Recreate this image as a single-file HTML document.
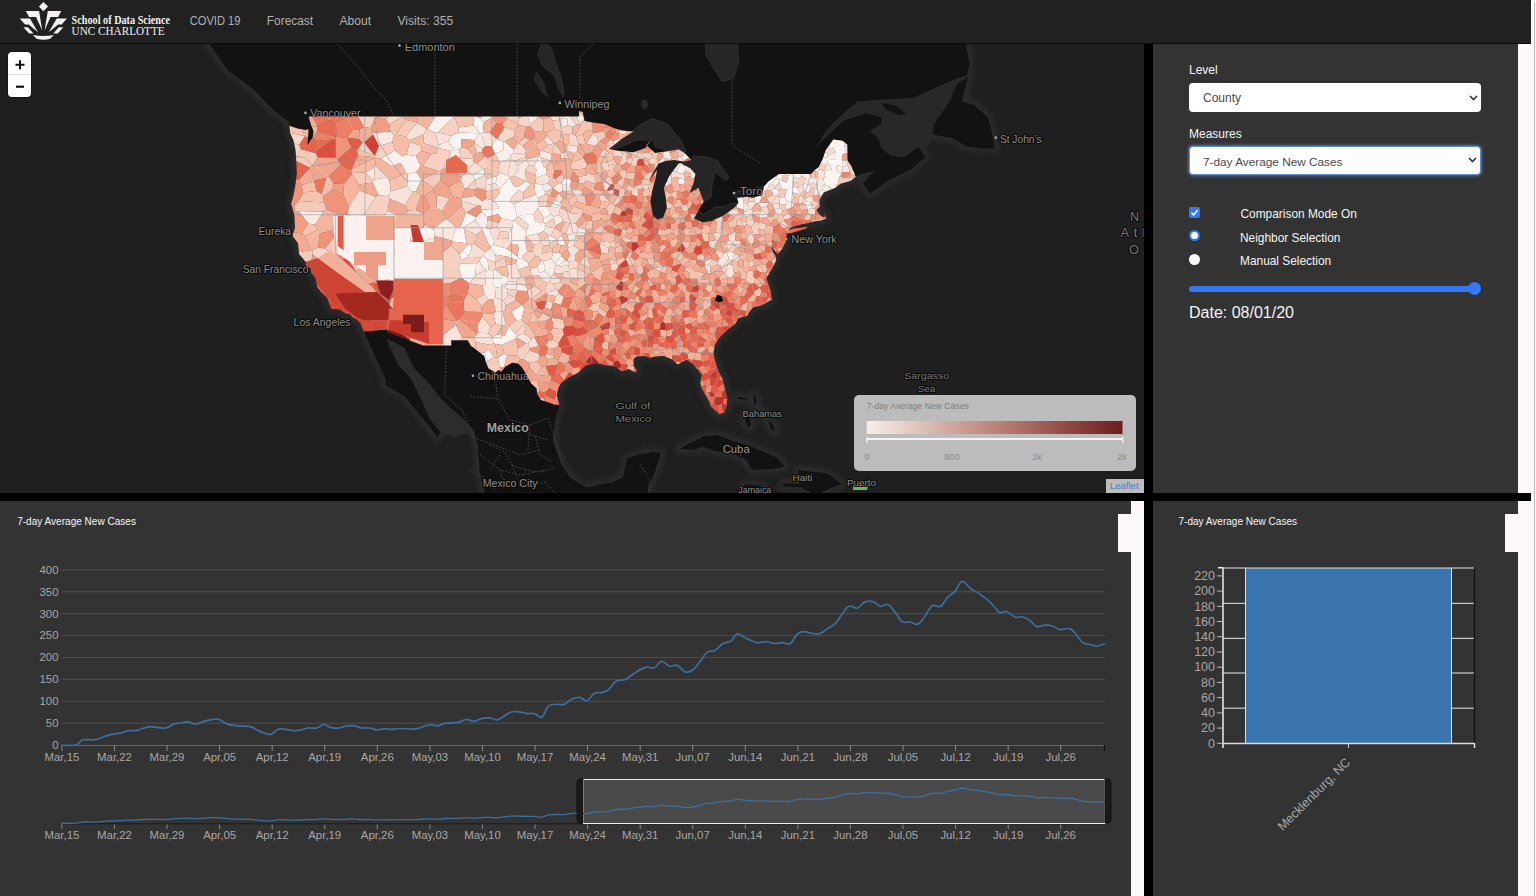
<!DOCTYPE html>
<html><head><meta charset="utf-8">
<style>
html,body{margin:0;padding:0;width:1536px;height:896px;overflow:hidden;background:#fcf8f7;font-family:"Liberation Sans",sans-serif;}
#nav{position:absolute;left:0;top:0;width:1531px;height:43px;background:#212121;border-bottom:1px solid #0d0d0d;}
.nv{position:absolute;top:13px;font-size:12.6px;color:#b3afad;letter-spacing:0.1px;}
.lg1{position:absolute;left:71px;top:12px;font-family:"Liberation Serif",serif;font-size:11.5px;color:#f2eeec;font-weight:bold;letter-spacing:-0.2px;}
.lg2{position:absolute;left:71px;top:23px;font-family:"Liberation Serif",serif;font-size:12px;color:#f2eeec;letter-spacing:-0.3px;}
#map{position:absolute;left:0;top:44px;width:1144px;height:449px;overflow:hidden;background:#1f1f1f;}
#vbar{position:absolute;left:1144px;top:44px;width:9px;height:852px;background:#000;}
#hbar{position:absolute;left:0;top:493px;width:1531px;height:8px;background:#000;}
#rp{position:absolute;left:1153px;top:44px;width:365px;height:449px;background:#333;}
#bl{position:absolute;left:0;top:501px;width:1131px;height:395px;background:#333;}
#br{position:absolute;left:1153px;top:501px;width:365px;height:395px;background:#333;}
.ws{position:absolute;background:#fcf8f7;}
.lbl{position:absolute;color:#f5f5f5;font-size:12px;}
.sel{position:absolute;left:1189px;width:292px;height:29px;background:#fff;border-radius:4px;box-sizing:border-box;}
.sel span{position:absolute;left:14px;top:8px;font-size:12.5px;color:#4a4a4a;}
.chev{position:absolute;right:3px;top:11.5px;}
.ctl{position:absolute;color:#f5f5f5;font-size:11.9px;}
.tk{font-family:"Liberation Sans",sans-serif;font-size:11.4px;fill:#aaa6a4;}
.tkb{font-family:"Liberation Sans",sans-serif;font-size:12.5px;fill:#aaa6a4;}
.ct{position:absolute;color:#f5f5f5;font-size:10.5px;}
</style></head><body>
<div id="nav">
<svg width="480" height="43" style="position:absolute;left:0;top:0">
<g fill="#f4f0ee">
<path d="M43.4,2.1 L48.05,6.6 L43.4,11.25 L38.9,6.6 Z"/>
<path d="M25.8,11 L39.1,11 L42.2,30.5 L36.1,16.9 L29.1,16.9 Z"/>
<path d="M61.2,11 L47.8,11 L44.5,30.5 L50.6,16.9 L58.1,16.9 Z"/>
<path d="M19.7,18.5 L30,18.5 L38,32.35 L28.6,24.4 L25.1,24.4 Z"/>
<path d="M67,18.5 L56.7,18.5 L48.75,32.35 L58.1,24.4 L61.6,24.4 Z"/>
<path d="M23.4,27.2 L27.9,27.2 L33.5,33.5 L29.1,33.5 Z"/>
<path d="M63.3,27.2 L58.8,27.2 L53.2,33.5 L57.7,33.5 Z"/>
<path d="M32.8,34.9 Q43.4,37.2 53.9,34.9 L50.2,38.7 Q43.4,40.6 36.6,38.7 Z"/>
</g>
<g font-family="Liberation Serif, serif" fill="#f4f0ee">
<text x="71.6" y="24" font-size="11.6" font-weight="bold" textLength="98.4" lengthAdjust="spacingAndGlyphs">School of Data Science</text>
<text x="71.6" y="35" font-size="11.8" textLength="93" lengthAdjust="spacingAndGlyphs">UNC CHARLOTTE</text>
</g>
<g font-family="Liberation Sans, sans-serif" fill="#b4b0ae" font-size="12.6">
<text x="189.8" y="25" textLength="50.6" lengthAdjust="spacingAndGlyphs">COVID 19</text>
<text x="266.8" y="25" textLength="46.3" lengthAdjust="spacingAndGlyphs">Forecast</text>
<text x="339.5" y="25" textLength="31.5" lengthAdjust="spacingAndGlyphs">About</text>
<text x="397.5" y="25" textLength="55.7" lengthAdjust="spacingAndGlyphs">Visits: 355</text>
</g>
</svg>
</div>
<div id="map"><svg width="1144" height="449" viewBox="0 44 1144 449" style="position:absolute;left:0;top:0"><rect x="0" y="44" width="1144" height="449" fill="#1f1f1f"/>
<defs><filter id="hb" x="-5%" y="-5%" width="110%" height="110%"><feGaussianBlur stdDeviation="2.5"/></filter></defs>
<g fill="none" stroke="#2c2c2c" stroke-width="9" stroke-linejoin="round" filter="url(#hb)">
<polygon points="207.3,41.1 705.2,41.1 960.9,41.1 965.4,40.0 969.7,65.0 967.0,75.3 951.5,80.6 932.3,91.0 913.2,98.0 878.3,99.7 857.5,101.5 843.5,113.6 826.0,131.0 817.4,145.0 808.7,155.4 821.0,141.5 843.5,120.6 866.0,113.6 881.8,117.0 881.8,124.0 869.6,131.0 878.3,138.0 881.8,148.5 890.5,155.4 904.5,157.2 918.4,146.7 925.3,157.2 911.4,169.3 887.0,181.5 869.6,193.7 862.7,183.3 874.9,171.0 859.2,174.6 855.6,176.9 850.2,181.0 840.4,183.8 835.5,187.8 823.7,192.6 819.3,200.0 819.8,206.7 816.4,210.0 820.3,215.3 824.7,217.9 824.2,214.0 826.2,218.6 821.3,220.6 814.9,221.2 807.6,223.2 801.2,224.5 790.4,227.7 786.5,232.9 786.5,234.9 786.0,241.3 782.1,248.9 777.7,254.2 773.8,249.5 771.3,245.7 772.8,252.1 775.9,256.1 776.2,260.2 773.3,266.5 767.2,277.0 766.9,278.2 766.9,279.4 768.4,284.3 770.8,291.6 771.8,299.4 766.9,302.4 760.0,306.0 753.2,307.2 749.3,312.0 747.3,316.1 738.5,317.9 735.5,323.7 728.7,329.0 722.8,334.2 719.4,337.7 715.0,344.6 713.5,352.6 715.0,360.6 718.4,370.7 722.3,378.0 724.8,388.5 727.4,397.3 726.4,407.2 724.3,412.6 718.9,414.2 716.4,412.0 711.0,406.6 708.6,400.1 705.6,395.1 701.7,388.5 700.3,383.0 701.7,375.2 697.8,370.1 692.9,364.0 686.5,360.0 682.6,361.7 677.7,364.5 672.3,359.4 664.0,356.0 655.2,356.6 649.3,357.7 644.4,356.0 636.6,356.6 633.6,358.9 633.6,366.2 637.0,370.1 635.6,372.4 628.7,369.0 621.9,371.3 614.0,366.2 607.2,365.6 597.4,363.4 592.0,364.0 585.6,365.6 582.7,368.5 577.8,372.9 568.9,377.4 561.1,383.0 558.6,387.4 556.7,395.1 558.2,400.6 559.6,405.5 556.2,415.8 554.2,426.6 553.3,442.6 557.2,453.2 561.1,463.7 569.9,477.2 580.7,484.5 586.6,487.6 604.2,483.4 612.1,482.4 622.8,477.2 624.8,468.9 626.8,458.4 639.5,454.2 654.2,452.1 661.1,453.2 658.1,462.6 654.2,474.1 649.3,484.5 647.3,499.9 647.3,505.0 521.9,505.0 486.0,497.0 479.8,473.2 477.9,445.7 473.8,430.8 461.8,417.4 443.0,401.3 429.6,383.9 413.6,367.8 404.2,347.8 386.8,338.4 389.5,346.4 398.8,365.2 410.9,378.6 421.6,400.0 429.6,418.7 440.3,432.1 437.7,437.5 429.6,426.8 416.2,410.7 404.2,396.0 385.4,385.2 385.4,378.6 374.7,355.8 364.0,331.7 363.9,331.6 362.6,329.6 361.2,323.7 356.3,319.0 352.4,317.3 350.4,314.3 346.0,313.7 339.6,309.6 331.3,309.0 329.3,303.6 326.9,297.6 322.0,292.8 317.1,286.8 316.6,283.1 316.1,278.8 311.2,272.0 311.0,268.3 306.3,265.8 305.8,262.1 299.1,254.0 298.0,243.2 293.1,236.8 292.6,234.9 295.0,227.7 294.5,217.9 294.3,214.7 291.1,203.4 293.1,196.7 295.0,187.8 296.8,174.1 296.0,156.6 295.5,150.2 293.6,140.8 290.1,132.8 289.4,125.8 289.6,122.5 272.0,109.1 253.4,89.2 227.9,70.4 207.3,41.1"/>
<polygon points="679.2,449.0 688.5,443.7 704.2,436.2 717.9,435.2 731.6,440.5 749.3,445.8 766.9,453.2 776.7,457.4 785.0,466.8 771.8,468.9 752.2,469.9 747.3,461.6 732.6,453.2 715.0,451.1 703.2,446.8 692.4,450.0"/>
<polygon points="798.3,469.9 815.9,472.0 826.7,473.1 835.5,479.3 841.9,484.5 832.6,487.6 815.9,494.8 801.2,487.6 782.6,486.5 783.6,482.9 799.2,483.9"/>
<polygon points="743.9,484.5 757.1,485.0 764.9,489.6 755.1,490.7 744.4,487.6"/>
<polygon points="745.3,414.8 749.3,416.9 751.2,424.5 748.3,427.7 745.3,421.2"/>
<polygon points="737.5,396.8 748.3,398.4 746.3,399.5 737.5,399.0"/>
<polygon points="754.2,394.0 757.1,400.6 755.1,406.1 753.2,399.5"/>
<polygon points="760.0,410.4 765.9,413.7 764.9,418.0 762.0,414.8"/>
<polygon points="767.9,420.2 773.8,425.5 774.7,432.0 770.8,428.7"/>
<polygon points="968.0,77.0 962.0,101.5 974.0,105.0 988.0,117.0 991.5,131.0 995.0,148.5 982.8,148.5 967.0,146.7 951.5,138.0 932.3,134.5 934.0,124.0 949.7,101.5 956.7,84.0"/>
</g>
<g fill="#121212">
<polygon points="207.3,41.1 705.2,41.1 960.9,41.1 965.4,40.0 969.7,65.0 967.0,75.3 951.5,80.6 932.3,91.0 913.2,98.0 878.3,99.7 857.5,101.5 843.5,113.6 826.0,131.0 817.4,145.0 808.7,155.4 821.0,141.5 843.5,120.6 866.0,113.6 881.8,117.0 881.8,124.0 869.6,131.0 878.3,138.0 881.8,148.5 890.5,155.4 904.5,157.2 918.4,146.7 925.3,157.2 911.4,169.3 887.0,181.5 869.6,193.7 862.7,183.3 874.9,171.0 859.2,174.6 855.6,176.9 850.2,181.0 840.4,183.8 835.5,187.8 823.7,192.6 819.3,200.0 819.8,206.7 816.4,210.0 820.3,215.3 824.7,217.9 824.2,214.0 826.2,218.6 821.3,220.6 814.9,221.2 807.6,223.2 801.2,224.5 790.4,227.7 786.5,232.9 786.5,234.9 786.0,241.3 782.1,248.9 777.7,254.2 773.8,249.5 771.3,245.7 772.8,252.1 775.9,256.1 776.2,260.2 773.3,266.5 767.2,277.0 766.9,278.2 766.9,279.4 768.4,284.3 770.8,291.6 771.8,299.4 766.9,302.4 760.0,306.0 753.2,307.2 749.3,312.0 747.3,316.1 738.5,317.9 735.5,323.7 728.7,329.0 722.8,334.2 719.4,337.7 715.0,344.6 713.5,352.6 715.0,360.6 718.4,370.7 722.3,378.0 724.8,388.5 727.4,397.3 726.4,407.2 724.3,412.6 718.9,414.2 716.4,412.0 711.0,406.6 708.6,400.1 705.6,395.1 701.7,388.5 700.3,383.0 701.7,375.2 697.8,370.1 692.9,364.0 686.5,360.0 682.6,361.7 677.7,364.5 672.3,359.4 664.0,356.0 655.2,356.6 649.3,357.7 644.4,356.0 636.6,356.6 633.6,358.9 633.6,366.2 637.0,370.1 635.6,372.4 628.7,369.0 621.9,371.3 614.0,366.2 607.2,365.6 597.4,363.4 592.0,364.0 585.6,365.6 582.7,368.5 577.8,372.9 568.9,377.4 561.1,383.0 558.6,387.4 556.7,395.1 558.2,400.6 559.6,405.5 556.2,415.8 554.2,426.6 553.3,442.6 557.2,453.2 561.1,463.7 569.9,477.2 580.7,484.5 586.6,487.6 604.2,483.4 612.1,482.4 622.8,477.2 624.8,468.9 626.8,458.4 639.5,454.2 654.2,452.1 661.1,453.2 658.1,462.6 654.2,474.1 649.3,484.5 647.3,499.9 647.3,505.0 521.9,505.0 486.0,497.0 479.8,473.2 477.9,445.7 473.8,430.8 461.8,417.4 443.0,401.3 429.6,383.9 413.6,367.8 404.2,347.8 386.8,338.4 389.5,346.4 398.8,365.2 410.9,378.6 421.6,400.0 429.6,418.7 440.3,432.1 437.7,437.5 429.6,426.8 416.2,410.7 404.2,396.0 385.4,385.2 385.4,378.6 374.7,355.8 364.0,331.7 363.9,331.6 362.6,329.6 361.2,323.7 356.3,319.0 352.4,317.3 350.4,314.3 346.0,313.7 339.6,309.6 331.3,309.0 329.3,303.6 326.9,297.6 322.0,292.8 317.1,286.8 316.6,283.1 316.1,278.8 311.2,272.0 311.0,268.3 306.3,265.8 305.8,262.1 299.1,254.0 298.0,243.2 293.1,236.8 292.6,234.9 295.0,227.7 294.5,217.9 294.3,214.7 291.1,203.4 293.1,196.7 295.0,187.8 296.8,174.1 296.0,156.6 295.5,150.2 293.6,140.8 290.1,132.8 289.4,125.8 289.6,122.5 272.0,109.1 253.4,89.2 227.9,70.4 207.3,41.1"/>
<polygon points="679.2,449.0 688.5,443.7 704.2,436.2 717.9,435.2 731.6,440.5 749.3,445.8 766.9,453.2 776.7,457.4 785.0,466.8 771.8,468.9 752.2,469.9 747.3,461.6 732.6,453.2 715.0,451.1 703.2,446.8 692.4,450.0"/>
<polygon points="798.3,469.9 815.9,472.0 826.7,473.1 835.5,479.3 841.9,484.5 832.6,487.6 815.9,494.8 801.2,487.6 782.6,486.5 783.6,482.9 799.2,483.9"/>
<polygon points="743.9,484.5 757.1,485.0 764.9,489.6 755.1,490.7 744.4,487.6"/>
<polygon points="745.3,414.8 749.3,416.9 751.2,424.5 748.3,427.7 745.3,421.2"/>
<polygon points="737.5,396.8 748.3,398.4 746.3,399.5 737.5,399.0"/>
<polygon points="754.2,394.0 757.1,400.6 755.1,406.1 753.2,399.5"/>
<polygon points="760.0,410.4 765.9,413.7 764.9,418.0 762.0,414.8"/>
<polygon points="767.9,420.2 773.8,425.5 774.7,432.0 770.8,428.7"/>
</g>
<polygon points="857.5,101.5 913.2,98.0 951.5,80.6 956.7,84.0 949.7,101.5 934.0,124.0 932.3,134.5 925.3,157.2 918.4,146.7 904.5,157.2 890.5,155.4 881.8,148.5 878.3,138.0 869.6,131.0 881.8,124.0 881.8,117.0 866.0,113.6 843.5,120.6 821.0,141.5 808.7,155.4 817.4,145.0 826.0,131.0 843.5,113.6" fill="#282828"/>
<polygon points="473.8,430.8 461.8,417.4 443.0,401.3 429.6,383.9 413.6,367.8 404.2,347.8 386.8,338.4 389.5,346.4 398.8,365.2 410.9,378.6 421.6,400.0 429.6,418.7 440.3,432.1 455.0,437.0" fill="#2c2c2c"/>
<g fill="none" stroke="#4a4a4a" stroke-width="1" stroke-dasharray="1.6 1.8">
<path d="M337.5,44 L352,60 L372,85 L386,100 L394,116"/>
<path d="M435,44 V117"/>
<path d="M517,44 V117"/>
<path d="M593,44 L580,57 V104"/>
<path d="M732,81 V145 L742,152 L760,163"/>
<path d="M446.4,347.5 L444.5,394.7 L462,410 L474,438"/>
<path d="M470,396.6 L497.5,398.6 L495.6,381"/>
<path d="M497.5,398.6 L510,420 L530,425 L548,418"/>
<path d="M474,438 L495,445 L520,455 L540,450"/>
<path d="M480,455 L500,470 L520,475 L545,470"/>
<path d="M500,470 L505,490"/>
<path d="M530,425 L528,450"/>
<path d="M640,465 L650,480 L648,493"/>
<path d="M740,455 L748,462"/>
<path d="M520,430 L535,436 L548,440"/>
<path d="M490,445 L505,452 L512,465 L525,470"/>
<path d="M512,465 L518,480 L530,486 L545,482"/>
<path d="M535,436 L540,455 L552,462"/>
<path d="M470,470 L485,478 L495,490"/>
<path d="M525,470 L540,472 L555,468"/>
<path d="M545,482 L555,493"/>
<path d="M500,455 L490,470"/>
<path d="M548,418 L555,440 L560,455"/>
</g>
<polygon points="968.0,77.0 962.0,101.5 974.0,105.0 988.0,117.0 991.5,131.0 995.0,148.5 982.8,148.5 967.0,146.7 951.5,138.0 932.3,134.5 934.0,124.0 949.7,101.5 956.7,84.0" fill="#121212"/>
<polygon points="881.8,103.0 896.0,106.0 906.2,114.0 900.0,115.4 885.0,109.0" fill="#121212"/>
<polygon points="853.1,484.5 868.8,485.0 866.9,490.1 853.1,490.1" fill="#66bb55"/>
<g fill="#262626" stroke="#303030" stroke-width="1">
<polygon points="705.2,41.1 706.1,55.9 715.0,70.4 721.8,81.4 733.6,78.3 738.5,62.3 737.5,41.1"/>
<polygon points="542.5,41.1 551.3,47.7 555.2,62.3 561.1,76.7 564.0,92.3 563.1,96.9 559.1,89.2 554.2,75.1 542.5,65.6 537.6,54.3"/>
<polygon points="536.6,71.9 543.5,83.0 547.4,96.9 542.5,92.3 534.6,79.8"/>
<polygon points="691.4,160.1 693.4,155.9 708.1,157.3 717.9,160.8 721.8,167.1 728.7,176.9 725.7,181.0 715.0,171.3 714.0,176.9 712.0,185.1 711.0,197.3 703.7,201.4 698.3,187.8 689.5,193.3 693.4,183.8 695.4,174.1 690.5,168.5 681.1,163.2 684.6,161.5"/>
<polygon points="610.7,149.0 639.0,125.7 651.8,118.6 667.9,124.0 682.0,141.8 685.7,151.6 678.6,153.4 655.4,147.0 653.6,140.0 635.7,140.0 621.4,147.0"/>
</g>
<g fill="#1f1f1f" stroke="#333" stroke-width="1">
<polygon points="666.0,160.8 673.8,160.1 684.6,161.5 681.1,163.2 678.7,163.6 672.8,171.3 668.9,176.9 664.0,187.8 666.0,198.7 666.9,208.0 663.0,217.9 657.1,219.6 652.7,214.7 650.3,201.4 652.2,190.6 655.2,179.6 657.1,169.9 649.3,181.0 653.2,172.7 658.5,163.6"/>
<polygon points="698.3,210.7 703.2,214.7 715.0,207.4 724.8,206.7 732.6,203.4 738.5,202.7 735.5,206.7 727.7,212.7 722.8,216.0 711.0,221.2 702.2,222.5 693.9,218.6"/>
<polygon points="737.0,197.9 732.6,193.3 740.4,190.6 752.2,188.5 764.0,186.5 762.0,195.3 752.2,198.0 747.3,196.7"/>
</g>
<ellipse cx="644.5" cy="104.5" rx="3.5" ry="5" fill="#2a2a2a"/>
<g font-family="Liberation Sans, sans-serif">
<text x="404.8" y="50.5" textLength="50" lengthAdjust="spacingAndGlyphs" font-size="10.5" font-weight="normal" fill="#8e8e8e" stroke="#0a0a0a" stroke-width="2.2" paint-order="stroke" stroke-linejoin="round">Edmonton</text>
<text x="310.2" y="116.5" textLength="50.4" lengthAdjust="spacingAndGlyphs" font-size="10.5" font-weight="normal" fill="#8e8e8e" stroke="#0a0a0a" stroke-width="2.2" paint-order="stroke" stroke-linejoin="round">Vancouver</text>
<text x="564.6" y="108" textLength="45" lengthAdjust="spacingAndGlyphs" font-size="10.5" font-weight="normal" fill="#8e8e8e" stroke="#0a0a0a" stroke-width="2.2" paint-order="stroke" stroke-linejoin="round">Winnipeg</text>
<text x="999.9" y="143.2" textLength="41.8" lengthAdjust="spacingAndGlyphs" font-size="10.5" font-weight="normal" fill="#8e8e8e" stroke="#0a0a0a" stroke-width="2.2" paint-order="stroke" stroke-linejoin="round">St John’s</text>
<text x="740" y="195" textLength="39" lengthAdjust="spacingAndGlyphs" font-size="10.5" font-weight="normal" fill="#8e8e8e" stroke="#0a0a0a" stroke-width="2.2" paint-order="stroke" stroke-linejoin="round">Toronto</text>
<text x="791.6" y="242.7" textLength="45" lengthAdjust="spacingAndGlyphs" font-size="10.5" font-weight="normal" fill="#8e8e8e" stroke="#0a0a0a" stroke-width="2.2" paint-order="stroke" stroke-linejoin="round">New York</text>
<text x="258.5" y="235.1" textLength="32.5" lengthAdjust="spacingAndGlyphs" font-size="10.5" font-weight="normal" fill="#8e8e8e" stroke="#0a0a0a" stroke-width="2.2" paint-order="stroke" stroke-linejoin="round">Eureka</text>
<text x="242.7" y="273.3" textLength="65.7" lengthAdjust="spacingAndGlyphs" font-size="10.5" font-weight="normal" fill="#8e8e8e" stroke="#0a0a0a" stroke-width="2.2" paint-order="stroke" stroke-linejoin="round">San Francisco</text>
<text x="293.6" y="326.2" textLength="57" lengthAdjust="spacingAndGlyphs" font-size="10.5" font-weight="normal" fill="#8e8e8e" stroke="#0a0a0a" stroke-width="2.2" paint-order="stroke" stroke-linejoin="round">Los Angeles</text>
<text x="477.5" y="379.6" textLength="51" lengthAdjust="spacingAndGlyphs" font-size="10.5" font-weight="normal" fill="#8e8e8e" stroke="#0a0a0a" stroke-width="2.2" paint-order="stroke" stroke-linejoin="round">Chihuahua</text>
<text x="486.8" y="432" textLength="42" lengthAdjust="spacingAndGlyphs" font-size="12" font-weight="bold" fill="#a0a0a0" stroke="#0a0a0a" stroke-width="2.2" paint-order="stroke" stroke-linejoin="round">Mexico</text>
<text x="482.7" y="487.3" textLength="55" lengthAdjust="spacingAndGlyphs" font-size="10.5" font-weight="normal" fill="#8e8e8e" stroke="#0a0a0a" stroke-width="2.2" paint-order="stroke" stroke-linejoin="round">Mexico City</text>
<text x="615.4" y="408.75" textLength="35" lengthAdjust="spacingAndGlyphs" font-size="9.5" font-weight="normal" fill="#7a7a7a" stroke="#0a0a0a" stroke-width="2.2" paint-order="stroke" stroke-linejoin="round">Gulf of</text>
<text x="615.4" y="421.7" textLength="36" lengthAdjust="spacingAndGlyphs" font-size="9.5" font-weight="normal" fill="#7a7a7a" stroke="#0a0a0a" stroke-width="2.2" paint-order="stroke" stroke-linejoin="round">Mexico</text>
<text x="742.5" y="417.1" textLength="39.5" lengthAdjust="spacingAndGlyphs" font-size="9.5" font-weight="normal" fill="#8e8e8e" stroke="#0a0a0a" stroke-width="2.2" paint-order="stroke" stroke-linejoin="round">Bahamas</text>
<text x="722.7" y="452.9" textLength="27" lengthAdjust="spacingAndGlyphs" font-size="11" font-weight="normal" fill="#9a9a9a" stroke="#0a0a0a" stroke-width="2.2" paint-order="stroke" stroke-linejoin="round">Cuba</text>
<text x="792.5" y="481" textLength="20" lengthAdjust="spacingAndGlyphs" font-size="9.5" font-weight="normal" fill="#8e8e8e" stroke="#0a0a0a" stroke-width="2.2" paint-order="stroke" stroke-linejoin="round">Haiti</text>
<text x="738.3" y="492.5" textLength="33" lengthAdjust="spacingAndGlyphs" font-size="9.5" font-weight="normal" fill="#8e8e8e" stroke="#0a0a0a" stroke-width="2.2" paint-order="stroke" stroke-linejoin="round">Jamaica</text>
<text x="847" y="485.8" textLength="29" lengthAdjust="spacingAndGlyphs" font-size="9.5" font-weight="normal" fill="#8e8e8e" stroke="#0a0a0a" stroke-width="2.2" paint-order="stroke" stroke-linejoin="round">Puerto</text>
<text x="904.2" y="378.6" textLength="45" lengthAdjust="spacingAndGlyphs" font-size="9.5" font-weight="normal" fill="#7a7a7a" stroke="#0a0a0a" stroke-width="2.2" paint-order="stroke" stroke-linejoin="round">Sargasso</text>
<text x="917.7" y="391.7" textLength="17.6" lengthAdjust="spacingAndGlyphs" font-size="9.5" font-weight="normal" fill="#7a7a7a" stroke="#0a0a0a" stroke-width="2.2" paint-order="stroke" stroke-linejoin="round">Sea</text>
<text x="1130" y="220.6" textLength="9" lengthAdjust="spacingAndGlyphs" font-size="12" font-weight="normal" fill="#7a7a7a" stroke="#0a0a0a" stroke-width="2.2" paint-order="stroke" stroke-linejoin="round">N</text>
<text x="1120.5" y="237.3" textLength="8.5" lengthAdjust="spacingAndGlyphs" font-size="12" font-weight="normal" fill="#7a7a7a" stroke="#0a0a0a" stroke-width="2.2" paint-order="stroke" stroke-linejoin="round">A</text>
<text x="1133.5" y="237.3" textLength="4" lengthAdjust="spacingAndGlyphs" font-size="12" font-weight="normal" fill="#7a7a7a" stroke="#0a0a0a" stroke-width="2.2" paint-order="stroke" stroke-linejoin="round">t</text>
<text x="1142" y="237.3" textLength="2" lengthAdjust="spacingAndGlyphs" font-size="12" font-weight="normal" fill="#7a7a7a" stroke="#0a0a0a" stroke-width="2.2" paint-order="stroke" stroke-linejoin="round">l</text>
<text x="1129" y="253.7" textLength="10" lengthAdjust="spacingAndGlyphs" font-size="12" font-weight="normal" fill="#7a7a7a" stroke="#0a0a0a" stroke-width="2.2" paint-order="stroke" stroke-linejoin="round">O</text>
<circle cx="399.5" cy="45.6" r="1.3" fill="#aaa"/>
<circle cx="305.5" cy="112.9" r="1.3" fill="#aaa"/>
<circle cx="559.8" cy="102.9" r="1.3" fill="#aaa"/>
<circle cx="995.9" cy="137.6" r="1.3" fill="#aaa"/>
<circle cx="472.9" cy="375.7" r="1.3" fill="#aaa"/>
<circle cx="734" cy="193" r="1.3" fill="#aaa"/>
<circle cx="786" cy="239" r="1.3" fill="#aaa"/>
</g>
<defs><clipPath id="usclip">
<polygon points="308.7,116.6 579.2,116.6 579.2,110.9 582.7,112.1 584.6,121.1 592.5,122.5 604.2,124.0 615.0,128.4 621.9,130.6 633.6,131.4 621.9,138.7 609.1,149.0 619.9,150.9 625.8,151.6 633.6,152.3 645.4,148.0 651.3,139.4 646.4,145.2 655.2,153.0 668.9,150.9 678.7,149.5 684.6,153.0 691.4,160.1 684.6,161.5 673.8,160.1 666.0,160.8 658.5,163.6 653.2,172.7 649.3,181.0 657.1,169.9 655.2,179.6 652.2,190.6 650.3,201.4 652.7,214.7 657.1,219.6 663.0,217.9 666.9,208.0 666.0,198.7 664.0,187.8 668.9,176.9 672.8,171.3 678.7,163.6 681.1,163.2 690.5,168.5 695.4,174.1 693.4,183.8 689.5,193.3 698.3,187.8 703.7,201.4 698.3,210.7 693.9,218.6 702.2,222.5 711.0,221.2 722.8,216.0 727.7,212.7 735.5,206.7 738.5,202.7 737.0,197.9 747.3,196.7 752.2,198.0 762.0,195.3 764.0,186.5 768.9,181.0 779.1,174.1 811.0,174.1 814.9,169.9 818.8,167.1 822.8,158.7 825.7,150.2 833.3,139.4 842.4,140.8 847.3,144.5 847.5,160.8 851.2,165.7 854.1,172.7 855.6,176.9 850.2,181.0 840.4,183.8 835.5,187.8 823.7,192.6 819.3,200.0 819.8,206.7 816.4,210.0 820.3,215.3 824.7,217.9 824.2,214.0 826.2,218.6 821.3,220.6 814.9,221.2 807.6,223.2 801.2,224.5 790.4,227.7 786.5,232.9 786.5,234.9 786.0,241.3 782.1,248.9 777.7,254.2 773.8,249.5 771.3,245.7 772.8,252.1 775.9,256.1 776.2,260.2 773.3,266.5 767.2,277.0 766.9,278.2 766.9,279.4 768.4,284.3 770.8,291.6 771.8,299.4 766.9,302.4 760.0,306.0 753.2,307.2 749.3,312.0 747.3,316.1 738.5,317.9 735.5,323.7 728.7,329.0 722.8,334.2 719.4,337.7 715.0,344.6 713.5,352.6 715.0,360.6 718.4,370.7 722.3,378.0 724.8,388.5 727.4,397.3 726.4,407.2 724.3,412.6 718.9,414.2 716.4,412.0 711.0,406.6 708.6,400.1 705.6,395.1 701.7,388.5 700.3,383.0 701.7,375.2 697.8,370.1 692.9,364.0 686.5,360.0 682.6,361.7 677.7,364.5 672.3,359.4 664.0,356.0 655.2,356.6 649.3,357.7 644.4,356.0 636.6,356.6 633.6,358.9 633.6,366.2 637.0,370.1 635.6,372.4 628.7,369.0 621.9,371.3 614.0,366.2 607.2,365.6 597.4,363.4 592.0,364.0 585.6,365.6 582.7,368.5 577.8,372.9 568.9,377.4 561.1,383.0 558.6,387.4 556.7,395.1 558.2,400.6 559.6,405.5 554.2,404.4 549.3,402.8 541.0,400.1 537.1,394.0 536.6,388.5 530.7,383.0 526.8,375.2 521.9,367.3 518.0,363.4 512.1,362.8 505.2,366.8 501.3,371.8 498.4,370.1 495.4,372.4 488.6,368.5 486.6,364.0 484.2,356.0 477.8,350.9 470.9,345.8 467.7,340.2 451.2,340.2 451.2,345.4 423.2,345.4 386.6,332.0 387.4,329.3 363.9,331.6 362.6,329.6 361.2,323.7 356.3,319.0 352.4,317.3 350.4,314.3 346.0,313.7 339.6,309.6 331.3,309.0 329.3,303.6 326.9,297.6 322.0,292.8 317.1,286.8 316.6,283.1 316.1,278.8 311.2,272.0 311.0,268.3 306.3,265.8 305.8,262.1 299.1,254.0 298.0,243.2 293.1,236.8 292.6,234.9 295.0,227.7 294.5,217.9 294.3,214.7 291.1,203.4 293.1,196.7 295.0,187.8 296.8,174.1 296.0,156.6 295.5,150.2 293.6,140.8 290.1,132.8 289.4,125.8 297.5,128.4 305.3,129.9 308.7,129.2 307.3,145.2 312.7,137.2 313.6,131.4 310.7,124.0"/>
<polygon points="786.5,233.3 791.4,232.9 798.3,231.0 806.1,228.4 807.6,226.4 801.2,227.7 793.4,228.4 788.5,230.3"/>
</clipPath></defs>
<g clip-path="url(#usclip)">
<path fill="#fcf4f1" stroke="#fff" stroke-opacity="0.22" stroke-width="0.5" d="M785.6 105.3L789.7 109.8L792.1 109.5L794.8 106.4L791.5 100.0L785.3 100.0zM798.4 106.5L800.7 108.1L804.8 106.2L804.8 106.2L805.4 100.0L798.8 100.0zM865.4 106.0L868.6 112.0L878.3 100.0L869.2 100.0zM813.8 115.2L815.7 116.4L818.5 114.1L818.3 107.8L817.7 107.0L812.4 112.3zM822.5 110.5L818.3 107.8L818.5 114.1L822.1 113.2zM839.7 108.7L837.9 109.4L836.5 113.5L840.6 116.9L843.5 113.9zM866.6 115.0L868.5 113.5L868.6 112.0L865.4 106.0L862.0 106.2L861.5 106.8L862.5 114.4zM868.6 112.0L868.5 113.5L880.0 116.9L880.0 100.0L878.3 100.0zM834.0 114.7L829.9 114.9L828.6 116.4L828.9 119.7L835.5 120.7L835.8 120.5zM840.6 116.9L836.5 113.5L834.0 114.7L835.8 120.5L840.2 120.7L841.1 118.7zM481.2 133.1L482.9 132.2L483.8 122.2L480.4 118.1L473.9 116.1L473.8 125.4L479.9 133.2zM789.8 128.8L797.8 126.6L796.7 122.0L791.9 120.5L789.7 122.4L788.5 125.5zM829.5 126.8L833.5 126.4L835.5 120.7L828.9 119.7L828.8 120.3L828.8 126.4zM850.0 127.7L854.0 127.4L854.0 127.4L855.0 121.2L854.4 120.6L847.6 120.5L846.9 124.8zM809.1 132.7L814.5 134.9L814.8 127.1L814.2 126.5L808.4 126.6L808.0 126.8zM843.3 131.1L840.7 126.3L837.4 127.5L837.2 132.6L840.7 134.9zM840.7 126.3L843.3 131.1L847.3 132.0L850.0 127.7L846.9 124.8L840.9 125.9zM848.0 135.0L852.0 136.4L853.3 134.8L854.0 127.4L850.0 127.7L847.3 132.0zM854.0 127.4L854.0 127.4L853.3 134.8L858.1 134.4L859.9 131.1L859.1 129.0zM859.9 131.1L865.6 134.4L865.6 127.5L862.1 126.1L859.1 129.0zM461.3 139.2L475.0 139.9L479.7 133.3L459.1 132.6zM837.2 132.6L833.1 135.4L832.8 139.3L834.7 140.7L838.6 140.3L841.3 137.2L840.7 134.9zM841.3 137.2L845.2 137.7L848.0 135.0L847.3 132.0L843.3 131.1L840.7 134.9zM858.1 134.4L858.8 137.5L862.8 139.8L865.5 139.6L866.3 135.2L865.6 134.4L859.9 131.1zM461.2 147.4L461.3 139.2L459.1 132.6L458.7 132.2L450.9 136.1L448.6 141.0L453.6 149.9L459.1 149.8zM760.0 140.9L760.3 142.4L765.1 144.8L767.9 139.3L765.6 136.3L760.4 140.0zM790.6 141.0L788.8 144.6L790.3 148.6L795.3 148.1L797.2 145.5L794.5 140.5zM815.1 139.3L816.0 142.3L821.8 147.4L824.0 145.3L823.2 138.7L822.4 138.0L815.9 138.0zM824.0 145.3L827.3 145.2L831.6 139.6L828.4 138.5L823.2 138.7zM831.6 139.6L827.3 145.2L830.2 148.0L833.5 148.3L834.7 146.5L834.7 140.7L832.8 139.3zM834.7 140.7L834.7 146.5L840.6 147.4L843.0 145.7L838.6 140.3zM838.6 140.3L843.0 145.7L844.1 145.8L846.5 141.6L845.2 137.7L841.3 137.2zM495.3 154.1L503.3 150.2L503.2 142.1L497.1 138.6L496.3 138.6L491.5 146.3L495.2 154.1zM795.3 148.1L796.4 152.1L798.5 153.8L801.5 154.2L803.0 153.7L804.0 152.3L802.8 146.1L797.2 145.5zM817.6 150.7L813.8 146.6L811.0 147.5L810.4 151.1L814.5 153.3zM834.7 146.5L833.5 148.3L834.9 152.6L835.9 153.3L839.2 152.6L840.6 147.4zM844.1 145.8L843.0 145.7L840.6 147.4L839.2 152.6L842.7 154.3L846.2 152.9L844.6 146.3zM853.2 152.1L860.1 153.8L861.8 152.5L856.3 144.9L854.5 144.8L853.2 146.8L852.8 151.8zM776.8 157.1L776.3 150.6L773.0 150.5L770.5 152.6L770.5 157.1L771.8 158.1L776.4 157.4zM814.5 157.3L814.5 153.3L810.4 151.1L807.4 152.3L811.1 158.7L813.1 158.5zM820.0 158.5L827.2 157.2L827.5 155.4L826.6 153.5L821.3 149.6L820.6 150.1zM839.2 152.6L835.9 153.3L836.0 159.2L836.6 160.0L841.7 159.9L842.7 154.3zM852.2 160.7L854.6 159.3L853.2 152.1L852.8 151.8L848.5 153.8L848.7 157.9zM854.6 159.3L859.2 159.5L859.3 159.4L860.1 153.8L853.2 152.1zM867.7 158.8L865.6 153.0L864.2 151.8L861.8 152.5L860.1 153.8L859.3 159.4L864.5 161.6zM867.7 158.8L880.0 161.2L880.0 152.1L865.6 153.0zM534.0 166.0L536.4 168.9L543.4 166.8L541.3 157.7L539.5 155.7zM771.8 158.1L770.9 164.1L771.0 164.4L774.3 166.3L777.8 164.5L776.4 157.4zM793.3 165.2L796.9 163.2L793.6 159.1L792.9 158.9L787.4 163.2zM813.1 158.5L811.1 158.7L807.7 160.6L807.6 163.9L812.6 165.6L814.3 164.5zM836.6 160.0L836.0 159.2L828.1 159.0L827.6 163.5L830.5 165.5L835.8 163.5zM842.1 160.2L841.7 159.9L836.6 160.0L835.8 163.5L837.0 165.3L842.1 166.2zM670.9 160.6L665.2 165.3L665.6 170.0L671.0 170.9L672.4 162.2zM781.4 170.8L783.4 172.4L788.8 168.9L785.9 163.6L784.5 163.2L782.0 165.2zM807.6 163.9L806.2 165.5L805.5 169.4L809.4 172.4L811.5 171.1L812.6 165.6zM814.3 164.5L812.6 165.6L811.5 171.1L817.2 171.5L819.0 169.3L818.4 165.6zM837.0 165.3L835.8 163.5L830.5 165.5L831.6 170.1L831.7 170.2L832.7 170.3L836.1 169.8zM476.0 179.7L484.6 175.0L484.4 169.2L483.8 169.1L472.4 175.4L474.8 179.5L475.0 179.6zM545.3 167.5L543.4 166.8L536.4 168.9L535.6 175.4L536.2 178.0L546.0 173.8L546.5 169.2zM750.2 170.1L752.3 178.0L754.2 178.7L756.4 176.6L757.3 170.3L755.8 168.9zM765.5 174.5L768.1 180.3L774.1 177.0L770.4 172.9L766.2 172.3zM770.4 172.9L774.1 177.0L776.0 177.5L777.9 171.8L774.8 169.3zM798.7 170.6L791.0 170.4L790.4 175.1L793.3 177.3L794.7 176.7zM801.7 176.1L800.1 170.7L799.1 170.3L798.7 170.6L794.7 176.7L798.9 178.4zM831.7 170.2L831.6 170.1L824.4 170.3L824.0 170.7L825.4 176.9L829.3 177.1zM832.7 170.3L831.7 170.2L829.3 177.1L831.3 178.7L836.6 177.0zM840.7 176.0L841.3 173.3L836.1 169.8L832.7 170.3L836.6 177.0L839.3 176.8zM866.9 173.6L866.8 173.4L859.2 173.4L857.9 176.8L860.1 179.6L866.2 176.7zM421.6 179.8L421.6 179.8L416.4 172.1L407.7 174.1L407.1 186.4L413.1 191.4L415.7 191.5zM570.1 185.0L571.2 181.2L570.4 179.0L564.1 179.1L561.1 183.6L561.9 184.8zM684.5 179.2L678.7 178.4L677.3 182.8L679.4 184.6L683.8 183.7L685.0 182.2zM741.7 181.1L744.8 183.1L748.8 178.3L745.8 175.7L741.3 176.3zM776.0 177.5L774.1 177.0L768.1 180.3L767.9 181.9L769.4 183.6L772.0 184.2L776.3 177.9zM793.3 177.3L790.4 175.1L788.3 175.7L786.7 182.0L792.8 181.7zM824.4 185.1L829.7 186.8L831.8 183.9L831.3 178.7L829.3 177.1L825.4 176.9L823.5 178.2zM837.7 184.5L839.3 176.8L836.6 177.0L831.3 178.7L831.8 183.9L836.7 184.8zM510.0 177.6L499.4 189.3L500.3 191.3L507.5 194.8L512.5 184.5zM523.1 192.4L531.0 183.9L526.1 181.2L525.8 181.2L516.9 187.2L518.5 189.8zM767.1 190.3L769.4 183.6L767.9 181.9L762.7 183.3L761.9 184.0L762.8 189.1L765.8 191.0zM781.6 189.0L785.9 189.3L785.7 182.6L781.0 179.9L779.8 180.1L779.1 182.2zM792.8 181.7L786.7 182.0L785.7 182.6L785.9 189.3L786.7 190.1L791.0 190.3L793.1 187.9L793.4 182.5zM809.2 184.6L804.7 183.7L803.1 184.8L803.9 190.6L808.1 192.4L811.2 188.5zM836.7 184.8L831.8 183.9L829.7 186.8L829.7 186.9L835.0 190.9L836.1 190.8zM516.9 187.2L512.5 184.5L507.5 194.8L509.9 199.6L518.5 189.8zM545.1 194.3L545.0 192.1L541.9 184.9L535.1 183.3L534.4 183.8L535.4 194.8L538.1 198.1zM787.2 200.9L787.9 200.8L792.3 193.0L792.2 192.2L791.0 190.3L786.7 190.1L784.3 197.1zM793.1 187.9L791.0 190.3L792.2 192.2L800.1 194.2L800.4 193.8L797.0 188.0zM827.2 195.3L827.2 193.9L822.1 188.5L819.4 193.0L819.6 194.8L819.7 195.0L827.1 195.3zM510.5 202.2L509.9 199.6L507.5 194.8L500.3 191.3L493.8 200.6L499.0 206.8zM743.0 203.8L744.0 202.9L742.3 197.5L740.8 196.3L736.2 199.5L735.0 202.6L736.7 204.7zM792.4 201.9L794.0 197.5L792.3 193.0L787.9 200.8zM842.5 204.1L846.0 197.2L845.9 197.0L837.9 197.4L837.4 199.9L841.7 204.6zM560.3 202.5L555.3 200.2L550.3 206.2L560.2 208.3L560.5 208.0L561.4 205.4zM743.2 209.6L743.0 203.8L736.7 204.7L736.8 207.4zM804.6 202.9L807.6 209.4L811.1 208.0L811.5 202.8L805.7 201.2zM487.3 217.0L498.3 213.9L498.5 208.7L481.3 209.8L481.3 211.8zM510.5 202.2L499.0 206.8L498.5 208.7L498.3 213.9L501.2 218.4L513.4 220.6L514.0 220.1L517.2 216.4L513.9 204.4zM551.0 214.2L548.3 207.2L546.5 206.5L539.0 206.5L537.9 207.5L537.8 207.9L544.1 218.1zM476.1 217.1L466.6 212.5L465.9 212.4L460.5 227.0L462.7 227.6L475.4 220.1zM528.6 224.9L534.7 223.0L535.4 222.0L533.7 214.7L521.5 215.1L518.2 216.4zM544.8 224.1L542.9 222.2L535.4 222.0L534.7 223.0L537.2 233.4L538.1 233.7L543.6 231.1L545.8 226.8zM386.2 231.8L405.4 234.3L402.4 223.9L401.0 223.7L385.2 228.3zM537.2 233.4L534.7 223.0L528.6 224.9L526.4 231.6L526.4 236.3zM410.1 238.1L411.4 240.4L415.6 243.8L434.1 237.8L434.9 236.0L433.3 228.4L424.5 225.3L423.2 226.0zM460.5 227.0L456.3 227.3L451.5 240.4L451.8 241.6L466.6 243.3L463.8 228.7L462.7 227.6zM549.0 236.3L548.2 237.8L549.9 242.9L556.4 239.5L550.5 235.8zM471.3 245.0L467.8 244.4L459.6 254.1L461.3 260.6L467.6 256.9L471.9 248.8zM504.7 256.2L505.0 255.8L506.9 248.7L493.5 244.6L490.9 246.4L490.4 247.7L495.3 254.5zM505.0 255.8L516.8 260.1L518.1 258.4L517.4 256.5L507.0 248.7L506.9 248.7zM434.9 253.0L421.4 253.1L420.0 256.4L423.4 269.7L429.4 273.6L434.2 273.0L440.8 262.3L438.8 255.8zM480.6 257.4L479.5 261.3L485.5 270.1L486.2 270.3L488.6 269.9L487.6 259.5L483.4 255.7zM528.7 263.2L521.8 258.0L518.1 258.4L516.8 260.1L515.9 263.5L518.6 269.5L528.6 265.7zM555.8 265.4L558.1 265.4L565.3 260.2L561.4 255.7L555.1 263.0zM458.6 266.8L461.2 277.8L469.1 283.3L469.6 283.2L475.2 275.5L476.2 264.0L460.5 263.7zM541.3 260.4L537.0 266.8L540.2 273.0L544.3 270.7L545.2 267.2L542.4 261.1zM423.4 269.7L409.2 272.4L419.8 287.5L429.4 273.6zM408.8 272.2L402.2 276.6L412.6 293.8L419.1 292.1L419.8 287.5L409.2 272.4zM516.1 320.2L521.6 319.8L524.2 308.9L522.9 304.8L522.5 304.7L511.3 311.3zM502.4 345.0L506.1 342.8L504.9 335.6L496.6 334.4L492.3 337.4L493.3 343.0L495.4 343.9zM504.9 335.6L506.1 342.8L506.8 342.8L515.5 338.8L516.4 337.5L516.6 336.6L514.9 333.1L508.9 326.3L508.2 326.3zM484.2 352.6L487.7 360.9L493.6 356.9L488.8 349.2z"/>
<path fill="#fbf0eb" stroke="#fff" stroke-opacity="0.22" stroke-width="0.5" d="M738.1 113.2L742.6 114.1L744.2 112.8L743.1 108.4L740.1 105.8L736.3 110.8zM798.3 113.9L795.2 113.3L790.7 117.5L791.9 120.5L796.7 122.0L799.3 118.8zM454.2 107.7L449.9 100.0L448.3 100.0L438.0 112.5L427.0 128.9L435.5 133.1L438.0 132.3L454.3 116.3zM560.7 119.5L562.1 127.9L567.2 125.0L567.4 119.4L561.8 118.0zM841.1 118.7L840.2 120.7L840.9 125.9L846.9 124.8L847.6 120.5L846.9 119.2zM743.7 125.8L740.9 128.5L741.1 131.3L746.8 133.8L748.3 133.0L749.6 128.4L744.2 125.9zM865.6 134.4L866.3 135.2L874.4 130.8L868.7 126.5L865.6 127.5zM782.5 145.0L784.7 138.7L782.7 137.5L778.7 140.2L779.5 145.9L781.0 146.0zM865.9 140.1L865.5 139.6L862.8 139.8L856.7 144.7L865.6 147.5L865.7 147.3zM503.3 150.2L510.7 155.0L512.9 152.9L513.9 149.5L504.7 141.6L503.2 142.1zM820.6 150.1L821.3 149.6L821.8 147.4L816.0 142.3L813.8 146.6L817.6 150.7zM499.9 163.1L510.5 158.4L510.7 155.0L503.3 150.2L495.3 154.1zM685.4 152.7L681.2 156.8L683.4 161.0L689.5 157.4L686.2 153.0zM763.6 157.2L763.8 150.7L759.4 149.5L755.0 152.0L755.0 153.5L763.0 157.7zM827.2 157.2L828.1 159.0L836.0 159.2L835.9 153.3L834.9 152.6L827.5 155.4zM402.2 156.2L395.0 150.2L381.1 158.8L391.6 166.3L400.6 162.9zM405.9 172.8L407.7 174.1L416.4 172.1L420.7 166.1L416.0 156.2L406.5 154.4L402.2 156.2L400.6 162.9zM758.6 161.6L753.7 155.4L751.8 157.0L753.5 163.1L755.6 164.1L757.9 162.7zM826.5 164.1L827.6 163.5L828.1 159.0L827.2 157.2L820.0 158.5L819.6 158.9L820.0 163.7zM678.5 173.6L683.2 173.7L685.3 171.0L684.8 166.1L682.7 164.8L679.2 165.6L676.5 171.2zM842.9 167.3L842.1 166.2L837.0 165.3L836.1 169.8L841.3 173.3L842.3 172.2zM867.1 172.2L878.8 164.8L864.8 165.9L864.7 166.1zM788.8 168.9L783.4 172.4L784.1 174.5L788.3 175.7L790.4 175.1L791.0 170.4L790.6 169.8zM495.6 183.3L499.3 189.1L499.4 189.3L510.0 177.6L510.0 177.3L507.9 175.6L499.4 172.6L497.1 175.9zM733.3 177.4L730.8 178.7L730.1 184.2L736.3 184.0L736.8 182.5L735.3 179.2zM779.8 180.1L776.3 177.9L772.0 184.2L774.7 186.7L779.1 182.2zM758.2 190.9L754.6 190.4L754.4 190.6L753.7 195.5L754.2 196.2L761.0 197.1zM777.4 196.3L778.3 190.2L774.9 187.9L771.8 190.7L772.9 194.7L776.5 196.6zM857.8 190.4L860.0 195.6L863.5 197.2L864.6 196.7L864.4 189.7zM537.9 207.5L539.0 206.5L538.1 198.1L535.4 194.8L523.8 199.0L523.8 199.0L529.1 204.8zM761.9 197.7L761.0 197.1L754.2 196.2L754.5 201.7L755.9 203.2L758.6 203.5L759.4 202.5zM779.5 203.8L779.8 204.2L785.6 203.9L787.2 200.9L784.3 197.1L780.0 197.5zM523.8 199.0L513.9 204.4L517.2 216.4L518.2 216.4L521.5 215.1L529.1 204.8zM521.5 215.1L533.7 214.7L537.8 207.9L537.9 207.5L529.1 204.8zM401.0 223.7L402.4 223.9L404.5 217.6L387.5 210.9L384.3 216.5zM487.5 219.7L487.3 217.0L481.3 211.8L476.1 217.1L475.4 220.1L482.6 229.7L486.3 228.2zM405.4 216.5L404.5 217.6L402.4 223.9L405.4 234.3L406.9 236.7L410.1 238.1L423.2 226.0zM526.2 236.6L526.4 236.3L526.4 231.6L514.0 220.1L513.4 220.6L512.3 228.5L523.7 237.4L524.7 237.3zM486.3 228.2L482.6 229.7L482.3 230.2L488.8 244.4L490.9 246.4L493.5 244.6L494.5 241.8L489.2 229.1zM510.7 244.1L516.7 244.0L523.7 237.4L512.3 228.5L508.8 232.3L508.5 238.6zM518.8 247.8L527.1 251.0L524.7 237.3L523.7 237.4L516.7 244.0zM517.4 256.5L518.1 258.4L521.8 258.0L527.3 251.3L527.1 251.0L518.8 247.8zM561.4 255.7L561.2 254.2L559.4 253.0L552.8 252.3L551.7 259.1L555.1 263.0zM734.3 254.0L733.2 252.5L727.7 251.5L726.9 252.2L729.0 259.5L731.8 260.3L732.2 260.1zM389.6 266.5L395.8 274.6L399.3 277.1L402.2 276.6L408.8 272.2L408.0 266.1L388.8 259.6zM494.0 270.4L492.7 284.6L493.6 285.1L502.4 275.3L495.3 269.6zM394.7 289.2L399.3 277.1L395.8 274.6L388.5 279.2L389.1 286.0zM502.4 275.3L493.6 285.1L496.1 287.4L505.1 286.6L508.2 281.0L507.4 276.7zM499.4 366.0L500.8 366.9L504.0 367.1L507.2 355.4L504.3 353.6L497.7 357.7zM475.6 377.9L468.8 382.0L476.3 388.5L478.4 387.6zM460.0 393.5L461.0 393.1L461.2 388.7L448.6 377.9L446.8 377.6L448.3 388.7z"/>
<path fill="#fbebe5" stroke="#fff" stroke-opacity="0.22" stroke-width="0.5" d="M558.2 103.6L566.9 109.2L568.7 109.5L569.7 108.7L571.5 100.0L556.4 100.0zM715.5 106.8L719.9 105.7L722.9 100.0L714.0 100.0zM719.9 105.7L723.2 110.0L729.6 106.4L727.9 100.0L722.9 100.0zM736.3 110.8L740.1 105.8L739.5 104.2L730.0 106.8L731.6 110.3zM809.9 107.5L812.0 112.1L812.4 112.3L817.7 107.0L817.6 100.0L816.6 100.0zM861.2 114.6L862.5 114.4L861.5 106.8L857.4 108.1L855.7 112.1L855.8 112.2zM492.3 117.6L492.1 111.9L488.8 109.4L480.4 118.1L483.8 122.2zM580.7 123.6L584.4 118.4L579.5 112.1L575.5 116.1zM745.5 113.4L744.5 112.8L744.2 112.8L742.6 114.1L741.5 119.9L741.7 120.1L748.8 120.0zM695.1 121.2L690.1 120.4L688.0 126.9L688.7 127.5L696.8 127.1zM808.0 126.8L808.4 126.6L808.4 120.8L808.0 119.1L805.6 117.8L802.0 119.0L805.9 127.0zM868.3 121.8L868.7 126.5L874.4 130.8L880.0 130.7L880.0 121.6zM459.1 132.6L479.7 133.3L479.9 133.2L473.8 125.4L458.4 127.6L458.7 132.2zM696.8 127.1L688.7 127.5L689.2 133.0L689.6 133.4L694.7 135.1L697.2 132.7L697.0 127.2zM853.3 134.8L852.0 136.4L853.3 139.9L858.8 137.5L858.1 134.4zM451.5 150.9L453.6 149.9L448.6 141.0L438.6 145.0L438.1 147.9L438.1 148.0zM620.6 144.4L622.3 146.4L627.2 146.8L629.0 143.3L628.7 142.1L626.1 138.7L621.1 141.5zM704.7 145.9L704.3 143.4L701.5 140.0L695.8 141.3L695.5 142.5L696.5 144.2L702.8 147.9zM726.4 147.5L733.3 145.7L733.4 145.6L731.7 141.8L725.9 145.1zM803.4 145.3L810.1 146.4L811.0 140.2L809.6 139.9L804.0 143.3zM696.5 144.2L695.5 142.5L690.2 145.8L691.1 149.1L695.1 151.4zM752.8 149.3L755.0 152.0L759.4 149.5L759.2 144.2L753.3 145.9L752.8 147.8zM804.0 152.3L807.4 152.3L810.4 151.1L811.0 147.5L810.1 146.4L803.4 145.3L802.8 146.1zM827.3 145.2L824.0 145.3L821.8 147.4L821.3 149.6L826.6 153.5L830.2 148.0zM846.2 152.9L848.5 153.8L852.8 151.8L853.2 146.8L844.6 146.3zM453.6 149.9L451.5 150.9L444.0 168.7L444.8 168.7L459.7 160.8L460.6 158.3L459.1 149.8zM670.8 159.6L671.1 158.6L670.5 152.7L670.3 152.5L664.9 151.3L663.0 153.3L663.4 157.1L664.9 158.1zM721.2 151.7L718.8 158.2L721.3 161.6L726.6 156.6L726.3 152.8L725.6 152.1zM663.4 157.1L658.5 161.7L659.2 162.4L663.9 164.3L664.9 158.1zM847.8 165.3L847.9 165.2L845.5 160.5L842.1 160.2L842.1 166.2L842.9 167.3zM753.5 163.1L747.4 165.4L748.3 169.1L750.2 170.1L755.8 168.9L755.6 164.1zM771.0 164.4L766.0 171.7L766.2 172.3L770.4 172.9L774.8 169.3L774.3 166.3zM797.4 163.4L796.9 163.2L793.3 165.2L790.6 169.8L791.0 170.4L798.7 170.6L799.1 170.3zM697.6 172.6L692.7 170.6L690.4 173.2L690.3 176.0L692.7 179.0L693.2 178.9zM738.7 171.5L734.2 171.3L733.3 177.4L735.3 179.2L741.1 176.2zM781.4 170.8L777.9 171.8L776.0 177.5L776.3 177.9L779.8 180.1L781.0 179.9L784.1 174.5L783.4 172.4zM801.7 176.1L805.4 178.3L809.2 175.5L809.4 172.4L805.5 169.4L800.1 170.7zM856.4 177.2L857.9 176.8L859.2 173.4L858.4 171.0L855.1 168.7L850.1 172.0L855.6 176.9zM373.5 180.3L372.7 182.5L378.2 195.5L388.4 195.9L390.7 191.2L389.4 180.4L387.1 177.0L374.2 179.6zM485.7 185.2L495.6 183.3L497.1 175.9L486.6 178.9L485.7 185.2zM665.9 186.3L670.3 184.0L663.9 178.1L661.0 180.6L661.0 182.3zM805.4 178.3L804.7 183.7L809.2 184.6L811.7 182.6L812.4 178.2L809.2 175.5zM818.9 178.1L818.3 177.7L812.4 178.2L811.7 182.6L817.3 185.0zM547.6 183.3L541.9 184.9L545.0 192.1L552.6 188.1zM562.6 190.5L561.9 184.8L561.1 183.6L558.7 183.1L552.8 188.2L559.1 193.1zM740.2 191.7L747.2 191.4L749.7 188.9L749.1 187.5L745.0 184.2L739.0 190.1zM822.1 188.5L827.2 193.9L829.7 186.9L829.7 186.8L824.4 185.1L822.0 186.6zM735.2 190.7L732.3 194.1L736.2 199.5L740.8 196.3L740.2 191.7L739.0 190.1L737.9 189.7zM814.1 188.9L814.2 195.1L819.6 194.8L819.4 193.0L816.0 188.0zM846.0 192.4L845.9 197.0L846.0 197.2L847.4 198.0L854.1 197.0L853.4 191.2L848.8 191.4zM842.5 204.1L848.4 204.7L850.1 203.0L847.4 198.0L846.0 197.2zM759.4 202.5L758.6 203.5L761.5 208.0L767.0 206.0L769.4 202.8zM786.7 209.8L793.2 207.0L794.1 203.7L792.4 201.9L787.9 200.8L787.2 200.9L785.6 203.9L786.2 209.5zM299.3 212.1L308.2 223.4L315.2 224.7L323.4 211.5zM544.8 224.1L553.5 218.2L553.7 216.4L551.0 214.2L544.1 218.1L542.9 222.2zM562.9 221.2L561.5 216.7L558.5 215.0L553.7 216.4L553.5 218.2L555.5 225.9zM861.6 219.3L862.1 216.6L859.3 214.0L855.1 216.1L855.3 219.9zM586.0 234.1L585.2 229.0L585.2 228.9L578.5 227.5L576.3 235.0L584.8 235.5zM575.9 235.5L567.1 234.0L568.7 241.3L575.2 238.4L576.0 236.3zM434.9 253.0L434.1 237.8L415.6 243.8L421.4 253.1zM557.2 239.6L557.8 243.8L560.5 245.6L566.2 245.3L561.5 235.2zM389.3 248.5L387.6 246.2L362.9 247.9L362.4 251.3L369.4 259.5L388.0 257.4L388.4 256.6zM487.6 259.5L494.8 262.0L495.3 254.5L490.4 247.7L485.4 251.9L483.4 255.7zM551.7 259.1L542.4 261.1L545.2 267.2L554.7 267.2L555.8 265.4L555.1 263.0zM554.7 272.7L554.7 267.2L545.2 267.2L544.3 270.7L550.9 276.8L553.7 274.5zM485.5 284.7L492.7 284.6L494.0 270.4L488.6 269.9L486.2 270.3zM419.8 287.5L419.1 292.1L421.2 293.7L432.5 297.1L434.6 296.4L441.2 283.1L434.2 273.0L429.4 273.6zM516.5 282.7L516.7 289.7L517.7 290.8L527.4 290.9L527.8 289.9L526.3 286.5zM496.1 287.4L493.6 285.1L492.7 284.6L485.5 284.7L482.7 285.6L484.4 294.2L488.4 299.8L493.0 299.2L495.2 297.4zM475.1 352.5L473.5 354.3L476.9 359.1L486.5 365.9L487.7 360.9L484.2 352.6zM486.8 367.3L486.5 365.9L476.9 359.1L476.0 368.8L479.9 372.3L484.7 372.1zM476.4 375.0L467.3 374.4L465.7 381.0L468.8 382.0L475.6 377.9z"/>
<path fill="#fae7e0" stroke="#fff" stroke-opacity="0.22" stroke-width="0.5" d="M526.7 100.6L540.6 109.0L546.5 106.6L549.5 100.0L526.4 100.0zM666.6 106.2L665.0 100.0L661.6 100.0L659.3 107.6L664.5 108.6zM666.6 106.2L671.8 107.4L676.3 100.0L665.0 100.0zM804.8 106.2L809.9 107.5L816.6 100.0L805.4 100.0zM754.7 113.5L758.9 114.4L759.9 114.1L763.7 108.0L762.8 107.4L754.2 106.7L753.4 108.6zM527.5 107.8L526.2 112.3L530.4 124.7L538.0 117.9zM567.4 119.4L569.9 116.6L570.3 115.3L568.7 109.5L566.9 109.2L561.0 115.3L561.8 118.0zM729.2 114.5L731.2 120.4L734.6 121.8L735.5 121.0L735.4 116.8L731.0 112.3zM805.6 117.8L808.0 119.1L813.8 115.2L812.4 112.3L812.0 112.1L806.8 113.0L805.7 114.2zM567.2 125.0L572.6 127.0L576.4 124.8L569.9 116.6L567.4 119.4zM643.8 127.2L646.4 130.5L652.8 128.6L653.7 126.6L651.1 121.9L647.8 121.6zM683.1 123.9L678.5 116.1L678.2 116.3L678.3 126.9L678.8 127.4L683.0 126.4L683.1 126.4zM704.6 129.4L707.4 125.8L705.8 121.2L702.0 123.2L698.3 126.8zM785.1 120.7L783.7 118.9L778.8 122.5L779.2 124.9L783.1 125.8L784.2 125.4zM808.4 120.8L808.4 126.6L814.2 126.5L816.2 120.9zM378.9 145.7L392.3 142.2L394.1 135.4L390.4 131.5L373.3 133.1L373.0 134.8zM815.9 138.0L822.4 138.0L823.7 133.9L822.7 128.7L821.6 128.8L815.7 137.0zM846.5 141.6L853.1 141.5L853.3 139.9L852.0 136.4L848.0 135.0L845.2 137.7zM475.0 139.9L474.6 143.2L483.0 148.6L485.2 146.2L481.2 133.1L479.9 133.2L479.7 133.3zM767.9 139.3L765.1 144.8L766.5 147.0L770.9 145.6L772.6 143.8L771.9 140.4zM766.5 147.0L766.0 148.9L770.5 152.6L773.0 150.5L770.9 145.6zM784.6 151.0L789.0 150.9L790.3 148.6L788.8 144.6L782.5 145.0L781.0 146.0zM790.6 154.3L796.4 152.1L795.3 148.1L790.3 148.6L789.0 150.9zM551.8 158.5L551.7 153.7L541.5 150.8L539.9 151.1L539.5 155.4L539.5 155.7L541.3 157.7L550.3 160.4zM691.1 149.1L686.2 153.0L689.5 157.4L691.3 158.1L695.5 151.9L695.1 151.4zM755.0 153.5L755.0 152.0L752.8 149.3L748.0 150.1L746.7 154.7L748.5 157.1L751.8 157.0L753.7 155.4zM682.7 164.8L683.4 161.0L681.2 156.8L678.7 156.3L678.5 156.5L677.0 163.7L679.2 165.6zM713.1 160.2L706.9 156.8L704.9 159.2L709.7 165.0L711.6 165.6L713.0 164.6zM858.0 163.8L859.2 159.5L854.6 159.3L852.2 160.7L851.9 163.9L854.8 166.7zM525.1 170.6L529.1 164.7L526.5 159.7L517.9 166.1L518.4 170.3zM676.5 171.2L679.2 165.6L677.0 163.7L672.4 162.2L671.0 170.9L672.1 171.7zM849.7 172.1L847.8 165.3L842.9 167.3L842.3 172.2zM866.8 173.4L867.1 172.2L864.7 166.1L862.7 166.8L858.4 171.0L859.2 173.4zM374.6 166.9L364.9 172.6L373.5 180.3L374.2 179.6zM525.8 181.2L526.1 181.2L525.3 170.9L525.1 170.6L518.4 170.3L513.7 175.8zM672.1 171.7L671.0 170.9L665.6 170.0L664.1 171.4L664.5 177.1L671.2 177.9zM472.4 175.4L467.3 172.3L461.4 176.6L461.0 180.7L464.8 188.7L466.9 188.2L474.8 179.5zM664.5 177.1L663.9 178.1L670.3 184.0L671.3 183.8L671.9 183.1L671.3 178.3L671.2 177.9zM822.0 186.6L824.4 185.1L823.5 178.2L818.9 178.1L817.3 185.0L817.5 185.6zM877.6 178.6L866.9 173.6L866.2 176.7L867.6 182.2zM816.0 188.0L819.4 193.0L822.1 188.5L822.0 186.6L817.5 185.6zM848.8 191.4L853.4 191.2L855.4 189.3L855.3 186.7L852.2 183.3L850.0 182.9L849.0 183.2zM832.1 195.0L835.0 190.9L829.7 186.9L827.2 193.9L827.2 195.3L828.1 195.9zM746.2 217.1L752.2 214.6L752.8 213.7L752.9 211.4L751.4 209.3L749.7 208.9L744.4 211.7L743.6 213.6L744.1 215.5zM760.4 210.6L759.6 217.9L767.1 217.4L767.9 216.4L767.7 214.5L761.1 209.9zM775.5 212.6L778.7 214.8L781.1 214.0L782.9 210.6L779.3 207.9L774.8 209.5L774.6 210.1zM854.3 214.7L853.8 210.4L853.4 210.1L849.0 210.1L848.2 210.7L846.8 215.8L847.0 215.9zM873.4 209.6L872.8 213.0L880.0 219.3L880.0 203.2L879.6 203.3zM851.0 220.3L855.0 220.3L855.3 219.9L855.1 216.1L854.3 214.7L847.0 215.9zM456.3 227.3L447.0 219.2L445.9 218.8L433.3 228.4L434.9 236.0L451.5 240.4zM387.6 246.2L384.1 240.6L376.9 239.5L363.1 245.5L362.9 247.9zM721.6 257.8L726.0 261.2L729.0 259.5L726.9 252.2L724.8 253.0L724.5 253.1zM408.0 266.1L408.8 272.2L409.2 272.4L423.4 269.7L420.0 256.4L409.5 261.7zM568.1 261.8L567.1 260.7L565.3 260.2L558.1 265.4L560.0 266.5L568.2 265.5zM711.9 258.7L704.9 260.9L704.7 261.3L705.3 264.9L708.4 264.8L712.5 259.3zM717.2 261.6L717.4 264.1L720.1 265.5L725.8 264.6L726.0 261.2L721.6 257.8L719.4 258.7zM475.2 275.5L485.5 270.1L479.5 261.3L476.2 264.0zM530.6 268.5L531.3 274.8L533.2 275.9L538.9 274.9L540.2 273.0L537.0 266.8zM550.9 276.8L544.3 270.7L540.2 273.0L538.9 274.9L543.3 281.0L547.4 282.5L549.3 281.4zM516.1 282.1L508.2 281.0L505.1 286.6L506.7 288.8L516.7 289.7L516.5 282.7zM502.4 325.7L505.6 325.0L502.7 311.7L495.7 311.9L493.4 313.5L495.7 323.7z"/>
<path fill="#fae2da" stroke="#fff" stroke-opacity="0.22" stroke-width="0.5" d="M632.3 106.1L633.3 106.7L640.5 104.7L640.5 100.0L634.0 100.0zM754.2 106.7L753.7 100.0L748.1 100.0L746.8 106.0L750.6 108.6L753.4 108.6zM762.8 107.4L759.0 100.0L753.7 100.0L754.2 106.7zM777.4 101.4L778.4 109.1L780.3 111.5L780.3 111.5L785.6 105.3L785.3 100.0L778.0 100.0zM357.9 116.4L375.1 116.1L374.3 107.9L352.1 111.4zM640.5 104.7L633.3 106.7L634.1 112.4L639.5 113.2L641.2 106.0zM647.1 107.5L641.2 106.0L639.5 113.2L640.5 114.7L647.6 112.4L648.0 109.5zM836.5 113.5L837.9 109.4L836.2 107.9L830.0 107.0L828.6 108.9L829.9 114.9L834.0 114.7zM853.6 116.2L855.8 112.2L855.7 112.1L848.4 108.4L847.1 113.1L848.0 115.6zM697.4 116.1L696.8 115.0L691.2 113.6L689.8 114.2L689.3 118.8L690.1 120.4L695.1 121.2L696.9 118.2zM735.5 121.0L741.5 119.9L742.6 114.1L738.1 113.2L735.4 116.8zM817.0 119.5L815.7 116.4L813.8 115.2L808.0 119.1L808.4 120.8L816.2 120.9zM846.9 119.2L847.6 120.5L854.4 120.6L853.6 116.2L848.0 115.6zM622.7 126.7L619.6 129.4L618.6 133.5L618.8 133.6L625.7 134.9L626.6 128.0zM409.2 140.6L424.1 134.1L426.5 128.9L417.1 122.6L405.8 136.5zM448.6 141.0L450.9 136.1L438.0 132.3L435.5 133.1L438.6 145.0zM694.7 135.1L689.6 133.4L688.0 138.9L688.9 139.6L694.4 139.0zM731.9 139.9L733.7 138.6L735.3 134.7L732.7 131.7L727.1 133.1L726.4 137.5zM491.5 146.3L496.3 138.6L489.5 132.5L482.9 132.2L481.2 133.1L485.2 146.2zM543.8 139.8L548.1 145.1L553.7 143.4L547.2 134.9zM585.9 143.6L594.6 146.0L597.0 144.4L598.7 141.1L594.3 133.1L593.7 132.7zM618.1 138.8L613.2 141.0L614.2 145.9L620.6 144.4L621.1 141.5zM753.3 145.9L751.8 141.2L748.9 141.4L747.2 144.9L752.8 147.8zM853.2 146.8L854.5 144.8L853.1 141.5L846.5 141.6L844.1 145.8L844.6 146.3zM524.8 154.1L526.1 151.2L522.5 145.7L518.4 143.2L517.3 143.0L513.9 149.5L512.9 152.9zM567.4 145.2L566.6 150.8L574.1 153.4L577.4 151.3L577.5 146.0L568.0 144.9zM713.8 146.5L709.6 146.9L711.0 152.7L713.7 153.5L715.2 152.5zM856.7 144.7L856.3 144.9L861.8 152.5L864.2 151.8L865.6 147.5zM698.7 152.4L700.3 158.7L702.1 159.9L704.9 159.2L706.9 156.8L707.3 155.0L702.1 150.0zM811.1 158.7L807.4 152.3L804.0 152.3L803.0 153.7L805.7 159.2L807.7 160.6zM459.7 160.8L467.3 171.3L474.0 162.6L472.8 158.9L460.6 158.3zM529.1 164.7L534.0 166.0L539.5 155.7L539.5 155.4L526.5 159.5L526.5 159.7zM867.7 158.8L864.5 161.6L864.8 165.9L878.8 164.8L880.0 164.4L880.0 161.2zM510.0 177.3L513.7 175.8L518.4 170.3L517.9 166.1L514.0 160.9L511.0 159.1L507.9 175.6zM692.2 167.5L686.8 165.8L684.8 166.1L685.3 171.0L690.4 173.2L692.7 170.6zM699.5 172.4L699.9 172.5L703.0 170.6L703.8 166.8L701.5 164.0L697.8 165.8zM711.6 165.6L711.3 168.3L714.1 174.0L716.2 174.0L719.4 169.7L714.3 164.8L713.0 164.6zM831.6 170.1L830.5 165.5L827.6 163.5L826.5 164.1L824.4 170.3zM741.3 176.3L745.8 175.7L746.0 171.4L739.7 170.7L738.7 171.5L741.1 176.2zM825.4 176.9L824.0 170.7L819.0 169.3L817.2 171.5L818.3 177.7L818.9 178.1L823.5 178.2zM547.6 183.3L550.1 178.5L546.0 173.8L536.2 178.0L535.1 183.3L541.9 184.9zM850.0 182.9L852.2 183.3L856.4 177.2L855.6 176.9L849.8 177.7zM800.4 193.8L803.9 190.6L803.1 184.8L802.1 184.7L797.0 188.0zM845.2 183.2L842.6 186.7L842.9 189.9L846.0 192.4L848.8 191.4L849.0 183.2zM407.1 186.4L390.7 191.2L388.4 195.9L389.8 198.8L405.0 205.3L413.1 191.4zM581.9 195.1L581.8 191.0L575.2 189.3L572.8 190.5L574.7 196.1L576.0 197.1zM835.0 190.9L832.1 195.0L837.8 197.3L838.8 192.0L836.1 190.8zM480.4 205.6L482.4 201.3L475.2 195.8L461.2 197.9L461.0 198.2L462.0 201.1L477.7 205.5zM809.4 195.6L805.8 199.1L805.7 201.2L811.5 202.8L813.7 200.8L812.3 196.4zM481.3 209.8L498.5 208.7L499.0 206.8L493.8 200.6L485.7 198.5L482.4 201.3L480.4 205.6zM720.0 207.7L726.5 203.7L722.3 199.1L718.6 201.4L717.6 205.2L717.9 206.8zM754.5 201.7L748.8 201.6L747.0 203.3L749.7 208.9L751.4 209.3L755.9 203.2zM772.0 203.1L774.8 209.5L779.3 207.9L779.8 204.2L779.5 203.8L772.3 202.9zM558.5 215.0L560.2 208.3L550.3 206.2L548.3 207.2L551.0 214.2L553.7 216.4zM462.7 227.6L463.8 228.7L476.4 234.5L482.3 230.2L482.6 229.7L475.4 220.1zM500.1 231.0L508.8 232.3L512.3 228.5L513.4 220.6L501.2 218.4L498.5 223.1L497.0 227.2zM554.8 228.2L545.8 226.8L543.6 231.1L549.0 236.3L550.5 235.8zM576.3 235.0L578.5 227.5L578.4 227.2L575.4 223.8L572.2 222.7L570.3 223.6L565.6 233.2L567.1 234.0L575.9 235.5zM356.4 227.7L355.9 219.5L347.6 214.5L341.6 215.4L332.9 230.3L333.8 237.0L341.7 245.0zM540.7 241.2L538.1 233.7L537.2 233.4L526.4 236.3L526.2 236.6L534.0 245.2L540.6 242.1zM727.8 251.1L733.3 242.6L733.2 242.0L728.9 240.2L726.6 242.1zM737.6 247.5L741.6 244.6L739.9 240.5L735.3 240.5L733.2 242.0L733.3 242.6L736.3 247.5zM568.4 247.3L567.6 250.1L569.9 254.3L574.7 255.4L579.7 249.5L574.5 246.4zM575.5 260.5L574.7 255.4L569.9 254.3L567.1 260.7L568.1 261.8zM388.0 257.4L388.8 259.6L408.0 266.1L409.5 261.7L404.8 255.2L388.4 256.6zM705.3 264.9L704.2 266.3L707.3 273.1L709.1 273.9L710.0 273.5L710.8 266.1L708.4 264.8zM731.2 264.2L726.7 265.5L727.3 269.5L733.1 270.3L734.0 267.3zM733.1 270.3L727.3 269.5L724.4 272.6L728.1 277.5L733.4 276.5L734.2 272.6zM505.1 286.6L496.1 287.4L495.2 297.4L503.5 300.6L507.8 294.7L506.7 288.8zM546.0 293.6L546.4 294.3L555.7 296.2L559.0 293.8L558.0 291.1L555.9 289.8L546.0 293.4zM455.8 324.8L440.0 337.7L440.2 344.3L456.0 350.0L462.2 337.4zM474.3 337.5L475.8 342.1L491.1 344.9L493.3 343.0L492.3 337.4L488.4 333.2L478.0 332.8L477.0 333.6zM531.1 338.8L523.8 333.5L516.6 336.6L516.4 337.5L526.0 343.1L528.2 343.2zM464.9 381.5L465.7 381.0L467.3 374.4L464.3 366.2L456.8 376.6zM444.6 396.5L452.4 400.3L460.0 393.5L448.3 388.7L444.8 393.7zM452.4 400.3L452.5 405.5L456.8 412.5L461.5 414.3L466.5 407.4L465.1 395.8L461.0 393.1L460.0 393.5zM472.6 393.5L465.1 395.8L466.5 407.4L479.1 407.0L478.9 401.2z"/>
<path fill="#f9ded3" stroke="#fff" stroke-opacity="0.22" stroke-width="0.5" d="M585.1 105.3L592.8 108.6L595.1 100.0L583.6 100.0zM652.6 100.2L652.6 100.0L640.5 100.0L640.5 104.7L641.2 106.0L647.1 107.5zM762.8 107.4L763.7 108.0L765.1 107.8L767.5 105.9L767.4 100.0L759.0 100.0zM600.1 108.9L593.1 109.5L592.2 113.1L594.0 114.7L601.6 112.8L601.7 110.8zM735.4 116.8L738.1 113.2L736.3 110.8L731.6 110.3L731.0 112.3zM800.2 111.6L805.7 114.2L806.8 113.0L804.8 106.2L800.7 108.1zM825.1 116.1L828.6 116.4L829.9 114.9L828.6 108.9L825.4 108.4L822.5 110.5L822.1 113.2zM550.2 117.3L552.7 120.7L560.7 119.5L561.8 118.0L561.0 115.3L555.7 113.2L550.2 117.2zM596.3 118.5L601.6 119.8L603.4 116.9L601.6 112.8L594.0 114.7zM620.0 121.8L619.1 115.1L618.0 114.8L613.5 122.1L614.4 124.1zM702.0 123.2L705.8 121.2L705.9 120.9L702.8 117.2L697.4 116.1L696.9 118.2zM751.4 120.6L752.1 121.6L759.0 121.5L758.9 114.4L754.7 113.5L753.6 114.6zM862.3 123.2L866.7 120.2L866.6 115.0L862.5 114.4L861.2 114.6L858.6 120.4zM619.6 129.4L622.7 126.7L620.7 122.1L620.0 121.8L614.4 124.1L614.2 124.6zM748.8 120.0L741.7 120.1L743.7 125.8L744.2 125.9L749.5 120.3zM820.9 121.3L820.1 120.2L817.0 119.5L816.2 120.9L814.2 126.5L814.8 127.1L821.6 128.8L822.7 128.7L824.1 127.4zM828.8 126.4L828.8 120.3L820.9 121.3L824.1 127.4zM840.2 120.7L835.8 120.5L835.5 120.7L833.5 126.4L837.4 127.5L840.7 126.3L840.9 125.9zM862.1 126.1L862.3 123.2L858.6 120.4L855.0 121.2L854.0 127.4L859.1 129.0zM631.7 128.2L634.0 134.2L634.0 134.2L637.4 133.3L640.8 127.0L639.9 126.2zM726.6 132.5L726.6 126.5L725.6 125.5L722.1 126.4L721.5 131.3zM779.2 124.9L777.7 126.9L779.9 133.0L781.1 133.3L784.6 131.5L783.1 125.8zM803.4 133.9L805.4 135.6L806.9 135.7L809.1 132.7L808.0 126.8L805.9 127.0L805.3 127.2zM654.2 131.7L649.1 135.2L653.3 138.4L655.7 136.7L656.0 133.1zM671.5 133.4L670.4 139.2L672.2 141.2L677.1 138.2L674.0 132.9zM770.4 133.0L767.6 132.8L765.7 134.8L765.6 136.3L767.9 139.3L771.9 140.4L772.2 140.1zM775.7 137.5L776.2 135.2L772.6 132.5L770.4 133.0L772.2 140.1zM803.4 133.9L797.5 134.4L796.9 135.2L796.9 136.7L802.5 140.0L805.4 135.6zM740.4 147.0L744.5 147.2L747.2 144.9L748.9 141.4L745.3 138.7L742.4 139.8L740.5 143.1L740.3 146.8zM753.5 139.2L751.8 141.2L753.3 145.9L759.2 144.2L760.3 142.4L760.0 140.9zM853.1 141.5L854.5 144.8L856.3 144.9L856.7 144.7L862.8 139.8L858.8 137.5L853.3 139.9zM421.5 146.0L409.6 142.0L406.5 154.4L416.0 156.2L421.3 150.8zM481.8 152.0L483.0 148.6L474.6 143.2L473.9 144.3L477.1 153.1zM682.7 145.4L678.8 143.3L674.2 144.1L676.3 150.9L676.9 151.1L682.3 148.3L682.8 145.5zM830.2 148.0L826.6 153.5L827.5 155.4L834.9 152.6L833.5 148.3zM865.7 147.3L865.6 147.5L864.2 151.8L865.6 153.0L880.0 152.1L880.0 148.2zM514.0 160.9L525.4 157.5L524.8 154.1L512.9 152.9L510.7 155.0L510.5 158.4L511.0 159.1zM566.0 151.5L561.6 153.1L560.8 154.1L560.6 158.5L568.2 158.1zM711.0 152.7L707.3 155.0L706.9 156.8L713.1 160.2L714.6 157.6L713.7 153.5zM783.4 158.4L790.5 155.7L790.6 154.3L789.0 150.9L784.6 151.0L782.5 155.7L782.2 157.1zM801.5 154.2L798.5 153.8L793.6 159.1L796.9 163.2L797.4 163.4L798.4 162.8zM700.3 158.7L694.1 160.8L694.6 164.8L697.8 165.8L701.5 164.0L702.1 159.9zM721.3 161.6L721.3 161.9L722.9 164.4L727.2 165.8L727.9 164.8L727.9 157.9L726.6 156.6zM820.0 163.7L819.6 158.9L814.5 157.3L813.1 158.5L814.3 164.5L818.4 165.6zM483.8 169.1L477.0 163.4L474.0 162.6L467.3 171.3L467.3 172.3L472.4 175.4zM499.4 172.6L507.9 175.6L511.0 159.1L510.5 158.4L499.9 163.1L497.9 169.8zM763.1 169.3L766.0 171.7L771.0 164.4L770.9 164.1L764.9 163.2L763.0 167.4zM793.3 165.2L787.4 163.2L785.9 163.6L788.8 168.9L790.6 169.8zM387.1 177.0L387.1 177.0L375.6 165.4L374.6 166.9L374.2 179.6zM671.3 178.3L678.2 176.9L678.5 173.6L676.5 171.2L672.1 171.7L671.2 177.9zM678.2 176.9L678.7 178.4L684.5 179.2L685.1 177.5L683.2 173.7L678.5 173.6zM707.8 175.6L706.6 171.8L703.0 170.6L699.9 172.5L701.5 177.4L705.5 178.9zM719.7 176.9L720.1 178.1L723.3 180.7L726.8 177.7L726.1 172.3L724.3 172.2zM733.8 170.9L728.9 170.0L726.1 172.3L726.8 177.7L730.8 178.7L733.3 177.4L734.2 171.3zM757.3 170.3L756.4 176.6L761.9 176.5L765.5 174.5L766.2 172.3L766.0 171.7L763.1 169.3zM866.9 173.6L877.6 178.6L880.0 178.7L880.0 164.4L878.8 164.8L867.1 172.2L866.8 173.4zM798.9 178.4L794.7 176.7L793.3 177.3L792.8 181.7L793.4 182.5L799.1 182.3zM485.0 189.0L485.9 191.5L499.3 189.1L495.6 183.3L485.7 185.2zM566.6 191.9L571.6 189.9L570.1 185.0L561.9 184.8L562.6 190.5zM604.7 190.7L606.4 191.0L611.0 184.2L603.1 181.9L602.5 182.2zM761.9 184.0L756.9 182.8L754.6 190.4L758.2 190.9L762.8 189.1zM772.0 184.2L769.4 183.6L767.1 190.3L771.8 190.7L774.9 187.9L774.7 186.7zM842.9 189.9L838.8 192.0L837.8 197.3L837.9 197.4L845.9 197.0L846.0 192.4zM853.4 191.2L854.1 197.0L854.6 197.6L860.0 195.6L857.8 190.4L855.4 189.3zM864.6 196.7L867.1 197.5L872.5 193.6L872.6 189.8L867.1 187.5L864.6 189.4L864.4 189.7zM348.6 207.0L347.6 214.5L355.9 219.5L362.0 218.2L375.9 196.7L359.0 190.6zM563.0 198.7L559.0 193.2L554.9 198.0L555.3 200.2L560.3 202.5zM772.3 202.9L779.5 203.8L780.0 197.5L777.4 196.3L776.5 196.6zM799.5 203.9L804.6 202.9L805.7 201.2L805.8 199.1L800.2 195.4L799.2 196.8L798.2 203.2zM749.7 208.9L747.0 203.3L744.0 202.9L743.0 203.8L743.2 209.6L744.4 211.7zM841.7 204.6L837.4 199.9L833.8 201.7L836.9 206.8L841.1 206.5zM841.5 207.9L848.2 210.7L849.0 210.1L848.4 204.7L842.5 204.1L841.7 204.6L841.1 206.5zM865.2 211.5L868.7 207.8L867.9 204.2L861.2 205.4L861.0 208.3zM811.3 214.7L814.9 214.4L815.7 210.8L814.4 208.8L811.1 208.0L807.6 209.4L807.6 209.5L807.6 212.7zM384.1 240.6L386.2 231.8L385.2 228.3L379.4 220.5L371.5 220.5L376.9 239.5zM489.2 229.1L494.5 241.8L497.1 239.3L500.1 231.0L497.0 227.2zM728.9 240.2L733.2 242.0L735.3 240.5L735.8 232.4L734.8 231.5L727.9 236.1zM494.5 241.8L493.5 244.6L506.9 248.7L507.0 248.7L510.7 244.1L508.5 238.6L497.1 239.3zM543.1 245.2L549.2 245.5L549.9 242.9L548.2 237.8L540.7 241.2L540.6 242.1zM568.7 241.3L567.1 245.7L568.4 247.3L574.5 246.4L575.2 238.4zM717.9 240.7L716.1 240.0L708.7 241.6L709.4 246.7L709.6 246.9L714.5 248.6zM485.4 251.9L473.8 243.4L471.3 245.0L471.9 248.8L480.3 257.3L480.6 257.4L483.4 255.7zM599.5 243.3L599.3 243.7L601.3 253.5L608.3 252.9L608.5 248.2zM467.6 256.9L480.3 257.3L471.9 248.8zM739.0 255.6L734.3 254.0L732.2 260.1L737.2 261.8L740.0 258.8zM518.3 271.0L518.6 269.5L515.9 263.5L506.3 265.2L506.2 265.4L508.8 274.3zM554.7 267.2L554.7 272.7L562.4 273.4L564.4 271.7L560.0 266.5L558.1 265.4L555.8 265.4zM568.2 265.5L560.0 266.5L564.4 271.7L568.6 271.2L569.5 269.5zM469.6 283.2L482.7 285.6L485.5 284.7L486.2 270.3L485.5 270.1L475.2 275.5zM518.3 271.0L508.8 274.3L507.4 276.7L508.2 281.0L516.1 282.1L520.9 276.0zM568.6 271.2L571.0 278.8L577.1 277.9L577.5 268.5L577.2 268.0L569.5 269.5zM553.7 274.5L550.9 276.8L549.3 281.4L553.2 283.7L560.8 282.2L560.4 279.4zM559.0 293.8L555.7 296.2L553.9 302.8L561.0 305.1L564.0 296.8zM505.6 305.5L503.5 300.6L495.2 297.4L493.0 299.2L495.7 311.9L502.7 311.7L505.3 309.3zM551.1 309.5L552.9 303.1L547.1 300.4L546.5 301.1L544.4 307.7zM477.9 324.1L478.0 332.8L488.4 333.2L490.5 326.8L482.3 316.5zM529.7 348.2L538.8 346.3L534.6 336.9L531.1 338.8L528.2 343.2zM420.7 385.1L411.5 383.8L409.0 402.1L420.4 408.4L425.9 401.2L424.4 390.8z"/>
<path fill="#f8d7ca" stroke="#fff" stroke-opacity="0.22" stroke-width="0.5" d="M569.7 108.7L576.4 108.4L580.4 100.0L571.5 100.0zM614.5 103.0L617.0 105.7L620.7 106.3L622.6 105.5L624.4 100.0L613.4 100.0zM705.2 108.2L711.8 108.0L708.6 100.0L706.6 100.0zM739.5 104.2L740.1 105.8L743.1 108.4L746.8 106.0L748.1 100.0L740.1 100.0zM778.4 109.1L777.4 101.4L771.5 106.9L772.1 107.8zM817.7 107.0L818.3 107.8L822.5 110.5L825.4 108.4L820.1 100.0L817.6 100.0zM862.0 106.2L865.4 106.0L869.2 100.0L859.1 100.0zM570.3 115.3L575.5 116.1L579.5 112.1L579.4 110.9L576.4 108.4L569.7 108.7L568.7 109.5zM787.3 115.0L789.7 109.8L785.6 105.3L780.3 111.5L781.3 113.3L784.4 115.5zM798.4 106.5L794.8 106.4L792.1 109.5L795.2 113.3L798.3 113.9L800.2 111.6L800.7 108.1zM806.8 113.0L812.0 112.1L809.9 107.5L804.8 106.2L804.8 106.2zM388.1 116.2L385.9 119.7L389.4 124.7L402.0 116.2L400.4 111.3zM518.5 124.4L526.7 126.7L529.8 126.1L530.4 124.7L526.2 112.3L519.1 118.7L517.7 122.9zM618.0 114.8L615.6 113.6L610.8 114.2L610.1 115.2L610.7 118.6L613.5 122.1zM651.3 121.8L657.0 120.1L658.0 118.5L657.0 116.3L653.1 115.4zM658.5 112.9L657.0 116.3L658.0 118.5L664.2 118.7L664.1 113.6zM719.3 113.5L717.5 115.0L715.9 120.0L719.9 121.1L723.8 119.0L723.9 115.3L722.2 113.3zM769.8 120.7L773.6 118.9L773.6 113.5L772.8 112.7L767.9 113.5L766.4 118.0L767.4 120.7zM773.6 118.9L776.2 119.7L781.3 113.3L780.3 111.5L780.3 111.5L773.6 113.5zM784.4 115.5L781.3 113.3L776.2 119.7L778.8 122.5L783.7 118.9zM789.7 122.4L791.9 120.5L790.7 117.5L787.3 115.0L784.4 115.5L783.7 118.9L785.1 120.7zM828.6 116.4L825.1 116.1L820.1 120.2L820.9 121.3L828.8 120.3L828.9 119.7zM880.0 121.6L880.0 116.9L868.5 113.5L866.6 115.0L866.7 120.2L868.3 121.8zM698.3 126.8L702.0 123.2L696.9 118.2L695.1 121.2L696.8 127.1L697.0 127.2zM755.5 128.5L759.1 127.2L759.4 121.9L759.0 121.5L752.1 121.6L752.0 126.8zM510.8 137.9L513.2 137.6L514.4 135.1L514.8 130.6L503.6 126.9L503.3 129.4zM665.0 123.4L662.6 126.7L665.1 131.6L670.2 132.4L670.7 126.5zM772.6 132.5L774.2 127.6L773.9 127.4L767.0 128.2L767.6 132.8L770.4 133.0zM798.1 127.0L797.5 134.4L803.4 133.9L805.3 127.2zM821.6 128.8L814.8 127.1L814.5 134.9L815.7 137.0zM822.7 128.7L823.7 133.9L827.3 134.3L830.5 131.7L829.5 126.8L828.8 126.4L824.1 127.4zM299.4 144.5L304.6 136.7L304.3 136.1L288.7 132.4L285.4 140.9L285.7 141.5zM497.1 138.6L503.2 142.1L504.7 141.6L510.8 137.9L503.3 129.4zM576.4 137.6L576.5 136.8L575.3 135.5L572.3 133.4L568.6 134.8L569.4 141.5zM626.1 138.7L628.7 142.1L634.4 138.3L634.0 134.2L634.0 134.2L626.2 135.6zM635.4 139.4L640.8 139.8L641.4 136.7L637.4 133.3L634.0 134.2L634.4 138.3zM707.2 134.4L705.6 134.0L702.4 135.4L701.5 140.0L704.3 143.4L710.0 137.3L709.0 135.4zM742.4 139.8L745.3 138.7L746.8 133.8L741.1 131.3L738.2 134.3zM778.7 140.2L782.7 137.5L781.1 133.3L779.9 133.0L776.2 135.2L775.7 137.5zM788.7 132.0L784.6 131.5L781.1 133.3L782.7 137.5L784.7 138.7L787.7 138.3L788.8 132.1zM827.3 134.3L828.4 138.5L831.6 139.6L832.8 139.3L833.1 135.4L830.5 131.7zM865.5 139.6L865.9 140.1L880.0 143.0L880.0 130.7L874.4 130.8L866.3 135.2zM438.6 145.0L435.5 133.1L427.0 128.9L426.5 128.9L424.1 134.1L423.2 143.1L438.1 147.9zM577.5 146.0L578.7 144.5L576.4 137.6L569.4 141.5L568.0 144.9zM723.1 140.7L717.4 142.2L717.0 144.7L719.0 148.1L724.6 143.6zM811.0 140.2L810.1 146.4L811.0 147.5L813.8 146.6L816.0 142.3L815.1 139.3zM640.2 146.0L639.6 145.0L635.2 144.8L635.0 144.9L633.8 150.3L636.9 151.7zM741.8 153.9L746.7 154.7L748.0 150.1L744.5 147.2L740.4 147.0L739.6 150.7zM747.2 144.9L744.5 147.2L748.0 150.1L752.8 149.3L752.8 147.8zM620.4 150.9L614.1 150.9L612.8 153.2L613.9 155.9L621.2 157.1L622.5 153.4zM719.9 151.0L715.2 152.5L713.7 153.5L714.6 157.6L718.8 158.2L721.2 151.7zM770.5 152.6L766.0 148.9L763.8 150.7L763.6 157.2L770.5 157.1zM526.5 159.7L526.5 159.5L525.4 157.5L514.0 160.9L517.9 166.1zM654.2 164.5L658.0 161.6L656.5 158.8L652.2 157.3L650.1 159.4L650.0 163.5zM805.7 159.2L803.0 153.7L801.5 154.2L798.4 162.8L800.1 162.7zM852.2 160.7L848.7 157.9L845.5 160.5L847.9 165.2L851.9 163.9zM608.6 165.3L607.6 162.5L600.0 163.5L606.1 171.6L606.9 171.8L609.1 170.1zM719.4 169.7L720.4 169.5L722.9 164.4L721.3 161.9L714.3 164.8zM755.6 164.1L755.8 168.9L757.3 170.3L763.1 169.3L763.0 167.4L757.9 162.7zM862.7 166.8L858.0 163.8L854.8 166.7L855.1 168.7L858.4 171.0zM485.7 185.2L486.6 178.9L484.6 175.0L476.0 179.7zM586.0 180.5L586.3 175.5L578.1 177.0L578.9 182.7L579.3 183.0L583.3 183.7zM593.9 174.9L587.0 173.8L586.3 175.5L586.0 180.5L595.4 183.8L596.3 183.0zM709.5 183.6L712.9 182.1L713.3 175.0L707.8 175.6L705.5 178.9L707.3 182.7zM744.8 183.1L745.0 184.2L749.1 187.5L754.3 179.1L754.2 178.7L752.3 178.0L748.8 178.3zM476.4 188.6L485.0 189.0L485.7 185.2L485.7 185.2L476.0 179.7L475.0 179.6zM774.7 186.7L774.9 187.9L778.3 190.2L781.6 189.0L779.1 182.2zM817.3 185.0L811.7 182.6L809.2 184.6L811.2 188.5L814.1 188.9L816.0 188.0L817.5 185.6zM523.8 199.0L523.1 192.4L518.5 189.8L509.9 199.6L510.5 202.2L513.9 204.4L523.8 199.0zM637.0 196.7L638.7 195.7L637.8 190.1L634.0 187.3L633.6 187.5L631.1 191.3L631.9 194.5zM753.7 195.5L754.4 190.6L749.7 188.9L747.2 191.4L747.7 196.2L748.6 196.8zM436.9 208.5L442.1 211.3L449.6 198.0L436.6 195.0zM608.7 200.6L602.5 194.2L598.8 197.6L601.3 202.0L608.6 200.7zM772.0 203.1L772.3 202.9L776.5 196.6L772.9 194.7L766.5 197.4L769.4 202.8zM477.7 205.5L462.0 201.1L461.6 205.5L465.9 212.4L466.6 212.5zM813.7 200.8L811.5 202.8L811.1 208.0L814.4 208.8L818.9 203.0L818.7 202.7zM826.6 210.6L829.4 204.4L821.5 204.3L822.3 211.2L822.4 211.3zM829.4 204.4L833.4 208.7L836.9 206.8L833.8 201.7L830.4 202.2zM869.4 201.9L867.9 204.2L868.7 207.8L873.4 209.6L879.6 203.3zM570.2 212.7L560.5 208.0L560.2 208.3L558.5 215.0L561.5 216.7L570.2 212.9zM727.5 209.1L721.5 209.9L721.8 214.7L722.5 215.4L728.1 213.5zM728.4 207.1L727.5 209.1L728.1 213.5L730.5 214.9L732.4 215.2L733.8 210.1zM733.8 210.1L732.4 215.2L734.0 216.8L739.1 213.0L736.5 208.0zM767.7 214.5L769.3 211.7L767.0 206.0L761.5 208.0L761.1 209.9zM841.5 207.9L839.2 214.8L842.1 217.5L846.8 215.8L848.2 210.7zM572.2 222.7L570.4 213.2L570.2 212.9L561.5 216.7L562.9 221.2L564.5 222.3L570.3 223.6zM582.3 214.6L582.3 214.2L570.4 213.2L572.2 222.7L575.4 223.8zM784.5 219.8L791.5 217.9L792.0 216.8L788.5 213.3L783.4 216.4zM846.8 215.8L842.1 217.5L841.9 221.6L842.3 222.2L848.4 223.5L851.0 220.3L847.0 215.9zM514.0 220.1L526.4 231.6L528.6 224.9L518.2 216.4L517.2 216.4zM746.5 222.7L741.1 220.6L743.1 225.8L744.4 226.0L746.5 224.2zM755.2 222.2L753.1 220.2L747.2 219.9L746.5 222.7L746.5 224.2L751.4 226.3zM759.4 228.7L764.3 230.4L766.7 226.0L765.3 223.8L758.2 222.2zM859.4 236.3L866.8 233.8L865.9 231.1L864.1 228.8L861.2 228.0L859.5 228.2L858.3 233.8zM721.2 234.9L720.5 233.5L715.9 232.3L712.8 233.5L716.1 240.0L717.9 240.7L718.6 240.6zM750.4 244.8L752.2 244.9L754.6 238.8L752.5 234.5L751.9 233.6L749.6 233.9L746.8 237.9zM609.7 242.2L601.2 241.5L599.5 243.2L599.5 243.3L608.5 248.2L610.0 246.0L610.2 242.3zM541.7 253.4L543.1 245.2L540.6 242.1L534.0 245.2L532.3 251.7L535.9 256.0L538.8 256.7zM332.4 254.6L325.0 248.5L317.9 247.4L312.1 250.4L312.8 254.3L324.9 265.2zM551.7 259.1L552.8 252.3L552.4 251.6L541.7 253.4L538.8 256.7L541.3 260.4L542.4 261.1zM719.4 258.7L721.6 257.8L724.5 253.1L715.6 250.3L715.3 251.8zM861.2 260.8L868.4 259.3L865.6 254.7L863.1 254.8L860.6 260.4zM488.6 269.9L494.0 270.4L495.3 269.6L496.0 268.3L495.4 262.8L494.8 262.0L487.6 259.5zM577.2 268.0L579.1 263.1L575.5 260.5L568.1 261.8L568.2 265.5L569.5 269.5zM590.3 266.1L587.6 258.7L584.7 255.9L579.6 262.9L589.9 267.8zM874.8 255.3L869.1 259.8L869.6 263.1L880.0 269.0L880.0 254.2zM610.5 264.4L610.1 264.7L610.8 269.9L616.5 269.9L618.5 265.7L616.0 262.7zM660.2 271.4L663.1 266.2L660.0 264.0L654.9 268.8zM564.4 271.7L562.4 273.4L562.3 276.6L570.6 279.5L571.0 278.8L568.6 271.2zM525.2 277.6L520.9 276.0L516.1 282.1L516.5 282.7L526.3 286.5zM555.9 289.8L553.2 283.7L549.3 281.4L547.4 282.5L544.9 291.6L546.0 293.4zM529.0 298.6L531.2 299.2L541.4 291.1L534.4 286.2L527.8 289.9L527.4 290.9zM488.4 299.8L484.4 294.2L476.1 299.1L481.8 306.4zM516.1 300.4L514.8 297.2L507.8 294.7L503.5 300.6L505.6 305.5zM525.6 323.4L514.9 333.1L516.6 336.6L523.8 333.5L526.4 323.8zM538.9 353.8L529.5 350.5L523.0 359.3L529.1 363.1L537.2 361.3L539.9 356.2zM434.5 392.9L424.4 390.8L425.9 401.2L437.7 403.1L438.8 400.6zM444.6 396.5L444.8 393.7L438.2 388.5L434.5 392.9L438.8 400.6z"/>
<path fill="#f7d0c1" stroke="#fff" stroke-opacity="0.22" stroke-width="0.5" d="M680.2 105.0L685.4 106.5L686.7 105.5L686.9 100.0L677.3 100.0zM825.4 108.4L828.6 108.9L830.0 107.0L830.0 100.0L820.1 100.0zM840.7 107.9L848.2 107.9L850.5 100.0L840.5 100.0zM540.6 109.0L526.7 100.6L527.5 107.8L538.0 117.9L539.1 117.7zM657.0 116.3L658.5 112.9L656.2 108.5L656.2 108.5L654.6 109.6L652.6 114.7L653.1 115.4zM664.5 112.9L664.5 108.6L659.3 107.6L656.2 108.5L658.5 112.9L664.1 113.6zM672.5 108.7L671.8 107.4L666.6 106.2L664.5 108.6L664.5 112.9L670.6 113.2zM712.8 108.4L712.0 112.9L717.5 115.0L719.3 113.5L715.1 107.4zM719.3 113.5L722.2 113.3L723.2 110.0L719.9 105.7L715.5 106.8L715.1 107.4zM363.8 127.1L370.6 127.9L375.4 117.0L375.1 116.1L357.9 116.4zM569.9 116.6L576.4 124.8L580.6 124.0L580.7 123.6L575.5 116.1L570.3 115.3zM668.6 119.8L673.3 121.6L677.6 116.5L671.4 115.1zM685.2 119.6L689.3 118.8L689.8 114.2L685.2 112.3L681.0 114.3zM709.8 118.8L714.5 120.7L715.9 120.0L717.5 115.0L712.0 112.9L710.0 114.8zM854.4 120.6L855.0 121.2L858.6 120.4L861.2 114.6L855.8 112.2L853.6 116.2zM554.7 128.7L559.8 130.6L562.1 127.9L560.7 119.5L552.7 120.7zM629.7 124.7L629.3 126.4L631.7 128.2L639.9 126.2L637.8 121.9zM639.9 126.2L640.8 127.0L643.8 127.2L647.8 121.6L647.0 120.2L640.6 116.6L637.9 120.6L637.8 120.7L637.8 121.9zM725.6 125.5L726.4 121.5L723.8 119.0L719.9 121.1L721.0 125.8L722.1 126.4zM865.6 127.5L868.7 126.5L868.3 121.8L866.7 120.2L862.3 123.2L862.1 126.1zM438.0 132.3L450.9 136.1L458.7 132.2L458.4 127.6L454.3 116.3zM559.8 130.6L561.0 133.5L568.6 134.8L572.3 133.4L572.6 127.0L567.2 125.0L562.1 127.9zM756.0 133.5L755.5 128.5L752.0 126.8L749.6 128.4L748.3 133.0L753.3 136.0zM798.1 127.0L797.8 126.6L789.8 128.8L788.7 132.0L788.8 132.1L796.9 135.2L797.5 134.4zM830.5 131.7L833.1 135.4L837.2 132.6L837.4 127.5L833.5 126.4L829.5 126.8zM682.6 136.5L684.6 139.0L688.0 138.9L689.6 133.4L689.2 133.0L684.2 134.3zM805.4 135.6L802.5 140.0L804.0 143.3L809.6 139.9L806.9 135.7zM806.9 135.7L809.6 139.9L811.0 140.2L815.1 139.3L815.9 138.0L815.7 137.0L814.5 134.9L809.1 132.7zM822.4 138.0L823.2 138.7L828.4 138.5L827.3 134.3L823.7 133.9zM522.5 145.7L530.1 139.8L524.9 137.3L518.4 143.2zM606.5 145.6L613.9 146.5L614.2 145.9L613.2 141.0L611.0 139.1L605.9 144.4zM655.7 136.7L653.3 138.4L652.7 142.7L653.2 144.6L655.2 146.1L659.2 144.8L661.2 138.7zM670.8 145.7L673.1 143.6L672.2 141.2L670.4 139.2L666.7 140.1L665.6 145.5zM681.9 136.4L678.7 138.7L678.8 143.3L682.7 145.4L684.6 139.0L682.6 136.5zM684.6 139.0L682.7 145.4L682.8 145.5L689.2 145.2L688.9 139.6L688.0 138.9zM865.9 140.1L865.7 147.3L880.0 148.2L880.0 143.0zM300.9 149.0L299.4 144.5L285.7 141.5L285.4 143.4L294.1 160.4L294.8 160.3zM364.2 142.5L362.4 142.7L357.5 149.0L374.4 155.2zM375.0 157.2L375.2 157.8L375.9 158.6L381.1 158.8L395.0 150.2L392.3 142.2L378.9 145.7L374.8 155.6zM555.3 143.8L555.1 143.8L551.8 153.7L560.8 154.1L561.6 153.1zM770.9 145.6L773.0 150.5L776.3 150.6L777.8 149.0L779.4 146.0L772.6 143.8zM436.1 153.5L442.6 169.1L444.0 168.7L451.5 150.9L438.1 148.0zM460.6 158.3L472.8 158.9L473.6 155.4L467.1 148.6L461.2 147.4L459.1 149.8zM599.2 156.8L606.0 156.3L609.0 153.1L605.6 149.8L601.8 150.5zM622.5 153.4L621.2 157.1L621.6 158.2L626.1 159.4L626.9 158.4L626.9 152.5zM644.1 157.1L644.3 153.2L637.8 152.9L635.9 157.7L638.0 159.6L643.0 159.1zM650.1 159.4L652.2 157.3L651.5 154.8L648.6 153.0L645.0 152.4L644.3 153.2L644.1 157.1zM820.0 158.5L820.6 150.1L817.6 150.7L814.5 153.3L814.5 157.3L819.6 158.9zM431.1 154.1L422.5 166.0L439.2 171.2L440.8 171.3L442.6 169.1L436.1 153.5zM488.0 167.3L487.9 157.8L485.1 156.3L477.0 163.4L483.8 169.1L484.4 169.2zM541.3 157.7L543.4 166.8L545.3 167.5L550.3 160.7L550.3 160.4zM570.6 167.3L573.0 169.8L585.1 168.6L587.2 164.5L583.5 158.3L572.0 162.5zM613.3 159.6L608.0 162.0L607.6 162.5L608.6 165.3L616.6 164.0zM621.6 158.2L619.2 164.2L620.9 165.5L626.9 162.2L626.1 159.4zM635.4 166.8L636.6 166.0L638.0 159.6L635.9 157.7L633.0 157.9L631.0 164.7zM663.9 164.3L665.2 165.3L670.9 160.6L670.8 159.6L664.9 158.1zM701.5 164.0L703.8 166.8L709.7 165.0L704.9 159.2L702.1 159.9zM735.1 159.2L734.3 160.1L734.2 161.9L735.1 163.8L740.6 164.6L741.1 159.4L740.7 158.9zM770.9 164.1L771.8 158.1L770.5 157.1L763.6 157.2L763.0 157.7L762.7 158.6L764.9 163.2zM777.8 164.5L782.0 165.2L784.5 163.2L783.4 158.4L782.2 157.1L776.8 157.1L776.4 157.4zM525.1 170.6L525.3 170.9L535.6 175.4L536.4 168.9L534.0 166.0L529.1 164.7zM659.3 171.2L659.5 171.2L659.2 162.4L658.5 161.7L658.0 161.6L654.2 164.5L654.8 171.3zM819.0 169.3L824.0 170.7L824.4 170.3L826.5 164.1L820.0 163.7L818.4 165.6zM855.1 168.7L854.8 166.7L851.9 163.9L847.9 165.2L847.8 165.3L849.7 172.1L849.8 172.1L850.1 172.0zM761.9 176.5L762.7 183.3L767.9 181.9L768.1 180.3L765.5 174.5zM802.1 184.7L803.1 184.8L804.7 183.7L805.4 178.3L801.7 176.1L798.9 178.4L799.1 182.3zM867.6 182.2L866.2 176.7L860.1 179.6L860.7 181.4L866.7 183.4zM474.8 179.5L466.9 188.2L474.7 189.8L476.4 188.6L475.0 179.6zM642.1 183.9L643.2 188.1L644.1 189.1L648.2 189.3L649.2 184.4zM728.6 185.7L724.9 184.0L721.6 189.4L726.8 191.4L728.8 186.7zM756.9 182.8L754.3 179.1L749.1 187.5L749.7 188.9L754.4 190.6L754.6 190.4zM793.4 182.5L793.1 187.9L797.0 188.0L802.1 184.7L799.1 182.3zM864.6 189.4L867.1 187.5L866.7 183.4L860.7 181.4L859.0 184.1zM726.8 191.4L721.6 189.4L719.2 190.2L719.0 193.2L722.7 197.2L727.6 194.4zM872.6 189.8L872.5 193.6L880.0 200.6L880.0 184.7zM548.4 196.0L545.1 194.3L538.1 198.1L539.0 206.5L546.5 206.5zM614.9 205.9L622.4 198.7L622.2 198.0L618.2 196.0L618.1 196.0L613.0 204.0zM722.7 197.2L719.0 193.2L714.6 195.7L713.2 197.4L718.6 201.4L722.3 199.1zM754.2 196.2L753.7 195.5L748.6 196.8L748.8 201.6L754.5 201.7zM833.8 201.7L837.4 199.9L837.9 197.4L837.8 197.3L832.1 195.0L828.1 195.9L830.4 202.2zM384.3 216.5L387.5 210.9L389.8 198.8L388.4 195.9L378.2 195.5L375.9 196.7L362.0 218.2L371.5 220.5L379.4 220.5zM728.2 204.2L726.5 203.7L720.0 207.7L721.5 209.9L727.5 209.1L728.4 207.1zM544.1 218.1L537.8 207.9L533.7 214.7L535.4 222.0L542.9 222.2zM722.9 221.1L722.5 215.4L721.8 214.7L714.5 214.8L714.0 215.4L715.2 220.6L717.3 222.2L721.4 222.1zM498.5 223.1L487.5 219.7L486.3 228.2L489.2 229.1L497.0 227.2zM554.8 228.2L555.1 228.1L555.5 225.9L553.5 218.2L544.8 224.1L545.8 226.8zM721.4 222.1L717.3 222.2L715.7 226.9L716.3 227.8L721.8 228.6zM757.7 230.0L759.4 228.7L758.2 222.2L758.0 221.9L755.2 222.2L751.4 226.3L752.5 232.4zM779.4 223.7L781.4 227.3L784.6 228.6L788.5 225.9L783.9 220.6L779.4 223.2zM861.8 219.6L861.2 228.0L864.1 228.8L868.6 221.5zM752.5 234.5L759.9 234.4L757.7 230.0L752.5 232.4L751.9 233.6zM389.3 248.5L406.9 236.7L405.4 234.3L386.2 231.8L384.1 240.6L387.6 246.2zM508.5 238.6L508.8 232.3L500.1 231.0L497.1 239.3zM556.4 239.5L557.2 239.6L561.5 235.2L562.1 233.8L560.3 231.8L555.1 228.1L554.8 228.2L550.5 235.8zM610.2 242.3L610.0 246.0L615.5 248.6L615.7 248.0L615.8 242.6L613.8 240.8zM451.3 244.9L438.8 255.8L440.8 262.3L458.6 266.8L460.5 263.7L461.3 260.6L459.6 254.1zM532.3 251.7L527.3 251.3L521.8 258.0L528.7 263.2L535.9 256.0zM821.5 255.5L819.0 253.5L812.3 258.0L815.9 259.6L822.2 256.8zM856.6 255.1L854.0 252.8L850.9 253.6L850.0 257.2L850.1 257.4L856.7 260.7zM461.3 260.6L460.5 263.7L476.2 264.0L479.5 261.3L480.6 257.4L480.3 257.3L467.6 256.9zM506.2 265.4L506.3 265.2L504.6 257.0L495.4 262.8L496.0 268.3zM610.5 264.4L616.0 262.7L616.1 261.9L609.3 258.0L609.0 258.6zM708.4 264.8L710.8 266.1L716.0 265.8L717.4 264.1L717.2 261.6L712.5 259.3zM729.0 259.5L726.0 261.2L725.8 264.6L726.7 265.5L731.2 264.2L731.8 260.3zM723.6 272.5L724.4 272.6L727.3 269.5L726.7 265.5L725.8 264.6L720.1 265.5L722.8 271.7zM440.8 262.3L434.2 273.0L441.2 283.1L449.6 283.6L461.2 277.8L458.6 266.8zM577.1 277.9L578.7 278.5L584.1 278.9L587.8 274.3L577.5 268.5zM846.1 282.8L853.9 285.4L854.9 283.5L850.4 278.5L848.0 278.4zM867.4 278.7L867.7 284.5L878.2 284.1L868.2 276.7zM560.8 282.2L553.2 283.7L555.9 289.8L558.0 291.1L563.4 284.4zM516.7 289.7L506.7 288.8L507.8 294.7L514.8 297.2L517.7 290.8zM514.9 333.1L525.6 323.4L521.6 319.8L516.1 320.2L508.9 326.3zM551.5 317.8L553.5 328.0L563.0 329.5L564.4 326.7L563.3 319.8L551.6 317.7zM558.7 345.9L558.6 343.2L552.9 339.7L548.3 340.9L545.9 344.5L545.8 345.3L548.3 347.8L553.2 348.6zM526.0 343.1L518.2 349.0L516.8 354.3L517.0 355.3L520.4 359.3L523.0 359.3L529.5 350.5L529.7 348.2L528.2 343.2zM473.5 354.3L461.7 358.3L464.3 365.1L476.0 368.8L476.9 359.1zM478.9 401.2L479.1 407.0L480.5 408.2L485.3 406.5L491.9 399.6L484.4 395.9zM485.3 406.5L498.2 413.4L499.5 411.8L496.2 402.0L493.2 399.3L491.9 399.6zM481.0 412.2L480.5 408.2L479.1 407.0L466.5 407.4L461.5 414.3L462.2 416.5L478.9 415.2zM456.8 412.5L451.3 414.5L438.7 426.1L441.4 435.0L454.7 435.0L462.5 418.8L462.2 416.5L461.5 414.3z"/>
<path fill="#f6cab8" stroke="#fff" stroke-opacity="0.22" stroke-width="0.5" d="M487.8 107.9L488.8 109.4L492.1 111.9L506.2 107.2L510.4 100.0L485.9 100.0zM600.1 108.9L601.7 110.8L607.0 109.0L605.2 100.0L602.3 100.0zM686.7 105.5L690.0 106.0L695.5 100.0L686.9 100.0zM836.2 107.9L837.9 109.4L839.7 108.7L840.7 107.9L840.5 100.0L835.4 100.0zM848.4 108.4L848.2 107.9L840.7 107.9L839.7 108.7L843.5 113.9L847.1 113.1zM507.2 118.6L517.7 122.9L519.1 118.7L511.2 100.0L510.4 100.0L506.2 107.2zM640.5 114.7L640.6 116.6L647.0 120.2L648.9 114.2L647.6 112.4zM670.6 113.2L664.5 112.9L664.1 113.6L664.2 118.7L665.6 120.6L668.6 119.8L671.4 115.1zM759.0 121.5L759.4 121.9L767.0 121.2L767.4 120.7L766.4 118.0L759.9 114.1L758.9 114.4zM847.1 113.1L843.5 113.9L840.6 116.9L841.1 118.7L846.9 119.2L848.0 115.6zM538.0 117.9L530.4 124.7L529.8 126.1L535.3 132.0L543.3 130.4L543.3 119.5L539.1 117.7zM805.9 127.0L802.0 119.0L799.3 118.8L796.7 122.0L797.8 126.6L798.1 127.0L805.3 127.2zM405.4 119.7L396.3 134.8L405.8 136.5L417.1 122.6L417.0 122.5zM683.0 126.4L684.2 134.3L689.2 133.0L688.7 127.5L688.0 126.9L683.1 126.4zM578.7 144.5L585.4 143.7L583.1 134.1L576.5 136.8L576.4 137.6zM605.9 136.7L605.6 133.6L602.1 131.1L594.3 133.1L598.7 141.1L599.9 141.1zM677.2 130.9L674.0 132.9L677.1 138.2L678.7 138.7L681.9 136.4zM796.9 135.2L788.8 132.1L787.7 138.3L790.6 141.0L794.5 140.5L796.9 136.7zM270.0 131.9L270.0 148.6L278.5 139.1zM635.2 144.8L635.4 139.4L634.4 138.3L628.7 142.1L629.0 143.3L635.0 144.9zM639.6 145.0L641.2 140.9L640.8 139.8L635.4 139.4L635.2 144.8zM731.7 141.8L731.9 139.9L726.4 137.5L723.8 139.1L723.1 140.7L724.6 143.6L725.9 145.1zM553.7 143.4L548.1 145.1L541.5 150.8L551.7 153.7L551.8 153.7L555.1 143.8zM627.2 146.8L622.3 146.4L620.4 150.9L622.5 153.4L626.9 152.5L628.7 151.1zM719.0 148.1L717.0 144.7L713.8 146.5L715.2 152.5L719.9 151.0zM726.3 152.8L731.3 152.0L733.3 145.7L726.4 147.5L725.6 152.1zM314.0 164.1L317.7 157.3L316.0 153.2L300.9 149.0L294.8 160.3L309.4 167.5zM632.5 157.5L633.0 157.9L635.9 157.7L637.8 152.9L636.9 151.7L633.8 150.3L630.3 151.6zM656.5 158.8L658.2 153.2L656.3 151.2L651.5 154.8L652.2 157.3zM682.3 148.3L676.9 151.1L678.7 156.3L681.2 156.8L685.4 152.7zM626.1 159.4L626.9 162.2L630.7 164.8L631.0 164.7L633.0 157.9L632.5 157.5L626.9 158.4zM694.6 164.8L694.1 160.8L691.6 158.8L686.8 165.8L692.2 167.5zM763.0 167.4L764.9 163.2L762.7 158.6L758.6 161.6L757.9 162.7zM784.5 163.2L785.9 163.6L787.4 163.2L792.9 158.9L790.5 155.7L783.4 158.4zM616.6 164.0L608.6 165.3L609.1 170.1L613.2 170.1L616.8 164.2zM709.7 165.0L703.8 166.8L703.0 170.6L706.6 171.8L711.3 168.3L711.6 165.6zM626.0 177.5L626.6 172.4L625.8 170.7L622.7 169.3L618.7 172.6L622.7 178.4L624.0 178.4zM652.7 172.8L650.3 172.0L647.7 173.2L643.7 176.8L643.6 178.5L649.1 180.2zM364.9 172.6L352.1 173.1L352.1 173.6L358.7 184.6L372.7 182.5L373.5 180.3zM440.7 180.2L440.8 171.3L439.2 171.2L421.6 179.8L421.6 179.8L433.7 188.2zM561.8 173.4L555.6 178.8L558.7 183.1L561.1 183.6L564.1 179.1zM611.0 184.2L613.4 183.8L611.4 177.9L607.5 176.1L603.1 181.9zM621.6 187.1L623.8 184.3L624.0 178.4L622.7 178.4L618.5 180.3L617.1 182.9zM713.3 175.0L712.9 182.1L714.4 182.5L720.1 178.1L719.7 176.9L716.2 174.0L714.1 174.0zM781.0 179.9L785.7 182.6L786.7 182.0L788.3 175.7L784.1 174.5zM842.8 178.0L840.7 176.0L839.3 176.8L837.7 184.5L842.6 186.7L845.2 183.2zM850.0 182.9L849.8 177.7L849.3 176.9L842.8 178.0L845.2 183.2L849.0 183.2zM625.4 190.3L631.1 191.3L633.6 187.5L628.6 184.5L625.1 189.9zM634.5 186.4L634.0 187.3L637.8 190.1L643.2 188.1L642.1 183.9L642.0 183.8zM698.3 189.9L700.8 190.1L702.2 186.2L698.2 181.3L696.1 184.5zM710.2 189.0L712.7 189.7L717.8 188.8L717.4 185.4L714.4 182.5L712.9 182.1L709.5 183.6zM613.7 189.0L606.7 191.2L610.4 196.0L613.9 194.7zM622.2 198.0L623.4 196.6L625.4 190.3L625.1 189.9L621.7 187.7L619.2 190.2L618.2 196.0zM780.0 197.5L784.3 197.1L786.7 190.1L785.9 189.3L781.6 189.0L778.3 190.2L777.4 196.3zM586.3 204.6L585.2 197.2L581.9 195.1L576.0 197.1L576.5 201.0zM747.0 203.3L748.8 201.6L748.6 196.8L747.7 196.2L742.3 197.5L744.0 202.9zM327.0 209.4L324.0 202.5L298.8 200.9L294.6 205.1L294.6 210.3L299.3 212.1L323.4 211.5zM610.2 202.7L606.8 208.0L613.3 212.2L615.3 206.8L614.9 205.9L613.0 204.0zM665.5 208.2L670.3 208.2L673.3 206.3L673.2 205.8L671.9 204.4L666.3 200.4L666.0 200.5L664.4 203.9zM680.8 206.2L682.8 211.5L687.7 210.7L688.6 208.6L686.5 204.6L682.1 204.2zM785.6 203.9L779.8 204.2L779.3 207.9L782.9 210.6L786.2 209.5zM571.9 206.8L570.2 212.7L570.2 212.9L570.4 213.2L582.3 214.2L582.9 213.0L583.6 210.0L573.0 206.3zM611.1 215.0L613.3 212.5L613.3 212.2L606.8 208.0L606.8 208.0L608.0 214.4zM752.9 211.4L752.8 213.7L759.6 217.9L759.6 217.9L760.4 210.6zM855.1 216.1L859.3 214.0L859.5 209.5L853.8 210.4L854.3 214.7zM424.5 225.3L423.0 213.7L415.8 210.1L407.9 210.4L405.4 216.5L423.2 226.0zM753.1 220.2L752.2 214.6L746.2 217.1L747.2 219.9zM778.7 214.8L777.3 220.0L779.4 223.2L783.9 220.6L784.5 219.8L783.4 216.4L781.1 214.0zM565.6 233.2L570.3 223.6L564.5 222.3L560.3 231.8L562.1 233.8zM592.2 220.7L588.0 220.8L585.2 228.9L585.2 229.0L592.2 228.7L592.8 221.2zM736.4 220.4L736.4 225.2L741.2 226.1L743.1 225.8L741.1 220.6L740.0 219.4zM813.2 228.3L814.4 228.3L818.1 226.5L817.3 219.9L815.8 219.2L811.3 220.7L812.2 227.1zM603.8 228.8L603.7 227.6L601.4 225.3L593.9 230.5L594.1 231.6L601.3 233.8zM721.9 228.8L721.8 228.6L716.3 227.8L715.9 232.3L720.5 233.5zM842.4 226.5L841.1 228.8L841.7 231.6L843.1 232.8L848.7 231.0L849.1 229.0zM476.1 239.5L476.4 234.5L463.8 228.7L466.6 243.3L467.8 244.4L471.3 245.0L473.8 243.4zM631.0 240.0L624.3 236.4L622.6 237.3L622.7 240.0L626.2 243.1L631.2 241.6zM701.2 233.2L704.2 241.4L708.6 241.5L708.5 233.7L702.0 232.6zM341.7 245.0L333.8 237.0L325.0 248.5L332.4 254.6L342.5 255.2zM556.4 239.5L549.9 242.9L549.2 245.5L552.1 248.8L557.8 243.8L557.2 239.6zM868.0 247.1L875.2 244.5L866.3 238.2L864.0 242.1L865.3 245.8zM727.7 251.5L733.2 252.5L736.3 247.5L733.3 242.6L727.8 251.1L727.7 251.5zM796.8 250.2L795.9 246.8L790.4 245.5L788.4 248.3L791.3 253.0zM861.1 253.1L860.3 248.7L856.9 247.5L856.1 247.6L854.0 252.8L856.6 255.1zM494.8 262.0L495.4 262.8L504.6 257.0L504.7 256.2L495.3 254.5zM628.9 252.5L625.6 259.6L625.7 259.8L626.1 260.0L631.2 257.5L632.1 252.1zM704.7 261.3L704.9 260.9L704.4 255.2L701.7 253.4L697.6 255.2L696.1 259.6L696.2 259.8zM312.8 254.3L312.1 250.4L310.6 249.9L294.4 252.9L294.2 262.0L299.6 270.5L309.5 267.9zM629.2 265.9L634.4 265.1L635.0 260.4L631.2 257.5L626.1 260.0L628.7 265.6zM749.9 268.0L754.9 264.7L753.8 260.3L749.1 261.5L748.1 265.9zM756.3 265.9L756.8 270.0L761.2 272.7L762.9 272.1L760.6 264.9zM869.6 263.1L865.6 265.9L865.9 272.2L868.2 273.3L880.0 270.5L880.0 269.0zM700.7 279.0L704.7 274.1L698.6 271.4L697.2 272.3L697.0 278.8L697.3 279.0zM746.5 272.9L746.9 276.7L753.5 276.8L753.9 271.8L749.7 269.9zM647.3 280.8L649.9 286.5L653.4 284.8L649.5 278.9L649.3 278.9zM745.7 280.4L749.7 284.0L751.9 284.2L753.9 283.0L755.7 278.6L753.5 276.8L746.9 276.7L745.2 279.3zM878.2 284.1L867.7 284.5L867.1 284.8L867.1 290.4L867.8 291.6L880.0 290.9L880.0 284.3zM592.9 303.4L588.2 308.6L588.2 308.7L593.3 311.3L597.5 311.2L599.3 307.8L600.1 303.1zM861.3 308.4L859.2 310.6L859.6 313.6L862.7 317.2L866.0 316.6L867.9 313.7L866.9 308.7L866.7 308.1zM538.0 319.3L537.8 321.1L546.1 320.8L550.7 317.8L542.6 312.4zM851.5 323.2L845.6 329.7L849.1 334.2L850.1 333.8L853.0 322.8L852.4 322.8zM488.4 333.2L492.3 337.4L496.6 334.4L502.4 325.7L495.7 323.7L490.5 326.8zM462.2 337.4L456.0 350.0L459.5 357.3L461.7 358.3L473.5 354.3L475.1 352.5L475.8 342.1L474.3 337.5zM546.3 353.6L544.2 356.0L548.1 359.6L554.1 358.0L553.1 355.3zM878.8 347.1L872.5 355.7L875.0 361.1L880.0 364.9L880.0 346.6zM487.7 360.9L486.5 365.9L486.8 367.3L499.4 366.0L497.7 357.7L497.2 357.4L493.6 356.9zM486.4 375.5L496.0 379.9L500.8 366.9L499.4 366.0L486.8 367.3L484.7 372.1zM880.0 374.1L880.0 367.4L867.7 366.9L866.6 372.4zM461.2 388.7L464.9 381.5L456.8 376.6L448.6 377.9zM388.5 396.9L395.1 411.3L409.0 402.1L411.5 383.8L406.9 379.6L394.1 384.3zM365.8 400.4L365.7 401.1L370.4 414.1L371.9 414.7L380.0 396.5L373.0 393.0zM371.9 414.7L373.6 416.2L393.6 414.2L394.7 413.2L395.1 411.3L388.5 396.9L380.0 396.5zM462.2 416.5L462.5 418.8L476.4 426.4L478.9 415.2zM310.6 419.4L307.8 435.0L336.0 435.0L328.4 417.7L327.6 417.3z"/>
<path fill="#f6c3ae" stroke="#fff" stroke-opacity="0.22" stroke-width="0.5" d="M438.5 100.0L411.9 100.0L418.2 114.6zM830.0 107.0L836.2 107.9L835.4 100.0L830.0 100.0zM857.4 108.1L861.5 106.8L862.0 106.2L859.1 100.0L852.8 100.0zM418.2 114.6L418.2 115.3L438.0 112.5L448.3 100.0L438.5 100.0zM746.8 106.0L743.1 108.4L744.2 112.8L744.5 112.8L750.6 108.6zM766.4 118.0L767.9 113.5L765.1 107.8L763.7 108.0L759.9 114.1zM773.6 113.5L780.3 111.5L778.4 109.1L772.1 107.8L772.8 112.7zM751.4 120.6L753.6 114.6L745.5 113.4L748.8 120.0L749.5 120.3zM798.3 113.9L799.3 118.8L802.0 119.0L805.6 117.8L805.7 114.2L800.2 111.6zM394.1 135.4L396.3 134.8L405.4 119.7L402.0 116.2L389.4 124.7L390.4 131.5zM458.4 127.6L473.8 125.4L473.9 116.1L471.6 113.3L470.6 112.6L454.2 107.7L454.3 116.3zM518.5 124.4L517.7 122.9L507.2 118.6L502.5 123.8L503.6 126.9L514.8 130.6zM592.8 129.4L592.7 123.5L586.5 117.4L584.4 118.4L580.7 123.6L580.6 124.0L581.2 124.8L586.0 130.0L592.3 130.8zM741.5 119.9L735.5 121.0L734.6 121.8L734.5 125.3L740.9 128.5L743.7 125.8L741.7 120.1zM744.2 125.9L749.6 128.4L752.0 126.8L752.1 121.6L751.4 120.6L749.5 120.3zM759.1 127.2L760.8 128.1L766.0 126.6L767.0 121.2L759.4 121.9zM304.3 136.1L302.2 126.2L289.0 121.1L288.7 132.4zM581.2 124.8L575.3 135.5L576.5 136.8L583.1 134.1L586.0 130.0zM678.3 126.9L674.3 124.4L670.7 126.5L670.2 132.4L671.5 133.4L674.0 132.9L677.2 130.9L678.8 127.4zM732.7 131.7L733.2 127.0L726.6 126.5L726.6 132.5L727.1 133.1zM783.1 125.8L784.6 131.5L788.7 132.0L789.8 128.8L788.5 125.5L784.2 125.4zM559.6 140.7L561.0 133.5L559.8 130.6L554.7 128.7L547.1 132.4L547.2 134.9L553.7 143.4L555.1 143.8L555.3 143.8zM666.7 140.1L670.4 139.2L671.5 133.4L670.2 132.4L665.1 131.6L663.0 134.9L662.5 137.9zM753.3 136.0L748.3 133.0L746.8 133.8L745.3 138.7L748.9 141.4L751.8 141.2L753.5 139.2zM688.9 139.6L689.2 145.2L690.2 145.8L695.5 142.5L695.8 141.3L694.4 139.0zM709.6 146.9L713.8 146.5L717.0 144.7L717.4 142.2L714.5 139.2L712.5 139.0L709.1 146.6zM771.9 140.4L772.6 143.8L779.4 146.0L779.5 145.9L778.7 140.2L775.7 137.5L772.2 140.1zM796.9 136.7L794.5 140.5L797.2 145.5L802.8 146.1L803.4 145.3L804.0 143.3L802.5 140.0zM656.3 151.2L655.2 146.5L648.6 153.0L651.5 154.8zM663.8 147.0L664.9 151.3L670.3 152.5L670.8 145.7L665.6 145.5zM779.5 145.9L779.4 146.0L777.8 149.0L782.5 155.7L784.6 151.0L781.0 146.0zM357.5 149.0L357.0 149.4L357.6 155.5L375.0 157.2L374.8 155.6L374.4 155.2zM609.0 153.1L606.0 156.3L608.0 162.0L613.3 159.6L613.9 155.9L612.8 153.2zM726.6 156.6L727.9 157.9L734.3 160.1L735.1 159.2L735.1 153.4L731.3 152.0L726.3 152.8zM740.7 158.9L741.1 159.4L746.2 160.5L748.5 157.1L746.7 154.7L741.8 153.9zM790.6 154.3L790.5 155.7L792.9 158.9L793.6 159.1L798.5 153.8L796.4 152.1zM497.9 169.8L499.9 163.1L495.3 154.1L495.2 154.1L487.9 157.8L488.0 167.3zM697.6 172.6L699.5 172.4L697.8 165.8L694.6 164.8L692.2 167.5L692.7 170.6zM733.8 170.9L735.1 163.8L734.2 161.9L727.9 164.8L727.2 165.8L728.9 170.0zM800.1 162.7L798.4 162.8L797.4 163.4L799.1 170.3L800.1 170.7L805.5 169.4L806.2 165.5zM484.6 175.0L486.6 178.9L497.1 175.9L499.4 172.6L497.9 169.8L488.0 167.3L484.4 169.2zM546.0 173.8L550.1 178.5L552.7 177.7L554.5 170.5L552.9 169.1L546.5 169.2zM635.0 172.8L626.6 172.4L626.0 177.5L628.8 179.4L634.1 179.1L634.6 178.7zM745.8 175.7L748.8 178.3L752.3 178.0L750.2 170.1L748.3 169.1L746.0 171.4zM811.5 171.1L809.4 172.4L809.2 175.5L812.4 178.2L818.3 177.7L817.2 171.5zM389.4 180.4L390.7 191.2L407.1 186.4L407.7 174.1L405.9 172.8zM510.0 177.6L512.5 184.5L516.9 187.2L525.8 181.2L513.7 175.8L510.0 177.3zM552.8 188.2L552.8 188.2L558.7 183.1L555.6 178.8L552.7 177.7L550.1 178.5L547.6 183.3L552.6 188.1zM650.8 182.3L649.1 180.2L643.6 178.5L642.1 180.1L642.0 183.8L642.1 183.9L649.2 184.4zM736.3 184.0L730.1 184.2L728.6 185.7L728.8 186.7L735.2 190.7L737.9 189.7zM837.7 184.5L836.7 184.8L836.1 190.8L838.8 192.0L842.9 189.9L842.6 186.7zM855.4 189.3L857.8 190.4L864.4 189.7L864.6 189.4L859.0 184.1L855.3 186.7zM485.7 198.5L493.8 200.6L500.3 191.3L499.4 189.3L499.3 189.1L485.9 191.5zM535.4 194.8L534.4 183.8L531.0 183.9L523.1 192.4L523.8 199.0zM550.4 195.5L552.8 188.2L552.6 188.1L545.0 192.1L545.1 194.3L548.4 196.0zM644.1 189.1L642.2 195.6L643.7 196.7L645.7 196.6L648.9 195.4L649.3 190.2L648.2 189.3zM666.0 200.5L666.3 200.4L670.7 195.4L670.8 194.1L664.9 190.3L662.8 191.5L662.4 197.9zM673.0 197.3L676.9 199.1L676.9 191.2L673.8 191.2L670.8 194.1L670.7 195.4zM800.2 195.4L800.1 194.2L792.2 192.2L792.3 193.0L794.0 197.5L799.2 196.8zM800.4 193.8L800.1 194.2L800.2 195.4L805.8 199.1L809.4 195.6L808.1 192.4L803.9 190.6zM814.2 195.1L814.1 188.9L811.2 188.5L808.1 192.4L809.4 195.6L812.3 196.4zM316.5 191.0L303.2 192.6L298.8 200.9L324.0 202.5L323.2 196.4L321.5 194.1zM421.1 194.9L415.7 191.5L413.1 191.4L405.0 205.3L407.9 210.4L415.8 210.1zM568.9 204.2L571.9 206.8L573.0 206.3L576.5 201.0L576.0 197.1L574.7 196.1L568.0 199.3zM728.9 194.9L727.6 194.4L722.7 197.2L722.3 199.1L726.5 203.7L728.2 204.2L730.5 202.8zM847.4 198.0L850.1 203.0L853.8 203.1L855.4 201.9L854.6 197.6L854.1 197.0zM860.0 195.6L854.6 197.6L855.4 201.9L860.0 203.2L863.5 197.2zM863.5 197.2L860.0 203.2L861.2 205.4L867.9 204.2L869.4 201.9L867.1 197.5L864.6 196.7zM872.5 193.6L867.1 197.5L869.4 201.9L879.6 203.3L880.0 203.2L880.0 200.6zM807.6 209.4L804.6 202.9L799.5 203.9L800.4 209.6L800.9 209.9L807.6 209.5zM715.2 209.2L714.5 214.8L721.8 214.7L721.5 209.9L720.0 207.7L717.9 206.8zM697.1 217.0L695.0 213.3L690.0 214.3L691.5 220.9L695.7 219.2zM744.1 215.5L743.6 213.6L739.1 213.0L734.0 216.8L734.5 218.4L736.4 220.4L740.0 219.4zM767.0 218.0L770.9 223.8L773.3 219.1L771.7 217.4L767.9 216.4L767.1 217.4zM773.3 219.1L777.3 220.0L778.7 214.8L775.5 212.6L771.7 217.4zM804.2 219.7L810.7 220.4L811.3 214.7L807.6 212.7L804.3 218.1zM385.2 228.3L401.0 223.7L384.3 216.5L379.4 220.5zM736.4 225.2L736.4 220.4L734.5 218.4L727.5 223.0L729.3 226.7L734.1 228.1zM823.2 227.4L824.9 224.5L821.9 218.1L817.3 219.9L818.1 226.5L822.9 227.6zM316.6 230.6L315.2 224.7L308.2 223.4L301.8 233.4L304.9 235.4zM627.6 232.7L626.3 230.3L623.1 228.5L622.4 228.9L620.3 235.7L622.6 237.3L624.3 236.4zM688.6 235.2L690.4 228.5L685.8 228.0L683.6 230.0L684.5 234.0L685.8 235.2zM854.0 233.7L858.3 233.8L859.5 228.2L856.2 227.1zM282.3 240.0L270.0 229.8L270.0 247.8zM543.6 231.1L538.1 233.7L540.7 241.2L548.2 237.8L549.0 236.3zM804.8 234.2L796.9 235.9L796.3 238.0L798.0 242.4L804.1 239.1zM466.6 243.3L451.8 241.6L451.3 244.9L459.6 254.1L467.8 244.4zM576.0 236.3L575.2 238.4L574.5 246.4L579.7 249.5L584.7 249.5L585.0 243.8L584.5 242.8zM688.2 247.7L689.5 246.1L689.7 241.8L682.7 241.8L682.1 242.2L682.4 243.8L685.1 248.5zM722.0 242.9L721.9 245.0L727.7 251.5L727.8 251.1L726.6 242.1zM552.4 251.6L552.1 248.8L549.2 245.5L543.1 245.2L541.7 253.4zM621.0 246.4L615.7 248.0L615.5 248.6L615.5 252.0L622.5 252.3L622.6 252.2L622.4 247.4zM676.6 258.9L679.9 261.2L683.9 257.0L682.0 252.3L679.2 252.1zM346.1 256.7L356.0 271.4L368.5 264.6L369.4 259.5L362.4 251.3zM618.5 265.7L618.7 265.7L625.7 259.8L625.6 259.6L623.2 257.5L616.8 259.6L616.1 261.9L616.0 262.7zM655.3 261.5L653.2 258.1L647.6 259.3L648.3 263.5L652.7 265.7zM784.9 259.7L786.5 264.6L787.6 265.2L792.4 261.6L792.2 259.2L790.3 257.4zM294.1 285.1L296.3 281.8L299.6 270.5L294.2 262.0L277.3 270.2L282.5 281.7zM531.3 274.8L530.6 268.5L528.6 265.7L518.6 269.5L518.3 271.0L520.9 276.0L525.2 277.6zM640.2 274.9L643.2 272.6L643.0 266.6L641.5 265.7L636.2 266.4L636.3 272.2zM667.7 266.3L665.8 265.2L663.1 266.2L660.2 271.4L660.4 272.0L665.1 273.3zM684.8 267.5L685.0 270.1L689.5 272.9L692.9 270.0L692.4 267.5L691.5 266.9zM762.9 272.1L766.2 271.9L766.3 271.9L767.1 268.7L765.8 265.1L762.1 263.5L760.6 264.9zM689.5 272.9L689.4 278.1L690.7 279.1L697.0 278.8L697.2 272.3L692.9 270.0zM533.2 275.9L534.6 285.5L543.3 281.0L538.9 274.9zM579.2 288.4L585.4 284.1L584.1 278.9L578.7 278.5L577.5 285.2L578.5 288.5zM811.9 280.5L813.3 283.6L816.8 283.0L819.1 278.3L816.3 275.0zM547.4 282.5L543.3 281.0L534.6 285.5L534.4 286.2L541.4 291.1L544.9 291.6zM706.4 285.7L705.1 289.0L709.3 292.8L712.1 290.5L712.1 286.1L709.2 284.5zM742.9 287.4L736.8 286.6L736.6 287.0L740.2 294.9L743.2 287.8zM835.6 282.9L835.9 290.5L840.7 290.5L840.8 290.3L842.6 284.9L840.1 283.0zM546.0 293.6L546.0 293.4L544.9 291.6L541.4 291.1L531.2 299.2L534.8 301.3zM756.6 296.2L759.8 296.0L761.6 292.0L759.9 287.6L753.5 291.4L753.3 291.7L753.8 293.4zM811.7 299.7L816.9 298.9L818.0 297.7L815.3 291.8L814.9 291.4L812.7 290.7L811.1 298.4zM834.4 304.5L837.3 302.2L835.3 298.8L832.8 297.4L831.7 297.7L829.3 300.1L827.8 303.6L828.8 304.8zM597.5 311.2L598.3 312.8L603.0 316.5L606.0 315.7L606.9 312.5L599.3 307.8zM835.6 312.1L835.0 312.5L836.7 316.8L842.6 319.1L845.6 315.9L845.6 315.6L841.3 310.7L839.6 310.2zM848.7 306.7L847.2 306.5L841.3 310.7L845.6 315.6L846.9 314.7L851.2 309.9zM482.3 316.5L490.5 326.8L495.7 323.7L493.4 313.5L482.6 313.9zM529.1 322.9L537.7 321.3L537.8 321.1L538.0 319.3L533.6 312.0L531.9 312.2zM834.5 322.2L836.3 324.4L842.0 323.8L842.2 323.4L842.6 319.1L836.7 316.8zM854.2 317.1L846.9 314.7L845.6 315.6L845.6 315.9L852.4 322.8L853.0 322.8L854.0 322.6zM797.7 326.6L795.7 322.0L790.7 318.8L790.6 318.8L789.3 321.4L792.2 328.7L797.6 327.2zM535.6 335.8L535.6 335.4L527.3 323.9L526.4 323.8L523.8 333.5L531.1 338.8L534.6 336.9zM553.5 328.0L549.9 330.9L552.6 335.2L563.2 335.4L564.0 334.5L563.0 329.5zM558.6 343.2L563.2 335.4L552.6 335.2L552.9 339.7zM809.5 334.1L804.7 333.8L802.8 334.7L804.3 341.9L810.7 341.3L811.1 341.0zM491.1 344.9L475.8 342.1L475.1 352.5L484.2 352.6L488.8 349.2zM515.5 338.8L506.8 342.8L516.8 354.3L518.2 349.0zM823.2 345.8L824.7 347.0L827.1 347.2L831.3 341.1L830.5 339.9L824.4 339.4L822.0 343.9zM493.6 356.9L497.2 357.4L495.4 343.9L493.3 343.0L491.1 344.9L488.8 349.2zM507.2 355.4L517.0 355.3L516.8 354.3L506.8 342.8L506.1 342.8L502.4 345.0L504.3 353.6zM872.5 355.7L867.5 354.8L866.5 361.9L867.0 362.8L875.0 361.1zM479.9 372.3L476.0 368.8L464.3 365.1L464.3 366.2L467.3 374.4L476.4 375.0zM529.8 367.3L536.4 375.6L541.9 366.4L537.2 361.3L529.1 363.1zM270.2 392.9L272.6 392.1L279.0 377.2L270.0 374.0L270.0 392.9zM860.2 369.9L856.0 372.6L862.6 379.3L864.2 378.7L865.4 373.1zM479.9 372.3L476.4 375.0L475.6 377.9L478.4 387.6L481.6 387.4L486.4 375.5L484.7 372.1zM861.2 391.7L861.7 397.5L863.9 398.4L867.9 395.3L869.3 390.6L866.7 388.9zM284.7 394.8L288.6 406.2L295.6 410.3L300.8 410.1L302.9 391.5L301.5 390.4L294.6 391.0zM864.0 398.5L863.9 398.4L861.7 397.5L856.5 399.3L856.0 402.1L860.0 405.5L864.0 402.8zM452.5 405.5L439.0 407.5L438.9 408.0L451.3 414.5L456.8 412.5zM546.4 422.4L542.0 435.0L554.6 435.0L552.3 425.5z"/>
<path fill="#f5bca6" stroke="#fff" stroke-opacity="0.22" stroke-width="0.5" d="M454.2 107.7L470.6 112.6L482.4 100.0L449.9 100.0zM629.8 105.9L632.3 106.1L634.0 100.0L627.7 100.0zM654.6 109.6L656.2 108.5L652.6 100.2L647.1 107.5L648.0 109.5zM730.0 106.8L739.5 104.2L740.1 100.0L727.9 100.0L729.6 106.4zM767.5 105.9L771.5 106.9L777.4 101.4L778.0 100.0L767.4 100.0zM789.7 109.8L787.3 115.0L790.7 117.5L795.2 113.3L792.1 109.5zM685.2 119.6L681.0 114.3L679.7 114.5L678.5 116.1L683.1 123.9zM543.3 119.5L543.3 130.4L547.1 132.4L554.7 128.7L552.7 120.7L550.2 117.3zM688.0 126.9L690.1 120.4L689.3 118.8L685.2 119.6L683.1 123.9L683.1 126.4zM660.7 126.8L659.2 126.1L653.7 126.6L652.8 128.6L654.2 131.7L656.0 133.1L657.2 132.5zM663.0 134.9L665.1 131.6L662.6 126.7L660.7 126.8L657.2 132.5zM709.8 127.0L707.2 134.4L709.0 135.4L714.5 129.5L714.2 127.7zM738.2 134.3L741.1 131.3L740.9 128.5L734.5 125.3L733.2 127.0L732.7 131.7L735.3 134.7zM569.4 141.5L568.6 134.8L561.0 133.5L559.6 140.7L567.4 145.2L568.0 144.9zM646.9 140.2L647.0 134.6L646.7 134.3L641.4 136.7L640.8 139.8L641.2 140.9L645.1 141.7zM402.2 156.2L406.5 154.4L409.6 142.0L409.2 140.6L405.8 136.5L396.3 134.8L394.1 135.4L392.3 142.2L395.0 150.2zM423.2 143.1L424.1 134.1L409.2 140.6L409.6 142.0L421.5 146.0zM541.5 150.8L548.1 145.1L543.8 139.8L536.1 144.2L536.3 147.0L539.9 151.1zM644.9 149.0L646.8 146.9L645.1 141.7L641.2 140.9L639.6 145.0L640.2 146.0zM784.7 138.7L782.5 145.0L788.8 144.6L790.6 141.0L787.7 138.3zM438.1 147.9L423.2 143.1L421.5 146.0L421.3 150.8L431.1 154.1L436.1 153.5L438.1 148.0zM613.9 146.5L606.5 145.6L605.6 149.8L609.0 153.1L612.8 153.2L614.1 150.9zM633.8 150.3L635.0 144.9L629.0 143.3L627.2 146.8L628.7 151.1L630.3 151.6zM663.0 153.3L664.9 151.3L663.8 147.0L659.2 144.8L655.2 146.1L655.2 146.5L656.3 151.2L658.2 153.2zM707.3 155.0L711.0 152.7L709.6 146.9L709.1 146.6L704.7 145.9L702.8 147.9L702.1 150.0zM572.0 162.5L583.5 158.3L583.6 156.1L577.4 151.3L574.1 153.4L572.0 162.5zM698.7 152.4L695.5 151.9L691.3 158.1L691.6 158.8L694.1 160.8L700.3 158.7zM762.7 158.6L763.0 157.7L755.0 153.5L753.7 155.4L758.6 161.6zM782.2 157.1L782.5 155.7L777.8 149.0L776.3 150.6L776.8 157.1zM606.0 156.3L599.2 156.8L597.4 158.2L596.8 162.3L600.0 163.5L607.6 162.5L608.0 162.0zM714.6 157.6L713.1 160.2L713.0 164.6L714.3 164.8L721.3 161.9L721.3 161.6L718.8 158.2zM864.7 166.1L864.8 165.9L864.5 161.6L859.3 159.4L859.2 159.5L858.0 163.8L862.7 166.8zM375.6 165.4L375.9 158.6L375.2 157.8L351.6 169.2L350.8 170.2L352.1 173.1L364.9 172.6L374.6 166.9zM444.8 168.7L461.4 176.6L467.3 172.3L467.3 171.3L459.7 160.8zM550.3 160.7L545.3 167.5L546.5 169.2L552.9 169.1L553.5 165.3zM606.1 171.6L600.0 163.5L596.8 162.3L596.2 162.9L597.0 172.1L599.8 173.2zM746.0 171.4L748.3 169.1L747.4 165.4L747.1 165.2L741.7 166.0L739.7 170.7zM535.1 183.3L536.2 178.0L535.6 175.4L525.3 170.9L526.1 181.2L531.0 183.9L534.4 183.8zM615.6 175.1L616.1 173.1L613.2 170.1L609.1 170.1L606.9 171.8L607.5 176.1L611.4 177.9zM702.2 186.2L707.3 182.7L705.5 178.9L701.5 177.4L698.1 180.7L698.2 181.3zM301.4 184.9L303.2 192.6L316.5 191.0L314.4 181.4zM326.2 177.9L321.5 194.1L323.2 196.4L332.4 189.6L333.8 183.8L329.2 176.2L327.8 176.4zM648.2 189.3L649.3 190.2L654.5 189.6L653.8 184.0L652.2 182.5L650.8 182.3L649.2 184.4zM867.1 187.5L872.6 189.8L880.0 184.7L880.0 178.7L877.6 178.6L867.6 182.2L866.7 183.4zM574.7 196.1L572.8 190.5L571.6 189.9L566.6 191.9L566.5 198.1L568.0 199.3zM648.9 195.4L653.1 198.0L655.6 194.6L656.4 190.8L654.5 189.6L649.3 190.2zM747.7 196.2L747.2 191.4L740.2 191.7L740.8 196.3L742.3 197.5zM765.8 191.0L762.8 189.1L758.2 190.9L761.0 197.1L761.9 197.7L765.6 196.7zM794.1 203.7L798.2 203.2L799.2 196.8L794.0 197.5L792.4 201.9zM818.9 203.0L821.0 203.8L827.1 195.3L819.7 195.0L818.7 202.7zM829.4 204.4L830.4 202.2L828.1 195.9L827.2 195.3L827.1 195.3L821.0 203.8L821.5 204.3L829.4 204.4zM608.6 200.7L601.3 202.0L599.2 207.8L600.0 209.3L606.8 208.0L606.8 208.0L610.2 202.7zM674.9 207.7L680.8 206.2L682.1 204.2L680.2 199.7L677.5 199.6L673.2 205.8L673.3 206.3zM848.4 204.7L849.0 210.1L853.4 210.1L853.8 203.1L850.1 203.0zM622.3 211.0L619.5 207.5L615.3 206.8L613.3 212.2L613.3 212.5L619.4 215.4L619.9 215.0zM782.9 210.6L781.1 214.0L783.4 216.4L788.5 213.3L786.7 209.8L786.2 209.5zM591.7 216.3L592.2 220.7L592.8 221.2L600.0 220.3L600.4 219.6L601.3 214.9L600.1 212.2L592.4 214.3zM670.6 216.0L675.8 221.3L680.0 214.6L676.0 212.0zM741.1 220.6L746.5 222.7L747.2 219.9L746.2 217.1L744.1 215.5L740.0 219.4zM834.5 214.7L833.0 220.8L836.6 223.4L841.9 221.6L842.1 217.5L839.2 214.8zM862.1 216.6L861.6 219.3L861.8 219.6L868.6 221.5L868.9 221.3L868.8 214.8L865.7 213.0zM578.4 227.2L578.5 227.5L585.2 228.9L588.0 220.8L586.1 219.9zM826.7 229.9L831.6 226.6L829.5 222.7L829.3 222.6L824.9 224.5L823.2 227.4zM607.9 235.4L610.2 233.3L603.8 228.8L601.3 233.8L602.3 237.5zM629.3 226.6L626.3 230.3L627.6 232.7L631.2 233.4L633.4 229.5zM660.0 235.7L665.7 235.6L667.1 233.8L665.3 230.4L659.0 229.1L657.4 233.6zM672.0 232.1L672.4 230.3L670.9 228.5L666.6 228.7L665.3 230.4L667.1 233.8L669.1 233.9zM701.9 229.7L702.0 232.6L708.5 233.7L709.8 232.9L710.4 227.4L710.3 227.1L703.8 224.0zM773.4 233.0L773.0 227.1L770.7 225.6L766.7 226.0L764.3 230.4L765.5 233.6L772.3 233.9zM482.3 230.2L476.4 234.5L476.1 239.5L488.8 244.4zM601.2 241.5L609.7 242.2L607.9 235.4L602.3 237.5zM614.9 235.0L613.5 232.9L610.2 233.3L607.9 235.4L609.7 242.2L610.2 242.3L613.8 240.8zM764.4 235.5L762.5 235.7L756.6 239.0L760.2 241.9L765.0 239.8zM843.1 232.8L843.4 238.3L846.1 240.1L847.4 239.5L850.4 234.3L848.7 231.0zM864.0 242.1L866.3 238.2L866.9 233.8L866.8 233.8L859.4 236.3L858.1 239.1L859.2 240.5zM490.4 247.7L490.9 246.4L488.8 244.4L476.1 239.5L473.8 243.4L485.4 251.9zM671.4 246.8L674.9 246.9L678.2 240.6L676.8 238.8L672.0 239.8L669.8 241.6zM772.6 247.6L771.6 241.0L766.9 242.1L766.2 245.3zM856.9 247.5L859.2 240.5L858.1 239.1L855.8 239.0L853.0 241.3L853.4 246.0L856.1 247.6zM559.4 253.0L560.5 245.6L557.8 243.8L552.1 248.8L552.4 251.6L552.8 252.3zM666.4 247.0L664.8 244.5L659.3 245.8L659.7 251.9L659.8 252.0L661.8 252.1zM754.0 247.5L752.7 253.8L753.3 254.6L760.6 253.2L762.1 251.2L757.8 247.3zM791.3 253.0L788.4 248.3L784.7 250.2L784.0 252.4L789.9 256.5zM825.2 248.4L824.1 247.7L816.9 249.1L816.9 249.3L819.0 253.5L821.5 255.5zM409.5 261.7L420.0 256.4L421.4 253.1L415.6 243.8L411.4 240.4L404.8 255.2zM670.6 254.2L671.3 257.4L673.2 258.8L676.6 258.9L679.2 252.1L677.6 250.9zM742.1 252.1L739.0 255.6L740.0 258.8L743.7 260.3L745.0 259.8L747.5 253.9L744.3 251.4zM837.6 258.2L835.0 253.6L831.4 253.5L828.4 259.1L831.2 261.6L837.4 258.7zM535.9 256.0L528.7 263.2L528.6 265.7L530.6 268.5L537.0 266.8L541.3 260.4L538.8 256.7zM636.2 266.4L641.5 265.7L642.1 258.8L639.2 257.0L635.0 260.4L634.4 265.1zM660.0 264.0L658.3 261.3L655.3 261.5L652.7 265.7L653.3 268.5L654.9 268.8zM732.2 260.1L731.8 260.3L731.2 264.2L734.0 267.3L737.3 265.2L737.2 261.8zM743.4 265.9L748.1 265.9L749.1 261.5L745.0 259.8L743.7 260.3zM777.5 257.9L774.7 257.3L771.3 261.0L773.5 265.5L775.0 266.3L779.4 264.2L779.6 262.3zM508.8 274.3L506.2 265.4L496.0 268.3L495.3 269.6L502.4 275.3L507.4 276.7zM577.5 268.5L587.8 274.3L591.1 272.4L591.2 272.1L589.9 267.8L579.6 262.9L579.1 263.1L577.2 268.0zM602.0 265.2L591.8 271.9L602.1 273.6L604.8 271.8zM737.3 265.2L734.0 267.3L733.1 270.3L734.2 272.6L740.0 271.5L742.1 269.7L741.9 267.7zM849.4 264.4L846.6 272.7L846.7 272.8L853.1 270.4L853.3 265.4L849.5 264.4zM602.1 273.6L591.8 271.9L591.2 272.1L591.1 272.4L594.0 276.9L601.0 281.0zM723.6 272.5L718.7 277.6L720.4 280.3L727.6 278.3L728.1 277.5L724.4 272.6zM740.0 271.5L740.7 277.9L742.6 279.2L745.2 279.3L746.9 276.7L746.5 272.9L742.1 269.7zM868.2 273.3L868.2 276.7L878.2 284.1L880.0 284.3L880.0 270.5zM560.4 279.4L560.8 282.2L563.4 284.4L567.7 284.7L568.1 284.5L569.6 281.9L570.6 279.5L562.3 276.6zM700.7 279.0L697.3 279.0L697.6 285.3L698.1 285.8L704.5 284.1L702.6 280.1zM709.2 278.7L702.6 280.1L704.5 284.1L706.4 285.7L709.2 284.5L709.7 279.5zM753.9 283.0L760.0 287.5L762.4 285.3L757.3 278.3L755.7 278.6zM813.3 283.6L811.9 280.5L807.8 277.4L806.2 277.5L803.6 281.3L803.2 282.7L811.2 286.8zM816.8 283.0L820.3 285.9L823.7 286.7L824.9 284.8L824.9 284.8L823.5 278.1L819.1 278.3zM854.9 283.5L859.8 281.6L859.9 279.0L859.8 278.9L854.0 276.5L850.4 278.5zM577.5 285.2L569.6 281.9L568.1 284.5L575.2 291.9L578.5 288.5zM631.0 291.3L634.9 293.6L640.1 288.2L635.6 285.5zM660.5 284.4L660.7 289.2L664.7 290.1L665.3 285.2L663.4 283.7zM776.5 295.6L778.4 298.8L783.7 296.2L784.4 295.3L784.3 291.2L781.9 290.9zM481.8 306.4L476.1 299.1L467.7 293.5L464.9 297.5L463.5 302.0L464.3 311.4L481.2 311.9zM703.3 302.0L702.1 304.9L703.9 308.2L704.8 309.0L707.2 308.8L709.0 307.8L711.7 304.6L710.7 302.3zM741.6 304.9L740.8 310.2L745.9 310.9L747.5 309.8L747.0 302.2zM702.1 316.2L704.2 313.8L704.8 309.0L703.9 308.2L696.4 312.3L697.5 315.8zM764.3 329.4L764.8 323.1L760.9 323.2L759.5 324.1L757.7 326.1L760.8 331.3zM609.2 328.2L608.3 334.9L612.0 335.6L614.3 334.5L614.2 331.6L609.5 328.1zM841.6 338.7L842.2 338.6L842.5 338.3L840.8 330.8L837.6 331.1L837.1 332.9zM815.6 340.9L816.9 342.6L822.0 343.9L824.4 339.4L822.8 337.1L817.6 337.3L817.4 337.5zM608.5 342.6L604.7 341.3L601.9 343.7L601.7 347.3L603.2 348.6L608.2 350.0zM497.7 357.7L504.3 353.6L502.4 345.0L495.4 343.9L497.2 357.4zM295.1 361.2L292.7 353.5L290.1 352.5L271.5 358.8L282.2 374.7L287.7 374.4L292.9 371.5zM504.0 367.1L510.0 369.8L515.7 366.6L520.4 359.3L517.0 355.3L507.2 355.4zM781.5 361.1L781.3 362.2L786.0 365.4L789.6 363.4L789.8 361.3L789.4 360.5zM798.5 359.7L798.1 361.6L799.7 366.2L804.2 366.3L806.5 359.9L800.3 358.0zM809.0 367.7L811.6 369.6L817.0 366.2L817.1 366.1L814.2 360.6L813.9 360.4L811.9 360.2zM837.9 359.1L835.6 366.7L837.0 367.8L842.2 366.4L843.6 365.4L842.5 359.1L839.1 358.5zM295.1 361.2L292.9 371.5L294.3 372.9L311.6 373.9L311.9 368.3L302.1 363.0zM808.2 377.4L807.4 383.3L812.1 385.5L812.8 385.3L813.6 380.4L808.8 376.5zM824.6 377.5L826.8 385.6L830.7 384.0L830.7 378.1L826.6 376.4zM859.2 383.9L861.9 379.9L852.8 377.1L852.2 378.6zM537.1 392.5L539.8 391.2L537.9 381.4L535.6 379.2L531.0 381.2L527.8 387.0zM544.5 398.3L534.6 397.7L533.5 399.2L543.3 405.2L543.9 404.7zM530.8 412.5L530.9 412.5L530.2 400.5L519.2 402.2L516.9 406.0L520.2 412.2L525.2 413.7zM485.9 415.8L497.6 414.8L498.2 413.4L485.3 406.5L480.5 408.2L481.0 412.2zM840.0 417.3L839.4 417.4L834.0 423.1L835.9 424.9L841.9 424.8L844.8 422.6L844.0 421.1zM835.9 424.9L834.0 423.1L830.4 422.7L830.2 422.9L830.5 435.0L837.2 435.0z"/>
<path fill="#f4b49d" stroke="#fff" stroke-opacity="0.22" stroke-width="0.5" d="M485.9 100.0L482.4 100.0L470.6 112.6L471.6 113.3L487.8 107.9zM698.2 106.5L700.0 108.7L704.1 109.2L705.2 108.2L706.6 100.0L697.2 100.0zM374.3 107.9L375.1 116.1L375.4 117.0L385.9 119.7L388.1 116.2L387.8 106.6L381.8 100.0L376.7 100.0zM561.0 115.3L566.9 109.2L558.2 103.6L555.7 113.2zM579.5 112.1L584.4 118.4L586.5 117.4L588.5 114.9L583.7 108.7L579.4 110.9zM702.8 117.2L704.9 111.1L704.1 109.2L700.0 108.7L696.8 115.0L697.4 116.1zM704.9 111.1L710.0 114.8L712.0 112.9L712.8 108.4L711.8 108.0L705.2 108.2L704.1 109.2zM417.0 122.5L417.1 122.6L426.5 128.9L427.0 128.9L438.0 112.5L418.2 115.3zM731.2 120.4L729.2 114.5L723.9 115.3L723.8 119.0L726.4 121.5zM489.5 132.5L496.3 123.2L492.3 117.6L483.8 122.2L482.9 132.2zM721.0 125.8L719.9 121.1L715.9 120.0L714.5 120.7L714.4 127.3zM767.0 121.2L766.0 126.6L767.0 128.2L773.9 127.4L769.8 120.7L767.4 120.7zM773.9 127.4L774.2 127.6L777.7 126.9L779.2 124.9L778.8 122.5L776.2 119.7L773.6 118.9L769.8 120.7zM788.5 125.5L789.7 122.4L785.1 120.7L784.2 125.4zM303.0 125.6L302.2 126.2L304.3 136.1L304.6 136.7L313.4 137.3L317.0 130.9L317.2 126.8zM524.0 134.7L526.7 126.7L518.5 124.4L514.8 130.6L514.4 135.1zM580.6 124.0L576.4 124.8L572.6 127.0L572.3 133.4L575.3 135.5L581.2 124.8zM637.4 133.3L641.4 136.7L646.7 134.3L646.4 130.5L643.8 127.2L640.8 127.0zM678.8 127.4L677.2 130.9L681.9 136.4L682.6 136.5L684.2 134.3L683.0 126.4zM779.9 133.0L777.7 126.9L774.2 127.6L772.6 132.5L776.2 135.2zM513.2 137.6L517.3 143.0L518.4 143.2L524.9 137.3L524.0 134.7L514.4 135.1zM586.0 130.0L583.1 134.1L585.4 143.7L585.4 143.7L585.9 143.6L593.7 132.7L592.3 130.8zM618.8 133.6L618.1 138.8L621.1 141.5L626.1 138.7L626.2 135.6L625.7 134.9zM714.5 129.5L709.0 135.4L710.0 137.3L712.5 139.0L714.5 139.2L718.5 133.1zM765.6 136.3L765.7 134.8L761.6 132.6L758.4 134.2L760.4 140.0zM659.2 144.8L663.8 147.0L665.6 145.5L666.7 140.1L662.5 137.9L661.2 138.7zM473.6 155.4L477.1 153.1L473.9 144.3L467.1 148.6zM421.3 150.8L416.0 156.2L420.7 166.1L422.5 166.0L431.1 154.1zM572.0 162.5L574.1 153.4L566.6 150.8L566.0 151.5L568.2 158.1zM735.1 159.2L740.7 158.9L741.8 153.9L739.6 150.7L735.1 153.4zM646.8 165.4L650.0 163.5L650.1 159.4L644.1 157.1L643.0 159.1L644.7 165.1zM678.5 156.5L671.1 158.6L670.8 159.6L670.9 160.6L672.4 162.2L677.0 163.7zM391.6 166.3L381.1 158.8L375.9 158.6L375.6 165.4L387.1 177.0zM739.7 170.7L741.7 166.0L740.6 164.6L735.1 163.8L733.8 170.9L734.2 171.3L738.7 171.5zM777.8 164.5L774.3 166.3L774.8 169.3L777.9 171.8L781.4 170.8L782.0 165.2zM387.1 177.0L389.4 180.4L405.9 172.8L400.6 162.9L391.6 166.3L387.1 177.0zM578.1 177.0L586.3 175.5L587.0 173.8L585.1 168.6L573.0 169.8L573.2 171.4zM601.8 182.1L599.8 173.2L597.0 172.1L593.9 174.9L596.3 183.0zM652.9 172.7L655.6 178.2L659.1 179.1L659.3 171.2L654.8 171.3zM685.3 171.0L683.2 173.7L685.1 177.5L690.3 176.0L690.4 173.2zM720.4 169.5L719.4 169.7L716.2 174.0L719.7 176.9L724.3 172.2zM849.8 177.7L855.6 176.9L850.1 172.0L849.8 172.1L849.3 176.9zM655.6 178.2L652.2 182.5L653.8 184.0L660.1 183.1L661.0 182.3L661.0 180.6L659.1 179.1zM671.9 183.1L677.3 182.8L678.7 178.4L678.2 176.9L671.3 178.3zM343.1 193.6L348.6 207.0L359.0 190.6L358.7 184.6L352.1 173.6L344.3 183.3zM421.1 194.9L424.5 195.2L433.0 190.2L433.7 188.2L421.6 179.8L415.7 191.5zM464.8 188.7L461.0 180.7L448.5 186.8L452.0 196.2L461.0 198.2L461.2 197.9zM586.0 180.5L583.3 183.7L584.5 187.2L592.3 191.2L593.8 189.1L595.4 183.8zM619.2 190.2L621.7 187.7L621.6 187.1L617.1 182.9L613.4 183.9L613.8 188.9zM678.8 190.7L679.4 184.6L677.3 182.8L671.9 183.1L671.3 183.8L673.8 191.2L676.9 191.2zM602.5 194.2L604.0 191.2L593.8 189.1L592.3 191.2L592.3 191.4L595.4 196.4L598.8 197.6zM566.5 198.1L563.0 198.7L560.3 202.5L561.4 205.4L568.9 204.2L568.0 199.3zM610.4 196.0L608.7 200.6L608.6 200.7L610.2 202.7L613.0 204.0L618.1 196.0L613.9 194.7zM643.3 201.8L649.1 202.9L645.7 196.6L643.7 196.7zM561.4 205.4L560.5 208.0L570.2 212.7L571.9 206.8L568.9 204.2zM573.0 206.3L583.6 210.0L587.1 205.9L586.3 204.6L576.5 201.0zM692.0 201.4L687.9 202.3L686.5 204.6L688.6 208.6L689.9 208.3L692.7 202.7zM736.7 204.7L735.0 202.6L730.5 202.8L728.2 204.2L728.4 207.1L733.8 210.1L736.5 208.0L736.8 207.4zM853.4 210.1L853.8 210.4L859.5 209.5L861.0 208.3L861.2 205.4L860.0 203.2L855.4 201.9L853.8 203.1zM461.6 205.5L447.0 219.2L456.3 227.3L460.5 227.0L465.9 212.4zM588.0 206.0L587.1 205.9L583.6 210.0L582.9 213.0L591.7 216.3L592.4 214.3zM600.1 212.2L600.0 209.3L599.2 207.8L589.7 205.5L588.0 206.0L592.4 214.3zM670.3 208.2L669.1 215.9L670.6 216.0L676.0 212.0L674.9 207.7L673.3 206.3zM800.9 209.9L800.4 209.6L795.6 211.9L795.2 213.4L802.0 215.5zM608.2 220.8L610.1 219.3L611.2 216.3L611.1 215.0L608.0 214.4L601.3 214.9L600.4 219.6zM872.8 213.0L868.8 214.8L868.9 221.3L876.6 223.8L880.0 224.1L880.0 219.3zM315.2 224.7L316.6 230.6L319.9 233.6L332.9 230.3L341.6 215.4L327.0 209.4L323.4 211.5zM855.0 220.3L856.0 227.0L856.2 227.1L859.5 228.2L861.2 228.0L861.8 219.6L861.6 219.3L855.3 219.9zM677.9 235.5L678.7 228.5L678.0 227.6L672.4 230.3L672.0 232.1L677.0 236.7zM701.2 233.2L702.0 232.6L701.9 229.7L696.1 226.2L692.6 226.9L692.4 227.4L697.2 234.6L697.5 234.7zM726.7 229.0L721.9 228.8L720.5 233.5L721.2 234.9L727.3 235.6zM752.5 232.4L751.4 226.3L746.5 224.2L744.4 226.0L745.4 232.0L749.6 233.9L751.9 233.6zM764.3 230.4L759.4 228.7L757.7 230.0L759.9 234.4L762.5 235.7L764.4 235.5L765.5 233.6zM876.6 223.8L865.9 231.1L866.8 233.8L866.9 233.8L880.0 235.5L880.0 224.1zM310.6 249.9L312.1 250.4L317.9 247.4L319.9 233.6L316.6 230.6L304.9 235.4zM567.1 234.0L565.6 233.2L562.1 233.8L561.5 235.2L566.2 245.3L567.1 245.7L568.7 241.3zM576.3 235.0L575.9 235.5L576.0 236.3L584.5 242.8L584.8 235.5zM632.0 242.4L636.7 242.5L637.8 240.9L638.2 235.8L632.2 235.2L631.0 240.0L631.2 241.6zM749.6 233.9L745.4 232.0L740.7 233.5L741.5 238.7L744.7 239.0L746.8 237.9zM847.4 239.5L853.0 241.3L855.8 239.0L852.9 234.6L850.4 234.3zM866.9 233.8L866.3 238.2L875.2 244.5L880.0 243.9L880.0 235.5zM363.1 245.5L356.4 227.7L341.7 245.0L342.5 255.2L344.4 256.7L346.1 256.7L362.4 251.3L362.9 247.9zM527.3 251.3L532.3 251.7L534.0 245.2L526.2 236.6L524.7 237.3L527.1 251.0zM619.7 242.6L615.8 242.6L615.7 248.0L621.0 246.4zM804.5 245.2L804.8 240.8L804.1 239.1L798.0 242.4L798.0 244.2L804.0 245.4zM808.7 248.8L815.6 246.8L815.8 242.2L815.2 241.5L811.6 241.0L810.6 241.5L806.8 246.0zM845.6 246.2L846.1 240.1L843.4 238.3L837.5 239.4L840.1 246.5L840.8 246.8zM853.4 246.0L853.0 241.3L847.4 239.5L846.1 240.1L845.6 246.2L846.9 247.7zM507.0 248.7L517.4 256.5L518.8 247.8L516.7 244.0L510.7 244.1zM567.1 245.7L566.2 245.3L560.5 245.6L559.4 253.0L561.2 254.2L567.6 250.1L568.4 247.3zM610.0 246.0L608.5 248.2L608.3 252.9L610.0 253.9L614.0 253.6L615.5 252.0L615.5 248.6zM724.5 253.1L724.8 253.0L720.6 247.4L715.5 249.9L715.6 250.3zM760.1 245.0L757.8 247.3L762.1 251.2L765.1 250.8L765.8 245.8zM800.7 253.3L801.4 253.0L804.0 245.4L798.0 244.2L795.9 246.8L796.8 250.2L799.2 253.1zM584.8 249.6L584.7 255.9L587.6 258.7L595.2 258.3L587.5 249.8zM609.3 258.0L610.0 253.9L608.3 252.9L601.3 253.5L600.6 254.5L599.3 258.4L601.5 261.7L609.0 258.6zM616.1 261.9L616.8 259.6L614.0 253.6L610.0 253.9L609.3 258.0zM644.8 251.3L640.7 252.9L638.8 255.2L639.2 257.0L642.1 258.8L646.1 258.0L647.0 254.1zM646.1 258.0L647.6 259.3L653.2 258.1L654.4 253.3L652.6 252.3L647.0 254.1zM789.9 256.5L784.0 252.4L782.0 253.7L781.9 254.1L784.6 259.7L784.9 259.7L790.3 257.4zM812.3 258.0L819.0 253.5L816.9 249.3L810.5 255.7L810.9 257.9zM506.3 265.2L515.9 263.5L516.8 260.1L505.0 255.8L504.7 256.2L504.6 257.0zM680.6 263.7L681.2 264.5L683.5 265.4L689.1 260.8L689.6 259.6L688.4 257.8L683.9 257.0L679.9 261.2zM692.4 267.5L696.6 263.6L696.2 259.8L696.1 259.6L689.6 259.6L689.1 260.8L691.5 266.9zM716.0 265.8L710.8 266.1L710.0 273.5L714.3 272.8L715.4 271.1zM720.1 265.5L717.4 264.1L716.0 265.8L715.4 271.1L722.8 271.7zM741.9 267.7L742.1 269.7L746.5 272.9L749.7 269.9L749.9 268.0L748.1 265.9L743.4 265.9zM859.6 271.7L861.8 273.5L865.9 272.2L865.6 265.9L863.9 265.2L859.3 267.2zM389.6 266.5L377.7 279.0L388.5 279.2L395.8 274.6zM562.4 273.4L554.7 272.7L553.7 274.5L560.4 279.4L562.3 276.6zM649.5 278.9L652.9 277.6L652.4 269.6L649.7 270.3L646.3 273.4L649.3 278.9zM660.4 272.0L660.2 271.4L654.9 268.8L653.3 268.5L652.4 269.6L652.9 277.6L656.4 278.6L658.8 276.8zM670.0 280.4L672.0 277.5L671.0 272.8L666.6 274.4L666.2 278.7zM783.0 272.3L775.1 276.8L775.0 278.5L778.6 281.8L784.7 277.5L783.4 272.5zM806.2 277.5L803.8 272.8L799.7 274.1L798.3 276.1L803.6 281.3zM848.0 278.4L850.4 278.5L854.0 276.5L854.5 271.7L853.1 270.4L846.7 272.8L847.6 277.8zM629.5 279.0L623.0 277.0L621.0 280.4L621.2 281.1L623.5 282.9L629.7 279.3zM675.6 277.8L672.0 277.5L670.0 280.4L671.9 284.9L676.6 284.6zM727.6 284.4L727.6 278.3L720.4 280.3L720.6 285.3L722.8 286.7L726.9 285.3zM395.8 295.1L406.2 297.9L412.6 293.8L402.2 276.6L399.3 277.1L394.7 289.2zM774.1 293.2L778.3 288.3L777.1 286.0L773.0 286.9L773.2 292.5zM842.6 284.9L840.8 290.3L847.9 292.1L850.1 289.6L845.1 283.9zM476.1 299.1L484.4 294.2L482.7 285.6L469.6 283.2L469.1 283.3L467.7 293.5zM792.4 293.2L788.8 290.6L785.7 290.1L784.3 291.2L784.4 295.3L790.4 299.7L791.3 299.7L792.1 298.6zM861.3 296.7L866.5 296.1L867.8 291.6L867.1 290.4L861.3 290.7zM553.9 302.8L555.7 296.2L546.4 294.3L547.1 300.4L552.9 303.1zM636.9 296.1L634.4 299.1L635.7 303.7L640.3 302.5L638.6 296.3zM659.5 295.6L659.8 302.7L661.0 303.3L665.8 300.7L667.4 297.9L666.3 295.0zM711.5 297.9L709.1 295.8L702.9 297.5L703.3 302.0L710.7 302.3zM751.4 302.2L754.9 301.2L756.6 296.2L753.8 293.4L747.1 300.1L747.5 301.3zM282.9 311.5L295.9 315.6L309.7 313.9L306.3 300.5L304.5 297.6L300.9 295.4zM392.0 297.9L390.5 300.4L387.7 308.9L394.2 316.2L407.8 316.3L406.2 297.9L395.8 295.1zM511.3 311.3L522.5 304.7L516.1 300.4L505.6 305.5L505.3 309.3zM524.2 308.9L531.9 312.2L533.6 312.0L537.8 308.0L535.6 302.2L534.8 301.3L531.2 299.2L529.0 298.6L522.9 304.8zM629.4 304.9L627.5 300.7L621.7 304.2L620.6 306.6L621.1 308.6L625.3 308.8L626.0 308.5zM634.7 309.1L633.8 306.6L629.4 304.9L626.0 308.5L631.9 313.2zM770.1 309.5L778.1 310.0L779.8 308.3L777.7 303.7L773.2 304.0L771.6 305.2L769.5 308.8zM792.0 302.0L792.1 307.5L793.8 309.6L797.5 309.9L798.3 309.6L799.5 304.0L798.9 303.6zM858.9 301.8L856.1 302.4L853.8 309.4L859.2 310.6L861.3 308.4zM860.0 300.3L858.9 301.8L861.3 308.4L866.7 308.1L868.4 304.7zM524.2 308.9L521.6 319.8L525.6 323.4L526.4 323.8L527.3 323.9L529.1 322.9L531.9 312.2zM593.3 311.3L591.9 319.9L593.8 320.4L598.3 312.8L597.5 311.2zM651.9 309.7L648.2 310.0L646.3 312.8L646.3 314.0L648.2 316.9L652.1 319.1L653.6 316.2zM668.4 308.5L667.5 308.9L664.6 314.2L664.5 315.0L670.8 317.1L671.2 316.8L672.8 309.6zM793.8 309.6L789.5 315.7L790.6 318.8L790.7 318.8L797.8 316.9L797.5 309.9zM502.7 311.7L505.6 325.0L508.2 326.3L508.9 326.3L516.1 320.2L511.3 311.3L505.3 309.3zM639.2 318.2L639.3 319.9L642.9 321.3L648.2 316.9L646.3 314.0L639.8 317.0zM688.4 317.1L683.1 317.8L683.1 317.8L685.4 325.1L690.1 323.1zM774.4 315.8L774.3 315.8L772.1 317.6L769.7 322.6L770.4 323.4L778.9 321.6L779.0 321.4zM504.9 335.6L508.2 326.3L505.6 325.0L502.4 325.7L496.6 334.4zM665.7 337.2L666.5 336.3L666.8 330.8L665.8 330.0L660.1 330.1L660.4 336.2zM822.8 337.1L824.5 332.8L823.6 331.2L817.5 330.4L817.6 337.3zM853.0 322.8L850.1 333.8L853.9 333.8L856.9 328.4L855.5 323.2L854.0 322.6zM876.4 335.4L876.9 335.2L869.1 328.2L866.4 329.6L865.0 335.1L872.7 335.9zM760.2 332.4L756.6 333.9L756.5 333.9L756.6 339.9L758.3 340.0L763.6 336.9zM837.9 339.9L841.6 338.7L837.1 332.9L835.6 334.6zM697.3 349.0L697.4 352.2L700.5 353.6L706.4 348.6L703.8 346.2L698.0 347.4zM458.6 358.0L459.5 357.3L456.0 350.0L440.2 344.3L437.1 347.1L436.0 359.8L437.1 362.1zM563.9 363.3L568.3 362.1L568.8 361.3L569.5 355.2L561.8 351.9L558.1 360.4L558.7 361.9zM692.6 360.0L693.1 359.6L696.2 353.0L689.3 351.6L687.9 354.6L687.7 358.9L691.6 360.0zM757.7 360.6L760.1 358.6L759.6 353.3L754.8 355.0L754.2 359.9zM789.6 354.6L789.4 354.4L786.0 353.7L781.1 360.4L781.5 361.1L789.4 360.5zM820.3 357.5L820.6 358.1L828.8 362.5L829.3 360.4L828.4 355.3L820.9 354.9zM860.0 357.2L860.7 360.0L866.5 361.9L867.5 354.8L866.1 353.7L861.7 354.5L860.0 356.7zM437.8 375.1L445.0 376.2L458.6 358.0L437.1 362.1zM657.1 358.1L652.9 361.5L652.5 366.1L654.5 367.5L658.8 366.6L657.9 358.3zM456.8 376.6L464.3 366.2L464.3 365.1L461.7 358.3L459.5 357.3L458.6 358.0L445.0 376.2L446.8 377.6L448.6 377.9zM549.1 374.4L545.8 366.9L541.9 366.4L536.4 375.6L536.5 376.3zM634.4 371.3L634.3 367.3L633.4 365.5L627.9 365.9L626.1 369.9L633.0 374.7zM767.0 365.4L764.5 364.2L762.2 365.8L761.7 372.7L762.9 373.3L768.5 370.6zM780.3 368.1L778.6 366.9L775.7 367.5L773.5 372.5L773.5 372.9L779.8 375.5L783.1 373.0zM785.1 373.4L787.5 370.9L785.3 367.1L780.3 368.1L783.1 373.0zM837.0 367.8L835.6 366.7L829.9 365.8L829.9 371.4L834.5 375.4L837.4 373.3zM843.5 373.6L842.2 366.4L837.0 367.8L837.4 373.3L841.4 375.2zM804.6 373.4L804.6 373.3L799.1 372.8L798.3 377.9L799.2 379.0L801.1 378.2zM281.9 393.5L287.7 380.6L287.7 374.4L282.2 374.7L279.0 377.2L272.6 392.1zM448.3 388.7L446.8 377.6L445.0 376.2L437.8 375.1L437.8 375.1L438.2 388.5L444.8 393.7zM822.8 389.4L823.9 386.9L819.7 383.1L813.9 385.8L816.2 389.8L817.9 390.7zM835.7 391.1L836.1 386.0L836.0 385.8L830.7 384.0L826.8 385.6L826.7 385.6L831.3 393.2zM866.1 387.2L859.0 385.0L858.9 385.1L860.7 391.1L861.2 391.7L866.7 388.9zM495.8 389.0L493.2 399.3L496.2 402.0L506.5 397.5L506.7 394.2L496.1 388.8zM609.6 398.0L610.3 398.2L613.1 395.6L612.8 392.1L610.9 391.3L608.4 392.0zM855.8 398.8L856.5 399.3L861.7 397.5L861.2 391.7L860.7 391.1L855.5 391.5L855.4 391.6zM365.7 401.1L365.8 400.4L356.1 393.3L350.3 407.6zM437.7 403.1L439.0 407.5L452.5 405.5L452.4 400.3L444.6 396.5L438.8 400.6zM621.8 404.1L627.8 404.5L629.2 398.4L628.2 396.7L624.7 396.6L621.6 403.6zM646.9 403.8L646.8 403.9L646.5 410.8L651.7 413.3L652.9 410.2L649.6 403.8zM818.9 402.8L811.9 404.4L813.0 408.4L816.8 409.1L821.4 404.4zM438.7 426.1L451.3 414.5L438.9 408.0L433.8 419.5zM633.0 411.4L627.9 409.5L625.3 411.8L627.0 415.5L631.9 415.0zM820.3 417.2L821.0 414.1L817.5 410.9L813.6 415.4L816.4 417.8zM841.8 408.9L833.9 410.8L833.2 411.6L833.8 413.2L839.4 417.4L840.0 417.3L843.7 410.8zM634.7 419.1L631.9 415.0L627.0 415.5L626.0 417.5L630.6 423.1L634.4 422.6L634.7 422.2zM789.9 415.6L786.6 415.7L784.5 423.3L791.1 424.7L793.3 422.6L791.2 416.5zM817.3 426.1L821.9 420.5L820.9 418.0L820.3 417.2L816.4 417.8L814.2 422.1zM393.6 414.2L373.6 416.2L372.1 435.0L390.1 435.0zM634.4 422.6L630.6 423.1L626.5 426.1L623.5 434.6L623.4 435.0L636.4 435.0zM799.4 424.2L794.9 422.3L793.3 422.6L791.1 424.7L793.1 435.0L801.7 435.0zM830.2 422.9L826.5 423.5L818.4 435.0L818.4 435.0L830.5 435.0z"/>
<path fill="#f2ac94" stroke="#fff" stroke-opacity="0.22" stroke-width="0.5" d="M592.8 108.6L593.1 109.5L600.1 108.9L602.3 100.0L595.1 100.0zM400.5 109.7L387.8 106.6L388.1 116.2L400.4 111.3zM402.0 116.2L405.4 119.7L417.0 122.5L418.2 115.3L418.2 114.6L411.9 100.0L405.5 100.0L400.5 109.7L400.4 111.3zM620.7 106.3L621.6 113.9L626.8 113.8L627.0 108.3L622.6 105.5zM677.6 116.5L678.2 116.3L678.5 116.1L679.7 114.5L677.6 110.8L672.5 108.7L670.6 113.2L671.4 115.1zM681.0 114.3L685.2 112.3L685.4 106.5L680.2 105.0L677.6 110.8L679.7 114.5zM700.0 108.7L698.2 106.5L692.3 108.7L691.2 113.6L696.8 115.0zM753.6 114.6L754.7 113.5L753.4 108.6L750.6 108.6L744.5 112.8L745.5 113.4zM772.1 107.8L771.5 106.9L767.5 105.9L765.1 107.8L767.9 113.5L772.8 112.7zM289.0 121.1L302.2 126.2L303.0 125.6L310.3 113.3L310.2 112.7L289.9 100.0L277.2 100.0zM818.5 114.1L815.7 116.4L817.0 119.5L820.1 120.2L825.1 116.1L822.1 113.2zM317.5 126.1L310.3 113.3L303.0 125.6L317.2 126.8zM651.1 121.9L653.7 126.6L659.2 126.1L657.0 120.1L651.3 121.8zM714.4 127.3L714.5 120.7L709.8 118.8L705.9 120.9L705.8 121.2L707.4 125.8L709.8 127.0L714.2 127.7zM629.3 126.4L626.6 128.0L625.7 134.9L626.2 135.6L634.0 134.2L631.7 128.2zM652.8 128.6L646.4 130.5L646.7 134.3L647.0 134.6L649.1 135.2L654.2 131.7zM697.2 132.7L702.4 135.4L705.6 134.0L704.6 129.4L698.3 126.8L697.0 127.2zM761.6 132.6L760.8 128.1L759.1 127.2L755.5 128.5L756.0 133.5L758.4 134.2zM359.1 138.9L362.4 142.7L364.2 142.5L373.0 134.8L373.3 133.1L370.6 127.9L363.8 127.1L359.5 129.6zM547.1 132.4L543.3 130.4L535.3 132.0L533.8 140.0L536.1 144.2L543.8 139.8L547.2 134.9zM758.4 134.2L756.0 133.5L753.3 136.0L753.5 139.2L760.0 140.9L760.4 140.0zM513.9 149.5L517.3 143.0L513.2 137.6L510.8 137.9L504.7 141.6zM526.1 151.2L536.3 147.0L536.1 144.2L533.8 140.0L530.1 139.8L522.5 145.7zM740.3 146.8L740.5 143.1L733.7 138.6L731.9 139.9L731.7 141.8L733.4 145.6zM566.6 150.8L567.4 145.2L559.6 140.7L555.3 143.8L561.6 153.1L566.0 151.5zM577.4 151.3L583.6 156.1L586.5 153.3L585.4 143.7L585.4 143.7L578.7 144.5L577.5 146.0zM585.4 143.7L586.5 153.3L592.9 152.6L594.6 146.0L585.9 143.6zM690.2 145.8L689.2 145.2L682.8 145.5L682.3 148.3L685.4 152.7L686.2 153.0L691.1 149.1zM702.8 147.9L696.5 144.2L695.1 151.4L695.5 151.9L698.7 152.4L702.1 150.0zM726.4 147.5L725.9 145.1L724.6 143.6L719.0 148.1L719.9 151.0L721.2 151.7L725.6 152.1zM525.4 157.5L526.5 159.5L539.5 155.4L539.9 151.1L536.3 147.0L526.1 151.2L524.8 154.1zM670.5 152.7L671.1 158.6L678.5 156.5L678.7 156.3L676.9 151.1L676.3 150.9zM357.6 155.5L351.6 169.2L375.2 157.8L375.0 157.2zM560.6 158.5L559.9 160.8L560.3 162.4L564.4 167.7L570.6 167.3L572.0 162.5L572.0 162.5L568.2 158.1zM734.2 161.9L734.3 160.1L727.9 157.9L727.9 164.8zM741.1 159.4L740.6 164.6L741.7 166.0L747.1 165.2L746.2 160.5zM751.8 157.0L748.5 157.1L746.2 160.5L747.1 165.2L747.4 165.4L753.5 163.1zM553.5 165.3L552.9 169.1L554.5 170.5L562.3 170.0L564.4 167.7L560.3 162.4zM597.0 172.1L596.2 162.9L587.2 164.5L585.1 168.6L587.0 173.8L593.9 174.9zM620.9 165.5L619.2 164.2L616.8 164.2L613.2 170.1L616.1 173.1L618.7 172.6L622.7 169.3zM664.1 171.4L665.6 170.0L665.2 165.3L663.9 164.3L659.2 162.4L659.5 171.2zM416.4 172.1L421.6 179.8L439.2 171.2L422.5 166.0L420.7 166.1zM562.3 170.0L561.8 173.4L564.1 179.1L570.4 179.0L573.2 171.4L573.0 169.8L570.6 167.3L564.4 167.7zM309.2 168.4L298.5 180.3L301.4 184.9L314.4 181.4L314.7 180.2zM756.4 176.6L754.2 178.7L754.3 179.1L756.9 182.8L761.9 184.0L762.7 183.3L761.9 176.5zM859.0 184.1L860.7 181.4L860.1 179.6L857.9 176.8L856.4 177.2L852.2 183.3L855.3 186.7zM359.0 190.6L375.9 196.7L378.2 195.5L372.7 182.5L358.7 184.6zM584.5 187.2L583.3 183.7L579.3 183.0L575.2 189.3L581.8 191.0zM657.9 190.3L662.8 191.5L664.9 190.3L665.9 186.3L661.0 182.3L660.1 183.1zM679.4 184.6L678.8 190.7L681.9 192.4L686.4 190.4L683.8 183.7zM709.9 198.3L713.2 197.4L714.6 195.7L712.7 189.7L710.2 189.0L707.6 192.3L709.3 197.8zM728.8 186.7L726.8 191.4L727.6 194.4L728.9 194.9L732.3 194.1L735.2 190.7zM772.9 194.7L771.8 190.7L767.1 190.3L765.8 191.0L765.6 196.7L766.5 197.4zM424.5 195.2L430.0 208.3L436.9 208.5L436.6 195.0L433.0 190.2zM548.3 207.2L550.3 206.2L555.3 200.2L554.9 198.0L550.4 195.5L548.4 196.0L546.5 206.5zM700.3 203.1L702.9 205.9L709.2 203.8L710.0 202.3L709.9 198.3L709.3 197.8L704.0 198.7L700.3 202.2zM761.5 208.0L758.6 203.5L755.9 203.2L751.4 209.3L752.9 211.4L760.4 210.6L761.1 209.9zM769.4 202.8L767.0 206.0L769.3 211.7L774.6 210.1L774.8 209.5L772.0 203.1L769.4 202.8zM407.9 210.4L405.0 205.3L389.8 198.8L387.5 210.9L404.5 217.6L405.4 216.5zM859.5 209.5L859.3 214.0L862.1 216.6L865.7 213.0L865.2 211.5L861.0 208.3zM433.3 228.4L445.9 218.8L442.1 211.3L436.9 208.5L430.0 208.3L423.0 213.7L424.5 225.3zM639.4 220.8L640.8 217.3L637.9 214.4L632.6 215.0L631.8 221.0L632.6 221.5zM677.8 224.2L684.4 222.0L685.1 221.2L684.2 218.3L680.2 214.5L680.0 214.6L675.8 221.3L675.9 222.3zM699.1 223.1L703.7 223.5L703.9 223.0L701.7 216.1L697.1 217.0L695.7 219.2zM564.5 222.3L562.9 221.2L555.5 225.9L555.1 228.1L560.3 231.8zM672.4 230.3L678.0 227.6L677.8 224.2L675.9 222.3L670.9 224.2L670.9 228.5zM848.4 223.5L849.8 228.1L856.0 227.0L855.0 220.3L851.0 220.3zM692.4 227.4L690.4 228.5L688.6 235.2L689.7 236.0L697.2 234.6zM833.2 233.9L834.4 228.6L831.6 226.6L826.7 229.9L829.1 233.3L830.5 233.8zM601.3 233.8L594.1 231.6L592.2 236.8L592.3 237.8L599.5 243.2L601.2 241.5L602.3 237.5zM665.7 235.6L660.0 235.7L661.1 240.0L666.2 240.1zM712.8 233.5L709.8 232.9L708.5 233.7L708.6 241.5L708.7 241.6L716.1 240.0zM766.9 242.1L771.6 241.0L772.5 240.3L772.3 233.9L765.5 233.6L764.4 235.5L765.0 239.8zM804.8 240.8L810.6 241.5L811.6 241.0L806.4 234.1L804.9 234.1L804.8 234.2L804.1 239.1zM294.4 252.9L310.6 249.9L304.9 235.4L301.8 233.4L291.7 232.0L286.7 240.1L290.6 249.4L291.8 250.6zM645.0 246.0L645.4 246.5L650.6 247.7L653.1 245.0L650.4 241.0L645.8 240.9L645.7 240.9zM639.0 246.4L633.4 251.4L638.8 255.2L640.7 252.9L639.2 246.5zM652.6 252.3L650.6 247.7L645.4 246.5L644.8 251.3L647.0 254.1zM726.9 252.2L727.7 251.5L727.7 251.5L721.9 245.0L720.6 247.4L724.8 253.0zM737.6 247.5L736.3 247.5L733.2 252.5L734.3 254.0L739.0 255.6L742.1 252.1zM880.0 254.2L880.0 243.9L875.2 244.5L868.0 247.1L867.9 251.7L874.8 255.3zM749.1 261.5L753.8 260.3L754.4 258.9L753.3 254.6L752.7 253.8L747.5 253.9L745.0 259.8zM277.3 270.2L294.2 262.0L294.4 252.9L291.8 250.6L274.8 268.3zM595.2 258.3L587.6 258.7L590.3 266.1L596.4 258.9zM601.5 261.7L599.3 258.4L596.4 258.9L590.3 266.1L589.9 267.8L591.2 272.1L591.8 271.9L602.0 265.2L602.2 264.4zM689.1 260.8L683.5 265.4L684.8 267.5L691.5 266.9zM740.0 258.8L737.2 261.8L737.3 265.2L741.9 267.7L743.4 265.9L743.7 260.3zM762.1 263.5L761.5 259.2L754.4 258.9L753.8 260.3L754.9 264.7L756.3 265.9L760.6 264.9zM761.5 259.2L762.1 263.5L765.8 265.1L769.0 260.7L766.2 257.7L761.6 259.1zM843.8 264.0L844.2 263.5L843.9 258.3L843.1 257.3L837.6 258.2L837.4 258.7L838.7 264.2zM369.4 259.5L368.5 264.6L373.3 281.7L377.7 279.0L389.6 266.5L388.8 259.6L388.0 257.4zM636.3 272.2L636.2 266.4L634.4 265.1L629.2 265.9L629.1 273.1L633.4 273.6zM692.9 270.0L697.2 272.3L698.6 271.4L700.9 267.1L696.6 263.6L692.4 267.5zM354.2 276.1L356.5 283.7L358.8 285.0L373.0 282.8L373.1 282.6L373.3 281.7L368.5 264.6L356.0 271.4zM672.0 277.5L675.6 277.8L678.5 274.3L678.5 273.9L676.9 272.0L672.6 270.6L671.0 272.8zM685.0 270.1L683.0 272.5L686.6 278.3L689.4 278.1L689.5 272.9zM715.4 271.1L714.3 272.8L717.8 277.4L718.7 277.6L723.6 272.5L722.8 271.7zM766.2 271.9L766.5 275.0L770.9 280.5L775.0 278.5L775.1 276.8L773.3 273.4L766.3 271.9zM824.7 273.0L824.4 277.1L830.9 278.5L832.4 278.3L832.4 278.3L831.0 272.0L826.3 271.6zM527.8 289.9L534.4 286.2L534.6 285.5L533.2 275.9L531.3 274.8L525.2 277.6L526.3 286.5zM570.6 279.5L569.6 281.9L577.5 285.2L578.7 278.5L577.1 277.9L571.0 278.8zM633.9 279.4L632.9 281.3L633.1 281.9L635.2 283.9L641.7 279.6L640.2 275.9zM727.6 278.3L727.6 284.4L734.7 283.7L733.7 276.8L733.4 276.5L728.1 277.5zM762.4 285.3L765.5 284.4L764.4 279.9L759.2 276.8L757.3 278.3zM833.6 282.1L835.6 282.9L840.1 283.0L839.7 277.6L836.9 276.3L832.4 278.3L832.4 278.3zM591.4 286.2L586.5 285.1L585.6 292.7L586.5 296.3L588.1 296.2L591.6 286.7zM627.6 285.5L628.7 289.8L630.7 291.4L631.0 291.3L635.6 285.5L635.2 283.9L633.1 281.9zM678.6 288.2L681.8 290.8L683.9 290.9L685.9 289.9L686.6 286.5L681.7 281.9L677.2 284.8zM792.7 286.1L788.8 290.6L792.4 293.2L796.3 291.2L796.1 287.0zM601.5 293.7L600.4 291.5L595.8 291.3L591.5 295.8L600.2 299.7L601.6 295.2zM651.8 296.4L653.1 297.3L658.2 294.6L657.7 291.8L655.3 290.0L651.8 290.3zM670.0 291.2L667.0 293.0L666.3 295.0L667.4 297.9L672.4 299.6L675.5 296.0L674.4 293.4zM690.9 292.8L685.9 289.9L683.9 290.9L684.8 296.4L685.3 296.8L689.4 296.8L690.9 293.9zM806.4 292.0L805.9 295.0L811.1 298.4L812.7 290.7L811.3 289.5zM867.8 291.6L866.5 296.1L868.2 297.6L880.0 292.9L880.0 290.9zM600.2 299.7L591.5 295.8L589.0 296.4L592.9 303.4L600.1 303.1L600.4 302.7zM635.7 303.7L634.4 299.1L627.7 298.7L627.5 300.7L629.4 304.9L633.8 306.6zM653.1 297.3L653.3 302.5L654.3 303.4L659.8 302.7L659.5 295.6L658.2 294.6zM689.3 303.3L690.4 302.3L689.4 296.8L685.3 296.8L683.9 303.0zM783.7 296.2L778.4 298.8L778.1 303.2L784.2 302.1zM799.5 304.0L803.3 301.1L802.7 298.2L799.9 296.7L796.1 298.5L798.9 303.6zM847.2 306.5L848.7 306.7L850.8 302.1L847.5 297.9L844.4 298.6L842.7 301.8zM868.2 297.6L869.8 303.5L880.0 304.0L880.0 292.9zM654.3 303.4L653.3 302.5L645.6 302.9L645.0 303.6L648.2 310.0L651.9 309.7L653.7 308.3zM685.2 310.0L689.6 310.8L689.9 310.5L689.3 303.3L683.9 303.0L683.8 303.1zM834.7 312.5L835.0 312.5L835.6 312.1L834.4 304.5L828.8 304.8L829.6 308.8L831.3 310.6zM676.8 315.3L681.8 316.0L682.1 311.2L677.5 307.0L675.3 309.1zM718.5 309.0L716.7 308.4L713.4 311.1L712.6 314.6L714.0 316.0L720.3 313.8L720.2 311.1zM814.8 316.3L815.5 317.1L824.5 315.9L823.4 311.9L820.0 309.0L815.6 310.1L815.6 310.1zM831.3 310.6L829.6 308.8L823.4 311.9L824.5 315.9L824.7 316.1L825.1 316.1zM665.1 323.3L671.7 323.1L670.8 317.1L664.5 315.0L663.6 316.0L663.1 321.9zM696.3 320.0L698.6 323.2L704.8 322.6L702.1 316.2L697.5 315.8L696.2 317.4zM760.9 323.2L756.1 316.2L754.2 316.6L753.4 320.1L759.5 324.1zM769.7 322.6L772.1 317.6L766.4 314.9L764.0 317.3L765.1 322.8zM535.6 335.4L540.0 328.1L537.7 321.3L529.1 322.9L527.3 323.9zM747.6 330.6L754.2 327.4L754.6 326.7L752.2 322.4L747.5 323.3L746.2 329.3zM545.7 328.5L540.0 328.1L535.6 335.4L535.6 335.8L539.7 336.7L546.4 334.7L549.1 331.0zM634.9 335.3L635.3 333.9L634.9 331.5L634.1 330.6L629.2 329.0L627.1 331.0L630.3 336.2zM666.5 336.3L671.3 336.6L673.2 329.3L672.7 328.8L666.8 330.8zM734.6 331.0L734.3 332.4L737.2 338.4L740.9 333.2L740.6 329.0L739.3 328.3L737.2 328.9zM748.1 332.5L749.3 333.8L756.5 333.9L756.6 333.9L754.2 327.4L747.6 330.6zM810.5 333.1L812.5 329.5L810.0 327.7L806.0 326.1L804.7 333.8L809.5 334.1zM303.2 332.1L290.6 329.5L288.3 330.0L286.2 344.9L290.1 352.5L292.7 353.5L294.7 352.0zM856.9 342.2L861.4 343.8L863.8 342.1L863.4 335.9L861.6 335.1L856.9 336.0L856.2 340.8zM751.3 342.0L746.2 347.0L748.8 351.3L752.3 342.5zM756.6 339.9L753.6 342.6L756.1 346.5L759.8 348.8L762.8 346.2L762.3 343.1L758.3 340.0zM553.2 348.6L548.3 347.8L546.3 353.6L553.1 355.3zM656.0 355.4L661.8 352.2L656.9 349.9L653.4 351.3L653.2 351.7zM688.0 348.5L684.2 347.8L682.6 352.2L687.9 354.6L689.3 351.6zM789.7 348.4L784.5 344.9L784.4 345.1L783.5 352.0L786.0 353.7L789.4 354.4zM317.8 363.3L323.4 364.1L327.5 352.8L323.1 349.8L314.6 356.5L314.6 356.6zM664.5 360.4L672.1 359.1L672.1 355.4L671.8 354.9L664.5 355.3L663.6 358.4zM693.1 359.6L702.1 360.9L701.0 354.3L700.5 353.6L697.4 352.2L696.2 353.0zM789.8 361.3L798.1 361.6L798.5 359.7L792.9 354.0L789.6 354.6L789.4 360.5zM302.1 363.0L311.9 368.3L317.8 363.3L314.6 356.6zM412.7 359.7L410.0 350.5L389.4 362.7L406.9 378.9zM548.1 359.6L546.7 366.0L556.8 364.7L558.7 361.9L558.1 360.4L554.1 358.0zM658.8 366.6L662.0 366.7L664.7 365.9L664.5 360.4L663.6 358.4L657.9 358.3zM673.2 363.3L674.6 365.5L678.8 368.7L680.4 361.7L673.8 361.6zM808.8 358.1L806.5 359.9L804.2 366.3L804.7 366.7L809.0 367.7L811.9 360.2zM749.2 369.4L749.5 371.8L752.0 372.5L756.2 371.6L755.4 366.2L752.8 365.0zM786.0 365.4L785.3 367.1L787.5 370.9L789.9 370.2L791.4 367.1L789.6 363.4zM648.0 377.4L647.8 374.2L646.5 372.3L642.5 372.0L640.6 376.9L642.7 380.1L644.7 380.6zM315.0 388.4L327.7 394.0L331.7 391.6L327.6 374.0L316.1 379.8zM663.7 378.9L658.8 380.0L657.3 384.6L661.4 386.2L665.5 384.8L666.0 380.7zM822.9 377.5L819.8 381.5L819.7 383.1L823.9 386.9L826.7 385.6L826.8 385.6L824.6 377.5zM561.6 385.3L560.3 388.5L566.9 393.4L570.2 389.5L569.8 388.6zM768.2 391.3L771.8 390.9L773.2 385.7L767.3 381.6L766.4 382.6L767.1 390.7zM621.3 393.8L624.7 396.6L628.2 396.7L630.4 393.4L624.6 389.2L621.1 392.6zM661.2 392.3L654.7 390.3L652.4 393.9L653.1 396.2L658.8 397.3L661.1 395.7L661.9 393.1zM809.5 390.1L805.3 392.0L804.5 393.2L804.3 395.9L810.8 398.3L812.3 397.4L812.6 392.9zM825.4 402.3L830.7 394.9L830.6 394.0L824.8 394.1L823.6 396.4L824.7 402.3zM302.9 391.5L300.8 410.1L309.3 416.6L315.3 406.5L311.4 390.2zM867.9 395.3L863.9 398.4L864.0 398.5L873.6 404.3L880.0 404.5L880.0 400.8zM615.5 409.1L620.4 408.2L621.8 404.1L621.6 403.6L617.6 401.0L613.8 402.7zM644.0 403.8L643.3 404.3L641.0 409.0L645.3 411.3L646.5 410.8L646.8 403.9zM834.5 403.6L833.9 410.8L841.8 408.9L841.3 405.6L836.5 401.7zM796.5 414.5L795.5 411.1L791.8 410.1L789.9 415.6L791.2 416.5zM498.2 413.4L497.6 414.8L497.7 416.1L503.6 423.9L510.4 416.7L504.1 410.8L499.5 411.8zM525.4 426.9L534.6 421.1L530.8 412.5L525.2 413.7L524.0 425.2zM777.7 415.8L777.7 415.9L782.7 423.3L783.9 423.6L784.5 423.3L786.6 415.7L784.8 413.9zM373.6 416.2L371.9 414.7L370.4 414.1L364.4 415.1L351.6 435.0L372.1 435.0zM495.4 419.6L486.1 425.6L481.6 434.7L481.6 435.0L495.2 435.0zM854.4 424.6L853.7 423.6L847.7 423.2L846.9 423.4L847.4 435.0L854.5 435.0zM861.9 425.2L854.4 424.6L854.5 435.0L863.9 435.0z"/>
<path fill="#f1a58c" stroke="#fff" stroke-opacity="0.22" stroke-width="0.5" d="M405.5 100.0L381.8 100.0L387.8 106.6L400.5 109.7zM576.4 108.4L579.4 110.9L583.7 108.7L585.1 105.3L583.6 100.0L580.4 100.0zM609.5 110.9L614.5 103.0L613.4 100.0L605.2 100.0L607.0 109.0zM794.8 106.4L798.4 106.5L798.8 100.0L791.5 100.0zM480.4 118.1L488.8 109.4L487.8 107.9L471.6 113.3L473.9 116.1zM593.1 109.5L592.8 108.6L585.1 105.3L583.7 108.7L588.5 114.9L592.2 113.1zM601.7 110.8L601.6 112.8L603.4 116.9L610.1 115.2L610.8 114.2L609.5 110.9L607.0 109.0zM731.6 110.3L730.0 106.8L729.6 106.4L723.2 110.0L722.2 113.3L723.9 115.3L729.2 114.5L731.0 112.3zM592.2 113.1L588.5 114.9L586.5 117.4L592.7 123.5L596.3 118.5L594.0 114.7zM652.6 114.7L648.9 114.2L647.0 120.2L647.8 121.6L651.1 121.9L651.3 121.8L653.1 115.4zM664.2 118.7L658.0 118.5L657.0 120.1L659.2 126.1L660.7 126.8L662.6 126.7L665.0 123.4L665.6 120.6zM678.2 116.3L677.6 116.5L673.3 121.6L674.3 124.4L678.3 126.9zM733.2 127.0L734.5 125.3L734.6 121.8L731.2 120.4L726.4 121.5L725.6 125.5L726.6 126.5zM614.0 124.8L615.9 133.1L618.6 133.5L619.6 129.4L614.2 124.6zM709.8 127.0L707.4 125.8L704.6 129.4L705.6 134.0L707.2 134.4zM346.9 138.0L347.1 138.1L359.1 138.9L359.5 129.6L353.3 129.2zM697.2 132.7L694.7 135.1L694.4 139.0L695.8 141.3L701.5 140.0L702.4 135.4zM718.7 133.1L718.5 133.1L714.5 139.2L717.4 142.2L723.1 140.7L723.8 139.1zM740.5 143.1L742.4 139.8L738.2 134.3L735.3 134.7L733.7 138.6zM467.1 148.6L473.9 144.3L474.6 143.2L475.0 139.9L461.3 139.2L461.2 147.4zM677.1 138.2L672.2 141.2L673.1 143.6L674.2 144.1L678.8 143.3L678.7 138.7zM709.1 146.6L712.5 139.0L710.0 137.3L704.3 143.4L704.7 145.9zM599.9 141.1L598.7 141.1L597.0 144.4L601.8 150.5L605.6 149.8L606.5 145.6L605.9 144.4zM731.3 152.0L735.1 153.4L739.6 150.7L740.4 147.0L740.3 146.8L733.4 145.6L733.3 145.7zM285.4 143.4L274.7 160.5L283.3 167.4L294.1 160.4zM474.0 162.6L477.0 163.4L485.1 156.3L481.8 152.0L477.1 153.1L473.6 155.4L472.8 158.9zM551.8 153.7L551.7 153.7L551.8 158.5L559.9 160.8L560.6 158.5L560.8 154.1zM551.8 158.5L550.3 160.4L550.3 160.7L553.5 165.3L560.3 162.4L559.9 160.8zM613.9 155.9L613.3 159.6L616.6 164.0L616.8 164.2L619.2 164.2L621.6 158.2L621.2 157.1zM329.2 176.2L340.6 164.7L337.8 159.5L335.5 157.5L317.7 157.3L314.0 164.1L327.8 176.4zM626.6 172.4L635.0 172.8L635.8 171.8L635.4 166.8L631.0 164.7L630.7 164.8L625.8 170.7zM726.1 172.3L728.9 170.0L727.2 165.8L722.9 164.4L720.4 169.5L724.3 172.2zM314.0 164.1L309.4 167.5L309.2 168.4L314.7 180.2L326.2 177.9L327.8 176.4zM603.1 181.9L607.5 176.1L606.9 171.8L606.1 171.6L599.8 173.2L601.8 182.1L602.5 182.2zM640.9 172.9L643.7 176.8L647.7 173.2L643.1 169.4zM659.1 179.1L661.0 180.6L663.9 178.1L664.5 177.1L664.1 171.4L659.5 171.2L659.3 171.2zM698.1 180.7L701.5 177.4L699.9 172.5L699.5 172.4L697.6 172.6L693.2 178.9zM692.7 179.0L690.3 176.0L685.1 177.5L684.5 179.2L685.0 182.2L690.5 182.8zM698.2 181.3L698.1 180.7L693.2 178.9L692.7 179.0L690.5 182.8L691.4 185.2L696.1 184.5zM730.1 184.2L730.8 178.7L726.8 177.7L723.3 180.7L723.4 181.9L724.9 184.0L728.6 185.7zM621.7 187.7L625.1 189.9L628.6 184.5L628.3 184.0L623.8 184.3L621.6 187.1zM691.4 185.2L690.5 182.8L685.0 182.2L683.8 183.7L686.4 190.4L687.8 190.7L691.1 188.7zM700.8 190.1L701.1 190.5L707.6 192.3L710.2 189.0L709.5 183.6L707.3 182.7L702.2 186.2zM440.7 180.2L433.7 188.2L433.0 190.2L436.6 195.0L449.6 198.0L452.0 196.2L448.5 186.8zM464.8 188.7L461.2 197.9L475.2 195.8L474.7 189.8L466.9 188.2zM566.6 191.9L562.6 190.5L559.1 193.1L559.0 193.2L563.0 198.7L566.5 198.1zM697.2 198.4L700.8 193.5L701.1 190.5L700.8 190.1L698.3 189.9L695.4 190.6L693.8 197.5zM709.3 197.8L707.6 192.3L701.1 190.5L700.8 193.5L704.0 198.7zM599.2 207.8L601.3 202.0L598.8 197.6L595.4 196.4L589.7 205.5zM736.2 199.5L732.3 194.1L728.9 194.9L730.5 202.8L735.0 202.6zM452.0 196.2L449.6 198.0L442.1 211.3L445.9 218.8L447.0 219.2L461.6 205.5L462.0 201.1L461.0 198.2zM656.0 209.2L659.1 207.8L660.8 204.8L657.4 201.2L653.7 201.3L652.5 203.3L653.7 208.2zM702.9 205.9L703.0 207.8L708.1 210.9L710.5 207.8L709.2 203.8zM800.4 209.6L799.5 203.9L798.2 203.2L794.1 203.7L793.2 207.0L795.6 211.9zM601.3 214.9L608.0 214.4L606.8 208.0L600.0 209.3L600.1 212.2zM708.5 214.4L708.1 210.9L703.0 207.8L701.2 210.9L702.3 215.3zM836.9 206.8L833.4 208.7L833.5 213.9L834.5 214.7L839.2 214.8L841.5 207.9L841.1 206.5zM501.2 218.4L498.3 213.9L487.3 217.0L487.5 219.7L498.5 223.1zM582.3 214.6L575.4 223.8L578.4 227.2L586.1 219.9zM734.0 216.8L732.4 215.2L730.5 214.9L725.6 221.7L727.5 223.0L734.5 218.4zM759.6 217.9L758.0 221.9L758.2 222.2L765.3 223.8L767.0 218.0L767.1 217.4L759.6 217.9zM821.9 218.1L824.9 224.5L829.3 222.6L827.2 217.0L822.6 216.8zM592.2 228.7L593.9 230.5L601.4 225.3L600.0 220.3L592.8 221.2zM601.4 225.3L603.7 227.6L608.4 225.6L608.2 220.8L600.4 219.6L600.0 220.3zM608.2 220.8L608.4 225.6L613.8 227.2L614.9 224.8L610.1 219.3zM622.8 222.7L619.6 221.3L618.7 221.7L614.9 224.8L613.8 227.2L614.2 229.5L622.4 228.9L623.1 228.5zM691.3 221.2L685.1 221.2L684.4 222.0L685.8 228.0L690.4 228.5L692.4 227.4L692.6 226.9zM710.3 227.1L710.4 227.4L715.7 226.9L717.3 222.2L715.2 220.6L711.8 222.3zM729.3 226.7L727.5 223.0L725.6 221.7L722.9 221.1L721.4 222.1L721.8 228.6L721.9 228.8L726.7 229.0zM765.3 223.8L766.7 226.0L770.7 225.6L770.9 223.8L767.0 218.0zM849.8 228.1L848.4 223.5L842.3 222.2L842.4 226.5L849.1 229.0zM864.1 228.8L865.9 231.1L876.6 223.8L868.9 221.3L868.6 221.5zM640.0 234.3L639.0 228.6L635.7 228.1L633.4 229.5L631.2 233.4L632.2 235.2L638.2 235.8zM716.3 227.8L715.7 226.9L710.4 227.4L709.8 232.9L712.8 233.5L715.9 232.3zM727.9 236.1L734.8 231.5L734.1 228.1L729.3 226.7L726.7 229.0L727.3 235.6zM586.0 234.1L584.8 235.5L584.5 242.8L585.0 243.8L592.3 237.8L592.2 236.8zM622.6 237.3L620.3 235.7L614.9 235.0L613.8 240.8L615.8 242.6L619.7 242.6L622.7 240.0zM632.2 235.2L631.2 233.4L627.6 232.7L624.3 236.4L631.0 240.0zM688.6 235.2L685.8 235.2L682.7 241.8L689.7 241.8L690.2 241.3L689.7 236.0zM829.2 242.5L832.4 242.7L835.7 238.7L834.3 235.0L833.2 233.9L830.5 233.8L827.1 240.9zM451.8 241.6L451.5 240.4L434.9 236.0L434.1 237.8L434.9 253.0L438.8 255.8L451.3 244.9zM696.4 245.8L694.6 241.9L690.2 241.3L689.7 241.8L689.5 246.1L695.2 247.0zM700.1 246.1L701.9 242.6L697.3 237.6L694.6 241.9L696.4 245.8zM718.6 240.6L717.9 240.7L714.5 248.6L715.5 249.9L720.6 247.4L721.9 245.0L722.0 242.9zM744.7 239.0L746.2 245.7L750.4 244.8L746.8 237.9zM766.2 245.3L766.9 242.1L765.0 239.8L760.2 241.9L760.1 245.0L765.8 245.8zM689.4 254.3L692.5 251.9L688.2 247.7L685.1 248.5L684.6 249.9zM693.7 251.7L695.2 247.0L689.5 246.1L688.2 247.7L692.5 251.9zM745.4 246.1L741.6 244.6L737.6 247.5L742.1 252.1L744.3 251.4zM784.0 252.4L784.7 250.2L782.4 246.9L776.3 248.7L776.9 250.1L782.0 253.7zM291.8 250.6L290.6 249.4L270.0 260.3L270.0 265.5L274.8 268.3zM567.1 260.7L569.9 254.3L567.6 250.1L561.2 254.2L561.4 255.7L565.3 260.2zM579.6 262.9L584.7 255.9L584.8 249.6L584.7 249.5L579.7 249.5L574.7 255.4L575.5 260.5L579.1 263.1zM829.9 250.7L828.5 250.2L822.5 257.0L824.7 259.5L828.4 259.1L831.4 253.5zM843.0 254.7L843.1 257.3L843.9 258.3L850.0 257.2L850.9 253.6L847.1 249.9zM869.1 259.8L874.8 255.3L867.9 251.7L865.6 254.7L868.4 259.3zM601.5 261.7L602.2 264.4L610.1 264.7L610.5 264.4L609.0 258.6zM641.5 265.7L643.0 266.6L644.0 266.4L648.3 263.5L647.6 259.3L646.1 258.0L642.1 258.8zM676.6 258.9L673.2 258.8L671.9 266.7L680.6 263.7L679.9 261.2zM792.2 259.2L792.4 261.6L796.9 266.2L799.9 265.6L799.7 261.2L796.3 256.9zM824.7 259.5L822.5 257.0L822.2 256.8L815.9 259.6L818.4 266.1L822.5 264.0zM666.6 274.4L671.0 272.8L672.6 270.6L671.4 267.3L667.7 266.3L665.1 273.3zM698.6 271.4L704.7 274.1L707.3 273.1L704.2 266.3L700.9 267.1zM754.9 264.7L749.9 268.0L749.7 269.9L753.9 271.8L756.8 270.0L756.3 265.9zM792.6 275.6L792.9 275.7L796.5 270.9L796.3 267.1L789.4 270.4zM714.5 279.8L717.8 277.4L714.3 272.8L710.0 273.5L709.1 273.9L709.2 278.7L709.7 279.5zM388.5 279.2L377.7 279.0L373.3 281.7L373.1 282.6L389.1 286.0zM709.2 284.5L712.1 286.1L715.2 285.2L714.5 279.8L709.7 279.5zM745.7 280.4L745.2 279.3L742.6 279.2L736.5 285.6L736.8 286.6L742.9 287.4zM722.9 293.2L723.0 292.9L722.8 286.7L720.6 285.3L718.1 285.8L716.5 290.2zM823.7 286.7L820.3 285.9L814.9 291.4L815.3 291.8L824.7 291.1zM585.6 292.7L579.2 288.4L578.5 288.5L575.2 291.9L575.1 296.2L583.1 298.0L584.3 297.8L586.5 296.3zM619.1 297.5L621.6 295.8L621.2 291.0L616.9 289.0L614.4 291.7L616.3 298.0zM639.0 296.1L645.7 297.6L646.5 296.3L645.7 290.7L642.5 289.2zM715.1 291.7L712.1 290.5L709.3 292.8L709.1 295.8L711.5 297.9L717.1 296.7zM740.2 294.9L740.4 296.1L744.3 296.7L747.3 291.0L746.7 289.7L743.2 287.8zM860.8 297.1L861.3 296.7L861.3 290.7L860.2 288.9L854.2 289.9L854.9 294.2zM853.3 295.7L848.4 296.6L847.5 297.9L850.8 302.1L854.2 301.6zM493.4 313.5L495.7 311.9L493.0 299.2L488.4 299.8L481.8 306.4L481.2 311.9L482.6 313.9zM573.7 297.5L572.8 297.8L568.4 308.2L576.0 310.9L578.4 310.1zM600.1 303.1L599.3 307.8L606.9 312.5L609.8 308.5L608.0 304.9L606.0 303.9L600.4 302.7zM814.8 306.9L815.6 310.1L820.0 309.0L821.7 306.0L817.3 301.1zM537.8 308.0L533.6 312.0L538.0 319.3L542.6 312.4L542.0 309.7zM563.5 319.5L566.8 317.2L567.8 308.3L561.6 306.6L560.2 309.3zM672.8 309.6L671.2 316.8L675.7 316.2L676.8 315.3L675.3 309.1zM804.3 310.1L802.9 310.7L803.5 315.9L809.4 318.0L807.0 309.9zM854.4 316.7L851.8 310.0L851.2 309.9L846.9 314.7L854.2 317.1zM688.4 317.1L688.4 317.1L690.1 323.1L691.0 323.7L696.3 320.0L696.2 317.4zM831.0 321.5L831.3 321.8L834.5 322.2L836.7 316.8L835.0 312.5L834.7 312.5L829.8 317.4zM391.3 326.8L391.6 321.4L373.6 322.9L377.4 328.0L384.6 332.9zM456.3 320.9L434.0 318.2L430.0 319.1L426.8 322.0L440.0 337.7L455.8 324.8zM537.7 321.3L540.0 328.1L545.7 328.5L546.1 320.8L537.8 321.1zM778.9 321.6L770.4 323.4L772.1 326.5L779.3 327.2zM792.2 328.7L789.3 321.4L786.3 322.3L783.1 327.6L791.6 329.6zM459.2 318.9L456.5 320.6L456.3 320.9L455.8 324.8L462.2 337.4L474.3 337.5L477.0 333.6zM690.3 329.9L684.9 326.6L685.0 333.5L685.6 333.7L690.2 333.5zM804.7 333.8L806.0 326.1L806.0 326.1L798.7 327.9L801.2 334.2L802.8 334.7zM837.1 332.9L837.6 331.1L835.0 328.6L831.6 329.7L830.0 334.0L830.7 335.5L835.6 334.6zM860.8 330.2L861.6 335.1L863.4 335.9L865.0 335.1L866.4 329.6L863.0 328.2zM418.4 323.0L416.4 323.7L409.8 339.7L409.7 340.7L410.6 346.4L437.1 347.1L440.2 344.3L440.0 337.7L426.8 322.0zM610.1 341.9L612.0 335.6L608.3 334.9L603.8 334.8L604.7 341.3L608.5 342.6zM763.6 336.9L758.3 340.0L762.3 343.1L766.7 338.1L766.6 337.8zM792.8 342.5L791.2 334.6L790.9 334.4L788.5 335.6L787.8 342.3L790.6 343.2zM796.0 343.3L797.2 341.7L796.5 336.6L791.2 334.6L792.8 342.5zM270.0 338.7L270.0 358.7L271.5 358.8L290.1 352.5L286.2 344.9L275.0 339.3zM516.4 337.5L515.5 338.8L518.2 349.0L526.0 343.1zM876.9 335.2L876.4 335.4L867.8 344.3L869.5 346.8L878.8 347.1L880.0 346.6L880.0 335.5zM663.8 352.5L665.4 348.5L664.6 347.6L659.1 346.0L656.9 349.9L661.8 352.2zM665.4 348.5L663.8 352.5L664.5 355.3L671.8 354.9L672.6 348.8L670.2 347.4zM683.1 346.5L677.2 346.9L675.7 348.4L679.8 355.0L682.6 352.2L684.2 347.8zM710.3 345.3L707.1 348.7L710.1 353.8L715.8 352.0L717.0 348.8L716.9 348.4zM728.3 351.5L732.9 356.6L733.9 356.5L736.5 352.5L734.1 348.0L728.5 349.2zM811.4 348.5L810.5 347.7L806.1 349.1L805.9 353.3L808.6 355.7L811.3 353.7zM814.2 360.6L820.3 357.5L820.9 354.9L820.5 354.2L817.7 352.6L815.4 353.7L813.9 360.4zM539.9 356.2L537.2 361.3L541.9 366.4L545.8 366.9L546.7 366.0L548.1 359.6L544.2 356.0zM634.3 363.3L630.4 358.2L627.8 359.2L626.0 361.3L626.0 363.8L627.9 365.9L633.4 365.5zM789.6 363.4L791.4 367.1L798.7 367.3L799.7 366.2L798.1 361.6L789.8 361.3zM575.9 377.5L580.6 371.7L579.5 367.0L573.2 367.8L570.9 372.8L574.6 377.3zM658.8 366.6L654.5 367.5L654.8 371.0L657.8 374.2L660.0 373.9L662.0 366.7zM678.8 368.8L678.5 371.3L680.1 372.7L686.9 370.8L685.8 366.5L685.6 366.4zM789.9 370.2L792.4 373.1L798.3 369.7L798.7 367.3L791.4 367.1zM811.8 372.8L811.6 369.6L809.0 367.7L804.7 366.7L804.6 373.3L804.6 373.4L808.9 375.9zM535.6 379.2L536.5 376.3L536.4 375.6L529.8 367.3L524.3 375.7L531.0 381.2zM537.9 381.4L549.4 383.0L551.0 380.4L551.4 376.2L549.1 374.4L536.5 376.3L535.6 379.2zM568.8 373.1L564.7 370.5L558.9 374.4L564.1 379.9zM598.2 368.1L593.2 373.1L593.4 378.1L602.0 380.6L602.7 371.5L601.5 370.2zM642.5 371.9L634.4 371.3L633.0 374.7L633.0 376.4L640.6 376.9L642.5 372.0zM830.7 378.1L834.2 376.1L834.5 375.4L829.9 371.4L826.9 374.7L826.6 376.4zM481.6 387.4L482.7 388.4L495.8 389.0L496.1 388.8L496.5 386.9L496.0 380.1L496.0 379.9L486.4 375.5zM673.7 381.3L668.3 379.7L666.0 380.7L665.5 384.8L667.1 386.7L670.9 385.9L673.8 381.9zM468.8 382.0L465.7 381.0L464.9 381.5L461.2 388.7L461.0 393.1L465.1 395.8L472.6 393.5L476.3 388.5zM628.5 386.8L625.3 386.7L624.6 389.2L630.4 393.4L632.5 391.8zM805.3 392.0L809.5 390.1L812.1 385.5L807.4 383.3L805.0 384.2zM476.3 388.5L472.6 393.5L478.9 401.2L484.4 395.9L482.7 388.4L481.6 387.4L478.4 387.6zM682.6 397.7L683.8 396.9L684.1 391.7L676.1 391.1L681.4 398.0zM841.6 397.8L842.7 395.9L842.0 393.2L836.0 391.4L837.3 400.0zM658.8 397.3L659.0 403.8L664.5 403.8L664.9 403.5L664.2 398.8L661.1 395.7zM822.1 404.3L824.7 402.3L823.6 396.4L817.6 396.1L816.2 397.5L818.9 402.8L821.4 404.4zM347.3 410.0L346.7 409.3L328.9 403.6L327.6 417.3L328.4 417.7L346.1 412.5zM758.8 402.9L762.6 410.4L765.8 410.3L766.3 409.9L766.2 408.9L765.0 403.9L760.3 401.7zM816.8 409.1L817.5 410.9L821.0 414.1L824.6 411.3L822.1 404.3L821.4 404.4zM857.9 416.5L861.5 417.5L864.2 416.5L866.1 414.2L866.1 412.7L864.8 409.0L861.3 408.7L859.2 410.0L857.9 416.5zM866.1 412.7L866.1 414.2L880.0 418.5L880.0 406.4zM497.7 416.1L497.6 414.8L485.9 415.8L486.1 425.6L495.4 419.6zM415.5 427.8L415.5 435.0L441.4 435.0L438.7 426.1L433.8 419.5L427.5 417.9zM506.5 431.6L503.6 423.9L497.7 416.1L495.4 419.6L495.2 435.0L506.6 435.0zM526.5 435.0L538.6 435.0L534.6 421.1L534.6 421.1L525.4 426.9zM756.5 422.6L765.1 434.0L765.3 424.6L759.4 419.9z"/>
<path fill="#f09d83" stroke="#fff" stroke-opacity="0.22" stroke-width="0.5" d="M652.6 100.2L656.2 108.5L656.2 108.5L659.3 107.6L661.6 100.0L652.6 100.0zM690.0 106.0L692.3 108.7L698.2 106.5L697.2 100.0L695.5 100.0zM848.2 107.9L848.4 108.4L855.7 112.1L857.4 108.1L852.8 100.0L850.5 100.0zM310.9 112.4L328.3 117.5L327.7 110.6L314.6 109.1zM519.1 118.7L526.2 112.3L527.5 107.8L526.7 100.6L526.4 100.0L511.2 100.0zM546.5 106.6L540.6 109.0L539.1 117.7L543.3 119.5L550.2 117.3L550.2 117.2zM546.5 106.6L550.2 117.2L555.7 113.2L558.2 103.6L556.4 100.0L549.5 100.0zM614.5 103.0L609.5 110.9L610.8 114.2L615.6 113.6L617.0 105.7zM691.2 113.6L692.3 108.7L690.0 106.0L686.7 105.5L685.4 106.5L685.2 112.3L689.8 114.2zM628.4 115.2L626.8 113.8L621.6 113.9L619.1 115.1L620.0 121.8L620.7 122.1L628.2 119.5L628.3 119.2zM634.1 112.4L630.8 114.5L637.9 120.6L640.6 116.6L640.5 114.7L639.5 113.2zM370.6 127.9L373.3 133.1L390.4 131.5L389.4 124.7L385.9 119.7L375.4 117.0zM637.8 120.7L628.3 119.2L628.2 119.5L629.7 124.7L637.8 121.9zM603.9 127.2L602.1 131.1L605.6 133.6L609.7 130.4L609.6 128.1zM722.1 126.4L721.0 125.8L714.4 127.3L714.2 127.7L714.5 129.5L718.5 133.1L718.7 133.1L721.5 131.3zM656.0 133.1L655.7 136.7L661.2 138.7L662.5 137.9L663.0 134.9L657.2 132.5zM727.1 133.1L726.6 132.5L721.5 131.3L718.7 133.1L723.8 139.1L726.4 137.5zM646.8 146.9L653.2 144.6L652.7 142.7L646.9 140.2L645.1 141.7zM597.0 144.4L594.6 146.0L592.9 152.6L597.4 158.2L599.2 156.8L601.8 150.5zM622.3 146.4L620.6 144.4L614.2 145.9L613.9 146.5L614.1 150.9L620.4 150.9zM645.0 152.4L644.9 149.0L640.2 146.0L636.9 151.7L637.8 152.9L644.3 153.2zM628.7 151.1L626.9 152.5L626.9 158.4L632.5 157.5L630.3 151.6zM663.0 153.3L658.2 153.2L656.5 158.8L658.0 161.6L658.5 161.7L663.4 157.1zM841.7 159.9L842.1 160.2L845.5 160.5L848.7 157.9L848.5 153.8L846.2 152.9L842.7 154.3zM461.0 180.7L461.4 176.6L444.8 168.7L444.0 168.7L442.6 169.1L440.8 171.3L440.7 180.2L448.5 186.8zM628.8 179.4L628.3 184.0L628.6 184.5L633.6 187.5L634.0 187.3L634.5 186.4L634.1 179.1zM332.4 189.6L343.1 193.6L344.3 183.3L333.8 183.8zM572.8 190.5L575.2 189.3L579.3 183.0L578.9 182.7L571.2 181.2L570.1 185.0L571.6 189.9zM592.3 191.4L592.3 191.2L584.5 187.2L581.8 191.0L581.9 195.1L585.2 197.2zM606.7 191.2L606.4 191.0L604.7 190.7L604.0 191.2L602.5 194.2L608.7 200.6L610.4 196.0zM695.4 190.6L691.1 188.7L687.8 190.7L689.3 195.6L693.7 197.6L693.8 197.5zM673.2 205.8L677.5 199.6L676.9 199.1L673.0 197.3L671.9 204.4zM689.3 195.6L686.4 198.4L687.9 202.3L692.0 201.4L693.7 197.6zM766.5 197.4L765.6 196.7L761.9 197.7L759.4 202.5L769.4 202.8L769.4 202.8zM819.7 195.0L819.6 194.8L814.2 195.1L812.3 196.4L813.7 200.8L818.7 202.7zM277.4 188.2L270.0 190.2L270.0 217.0L289.4 216.6L294.6 210.3L294.6 205.1zM430.0 208.3L424.5 195.2L421.1 194.9L415.8 210.1L423.0 213.7zM627.3 207.4L627.2 203.4L625.0 202.3L619.5 207.5L622.3 211.0L625.7 210.8zM649.1 202.9L643.3 201.8L642.3 203.1L642.1 207.7L643.7 208.5L649.6 203.2zM821.5 204.3L821.0 203.8L818.9 203.0L814.4 208.8L815.7 210.8L822.3 211.2zM646.2 212.1L646.2 211.4L643.7 208.5L642.1 207.7L639.4 208.6L637.9 214.4L640.8 217.3L643.3 216.7zM665.5 208.2L664.4 210.0L664.2 213.3L667.8 216.2L669.1 215.9L670.3 208.2zM682.8 211.5L680.2 214.5L684.2 218.3L688.9 213.5L687.7 210.7zM767.9 216.4L771.7 217.4L775.5 212.6L774.6 210.1L769.3 211.7L767.7 214.5zM788.5 213.3L792.0 216.8L793.2 216.1L795.2 213.4L795.6 211.9L793.2 207.0L786.7 209.8zM804.3 218.1L807.6 212.7L807.6 209.5L800.9 209.9L802.0 215.5zM647.0 219.9L643.3 216.7L640.8 217.3L639.4 220.8L641.6 225.7zM827.2 217.0L829.3 222.6L829.5 222.7L833.0 220.8L834.5 214.7L833.5 213.9L830.6 214.0zM308.2 223.4L299.3 212.1L294.6 210.3L289.4 216.6L291.7 232.0L301.8 233.4zM639.4 220.8L632.6 221.5L635.7 228.1L639.0 228.6L641.6 226.1L641.6 225.7zM779.4 223.7L779.4 223.2L777.3 220.0L773.3 219.1L770.9 223.8L770.7 225.6L773.0 227.1zM282.3 240.0L286.7 240.1L291.7 232.0L289.4 216.6L270.0 217.0L270.0 229.8zM593.9 230.5L592.2 228.7L585.2 229.0L586.0 234.1L592.2 236.8L594.1 231.6zM648.0 229.0L647.3 228.1L641.6 226.1L639.0 228.6L640.0 234.3L642.4 235.1zM744.4 226.0L743.1 225.8L741.2 226.1L740.5 233.3L740.7 233.5L745.4 232.0zM376.9 239.5L371.5 220.5L362.0 218.2L355.9 219.5L356.4 227.7L363.1 245.5zM672.0 239.8L669.1 233.9L667.1 233.8L665.7 235.6L666.2 240.1L667.3 241.3L669.8 241.6zM677.0 236.7L672.0 232.1L669.1 233.9L672.0 239.8L676.8 238.8zM721.2 234.9L718.6 240.6L722.0 242.9L726.6 242.1L728.9 240.2L727.9 236.1L727.3 235.6zM735.8 232.4L735.3 240.5L739.9 240.5L741.5 238.7L740.7 233.5L740.5 233.3zM754.6 238.8L756.6 239.0L762.5 235.7L759.9 234.4L752.5 234.5zM837.5 239.4L843.4 238.3L843.1 232.8L841.7 231.6L834.3 235.0L835.7 238.7zM815.6 246.8L816.9 249.1L824.1 247.7L822.5 241.5L815.8 242.2zM840.1 246.5L837.5 239.4L835.7 238.7L832.4 242.7L833.3 245.9L836.4 247.4zM625.7 245.0L622.4 247.4L622.6 252.2L624.8 251.8L627.5 247.5zM747.5 253.9L752.7 253.8L754.0 247.5L752.2 244.9L750.4 244.8L746.2 245.7L745.4 246.1L744.3 251.4zM769.8 252.5L774.3 256.3L776.9 250.1L776.3 248.7L775.7 248.2L773.2 248.3zM865.6 254.7L867.9 251.7L868.0 247.1L865.3 245.8L860.3 248.7L861.1 253.1L863.1 254.8zM614.0 253.6L616.8 259.6L623.2 257.5L622.5 252.3L615.5 252.0zM711.1 255.8L708.1 254.5L704.4 255.2L704.9 260.9L711.9 258.7zM766.2 257.7L769.0 260.7L771.3 261.0L774.7 257.3L774.3 256.3L769.8 252.5L767.4 252.9zM799.2 253.1L796.8 250.2L791.3 253.0L789.9 256.5L790.3 257.4L792.2 259.2L796.3 256.9zM312.8 254.3L309.5 267.9L310.5 268.7L324.9 265.2L324.9 265.2zM779.6 262.3L779.4 264.2L780.5 265.0L786.5 264.6L784.9 259.7L784.6 259.7zM850.1 257.4L850.0 257.2L843.9 258.3L844.2 263.5L849.4 264.4L849.5 264.4zM608.4 273.3L610.8 269.9L610.1 264.7L602.2 264.4L602.0 265.2L604.8 271.8zM846.6 272.7L849.4 264.4L844.2 263.5L843.8 264.0L843.3 271.1zM709.1 273.9L707.3 273.1L704.7 274.1L700.7 279.0L702.6 280.1L709.2 278.7zM734.2 272.6L733.4 276.5L733.7 276.8L740.7 277.9L740.0 271.5zM831.0 272.0L832.4 278.3L836.9 276.3L837.5 270.6L836.9 270.1L832.7 270.3zM592.4 285.4L594.0 276.9L591.1 272.4L587.8 274.3L584.1 278.9L585.4 284.1L586.5 285.1L591.4 286.2zM608.4 286.7L609.4 277.9L601.2 281.3L601.1 284.3L601.9 286.2zM616.2 287.0L621.2 281.1L621.0 280.4L615.1 277.7L613.0 278.2L613.7 285.6zM824.4 277.1L823.5 278.1L824.9 284.8L830.9 278.5zM609.7 291.2L608.9 287.1L608.4 286.7L601.9 286.2L600.4 291.5L601.5 293.7zM642.5 289.2L645.7 290.7L649.5 289.1L649.9 286.5L647.3 280.8L644.5 281.4L642.0 288.6zM746.7 289.7L749.7 284.0L745.7 280.4L742.9 287.4L743.2 287.8zM802.2 283.5L799.0 283.7L796.1 287.0L796.3 291.2L798.6 292.3L802.9 289.9zM295.2 287.9L294.1 285.1L282.5 281.7L270.0 292.0L270.0 311.6zM703.3 289.9L699.3 289.0L697.4 291.7L699.0 296.6L702.8 297.4zM736.6 287.0L732.2 291.0L732.3 292.4L738.9 296.6L740.0 296.3L740.4 296.1L740.2 294.9zM835.3 298.8L841.1 294.5L840.7 290.5L835.9 290.5L835.0 290.8L832.8 297.4zM854.9 294.2L854.2 289.9L853.5 289.3L850.1 289.6L847.9 292.1L848.4 296.6L853.3 295.7zM583.1 298.0L575.1 296.2L573.7 297.5L578.4 310.1L579.4 310.2zM667.4 297.9L665.8 300.7L668.8 305.6L673.1 301.6L672.4 299.6zM702.9 297.5L702.8 297.4L699.0 296.6L696.6 298.0L694.6 302.2L697.0 304.8L702.1 304.9L703.3 302.0zM773.2 304.0L770.9 298.4L768.0 297.4L766.4 301.8L771.6 305.2zM778.4 298.8L776.5 295.6L775.0 294.9L770.9 298.4L773.2 304.0L777.7 303.7L778.1 303.2zM434.0 318.2L444.5 306.5L437.8 298.0L434.6 296.4L432.5 297.1L430.0 319.1zM643.8 303.9L640.0 309.7L646.3 312.8L648.2 310.0L645.0 303.6zM667.5 308.9L668.4 308.5L668.8 305.6L665.8 300.7L661.0 303.3L661.4 304.7zM680.8 303.1L677.9 305.5L677.5 307.0L682.1 311.2L685.2 310.0L683.8 303.1zM808.3 302.6L808.2 309.2L815.6 310.1L815.6 310.1L814.8 306.9L810.7 301.4zM552.9 313.6L551.1 309.5L544.4 307.7L542.0 309.7L542.6 312.4L550.7 317.8L551.5 317.8L551.6 317.7zM626.0 323.0L628.6 325.4L634.1 321.9L629.8 316.0L627.8 316.7zM720.3 313.8L714.0 316.0L713.7 320.4L715.4 322.4L722.1 318.9L721.6 315.4zM740.0 322.3L745.4 320.8L745.9 317.4L738.8 315.2L737.7 319.7zM823.1 322.7L823.4 322.3L824.7 316.1L824.5 315.9L815.5 317.1L818.2 323.2zM786.3 322.3L781.8 319.9L779.0 321.4L778.9 321.6L779.3 327.2L779.7 327.6L782.4 327.9L783.1 327.6zM856.9 328.4L860.8 330.2L863.0 328.2L862.7 324.4L859.9 322.0L855.5 323.2zM641.9 328.8L634.9 331.5L635.3 333.9L642.1 334.5L642.9 329.0zM644.8 328.3L642.9 329.0L642.1 334.5L642.6 335.4L647.2 336.1L645.0 328.4zM714.7 332.7L715.8 331.2L716.5 327.7L715.8 326.6L710.0 326.5L708.8 329.7L710.4 333.5zM614.3 334.5L612.0 335.6L610.1 341.9L614.6 344.2L617.5 341.1L616.5 335.8zM703.5 332.5L700.0 336.0L706.4 340.2L708.1 339.9L709.0 334.6zM830.7 335.5L830.5 339.9L831.3 341.1L834.9 342.2L837.9 339.9L835.6 334.6zM582.3 343.1L584.9 348.3L592.0 350.7L592.9 350.2L594.4 339.6L593.9 338.3L587.8 335.4zM621.7 347.2L627.1 351.0L630.7 345.9L628.7 342.5L626.4 340.9L626.2 340.9L622.7 343.1zM656.9 349.9L659.1 346.0L658.2 343.8L653.8 343.2L652.1 347.3L653.4 351.3zM773.7 343.0L773.4 342.7L768.8 342.1L767.2 345.7L772.5 348.4zM777.3 343.5L773.7 343.0L772.5 348.4L772.7 349.1L778.2 347.3L778.8 345.6zM828.9 349.9L836.9 347.3L834.9 342.2L831.3 341.1L827.1 347.2zM840.4 346.7L848.7 347.6L849.1 347.1L848.7 345.6L843.5 341.7zM863.8 342.1L861.4 343.8L861.2 345.8L866.7 350.7L869.5 346.8L867.8 344.3L865.4 342.6zM554.1 358.0L558.1 360.4L561.8 351.9L560.9 347.8L558.7 345.9L553.2 348.6L553.1 355.3zM672.6 348.8L671.8 354.9L672.1 355.4L678.9 355.7L679.8 355.4L679.8 355.0L675.7 348.4zM866.7 350.7L861.2 345.8L858.8 349.8L861.7 354.5L866.1 353.7zM649.5 353.9L649.4 357.6L652.9 361.5L657.1 358.1L656.0 355.4L653.2 351.7zM808.6 355.7L805.9 353.3L801.4 354.3L800.3 358.0L806.5 359.9L808.8 358.1zM331.0 370.1L337.2 372.1L351.5 364.8L352.2 360.6L348.5 346.9L348.0 346.9L343.5 348.4L341.1 349.9zM437.8 375.1L437.1 362.1L436.0 359.8L416.2 360.8L434.6 375.9L437.8 375.1zM752.0 362.0L752.8 365.0L755.4 366.2L760.4 365.3L757.7 360.6L754.2 359.9zM778.6 366.9L781.3 362.2L781.5 361.1L781.1 360.4L777.0 357.1L773.4 363.2L773.5 364.9L775.7 367.5zM817.1 366.1L821.0 364.3L820.6 358.1L820.3 357.5L814.2 360.6zM406.9 379.6L411.5 383.8L420.7 385.1L434.6 375.9L416.2 360.8L412.7 359.7L406.9 378.9zM524.3 375.7L529.8 367.3L529.1 363.1L523.0 359.3L520.4 359.3L515.7 366.6L522.6 375.7zM299.9 382.5L311.8 374.3L311.6 373.9L294.3 372.9zM801.1 378.2L799.2 379.0L799.8 382.8L805.0 384.2L807.4 383.3L808.2 377.4zM834.2 376.1L830.7 378.1L830.7 384.0L836.0 385.8L837.2 381.9zM836.0 385.8L836.1 386.0L843.8 386.2L845.4 384.6L840.7 379.7L837.2 381.9zM539.8 391.2L544.9 392.4L549.4 388.3L549.4 383.0L537.9 381.4zM662.4 393.0L667.3 389.3L667.1 386.7L665.5 384.8L661.4 386.2L661.2 392.3L661.9 393.1zM670.9 385.9L667.1 386.7L667.3 389.3L672.1 393.8L675.5 391.0zM813.9 385.8L812.8 385.3L812.1 385.5L809.5 390.1L812.6 392.9L816.2 389.8zM518.4 389.2L518.3 395.9L519.2 402.2L530.2 400.5L530.3 400.4L524.6 389.1L518.4 389.1zM530.3 400.4L533.5 399.2L534.6 397.7L537.1 392.5L527.8 387.0L524.6 389.1zM563.4 396.5L557.4 391.3L556.2 391.7L555.1 399.0L561.1 399.0zM653.1 396.2L652.4 393.9L648.2 392.7L645.8 396.7L646.5 397.8L652.7 397.1zM661.1 395.7L664.2 398.8L668.8 395.8L662.4 393.0L661.9 393.1zM780.4 399.8L786.3 401.0L786.8 398.9L784.8 393.3L780.5 394.1L778.6 395.9zM849.5 397.1L849.9 396.8L849.6 392.4L844.1 390.7L842.0 393.2L842.7 395.9zM849.6 392.4L849.9 396.8L855.8 398.8L855.4 391.6L850.9 390.5zM627.8 404.5L628.3 405.1L634.4 405.4L635.4 403.4L635.1 400.7L629.2 398.4zM777.9 402.3L781.3 405.7L783.3 405.9L786.8 402.5L786.3 401.0L780.4 399.8zM370.4 414.1L365.7 401.1L350.3 407.6L348.5 409.6L364.4 415.1zM425.9 401.2L420.4 408.4L420.6 409.0L427.5 417.9L433.8 419.5L438.9 408.0L439.0 407.5L437.7 403.1zM670.7 402.7L664.9 403.5L664.5 403.8L665.0 409.3L665.5 409.8L673.3 409.7L672.7 406.7zM673.3 409.7L674.4 411.1L675.6 411.8L680.1 409.0L679.6 403.2L679.3 402.7L672.7 406.7zM841.3 405.6L841.8 408.9L843.7 410.8L844.8 410.9L848.8 404.6L846.9 402.1L845.1 402.3zM276.5 417.7L285.6 422.6L295.6 410.3L288.6 406.2L277.8 410.7zM602.2 409.6L600.3 411.9L601.0 416.4L601.9 416.9L607.6 415.0L608.4 410.4zM659.3 415.8L659.7 415.5L659.9 410.9L657.6 408.5L652.9 410.2L651.7 413.3L652.0 416.0L653.5 417.4zM810.1 414.1L810.3 411.7L805.8 408.0L802.1 410.3L802.4 415.7L803.6 416.5L808.6 415.4zM662.8 422.8L667.3 419.1L666.6 416.3L665.7 415.5L659.7 415.5L659.3 415.8L662.3 422.7zM810.5 422.9L811.2 422.2L808.6 415.4L803.6 416.5L803.5 420.9L806.0 423.2zM816.4 417.8L813.6 415.4L810.1 414.1L808.6 415.4L811.2 422.2L814.2 422.1zM866.1 414.2L864.2 416.5L868.1 421.5L880.0 421.4L880.0 418.5zM481.6 434.7L476.4 426.4L462.5 418.8L454.7 435.0L481.6 435.0zM818.4 435.0L826.5 423.5L821.9 420.5L817.3 426.1z"/>
<path fill="#ef947a" stroke="#fff" stroke-opacity="0.22" stroke-width="0.5" d="M622.6 105.5L627.0 108.3L629.8 105.9L627.7 100.0L624.4 100.0zM671.8 107.4L672.5 108.7L677.6 110.8L680.2 105.0L677.3 100.0L676.3 100.0zM711.8 108.0L712.8 108.4L715.1 107.4L715.5 106.8L714.0 100.0L708.6 100.0zM617.0 105.7L615.6 113.6L618.0 114.8L619.1 115.1L621.6 113.9L620.7 106.3zM647.6 112.4L648.9 114.2L652.6 114.7L654.6 109.6L648.0 109.5zM502.5 123.8L507.2 118.6L506.2 107.2L492.1 111.9L492.3 117.6L496.3 123.2zM524.9 137.3L530.1 139.8L533.8 140.0L535.3 132.0L529.8 126.1L526.7 126.7L524.0 134.7zM615.9 133.1L613.0 133.7L610.8 138.6L611.0 139.1L613.2 141.0L618.1 138.8L618.8 133.6L618.6 133.5zM611.0 139.1L610.8 138.6L605.9 136.7L599.9 141.1L605.9 144.4zM336.4 136.7L336.1 137.1L335.3 138.8L335.5 157.5L337.8 159.5L351.3 147.6L347.1 138.1L346.9 138.0zM648.6 153.0L655.2 146.5L655.2 146.1L653.2 144.6L646.8 146.9L644.9 149.0L645.0 152.4zM805.7 159.2L800.1 162.7L806.2 165.5L807.6 163.9L807.7 160.6zM623.8 184.3L628.3 184.0L628.8 179.4L626.0 177.5L624.0 178.4zM298.5 180.3L284.2 177.9L277.4 188.2L294.6 205.1L298.8 200.9L303.2 192.6L301.4 184.9zM670.8 194.1L673.8 191.2L671.3 183.8L670.3 184.0L665.9 186.3L664.9 190.3zM323.2 196.4L324.0 202.5L327.0 209.4L341.6 215.4L347.6 214.5L348.6 207.0L343.1 193.6L332.4 189.6zM474.7 189.8L475.2 195.8L482.4 201.3L485.7 198.5L485.9 191.5L485.0 189.0L476.4 188.6zM559.0 193.2L559.1 193.1L552.8 188.2L552.8 188.2L550.4 195.5L554.9 198.0zM623.4 196.6L630.9 195.7L631.9 194.5L631.1 191.3L625.4 190.3zM644.1 189.1L643.2 188.1L637.8 190.1L638.7 195.7L642.2 195.6zM642.3 203.1L643.3 201.8L643.7 196.7L642.2 195.6L638.7 195.7L637.0 196.7L636.5 200.6zM693.7 197.6L692.0 201.4L692.7 202.7L696.3 205.3L700.3 203.1L700.3 202.2L697.2 198.4L693.8 197.5zM629.4 202.6L627.2 203.4L627.3 207.4L632.8 209.7L635.6 206.8L634.2 203.4zM659.1 207.8L664.4 210.0L665.5 208.2L664.4 203.9L660.8 204.8zM481.3 211.8L481.3 209.8L480.4 205.6L477.7 205.5L466.6 212.5L476.1 217.1zM635.6 206.8L632.8 209.7L632.2 214.5L632.6 215.0L637.9 214.4L639.4 208.6zM676.0 212.0L680.0 214.6L680.2 214.5L682.8 211.5L680.8 206.2L674.9 207.7zM736.5 208.0L739.1 213.0L743.6 213.6L744.4 211.7L743.2 209.6L736.8 207.4zM582.9 213.0L582.3 214.2L582.3 214.6L586.1 219.9L588.0 220.8L592.2 220.7L591.7 216.3zM759.6 217.9L752.8 213.7L752.2 214.6L753.1 220.2L755.2 222.2L758.0 221.9zM815.0 214.7L815.8 219.2L817.3 219.9L821.9 218.1L822.6 216.8L822.2 214.9zM829.5 222.7L831.6 226.6L834.4 228.6L835.4 227.9L836.6 223.4L833.0 220.8zM677.9 235.5L684.5 234.0L683.6 230.0L678.7 228.5zM741.2 226.1L736.4 225.2L734.1 228.1L734.8 231.5L735.8 232.4L740.5 233.3zM841.7 231.6L841.1 228.8L835.4 227.9L834.4 228.6L833.2 233.9L834.3 235.0zM333.8 237.0L332.9 230.3L319.9 233.6L317.9 247.4L325.0 248.5zM777.6 241.9L781.1 240.5L779.6 235.5L777.7 233.5L773.4 233.0L772.3 233.9L772.5 240.3zM787.2 233.2L786.5 240.4L788.3 241.2L790.7 239.6L791.2 234.0L789.0 232.9zM626.2 243.1L622.7 240.0L619.7 242.6L621.0 246.4L622.4 247.4L625.7 245.0zM290.6 249.4L286.7 240.1L282.3 240.0L270.0 247.8L270.0 260.3zM639.2 246.5L640.7 252.9L644.8 251.3L645.4 246.5L645.0 246.0zM807.8 252.2L810.5 255.7L816.9 249.3L816.9 249.1L815.6 246.8L808.7 248.8zM658.3 261.3L660.4 258.8L659.8 252.0L659.7 251.9L654.4 253.3L653.2 258.1L655.3 261.5zM711.1 255.8L711.9 258.7L712.5 259.3L717.2 261.6L719.4 258.7L715.3 251.8zM856.7 260.7L855.2 264.2L859.3 267.2L863.9 265.2L861.2 260.8L860.6 260.4zM653.3 268.5L652.7 265.7L648.3 263.5L644.0 266.4L649.7 270.3L652.4 269.6zM787.6 265.2L786.5 264.6L780.5 265.0L782.9 272.1L783.0 272.3L783.4 272.5L787.9 269.9zM787.6 265.2L787.9 269.9L789.4 270.4L796.3 267.1L796.9 266.2L792.4 261.6zM609.4 277.9L609.9 277.4L608.4 273.3L604.8 271.8L602.1 273.6L601.0 281.0L601.2 281.3zM613.0 278.2L615.1 277.7L617.3 272.3L616.5 269.9L610.8 269.9L608.4 273.3L609.9 277.4zM628.8 273.3L623.9 274.1L623.0 277.0L629.5 279.0zM633.9 279.4L640.2 275.9L640.2 274.9L636.3 272.2L633.4 273.6zM787.9 269.9L783.4 272.5L784.7 277.5L785.8 278.2L792.6 275.6L789.4 270.4zM865.9 272.2L861.8 273.5L859.8 278.9L859.9 279.0L867.4 278.7L868.2 276.7L868.2 273.3zM282.5 281.7L277.3 270.2L274.8 268.3L270.0 265.5L270.0 292.0zM304.5 297.6L314.9 287.4L315.7 279.3L296.3 281.8L294.1 285.1L295.2 287.9L300.9 295.4zM613.7 285.6L613.0 278.2L609.9 277.4L609.4 277.9L608.4 286.7L608.9 287.1zM656.4 278.6L652.9 277.6L649.5 278.9L653.4 284.8L656.1 284.6L657.5 283.1zM658.8 276.8L656.4 278.6L657.5 283.1L660.5 284.4L663.4 283.7L664.8 279.5zM601.9 286.2L601.1 284.3L592.4 285.4L591.4 286.2L591.6 286.7L595.8 291.3L600.4 291.5zM614.4 291.7L616.9 289.0L616.2 287.0L613.7 285.6L608.9 287.1L609.7 291.2L610.2 291.8zM665.3 285.2L664.7 290.1L667.0 293.0L670.0 291.2L671.8 285.1zM718.1 285.8L715.2 285.2L712.1 286.1L712.1 290.5L715.1 291.7L716.5 290.2zM778.6 281.9L777.1 286.0L778.3 288.3L781.9 290.9L784.3 291.2L785.7 290.1L785.7 286.0zM522.5 304.7L522.9 304.8L529.0 298.6L527.4 290.9L517.7 290.8L514.8 297.2L516.1 300.4zM627.3 297.9L630.7 291.4L628.7 289.8L622.1 290.3L621.2 291.0L621.6 295.8zM674.4 293.4L675.5 296.0L678.8 296.5L681.8 290.8L678.6 288.2zM802.9 289.9L798.6 292.3L799.9 296.7L802.7 298.2L805.9 295.0L806.4 292.0zM546.5 301.1L547.1 300.4L546.4 294.3L546.0 293.6L534.8 301.3L535.6 302.2zM600.2 299.7L600.4 302.7L606.0 303.9L608.3 296.6L601.6 295.2zM740.0 296.3L738.9 296.6L734.9 299.9L733.9 303.3L734.2 303.8L739.9 303.9zM785.6 302.5L790.4 299.7L784.4 295.3L783.7 296.2L784.2 302.1zM588.2 308.6L584.3 297.8L583.1 298.0L579.4 310.2L583.4 312.1L588.2 308.7zM620.6 306.6L616.7 304.4L610.9 308.7L614.4 311.3L620.7 309.3L621.1 308.6zM694.7 310.5L696.4 312.3L703.9 308.2L702.1 304.9L697.0 304.8zM747.0 302.2L747.5 309.8L750.9 310.6L753.2 308.2L751.4 302.2L747.5 301.3zM769.5 308.8L771.6 305.2L766.4 301.8L762.0 303.5L761.6 304.2L768.7 309.0zM778.1 303.2L777.7 303.7L779.8 308.3L783.2 310.1L786.4 307.3L785.6 302.5L784.2 302.1zM853.8 309.4L856.1 302.4L854.2 301.6L850.8 302.1L848.7 306.7L851.2 309.9L851.8 310.0zM869.8 303.5L868.4 304.7L866.7 308.1L866.9 308.7L880.0 311.4L880.0 304.0zM456.5 320.6L447.7 307.3L444.5 306.5L434.0 318.2L456.3 320.9zM661.8 315.9L663.6 316.0L664.5 315.0L664.6 314.2L659.8 309.3L657.0 310.0L657.2 314.3zM713.4 311.1L709.0 307.8L707.2 308.8L711.2 314.4L712.6 314.6zM797.8 316.9L799.6 318.5L800.6 318.9L803.5 315.9L802.9 310.7L798.3 309.6L797.5 309.9zM809.4 318.0L809.5 318.1L814.8 316.3L815.6 310.1L808.2 309.2L807.0 309.9zM859.2 310.6L853.8 309.4L851.8 310.0L854.4 316.7L859.6 313.6zM615.3 324.0L615.4 323.9L615.2 317.3L614.8 317.0L608.7 318.1L608.7 322.3L610.3 324.1zM704.8 322.6L705.1 322.8L705.2 322.8L707.7 321.1L708.4 315.8L704.2 313.8L702.1 316.2zM786.3 322.3L789.3 321.4L790.6 318.8L789.5 315.7L784.2 313.6L782.9 315.0L781.8 319.9zM614.2 331.6L615.9 328.8L615.3 324.0L610.3 324.1L609.5 328.1zM725.0 319.9L722.7 319.5L722.6 326.8L728.3 325.9L729.0 324.4zM798.7 327.9L806.0 326.1L805.9 322.9L801.3 320.5L797.7 326.6L797.6 327.2zM806.0 326.1L810.0 327.7L811.3 322.6L809.1 319.4L805.9 322.9L806.0 326.1zM791.6 329.6L783.1 327.6L782.4 327.9L785.2 335.3L788.5 335.6L790.9 334.4zM791.2 334.6L796.5 336.6L801.2 334.2L798.7 327.9L797.6 327.2L792.2 328.7L791.6 329.6L790.9 334.4zM549.1 331.0L546.4 334.7L548.3 340.9L552.9 339.7L552.6 335.2L549.9 330.9zM815.6 340.9L817.4 337.5L810.5 333.1L809.5 334.1L811.1 341.0zM848.7 345.6L850.4 340.2L848.7 335.0L842.5 338.3L842.2 338.6L843.5 341.7zM865.0 335.1L863.4 335.9L863.8 342.1L865.4 342.6L872.7 335.9zM630.7 345.9L634.1 346.6L634.3 346.6L637.9 340.3L635.6 338.0L628.7 342.5zM676.8 342.7L677.2 346.9L683.1 346.5L683.7 341.8L681.6 340.2zM842.2 338.6L841.6 338.7L837.9 339.9L834.9 342.2L836.9 347.3L837.1 347.5L838.4 347.8L840.4 346.7L843.5 341.7zM529.5 350.5L538.9 353.8L540.4 347.4L538.8 346.3L529.7 348.2zM748.8 351.3L748.9 352.6L751.1 352.8L756.1 346.5L753.6 342.6L752.3 342.5zM766.0 346.4L762.8 346.2L759.8 348.8L760.1 352.7L765.7 354.5L768.0 354.0zM620.4 357.1L626.0 361.3L627.8 359.2L624.3 354.3L620.6 355.8zM638.7 359.5L638.1 355.5L633.9 354.2L631.3 355.0L630.4 358.2L634.3 363.3L636.6 361.7zM657.1 358.1L657.9 358.3L663.6 358.4L664.5 355.3L663.8 352.5L661.8 352.2L656.0 355.4zM813.9 360.4L815.4 353.7L811.3 353.7L808.6 355.7L808.8 358.1L811.9 360.2zM636.6 361.7L634.3 363.3L633.4 365.5L634.3 367.3L641.7 368.0L642.0 367.2zM573.2 367.8L568.3 362.1L563.9 363.3L564.7 370.5L568.8 373.1L570.9 372.8zM685.8 366.5L686.9 370.8L689.2 372.4L691.5 368.0L689.5 366.2zM775.7 367.5L773.5 364.9L767.0 365.4L768.5 370.6L773.5 372.5zM496.0 380.1L507.4 378.1L509.8 375.2L510.0 369.8L504.0 367.1L500.8 366.9L496.0 379.9zM682.3 377.1L685.3 378.4L688.1 377.1L689.9 374.1L689.2 372.4L686.9 370.8L680.1 372.7zM752.0 372.5L754.5 378.1L757.8 377.1L759.7 373.4L756.2 371.6zM357.8 380.5L371.8 389.1L380.7 378.0L378.6 374.0L371.3 370.9L357.8 380.2zM507.7 384.4L507.4 378.1L496.0 380.1L496.5 386.9zM602.5 386.0L602.2 381.1L602.0 380.6L593.4 378.1L590.7 383.3L595.6 386.3L601.9 386.8zM623.9 380.6L620.8 378.6L617.2 379.5L616.4 380.5L617.3 387.3L623.8 384.1zM438.2 388.5L437.8 375.1L434.6 375.9L420.7 385.1L424.4 390.8L434.5 392.9zM557.4 391.3L560.3 388.5L561.6 385.3L561.6 384.6L551.0 380.4L549.4 383.0L549.4 388.3L556.2 391.7zM711.2 391.5L711.8 386.1L710.8 385.7L706.2 386.4L705.8 391.7L709.0 392.5zM855.4 391.6L855.5 391.5L856.5 386.0L851.0 385.9L850.9 390.5zM350.3 407.6L356.1 393.3L353.5 384.7L344.3 386.6L339.6 390.9L346.7 409.3L347.3 410.0L348.5 409.6zM484.4 395.9L491.9 399.6L493.2 399.3L495.8 389.0L482.7 388.4zM506.5 397.5L507.9 399.9L518.3 395.9L518.4 389.2L511.8 389.8L506.7 394.2zM817.6 396.1L817.9 390.7L816.2 389.8L812.6 392.9L812.3 397.4L816.2 397.5zM878.1 388.0L869.3 390.6L867.9 395.3L880.0 400.8L880.0 387.7zM583.6 396.5L577.9 399.8L578.6 403.3L586.1 404.9zM651.8 401.9L658.7 404.0L659.0 403.8L658.8 397.3L653.1 396.2L652.7 397.1zM679.6 403.2L685.4 404.2L682.6 397.7L681.4 398.0L679.0 400.2L679.3 402.7zM747.1 399.5L744.9 404.6L748.8 405.8L753.6 402.7L752.4 399.1L747.7 398.9zM812.3 397.4L810.8 398.3L811.0 403.5L811.9 404.4L818.9 402.8L816.2 397.5zM828.2 403.4L830.2 411.1L833.2 411.6L833.9 410.8L834.5 403.6zM276.5 417.7L277.8 410.7L277.6 410.4L270.0 409.4L270.0 421.1zM409.0 402.1L395.1 411.3L394.7 413.2L403.8 418.9L408.2 420.3L420.6 409.0L420.4 408.4zM520.2 412.2L516.9 406.0L510.1 405.3L504.1 410.8L510.4 416.7L514.6 418.3L514.8 418.2zM577.8 411.5L576.7 410.0L570.1 408.6L569.4 409.3L568.7 413.3L573.9 417.8L577.5 416.7zM639.6 414.1L638.5 410.7L635.4 409.4L633.0 411.4L631.9 415.0L634.7 419.1zM791.8 410.1L790.4 407.7L784.8 412.0L784.8 413.9L786.6 415.7L789.9 415.6zM843.7 410.8L840.0 417.3L844.0 421.1L848.3 412.9L848.2 412.8L844.8 410.9zM514.6 418.3L510.4 416.7L503.6 423.9L506.5 431.6zM525.2 413.7L520.2 412.2L514.8 418.2L519.2 424.3L524.0 425.2zM645.4 418.0L644.0 417.3L637.8 422.3L641.0 424.1L645.6 422.5zM647.5 424.7L653.9 420.9L653.5 417.4L652.0 416.0L645.4 418.0L645.6 422.5zM585.3 425.3L581.6 422.9L576.0 426.3L575.2 435.0L587.3 435.0zM641.0 424.1L644.1 435.0L647.6 435.0L647.5 424.7L645.6 422.5zM773.4 422.1L771.3 435.0L772.7 435.0L779.6 424.2z"/>
<path fill="#ed8a70" stroke="#fff" stroke-opacity="0.22" stroke-width="0.5" d="M319.5 100.0L289.9 100.0L310.2 112.7L310.9 112.4L314.6 109.1zM633.3 106.7L632.3 106.1L629.8 105.9L627.0 108.3L626.8 113.8L628.4 115.2L630.8 114.5L634.1 112.4zM602.2 122.2L601.6 119.8L596.3 118.5L592.7 123.5L592.8 129.4L602.0 123.0zM607.3 122.7L602.2 122.2L602.0 123.0L603.9 127.2L609.6 128.1L610.5 126.7zM628.2 119.5L620.7 122.1L622.7 126.7L626.6 128.0L629.3 126.4L629.7 124.7zM592.8 129.4L592.3 130.8L593.7 132.7L594.3 133.1L602.1 131.1L603.9 127.2L602.0 123.0zM610.5 126.7L609.6 128.1L609.7 130.4L613.0 133.7L615.9 133.1L614.0 124.8zM649.1 135.2L647.0 134.6L646.9 140.2L652.7 142.7L653.3 138.4zM674.2 144.1L673.1 143.6L670.8 145.7L670.3 152.5L670.5 152.7L676.3 150.9zM625.8 170.7L630.7 164.8L626.9 162.2L620.9 165.5L622.7 169.3zM654.2 164.5L650.0 163.5L646.8 165.4L650.3 172.0L652.7 172.8L652.9 172.7L654.8 171.3zM622.7 178.4L618.7 172.6L616.1 173.1L615.6 175.1L618.5 180.3zM711.3 168.3L706.6 171.8L707.8 175.6L713.3 175.0L714.1 174.0zM849.8 172.1L849.7 172.1L842.3 172.2L841.3 173.3L840.7 176.0L842.8 178.0L849.3 176.9zM571.2 181.2L578.9 182.7L578.1 177.0L573.2 171.4L570.4 179.0zM601.8 182.1L596.3 183.0L595.4 183.8L593.8 189.1L604.0 191.2L604.7 190.7L602.5 182.2zM739.0 190.1L745.0 184.2L744.8 183.1L741.7 181.1L736.8 182.5L736.3 184.0L737.9 189.7zM681.9 192.4L678.8 190.7L676.9 191.2L676.9 199.1L677.5 199.6L680.2 199.7L682.0 197.5zM595.4 196.4L592.3 191.4L585.2 197.2L586.3 204.6L587.1 205.9L588.0 206.0L589.7 205.5zM662.3 198.0L655.6 194.6L653.1 198.0L653.7 201.3L657.4 201.2zM673.0 197.3L670.7 195.4L666.3 200.4L671.9 204.4zM615.3 206.8L619.5 207.5L625.0 202.3L622.4 198.7L614.9 205.9zM652.5 203.3L649.6 203.2L643.7 208.5L646.2 211.4L653.4 208.5L653.7 208.2zM717.6 205.2L710.0 202.3L709.2 203.8L710.5 207.8L715.2 209.2L717.9 206.8zM822.2 214.9L822.6 216.8L827.2 217.0L830.6 214.0L826.6 210.6L822.4 211.3zM660.2 222.8L665.5 221.6L667.8 216.2L664.2 213.3L660.4 214.2zM795.2 213.4L793.2 216.1L801.4 220.0L804.1 219.8L804.2 219.7L804.3 218.1L802.0 215.5zM811.3 220.7L815.8 219.2L815.0 214.7L814.9 214.4L811.3 214.7L810.7 220.4zM629.0 222.1L625.8 221.5L622.8 222.7L623.1 228.5L626.3 230.3L629.3 226.6zM659.0 229.1L665.3 230.4L666.6 228.7L666.7 222.8L665.5 221.6L660.2 222.8L659.9 223.0L658.9 228.7zM703.7 223.5L703.8 224.0L710.3 227.1L711.8 222.3L708.0 220.4L703.9 223.0zM783.9 220.6L788.5 225.9L791.4 225.4L792.1 221.0L791.5 217.9L784.5 219.8zM791.4 225.4L788.5 225.9L784.6 228.6L785.9 232.2L787.2 233.2L789.0 232.9L792.6 227.0zM817.5 235.0L814.4 228.3L813.2 228.3L809.7 232.6L815.7 237.4zM818.1 226.5L814.4 228.3L817.5 235.0L821.0 234.2L822.9 227.6zM678.2 240.6L682.1 242.2L682.7 241.8L685.8 235.2L684.5 234.0L677.9 235.5L677.0 236.7L676.8 238.8zM830.5 233.8L829.1 233.3L823.4 236.5L823.6 240.5L827.1 240.9zM852.9 234.6L855.8 239.0L858.1 239.1L859.4 236.3L858.3 233.8L854.0 233.7zM654.3 237.4L650.4 241.0L653.1 245.0L657.7 244.3zM682.4 243.8L682.1 242.2L678.2 240.6L674.9 246.9L677.2 249.5zM760.2 241.9L756.6 239.0L754.6 238.8L752.2 244.9L754.0 247.5L757.8 247.3L760.1 245.0zM832.4 242.7L829.2 242.5L826.0 248.5L828.5 250.2L829.9 250.7L833.3 245.9zM627.5 247.5L624.8 251.8L628.9 252.5L632.1 252.1L632.8 251.3L631.6 248.8zM654.4 253.3L659.7 251.9L659.3 245.8L658.5 244.7L657.7 244.3L653.1 245.0L650.6 247.7L652.6 252.3zM715.6 250.3L715.5 249.9L714.5 248.6L709.6 246.9L708.1 254.5L711.1 255.8L715.3 251.8zM600.6 254.5L588.5 249.6L587.5 249.8L595.2 258.3L596.4 258.9L599.3 258.4zM799.9 265.6L800.7 265.8L806.7 260.5L802.5 257.2L799.7 261.2zM838.7 264.2L837.4 258.7L831.2 261.6L831.6 262.9L837.6 265.1zM310.5 268.7L316.6 277.9L326.9 276.1L328.5 274.8L324.9 265.2zM683.5 265.4L681.2 264.5L676.9 272.0L678.5 273.9L683.0 272.5L685.0 270.1L684.8 267.5zM775.3 269.7L782.9 272.1L780.5 265.0L779.4 264.2L775.0 266.3zM814.6 266.4L810.4 269.9L812.0 273.5L816.1 274.3L818.5 270.3L817.9 266.7zM831.6 262.9L831.0 265.5L832.7 270.3L836.9 270.1L837.6 265.1zM309.5 267.9L299.6 270.5L296.3 281.8L315.7 279.3L316.6 277.9L310.5 268.7zM666.2 278.7L666.6 274.4L665.1 273.3L660.4 272.0L658.8 276.8L664.8 279.5zM682.4 280.3L686.6 278.3L683.0 272.5L678.5 273.9L678.5 274.3zM759.2 276.8L764.4 279.9L766.5 275.0L766.2 271.9L762.9 272.1L761.2 272.7zM601.2 281.3L601.0 281.0L594.0 276.9L592.4 285.4L601.1 284.3zM623.5 282.9L623.5 282.9L627.6 285.5L633.1 281.9L632.9 281.3L629.7 279.3zM663.4 283.7L665.3 285.2L671.8 285.1L671.9 284.9L670.0 280.4L666.2 278.7L664.8 279.5zM839.9 277.5L839.7 277.6L840.1 283.0L842.6 284.9L845.1 283.9L846.1 282.8L848.0 278.4L847.6 277.8zM567.7 284.7L563.4 284.4L558.0 291.1L559.0 293.8L564.0 296.8L564.3 296.7zM698.1 285.8L699.3 289.0L703.3 289.9L705.1 289.0L706.4 285.7L704.5 284.1zM726.9 285.3L722.8 286.7L723.0 292.9L731.3 290.6zM811.2 286.8L803.2 282.7L802.2 283.5L802.9 289.9L806.4 292.0L811.3 289.5zM845.1 283.9L850.1 289.6L853.5 289.3L853.9 285.4L846.1 282.8zM306.3 300.5L328.1 295.0L326.2 291.6L314.9 287.4L304.5 297.6zM449.6 283.6L441.2 283.1L434.6 296.4L437.8 298.0L449.2 296.5L450.9 293.9zM575.2 291.9L568.1 284.5L567.7 284.7L564.3 296.7L572.8 297.8L573.7 297.5L575.1 296.2zM614.8 299.2L616.3 298.0L614.4 291.7L610.2 291.8L609.9 296.2L613.8 299.3zM634.9 293.6L631.0 291.3L630.7 291.4L627.3 297.9L627.7 298.7L634.4 299.1L636.9 296.1zM699.0 296.6L697.4 291.7L692.3 291.7L690.9 292.8L690.9 293.9L696.6 298.0zM732.3 292.4L730.6 295.8L734.9 299.9L738.9 296.6zM774.1 293.2L775.0 294.9L776.5 295.6L781.9 290.9L778.3 288.3zM826.3 291.6L831.7 297.7L832.8 297.4L835.0 290.8L832.4 289.4zM804.1 301.6L808.3 302.6L810.7 301.4L811.7 299.7L811.1 298.4L805.9 295.0L802.7 298.2L803.3 301.1zM860.0 300.3L860.8 297.1L854.9 294.2L853.3 295.7L854.2 301.6L856.1 302.4L858.9 301.8zM406.2 297.9L407.8 316.3L416.4 323.7L418.4 323.0L421.2 293.7L419.1 292.1L412.6 293.8zM560.2 309.3L561.6 306.6L561.0 305.1L553.9 302.8L552.9 303.1L551.1 309.5L552.9 313.6zM677.5 307.0L677.9 305.5L673.1 301.6L668.8 305.6L668.4 308.5L672.8 309.6L675.3 309.1zM798.3 309.6L802.9 310.7L804.3 310.1L804.1 301.6L803.3 301.1L799.5 304.0zM563.3 319.8L563.5 319.5L560.2 309.3L552.9 313.6L551.6 317.7zM588.2 308.7L583.4 312.1L585.1 320.7L591.9 319.9L593.3 311.3zM640.0 309.7L638.7 310.2L639.8 317.0L646.3 314.0L646.3 312.8zM753.6 316.2L750.9 310.6L747.5 309.8L745.9 310.9L746.1 317.2zM387.7 308.9L384.3 309.6L368.7 319.1L373.6 322.9L391.6 321.4L394.2 316.2zM481.2 311.9L464.3 311.4L459.3 318.9L477.9 324.1L482.3 316.5L482.6 313.9zM564.4 326.7L571.8 325.5L574.0 319.6L572.8 317.2L566.8 317.2L563.5 319.5L563.3 319.8zM599.2 325.4L600.0 326.2L608.7 322.3L608.7 318.1L606.0 315.7L603.0 316.5L598.7 324.0zM675.7 316.2L676.8 321.8L678.9 322.2L683.1 317.8L683.1 317.8L681.8 316.0L676.8 315.3zM781.8 319.9L782.9 315.0L774.9 315.5L774.4 315.8L779.0 321.4zM805.9 322.9L809.1 319.4L809.5 318.1L809.4 318.0L803.5 315.9L800.6 318.9L801.3 320.5zM811.3 322.6L817.1 324.8L818.2 323.2L815.5 317.1L814.8 316.3L809.5 318.1L809.1 319.4zM305.2 330.9L310.8 315.0L309.7 313.9L295.9 315.6L290.6 329.5L303.2 332.1L305.0 331.1zM478.0 332.8L477.9 324.1L459.3 318.9L459.2 318.9L477.0 333.6zM550.7 317.8L546.1 320.8L545.7 328.5L549.1 331.0L549.9 330.9L553.5 328.0L551.5 317.8zM626.4 331.4L627.1 331.0L629.2 329.0L628.6 325.4L626.0 323.0L622.2 323.4L621.1 328.5L621.8 329.6zM653.4 329.6L659.6 329.7L660.9 323.0L653.4 321.8zM691.0 323.7L692.3 326.3L696.6 326.9L698.6 323.2L696.3 320.0zM722.1 318.9L715.4 322.4L715.8 326.6L716.5 327.7L722.6 326.8L722.6 326.8L722.7 319.5zM740.6 329.0L746.2 329.3L747.5 323.3L745.4 320.8L740.0 322.3L739.3 328.3zM829.1 327.2L831.6 329.7L835.0 328.6L836.3 324.4L834.5 322.2L831.3 321.8zM851.5 323.2L842.2 323.4L842.0 323.8L843.5 328.7L845.6 329.7zM870.3 322.2L869.1 324.0L869.1 328.2L876.9 335.2L880.0 335.5L880.0 320.6zM587.8 335.4L593.9 338.3L601.9 333.1L601.8 329.9L600.0 326.2L599.2 325.4L587.0 332.2L587.2 333.2zM700.0 336.0L703.5 332.5L703.4 328.9L697.4 328.3L696.3 334.0L699.3 336.1zM754.2 327.4L756.6 333.9L760.2 332.4L760.8 331.3L757.7 326.1L754.6 326.7zM817.6 337.3L817.5 330.4L815.9 328.6L812.5 329.5L810.5 333.1L817.4 337.5zM856.9 336.0L861.6 335.1L860.8 330.2L856.9 328.4L853.9 333.8zM575.0 336.5L578.2 342.8L582.3 343.1L587.8 335.4L587.2 333.2zM665.8 339.3L665.7 337.2L660.4 336.2L658.8 337.1L659.4 342.1L663.9 342.0zM679.4 334.2L674.1 338.6L674.0 339.8L676.8 342.7L681.6 340.2zM708.1 339.9L709.9 341.4L716.6 339.6L714.7 332.7L710.4 333.5L709.0 334.6zM865.4 342.6L867.8 344.3L876.4 335.4L872.7 335.9zM639.9 348.8L642.4 346.5L640.9 341.0L640.3 340.5L637.9 340.3L634.3 346.6zM708.1 339.9L706.4 340.2L703.9 342.8L703.8 346.2L706.4 348.6L707.1 348.7L710.3 345.3L709.9 341.4zM717.0 348.8L721.8 349.5L726.5 347.5L726.5 346.8L722.8 341.2L721.0 340.7L719.1 341.2L716.9 348.4zM726.5 346.8L731.5 341.0L728.6 338.2L722.8 341.2zM728.5 349.2L734.1 348.0L735.5 345.0L735.2 342.0L731.5 341.0L726.5 346.8L726.5 347.5zM787.8 342.3L784.7 344.4L784.5 344.9L789.7 348.4L791.0 347.2L790.6 343.2zM608.2 350.0L603.2 348.6L601.4 354.3L606.6 356.7L609.1 354.0L609.0 350.9zM621.7 347.2L619.1 348.8L620.6 355.8L620.6 355.8L624.3 354.3L627.2 351.6L627.1 351.0zM645.3 346.8L642.4 346.5L639.9 348.8L640.2 353.1L644.5 353.8L647.2 353.1zM653.4 351.3L652.1 347.3L646.8 345.9L645.3 346.8L647.2 353.1L649.5 353.9L653.2 351.7zM723.8 355.3L724.8 355.4L728.3 351.5L728.5 349.2L726.5 347.5L721.8 349.5zM824.7 347.0L823.2 345.8L817.1 350.0L817.7 352.6L820.5 354.2zM820.9 354.9L828.4 355.3L829.2 354.1L828.9 349.9L827.1 347.2L824.7 347.0L820.5 354.2zM314.6 356.5L309.0 349.9L294.7 352.0L292.7 353.5L295.1 361.2L302.1 363.0L314.6 356.6zM829.2 354.1L828.4 355.3L829.3 360.4L836.5 358.7L833.1 353.9zM851.4 358.3L853.0 361.9L860.0 357.2L860.0 356.7L853.8 355.5L852.1 356.4zM606.2 358.6L605.3 360.1L609.1 365.2L611.0 365.5L613.3 364.6L614.1 362.7zM763.6 360.8L760.1 358.6L757.7 360.6L760.4 365.3L762.2 365.8L764.5 364.2L764.6 363.8zM821.0 364.3L826.7 365.5L828.6 364.8L828.8 362.5L820.6 358.1zM842.5 359.1L843.6 365.4L845.7 366.0L847.9 364.9L847.8 358.8L844.0 358.0zM866.6 364.8L867.0 362.8L866.5 361.9L860.7 360.0L858.9 364.5L860.3 366.4zM689.2 372.4L689.9 374.1L694.6 374.1L697.9 368.1L695.8 366.8L691.5 368.0zM707.8 372.0L704.5 366.6L702.6 364.9L697.9 368.1L702.5 374.2L707.6 372.8zM522.6 375.7L515.7 366.6L510.0 369.8L509.8 375.2L517.5 381.7zM612.8 373.5L609.6 373.7L609.2 378.5L611.3 381.7L616.4 380.5L617.2 379.5zM657.0 377.9L657.8 374.2L654.8 371.0L653.1 373.3L652.9 378.1zM727.3 375.4L727.4 375.6L730.3 378.8L733.6 379.1L734.0 374.1L728.0 374.8zM511.8 389.8L518.4 389.2L518.4 389.1L517.5 381.7L509.8 375.2L507.4 378.1L507.7 384.4zM631.8 378.3L637.7 384.8L642.7 380.1L640.6 376.9L633.0 376.4zM704.8 385.3L703.7 381.4L700.8 379.6L698.0 385.0L700.3 387.4zM745.5 380.2L753.0 385.2L753.3 379.3L747.8 376.9zM788.1 384.4L786.3 379.4L781.4 381.5L781.8 386.2L785.4 388.5zM284.7 394.8L294.6 391.0L287.7 380.6L281.9 393.5zM661.4 386.2L657.3 384.6L654.5 385.9L654.7 390.3L661.2 392.3zM735.5 385.3L734.6 383.9L727.9 383.2L725.9 383.9L726.1 386.0L733.3 389.5zM760.2 384.4L760.1 384.4L753.2 385.4L753.4 391.2L761.6 390.1zM860.7 391.1L858.9 385.1L856.5 386.0L855.5 391.5zM518.3 395.9L507.9 399.9L510.1 405.3L516.9 406.0L519.2 402.2zM792.0 396.1L786.8 398.9L786.3 401.0L786.8 402.5L790.3 404.7L792.8 403.9L794.3 397.2zM277.6 410.4L270.2 392.9L270.0 392.9L270.0 409.4zM326.9 399.0L315.3 406.5L309.3 416.6L310.6 419.4L327.6 417.3L328.9 403.6zM543.3 405.2L541.8 409.5L546.9 417.2L549.6 416.4L555.4 408.4L554.4 405.6L553.7 404.6L543.9 404.7zM578.3 403.6L570.0 404.1L570.1 408.6L576.7 410.0zM752.1 412.0L753.4 414.0L758.0 415.2L761.5 410.7L755.7 407.8zM798.9 415.9L802.4 415.7L802.1 410.3L798.8 407.4L795.5 411.1L796.5 414.5zM348.5 409.6L347.3 410.0L346.1 412.5L349.4 435.0L351.6 435.0L364.4 415.1zM420.6 409.0L408.2 420.3L415.5 427.8L427.5 417.9zM476.4 426.4L481.6 434.7L486.1 425.6L485.9 415.8L481.0 412.2L478.9 415.2zM595.5 417.9L593.8 420.8L598.9 428.2L603.2 423.5L601.9 416.9L601.0 416.4zM607.6 415.0L601.9 416.9L603.2 423.5L607.7 423.2L609.9 417.7zM853.7 423.6L854.4 424.6L861.9 425.2L862.1 425.0L861.5 417.5L857.9 416.5L855.7 418.6zM285.6 422.6L276.5 417.7L270.0 421.1L270.0 435.0L289.2 435.0zM403.8 418.9L394.7 413.2L393.6 414.2L390.1 435.0L403.0 435.0zM403.8 418.9L403.0 435.0L415.5 435.0L415.5 427.8L408.2 420.3zM773.4 422.1L772.8 420.6L765.6 424.2L765.3 424.6L765.1 434.0L765.3 435.0L771.3 435.0zM806.0 423.2L803.5 420.9L799.4 424.2L801.7 435.0L804.9 435.0z"/>
<path fill="#ec7f65" stroke="#fff" stroke-opacity="0.22" stroke-width="0.5" d="M374.3 107.9L376.7 100.0L347.5 100.0L349.7 110.4L352.1 111.4zM359.5 129.6L363.8 127.1L357.9 116.4L352.1 111.4L349.7 110.4L346.1 116.5L353.3 129.2zM614.4 124.1L613.5 122.1L610.7 118.6L607.3 122.7L610.5 126.7L614.0 124.8L614.2 124.6zM346.1 116.5L336.0 123.5L336.4 136.7L346.9 138.0L353.3 129.2zM336.1 137.1L317.0 130.9L313.4 137.3L315.2 140.7L332.7 139.5L335.3 138.8zM610.8 138.6L613.0 133.7L609.7 130.4L605.6 133.6L605.9 136.7zM686.8 165.8L691.6 158.8L691.3 158.1L689.5 157.4L683.4 161.0L682.7 164.8L684.8 166.1zM636.6 166.0L635.4 166.8L635.8 171.8L640.9 172.9L643.1 169.4L643.7 165.9zM333.8 183.8L344.3 183.3L352.1 173.6L352.1 173.1L350.8 170.2L340.6 164.7L329.2 176.2zM617.1 182.9L618.5 180.3L615.6 175.1L611.4 177.9L613.4 183.8L613.4 183.9zM642.1 180.1L634.6 178.7L634.1 179.1L634.5 186.4L642.0 183.8zM720.1 178.1L714.4 182.5L717.4 185.4L723.4 181.9L723.3 180.7zM654.5 189.6L656.4 190.8L657.9 190.3L660.1 183.1L653.8 184.0zM653.7 201.3L653.1 198.0L648.9 195.4L645.7 196.6L649.1 202.9L649.6 203.2L652.5 203.3zM704.0 198.7L700.8 193.5L697.2 198.4L700.3 202.2zM714.0 215.4L714.5 214.8L715.2 209.2L710.5 207.8L708.1 210.9L708.5 214.4L709.3 215.1zM667.8 216.2L665.5 221.6L666.7 222.8L670.9 224.2L675.9 222.3L675.8 221.3L670.6 216.0L669.1 215.9zM696.1 226.2L701.9 229.7L703.8 224.0L703.7 223.5L699.1 223.1zM613.5 232.9L614.2 229.5L613.8 227.2L608.4 225.6L603.7 227.6L603.8 228.8L610.2 233.3zM650.9 233.7L648.2 229.1L648.0 229.0L642.4 235.1L645.5 238.2zM826.7 229.9L823.2 227.4L822.9 227.6L821.0 234.2L823.4 236.5L829.1 233.3zM856.0 227.0L849.8 228.1L849.1 229.0L848.7 231.0L850.4 234.3L852.9 234.6L854.0 233.7L856.2 227.1zM697.2 234.6L689.7 236.0L690.2 241.3L694.6 241.9L697.3 237.6L697.5 234.7zM796.9 235.9L795.6 233.9L791.2 234.0L790.7 239.6L796.3 238.0zM588.5 249.6L599.3 243.7L599.5 243.3L599.5 243.2L592.3 237.8L585.0 243.8L584.7 249.5L584.8 249.6L587.5 249.8zM741.5 238.7L739.9 240.5L741.6 244.6L745.4 246.1L746.2 245.7L744.7 239.0zM788.4 248.3L790.4 245.5L788.3 241.2L786.5 240.4L782.3 241.0L782.4 246.9L784.7 250.2zM664.0 252.8L669.3 252.7L670.0 248.4L666.4 247.0L661.8 252.1zM701.7 253.4L704.4 255.2L708.1 254.5L709.6 246.9L709.4 246.7L702.2 249.2zM801.4 253.0L807.8 252.2L808.7 248.8L806.8 246.0L804.5 245.2L804.0 245.4zM682.0 252.3L683.9 257.0L688.4 257.8L689.4 254.3L684.6 249.9zM688.4 257.8L689.6 259.6L696.1 259.6L697.6 255.2L693.7 251.7L692.5 251.9L689.4 254.3zM762.1 251.2L760.6 253.2L761.6 259.1L766.2 257.7L767.4 252.9L765.1 250.8zM837.6 258.2L843.1 257.3L843.0 254.7L839.9 252.1L835.8 252.9L835.0 253.6zM324.9 265.2L328.5 274.8L336.2 275.1L339.8 271.5L344.4 256.7L342.5 255.2L332.4 254.6L324.9 265.2zM663.1 266.2L665.8 265.2L665.9 260.7L665.8 260.6L660.4 258.8L658.3 261.3L660.0 264.0zM700.9 267.1L704.2 266.3L705.3 264.9L704.7 261.3L696.2 259.8L696.6 263.6zM800.7 265.8L804.3 269.9L807.4 268.9L809.7 261.7L809.2 260.3L806.7 260.5zM828.4 259.1L824.7 259.5L822.5 264.0L825.9 267.6L831.0 265.5L831.6 262.9L831.2 261.6zM773.5 265.5L767.1 268.7L766.3 271.9L773.3 273.4L775.3 269.7L775.0 266.3zM810.4 269.9L814.6 266.4L809.7 261.7L807.4 268.9zM836.9 270.1L837.5 270.6L843.1 271.2L843.3 271.1L843.8 264.0L838.7 264.2L837.6 265.1zM853.1 270.4L854.5 271.7L859.6 271.7L859.3 267.2L855.2 264.2L853.3 265.4zM773.3 273.4L775.1 276.8L783.0 272.3L782.9 272.1L775.3 269.7zM854.0 276.5L859.8 278.9L861.8 273.5L859.6 271.7L854.5 271.7zM635.6 285.5L640.1 288.2L642.0 288.6L644.5 281.4L641.7 279.6L635.2 283.9zM697.3 279.0L697.0 278.8L690.7 279.1L689.8 284.4L693.0 287.0L697.6 285.3zM733.7 276.8L734.7 283.7L736.5 285.6L742.6 279.2L740.7 277.9zM585.4 284.1L579.2 288.4L585.6 292.7L586.5 285.1zM812.7 290.7L814.9 291.4L820.3 285.9L816.8 283.0L813.3 283.6L811.2 286.8L811.3 289.5zM824.8 291.2L826.3 291.6L832.4 289.4L831.4 284.8L824.9 284.8L823.7 286.7L824.7 291.1zM467.7 293.5L469.1 283.3L461.2 277.8L449.6 283.6L450.9 293.9L464.9 297.5zM646.5 296.3L651.8 296.4L651.8 290.3L649.5 289.1L645.7 290.7zM664.7 290.1L660.7 289.2L657.7 291.8L658.2 294.6L659.5 295.6L666.3 295.0L667.0 293.0zM678.8 296.5L679.5 297.4L684.8 296.4L683.9 290.9L681.8 290.8zM709.3 292.8L705.1 289.0L703.3 289.9L702.8 297.4L702.9 297.5L709.1 295.8zM721.5 296.3L722.5 295.7L722.9 293.2L716.5 290.2L715.1 291.7L717.1 296.7L718.0 297.0zM761.9 298.0L767.2 296.4L767.3 292.9L761.6 292.0L759.8 296.0zM815.3 291.8L818.0 297.7L821.0 297.4L822.9 295.4L824.8 291.2L824.7 291.1zM295.2 287.9L270.0 311.6L270.0 312.3L271.7 312.8L282.9 311.5L300.9 295.4zM449.2 296.5L437.8 298.0L444.5 306.5L447.7 307.3L451.4 302.1zM616.7 304.4L620.6 306.6L621.7 304.2L619.1 297.5L616.3 298.0L614.8 299.2zM672.4 299.6L673.1 301.6L677.9 305.5L680.8 303.1L679.5 297.4L678.8 296.5L675.5 296.0zM733.9 303.3L734.9 299.9L730.6 295.8L726.6 297.7L728.5 302.8zM869.8 303.5L868.2 297.6L866.5 296.1L861.3 296.7L860.8 297.1L860.0 300.3L868.4 304.7zM734.2 303.8L734.4 307.4L739.7 310.8L740.8 310.2L741.6 304.9L739.9 303.9zM839.6 310.2L841.3 310.7L847.2 306.5L842.7 301.8L839.7 303.2zM625.3 308.8L621.1 308.6L620.7 309.3L621.7 315.3L627.0 316.3zM707.2 308.8L704.8 309.0L704.2 313.8L708.4 315.8L711.2 314.4zM779.8 308.3L778.1 310.0L774.9 315.5L782.9 315.0L784.2 313.6L783.2 310.1zM829.8 317.4L834.7 312.5L831.3 310.6L825.1 316.1zM866.9 308.7L867.9 313.7L880.0 314.5L880.0 311.4zM714.0 316.0L712.6 314.6L711.2 314.4L708.4 315.8L707.7 321.1L713.7 320.4zM645.4 324.5L642.9 321.3L639.3 319.9L637.0 322.3L637.1 322.8L641.9 328.8L642.9 329.0L644.8 328.3zM707.7 321.1L705.2 322.8L710.0 326.5L715.8 326.6L715.4 322.4L713.7 320.4zM739.3 328.3L740.0 322.3L737.7 319.7L732.6 320.8L732.1 322.0L737.2 328.9zM772.1 326.5L770.4 323.4L769.7 322.6L765.1 322.8L764.8 323.1L764.3 329.4L767.6 331.7L771.5 328.7zM823.4 322.3L823.1 322.7L825.5 327.0L829.1 327.2L831.3 321.8L831.0 321.5zM866.4 329.6L869.1 328.2L869.1 324.0L862.7 324.4L863.0 328.2zM271.7 312.8L270.0 312.3L270.0 338.7L275.0 339.3L284.4 327.5zM609.2 328.2L601.8 329.9L601.9 333.1L603.8 334.8L608.3 334.9zM710.4 333.5L708.8 329.7L703.8 328.4L703.4 328.9L703.5 332.5L709.0 334.6zM775.9 335.1L771.5 328.7L767.6 331.7L768.2 336.0L774.5 335.9zM546.4 334.7L539.7 336.7L545.9 344.5L548.3 340.9zM573.7 335.1L566.5 335.7L570.9 345.9L572.4 346.6L578.2 342.8L575.0 336.5zM635.6 338.0L637.9 340.3L640.3 340.5L642.6 335.4L642.1 334.5L635.3 333.9L634.9 335.3zM647.2 336.1L642.6 335.4L640.3 340.5L640.9 341.0L647.5 340.3L648.2 336.6zM540.4 347.4L545.8 345.3L545.9 344.5L539.7 336.7L535.6 335.8L534.6 336.9L538.8 346.3zM615.0 347.7L614.6 344.2L610.1 341.9L608.5 342.6L608.2 350.0L609.0 350.9zM614.6 344.2L615.0 347.7L615.7 348.1L619.1 348.8L621.7 347.2L622.7 343.1L617.5 341.1zM691.0 341.4L690.4 346.0L697.3 349.0L698.0 347.4L697.4 342.0zM797.7 349.2L803.5 346.6L804.2 341.9L797.2 341.7L796.0 343.3L796.5 347.3zM804.3 341.9L804.2 341.9L803.5 346.6L806.1 349.1L810.5 347.7L810.7 341.3zM816.0 348.5L817.1 350.0L823.2 345.8L822.0 343.9L816.9 342.6zM849.1 347.1L852.6 347.4L856.9 342.2L856.2 340.8L850.4 340.2L848.7 345.6zM852.6 347.4L855.0 349.4L858.8 349.8L861.2 345.8L861.4 343.8L856.9 342.2zM619.1 348.8L615.7 348.1L615.8 354.0L620.6 355.8zM715.8 352.0L717.3 354.8L722.3 355.8L723.8 355.3L721.8 349.5L717.0 348.8zM742.0 347.3L735.5 345.0L734.1 348.0L736.5 352.5L741.9 352.6zM838.4 347.8L841.2 351.3L844.9 352.6L847.4 350.8L848.7 347.6L840.4 346.7zM860.0 356.7L861.7 354.5L858.8 349.8L855.0 349.4L853.8 355.5zM644.5 353.8L640.2 353.1L638.1 355.5L638.7 359.5L643.9 361.3L644.0 361.2zM702.1 360.9L703.1 362.3L709.4 359.6L709.3 355.3L701.0 354.3zM798.5 359.7L800.3 358.0L801.4 354.3L797.5 350.1L792.9 354.0zM838.4 355.0L835.4 352.6L833.1 353.9L836.5 358.7L837.9 359.1L839.1 358.5zM621.1 364.5L626.0 363.8L626.0 361.3L620.4 357.1L617.7 360.6zM721.4 365.2L725.7 366.9L729.5 366.4L729.9 366.2L728.9 359.9L727.2 359.1L722.3 361.6zM828.6 364.8L829.9 365.8L835.6 366.7L837.9 359.1L836.5 358.7L829.3 360.4L828.8 362.5zM279.0 377.2L282.2 374.7L271.5 358.8L270.0 358.7L270.0 374.0zM388.0 362.7L386.7 362.3L378.6 374.0L380.7 378.0L391.5 382.6zM664.7 365.9L662.0 366.7L660.0 373.9L663.3 375.4L667.3 370.2L665.3 366.4zM853.1 364.3L847.9 364.9L845.7 366.0L848.4 372.0L852.9 372.9zM351.5 364.8L337.2 372.1L344.3 386.6L353.5 384.7L357.8 380.5L357.8 380.2zM583.8 382.7L584.9 374.4L580.6 371.7L575.9 377.5L581.6 383.5zM773.5 372.9L771.9 376.6L776.3 380.9L780.1 380.5L779.8 375.5zM625.3 386.7L628.5 386.8L630.5 384.6L631.1 378.7L628.8 378.8L623.9 380.6L623.8 384.1zM637.7 385.5L637.7 384.8L631.8 378.3L631.1 378.7L630.5 384.6L635.5 388.0zM646.1 383.0L648.6 385.2L652.6 384.8L652.3 378.6L648.0 377.4L644.7 380.6zM654.5 385.9L657.3 384.6L658.8 380.0L657.0 377.9L652.9 378.1L652.3 378.6L652.6 384.8zM710.8 385.7L709.4 377.7L703.7 381.4L704.8 385.3L706.2 386.4zM781.8 386.2L781.4 381.5L780.1 380.5L776.3 380.9L773.8 385.4L779.5 387.4zM845.4 384.6L848.8 383.3L849.1 381.9L846.7 379.2L841.7 376.6L840.7 379.7zM848.8 383.3L851.0 385.9L856.5 386.0L858.9 385.1L859.0 385.0L859.2 383.9L852.2 378.6L849.1 381.9zM866.9 384.2L866.7 380.4L864.2 378.7L862.6 379.3L861.9 379.9L859.2 383.9L859.0 385.0L866.1 387.2zM496.1 388.8L506.7 394.2L511.8 389.8L507.7 384.4L496.5 386.9zM641.4 387.8L643.3 390.7L646.1 390.6L648.6 385.2L646.1 383.0zM767.1 390.7L766.4 382.6L760.2 384.4L761.6 390.1L762.2 390.9zM792.1 383.9L792.1 383.9L788.1 384.4L785.4 388.5L786.2 390.2L791.2 390.5L792.0 390.1zM830.6 394.0L831.3 393.2L826.7 385.6L823.9 386.9L822.8 389.4L824.8 394.1zM842.0 393.2L844.1 390.7L843.8 386.2L836.1 386.0L835.7 391.1L836.0 391.4zM575.9 391.4L574.8 397.2L577.9 399.8L583.6 396.5L584.4 394.4L579.3 389.4zM695.8 390.4L692.9 388.9L690.8 393.7L691.2 398.4L692.0 399.2L692.3 399.1L696.9 396.2zM733.2 390.2L730.4 392.7L729.6 398.2L731.3 399.2L734.0 399.0L735.4 398.1L737.2 393.9zM761.6 390.1L753.4 391.2L753.0 392.4L754.2 395.3L760.4 396.3L762.2 390.9zM786.2 390.2L784.8 393.3L786.8 398.9L792.0 396.1L791.2 390.5zM823.6 396.4L824.8 394.1L822.8 389.4L817.9 390.7L817.6 396.1zM327.7 394.0L315.0 388.4L311.4 390.2L315.3 406.5L326.9 399.0zM346.7 409.3L339.6 390.9L331.7 391.6L327.7 394.0L326.9 399.0L328.9 403.6zM499.5 411.8L504.1 410.8L510.1 405.3L507.9 399.9L506.5 397.5L496.2 402.0zM553.7 404.6L554.6 399.6L545.4 394.9L544.5 398.3L543.9 404.7zM555.1 399.0L554.6 399.6L553.7 404.6L554.4 405.6L562.6 402.8L561.1 399.0zM702.7 395.3L701.9 396.2L702.5 403.1L707.2 404.7L708.6 404.3L708.9 398.0zM765.0 403.9L768.2 399.4L766.7 397.6L760.9 397.0L760.3 401.7zM774.5 403.0L777.9 402.3L780.4 399.8L778.6 395.9L774.5 395.7L772.3 400.1L772.3 400.3zM533.5 399.2L530.3 400.4L530.2 400.5L530.9 412.5L541.8 409.5L543.3 405.2zM652.9 410.2L657.6 408.5L658.7 404.0L651.8 401.9L649.6 403.8zM744.9 404.6L742.4 405.5L745.9 413.4L750.6 411.6L748.8 405.8zM587.5 412.5L586.2 408.9L577.8 411.5L577.5 416.7L580.0 418.6L587.0 414.2zM600.3 411.9L595.7 410.4L593.5 413.2L595.5 417.9L601.0 416.4zM627.0 415.5L625.3 411.8L622.2 410.8L619.7 415.8L623.3 418.8L626.0 417.5zM545.9 419.6L546.4 422.4L552.3 425.5L560.6 421.0L549.6 416.4L546.9 417.2zM573.9 417.8L568.7 413.3L562.3 417.6L561.6 420.3L569.4 423.0L570.7 422.5zM626.0 417.5L623.3 418.8L622.5 421.2L626.5 426.1L630.6 423.1zM738.1 415.8L737.9 416.0L739.8 423.3L745.4 423.2L746.0 422.2L746.3 418.6L744.5 415.4zM844.8 422.6L846.9 423.4L847.7 423.2L849.9 416.3L848.3 412.9L844.0 421.1zM598.9 428.2L593.8 420.8L590.0 420.9L585.3 425.3L587.3 435.0L598.2 435.0zM622.5 421.2L619.1 422.6L623.5 434.6L626.5 426.1zM667.6 434.8L662.8 422.8L662.3 422.7L659.3 423.4L656.7 435.0L667.6 435.0zM667.3 419.1L662.8 422.8L667.6 434.8L670.9 425.9L667.7 419.3zM811.2 422.2L810.5 422.9L810.8 435.0L818.4 435.0L818.4 435.0L817.3 426.1L814.2 422.1zM841.9 424.8L840.5 435.0L847.4 435.0L846.9 423.4L844.8 422.6zM866.5 423.6L873.0 435.0L880.0 435.0L880.0 421.4L868.1 421.5z"/>
<path fill="#ea755b" stroke="#fff" stroke-opacity="0.22" stroke-width="0.5" d="M349.7 110.4L347.5 100.0L330.8 100.0L327.7 110.6L328.3 117.5L329.4 120.1L336.0 123.5L346.1 116.5zM328.3 117.5L310.9 112.4L310.2 112.7L310.3 113.3L317.5 126.1L329.4 120.1zM278.5 139.1L285.4 140.9L288.7 132.4L289.0 121.1L277.2 100.0L270.0 100.0L270.0 131.9zM503.6 126.9L502.5 123.8L496.3 123.2L489.5 132.5L496.3 138.6L497.1 138.6L503.3 129.4zM767.6 132.8L767.0 128.2L766.0 126.6L760.8 128.1L761.6 132.6L765.7 134.8zM274.7 160.5L285.4 143.4L285.7 141.5L285.4 140.9L278.5 139.1L270.0 148.6L270.0 159.3zM487.9 157.8L495.2 154.1L491.5 146.3L485.2 146.2L483.0 148.6L481.8 152.0L485.1 156.3zM586.5 153.3L583.6 156.1L583.5 158.3L587.2 164.5L596.2 162.9L596.8 162.3L597.4 158.2L592.9 152.6zM643.7 165.9L643.1 169.4L647.7 173.2L650.3 172.0L646.8 165.4L644.7 165.1zM562.3 170.0L554.5 170.5L552.7 177.7L555.6 178.8L561.8 173.4zM643.6 178.5L643.7 176.8L640.9 172.9L635.8 171.8L635.0 172.8L634.6 178.7L642.1 180.1zM314.7 180.2L314.4 181.4L316.5 191.0L321.5 194.1L326.2 177.9zM652.7 172.8L649.1 180.2L650.8 182.3L652.2 182.5L655.6 178.2L652.9 172.7zM687.8 190.7L686.4 190.4L681.9 192.4L682.0 197.5L686.4 198.4L689.3 195.6zM622.4 198.7L625.0 202.3L627.2 203.4L629.4 202.6L630.9 195.7L623.4 196.6L622.2 198.0zM686.5 204.6L687.9 202.3L686.4 198.4L682.0 197.5L680.2 199.7L682.1 204.2zM642.3 203.1L636.5 200.6L634.2 203.4L635.6 206.8L639.4 208.6L642.1 207.7zM651.9 217.3L653.4 208.5L646.2 211.4L646.2 212.1zM701.7 216.1L702.3 215.3L701.2 210.9L695.8 210.3L695.0 213.3L697.1 217.0zM822.3 211.2L815.7 210.8L814.9 214.4L815.0 214.7L822.2 214.9L822.4 211.3zM868.8 214.8L872.8 213.0L873.4 209.6L868.7 207.8L865.2 211.5L865.7 213.0zM614.9 224.8L618.7 221.7L611.2 216.3L610.1 219.3zM652.7 219.4L659.9 223.0L660.2 222.8L660.4 214.2L658.3 213.4L652.7 219.3zM703.9 223.0L708.0 220.4L709.3 215.1L708.5 214.4L702.3 215.3L701.7 216.1zM708.0 220.4L711.8 222.3L715.2 220.6L714.0 215.4L709.3 215.1zM793.2 216.1L792.0 216.8L791.5 217.9L792.1 221.0L798.1 222.6L801.4 220.0zM632.6 221.5L631.8 221.0L629.0 222.1L629.3 226.6L633.4 229.5L635.7 228.1zM652.6 219.5L652.6 227.2L658.9 228.7L659.9 223.0L652.7 219.4zM836.6 223.4L835.4 227.9L841.1 228.8L842.4 226.5L842.3 222.2L841.9 221.6zM773.4 233.0L777.7 233.5L781.4 227.3L779.4 223.7L773.0 227.1zM781.4 227.3L777.7 233.5L779.6 235.5L785.9 232.2L784.6 228.6zM661.1 240.0L660.0 235.7L657.4 233.6L654.7 235.1L654.3 237.4L657.7 244.3L658.5 244.7zM815.8 242.2L822.5 241.5L823.6 240.5L823.4 236.5L821.0 234.2L817.5 235.0L815.7 237.4L815.2 241.5zM637.8 240.9L636.7 242.5L639.0 246.4L639.2 246.5L645.0 246.0L645.7 240.9zM659.3 245.8L664.8 244.5L667.3 241.3L666.2 240.1L661.1 240.0L658.5 244.7zM671.4 246.8L669.8 241.6L667.3 241.3L664.8 244.5L666.4 247.0L670.0 248.4zM782.3 241.0L781.1 240.5L777.6 241.9L775.7 248.2L776.3 248.7L782.4 246.9zM865.3 245.8L864.0 242.1L859.2 240.5L856.9 247.5L860.3 248.7zM404.8 255.2L411.4 240.4L410.1 238.1L406.9 236.7L389.3 248.5L388.4 256.6zM677.2 249.5L674.9 246.9L671.4 246.8L670.0 248.4L669.3 252.7L670.6 254.2L677.6 250.9zM822.5 257.0L828.5 250.2L826.0 248.5L825.2 248.4L821.5 255.5L822.2 256.8zM835.0 253.6L835.8 252.9L836.4 247.4L833.3 245.9L829.9 250.7L831.4 253.5zM839.9 252.1L843.0 254.7L847.1 249.9L846.9 247.7L845.6 246.2L840.8 246.8zM847.1 249.9L850.9 253.6L854.0 252.8L856.1 247.6L853.4 246.0L846.9 247.7zM622.6 252.2L622.5 252.3L623.2 257.5L625.6 259.6L628.9 252.5L624.8 251.8zM632.1 252.1L631.2 257.5L635.0 260.4L639.2 257.0L638.8 255.2L633.4 251.4L632.8 251.3zM664.0 252.8L661.8 252.1L659.8 252.0L660.4 258.8L665.8 260.6zM863.1 254.8L861.1 253.1L856.6 255.1L856.7 260.7L856.7 260.7L860.6 260.4zM863.9 265.2L865.6 265.9L869.6 263.1L869.1 259.8L868.4 259.3L861.2 260.8zM629.1 273.1L629.2 265.9L628.7 265.6L622.9 267.8L623.2 273.1L623.9 274.1L628.8 273.3zM649.7 270.3L644.0 266.4L643.0 266.6L643.2 272.6L646.3 273.4zM826.3 271.6L831.0 272.0L832.7 270.3L831.0 265.5L825.9 267.6zM816.1 274.3L812.0 273.5L807.8 277.4L811.9 280.5L816.3 275.0zM839.9 277.5L847.6 277.8L846.7 272.8L846.6 272.7L843.3 271.1L843.1 271.2zM794.5 277.7L792.9 275.7L792.6 275.6L785.8 278.2L788.0 282.6L790.7 282.7L794.6 279.5zM859.8 281.6L862.0 284.3L867.1 284.8L867.7 284.5L867.4 278.7L859.9 279.0zM326.9 276.1L316.6 277.9L315.7 279.3L314.9 287.4L326.2 291.6zM657.5 283.1L656.1 284.6L655.3 290.0L657.7 291.8L660.7 289.2L660.5 284.4zM861.3 290.7L867.1 290.4L867.1 284.8L862.0 284.3L860.2 288.9zM591.6 286.7L588.1 296.2L589.0 296.4L591.5 295.8L595.8 291.3zM463.5 302.0L464.9 297.5L450.9 293.9L449.2 296.5L451.4 302.1zM564.0 296.8L561.0 305.1L561.6 306.6L567.8 308.3L568.4 308.2L572.8 297.8L564.3 296.7zM589.0 296.4L588.1 296.2L586.5 296.3L584.3 297.8L588.2 308.6L592.9 303.4zM432.5 297.1L421.2 293.7L418.4 323.0L426.8 322.0L430.0 319.1zM459.3 318.9L464.3 311.4L463.5 302.0L451.4 302.1L447.7 307.3L456.5 320.6L459.2 318.9zM758.8 308.1L760.0 305.0L754.9 301.2L751.4 302.2L753.2 308.2zM791.3 299.7L790.4 299.7L785.6 302.5L786.4 307.3L792.1 307.5L792.0 302.0zM820.0 309.0L823.4 311.9L829.6 308.8L828.8 304.8L827.8 303.6L824.7 303.7L821.7 306.0zM834.4 304.5L835.6 312.1L839.6 310.2L839.7 303.2L837.3 302.2zM614.4 311.3L614.8 317.0L615.2 317.3L619.8 317.2L621.7 315.3L620.7 309.3zM697.5 315.8L696.4 312.3L694.7 310.5L689.9 310.5L689.6 310.8L688.4 317.1L696.2 317.4zM593.8 320.4L598.7 324.0L603.0 316.5L598.3 312.8zM670.8 317.1L671.7 323.1L672.0 323.4L676.8 321.8L675.7 316.2L671.2 316.8zM824.7 316.1L823.4 322.3L831.0 321.5L829.8 317.4L825.1 316.1zM845.6 315.9L842.6 319.1L842.2 323.4L851.5 323.2L852.4 322.8zM867.9 313.7L866.0 316.6L870.3 322.2L880.0 320.6L880.0 314.5zM571.8 325.5L577.1 328.9L583.7 327.3L584.4 321.8L574.0 319.6zM615.9 328.8L621.1 328.5L622.2 323.4L621.9 323.2L615.4 323.9L615.3 324.0zM641.9 328.8L637.1 322.8L634.1 330.6L634.9 331.5zM635.6 338.0L634.9 335.3L630.3 336.2L626.4 340.9L628.7 342.5zM690.6 340.8L691.1 334.4L690.2 333.5L685.6 333.7L685.4 341.0zM710.3 345.3L716.9 348.4L719.1 341.2L716.6 339.6L709.9 341.4zM735.2 342.0L735.5 345.0L742.0 347.3L743.1 346.1L743.8 341.2L742.3 339.9L737.5 339.7zM784.7 344.4L780.6 337.7L777.3 343.5L778.8 345.6L784.4 345.1L784.5 344.9zM548.3 347.8L545.8 345.3L540.4 347.4L538.9 353.8L539.9 356.2L544.2 356.0L546.3 353.6zM578.2 342.8L572.4 346.6L573.1 351.9L578.0 354.5L582.1 352.0L584.9 348.3L582.3 343.1zM746.6 354.2L748.9 352.6L748.8 351.3L746.2 347.0L743.1 346.1L742.0 347.3L741.9 352.6L742.2 352.9zM776.3 355.1L780.0 352.3L778.2 347.3L772.7 349.1L772.3 353.4zM778.8 345.6L778.2 347.3L780.0 352.3L783.5 352.0L784.4 345.1zM815.4 353.7L817.7 352.6L817.1 350.0L816.0 348.5L811.4 348.5L811.3 353.7zM848.7 347.6L847.4 350.8L852.1 356.4L853.8 355.5L855.0 349.4L852.6 347.4L849.1 347.1zM410.0 350.5L412.7 359.7L416.2 360.8L436.0 359.8L437.1 347.1L410.6 346.4L410.0 348.1zM592.9 350.2L592.0 350.7L591.5 355.2L598.1 361.7L599.9 354.6L593.9 350.3zM601.4 354.3L599.9 354.6L598.1 361.7L599.0 363.9L605.3 360.1L606.2 358.6L606.6 356.7zM620.6 355.8L615.8 354.0L611.6 355.2L615.5 361.2L617.7 360.6L620.4 357.1L620.6 355.8zM724.8 355.4L727.2 359.1L728.9 359.9L732.9 356.6L728.3 351.5zM769.6 359.1L773.4 363.2L777.0 357.1L776.3 355.1L772.3 353.4L769.8 354.4zM764.5 364.2L767.0 365.4L773.5 364.9L773.4 363.2L769.6 359.1L764.6 363.8zM853.3 364.1L858.9 364.5L860.7 360.0L860.0 357.2L853.0 361.9zM556.8 364.7L555.8 373.7L558.9 374.4L564.7 370.5L563.9 363.3L558.7 361.9zM709.5 365.7L704.5 366.6L707.8 372.0L711.3 369.1zM799.7 366.2L798.7 367.3L798.3 369.7L799.1 372.8L804.6 373.3L804.7 366.7L804.2 366.3zM829.9 371.4L829.9 365.8L828.6 364.8L826.7 365.5L824.0 370.3L826.9 374.7zM845.7 366.0L843.6 365.4L842.2 366.4L843.5 373.6L847.1 372.8L848.4 372.0zM867.7 366.9L866.6 364.8L860.3 366.4L860.2 369.9L865.4 373.1L866.6 372.4zM593.2 373.1L589.0 372.6L584.9 374.4L583.8 382.7L589.2 383.8L590.7 383.3L593.4 378.1zM724.4 382.4L727.4 375.6L727.3 375.4L722.9 373.8L722.5 373.9L718.8 379.0zM747.7 373.9L747.8 376.9L753.3 379.3L754.5 378.1L752.0 372.5L749.5 371.8zM762.9 373.3L761.7 372.7L759.7 373.4L757.8 377.1L759.4 380.1L765.8 377.3zM792.8 377.1L798.3 377.9L799.1 372.8L798.3 369.7L792.4 373.1zM808.8 376.5L813.6 380.4L816.0 378.6L816.2 375.1L811.8 372.8L808.9 375.9zM816.2 375.1L816.0 378.6L819.8 381.5L822.9 377.5L819.7 374.0zM852.8 377.1L861.9 379.9L862.6 379.3L856.0 372.6L853.1 373.1zM866.6 372.4L865.4 373.1L864.2 378.7L866.7 380.4L880.0 379.7L880.0 374.1zM299.9 382.5L301.5 390.4L302.9 391.5L311.4 390.2L315.0 388.4L316.1 379.8L311.8 374.3zM518.4 389.1L524.6 389.1L527.8 387.0L531.0 381.2L524.3 375.7L522.6 375.7L517.5 381.7zM611.3 381.7L609.9 384.8L617.0 388.0L617.3 387.3L616.4 380.5zM745.6 387.5L753.1 385.3L753.0 385.2L745.5 380.2L743.3 381.2L741.7 385.6L742.0 386.0zM677.9 386.2L673.8 381.9L670.9 385.9L675.5 391.0L675.8 390.9zM717.4 387.7L718.2 389.4L722.4 391.7L724.2 390.5L726.1 386.0L725.9 383.9L724.7 382.9zM849.6 392.4L850.9 390.5L851.0 385.9L848.8 383.3L845.4 384.6L843.8 386.2L844.1 390.7zM602.1 388.2L593.3 396.6L595.2 401.1L599.7 401.2L600.4 401.0L603.3 397.7L603.8 391.8zM648.2 392.7L646.1 390.6L643.3 390.7L640.8 393.7L641.2 396.7L645.8 396.7zM709.0 392.5L705.8 391.7L702.9 394.4L702.7 395.3L708.9 398.0L710.0 397.1zM837.3 400.0L836.0 391.4L835.7 391.1L831.3 393.2L830.6 394.0L830.7 394.9L832.1 397.9L836.6 401.0zM270.2 392.9L277.6 410.4L277.8 410.7L288.6 406.2L284.7 394.8L281.9 393.5L272.6 392.1zM635.4 403.4L643.3 404.3L644.0 403.8L640.8 397.8L636.1 399.4L635.1 400.7zM794.3 397.2L792.8 403.9L796.5 404.3L799.3 397.2L797.5 396.4zM562.9 408.4L569.4 409.3L570.1 408.6L570.0 404.1L568.9 401.8L563.6 403.4zM595.2 401.1L594.2 402.3L595.7 410.4L600.3 411.9L602.2 409.6L599.7 401.2zM685.2 412.9L689.0 407.3L688.8 405.5L686.8 405.4L681.3 409.1zM795.5 411.1L798.8 407.4L798.5 406.0L796.5 404.3L792.8 403.9L790.3 404.7L790.4 407.7L791.8 410.1zM802.1 410.3L805.8 408.0L806.2 405.3L803.5 403.0L798.5 406.0L798.8 407.4zM844.8 410.9L848.2 412.8L851.9 411.1L853.7 407.3L853.5 405.8L848.8 404.6zM549.6 416.4L560.6 421.0L560.8 421.0L561.6 420.3L562.3 417.6L559.5 410.5L555.4 408.4zM608.4 410.4L607.6 415.0L609.9 417.7L614.9 418.0L615.8 416.7L614.3 410.1L608.8 409.9zM712.9 411.6L711.6 410.7L707.8 413.1L707.9 416.7L712.4 418.0L714.2 416.8zM758.0 415.2L759.6 419.4L765.7 416.8L765.8 410.3L762.6 410.4L761.5 410.7zM849.9 416.3L855.7 418.6L857.9 416.5L857.9 416.5L851.9 411.1L848.2 412.8L848.3 412.9zM346.1 412.5L328.4 417.7L336.0 435.0L349.4 435.0zM614.9 418.0L616.1 422.1L619.1 422.6L622.5 421.2L623.3 418.8L619.7 415.8L615.8 416.7zM834.0 423.1L839.4 417.4L833.8 413.2L830.3 421.3L830.4 422.7zM864.2 416.5L861.5 417.5L862.1 425.0L866.5 423.6L868.1 421.5zM519.2 424.3L514.8 418.2L514.6 418.3L506.5 431.6L506.6 435.0L509.6 435.0zM614.7 424.3L609.7 425.0L609.1 435.0L617.8 435.0zM698.9 433.3L695.4 425.3L691.3 423.4L690.6 423.8L691.5 435.0L699.0 435.0zM861.9 425.2L863.9 435.0L873.0 435.0L866.5 423.6L862.1 425.0z"/>
<path fill="#e86b51" stroke="#fff" stroke-opacity="0.22" stroke-width="0.5" d="M314.6 109.1L327.7 110.6L330.8 100.0L319.5 100.0zM630.8 114.5L628.4 115.2L628.3 119.2L637.8 120.7L637.9 120.6zM329.4 120.1L317.5 126.1L317.2 126.8L317.0 130.9L336.1 137.1L336.4 136.7L336.0 123.5zM315.2 140.7L316.2 151.2L332.7 139.5zM765.1 144.8L760.3 142.4L759.2 144.2L759.4 149.5L763.8 150.7L766.0 148.9L766.5 147.0zM283.3 167.4L274.7 160.5L270.0 159.3L270.0 190.2L277.4 188.2L284.2 177.9zM695.4 190.6L698.3 189.9L696.1 184.5L691.4 185.2L691.1 188.7zM662.8 191.5L657.9 190.3L656.4 190.8L655.6 194.6L662.3 198.0L662.4 197.9zM714.6 195.7L719.0 193.2L719.2 190.2L717.8 188.8L712.7 189.7zM636.5 200.6L637.0 196.7L631.9 194.5L630.9 195.7L629.4 202.6L634.2 203.4zM717.6 205.2L718.6 201.4L713.2 197.4L709.9 198.3L710.0 202.3zM688.6 208.6L687.7 210.7L688.9 213.5L690.0 214.3L695.0 213.3L695.8 210.3L694.9 208.6L689.9 208.3zM830.6 214.0L833.5 213.9L833.4 208.7L829.4 204.4L829.4 204.4L826.6 210.6zM618.7 221.7L619.6 221.3L619.4 215.4L613.3 212.5L611.1 215.0L611.2 216.3zM691.5 220.9L690.0 214.3L688.9 213.5L684.2 218.3L685.1 221.2L691.3 221.2zM725.6 221.7L730.5 214.9L728.1 213.5L722.5 215.4L722.9 221.1zM678.7 228.5L683.6 230.0L685.8 228.0L684.4 222.0L677.8 224.2L678.0 227.6zM691.5 220.9L691.3 221.2L692.6 226.9L696.1 226.2L699.1 223.1L695.7 219.2zM798.1 222.6L797.3 227.8L802.9 228.3L804.4 225.2L804.1 219.8L801.4 220.0zM812.2 227.1L811.3 220.7L810.7 220.4L804.2 219.7L804.1 219.8L804.4 225.2zM789.0 232.9L791.2 234.0L795.6 233.9L795.5 228.5L792.6 227.0zM697.3 237.6L701.9 242.6L704.2 241.4L701.2 233.2L697.5 234.7zM779.6 235.5L781.1 240.5L782.3 241.0L786.5 240.4L787.2 233.2L785.9 232.2zM815.7 237.4L809.7 232.6L806.4 234.1L811.6 241.0L815.2 241.5zM626.2 243.1L625.7 245.0L627.5 247.5L631.6 248.8L632.0 242.4L631.2 241.6zM601.3 253.5L599.3 243.7L588.5 249.6L600.6 254.5zM765.1 250.8L767.4 252.9L769.8 252.5L773.2 248.3L772.6 247.6L766.2 245.3L765.8 245.8zM835.8 252.9L839.9 252.1L840.8 246.8L840.1 246.5L836.4 247.4zM665.9 260.7L671.3 257.4L670.6 254.2L669.3 252.7L664.0 252.8L665.8 260.6zM671.4 267.3L671.9 266.7L673.2 258.8L671.3 257.4L665.9 260.7L665.8 265.2L667.7 266.3zM853.3 265.4L855.2 264.2L856.7 260.7L856.7 260.7L850.1 257.4L849.5 264.4zM818.4 266.1L817.9 266.7L818.5 270.3L824.7 273.0L826.3 271.6L825.9 267.6L822.5 264.0zM629.1 273.1L628.8 273.3L629.5 279.0L629.7 279.3L632.9 281.3L633.9 279.4L633.4 273.6zM641.7 279.6L644.5 281.4L647.3 280.8L649.3 278.9L646.3 273.4L643.2 272.6L640.2 274.9L640.2 275.9zM753.5 276.8L755.7 278.6L757.3 278.3L759.2 276.8L761.2 272.7L756.8 270.0L753.9 271.8zM837.5 270.6L836.9 276.3L839.7 277.6L839.9 277.5L843.1 271.2zM686.6 286.5L689.8 284.4L690.7 279.1L689.4 278.1L686.6 278.3L682.4 280.3L681.7 281.9zM720.6 285.3L720.4 280.3L718.7 277.6L717.8 277.4L714.5 279.8L715.2 285.2L718.1 285.8zM770.9 280.5L767.7 284.9L773.0 286.9L777.1 286.0L778.6 281.9L778.6 281.8L775.0 278.5zM794.6 279.5L790.7 282.7L792.7 286.1L796.1 287.0L799.0 283.7zM328.1 295.0L331.6 297.6L339.4 295.1L342.1 288.2L336.2 275.1L328.5 274.8L326.9 276.1L326.2 291.6zM622.1 290.3L628.7 289.8L627.6 285.5L623.5 282.9zM676.6 284.6L671.9 284.9L671.8 285.1L670.0 291.2L674.4 293.4L678.6 288.2L677.2 284.8zM692.3 291.7L693.0 287.0L689.8 284.4L686.6 286.5L685.9 289.9L690.9 292.8zM736.8 286.6L736.5 285.6L734.7 283.7L727.6 284.4L726.9 285.3L731.3 290.6L732.2 291.0L736.6 287.0zM790.7 282.7L788.0 282.6L785.7 286.0L785.7 290.1L788.8 290.6L792.7 286.1zM853.5 289.3L854.2 289.9L860.2 288.9L862.0 284.3L859.8 281.6L854.9 283.5L853.9 285.4zM610.2 291.8L609.7 291.2L601.5 293.7L601.6 295.2L608.3 296.6L609.9 296.2zM640.1 288.2L634.9 293.6L636.9 296.1L638.6 296.3L639.0 296.1L642.5 289.2L642.0 288.6zM726.6 297.7L730.6 295.8L732.3 292.4L732.2 291.0L731.3 290.6L723.0 292.9L722.9 293.2L722.5 295.7zM822.9 295.4L829.3 300.1L831.7 297.7L826.3 291.6L824.8 291.2zM363.0 318.4L373.6 298.0L373.7 297.6L373.1 295.3L361.4 298.3L358.7 319.1zM609.9 296.2L608.3 296.6L606.0 303.9L608.0 304.9L613.8 299.3zM638.6 296.3L640.3 302.5L643.8 303.9L645.0 303.6L645.6 302.9L645.7 297.6L639.0 296.1zM747.1 300.1L744.3 296.7L740.4 296.1L740.0 296.3L739.9 303.9L741.6 304.9L747.0 302.2L747.5 301.3zM657.0 310.0L659.8 309.3L661.4 304.7L661.0 303.3L659.8 302.7L654.3 303.4L653.7 308.3zM664.6 314.2L667.5 308.9L661.4 304.7L659.8 309.3zM720.6 304.8L718.5 309.0L720.2 311.1L726.4 307.8L726.4 305.4L722.2 303.9zM759.6 311.5L766.8 311.2L768.7 309.0L761.6 304.2L760.0 305.0L758.8 308.1zM804.1 301.6L804.3 310.1L807.0 309.9L808.2 309.2L808.3 302.6zM766.4 314.9L766.8 311.2L759.6 311.5L758.7 314.3L764.0 317.3zM766.8 311.2L766.4 314.9L772.1 317.6L774.3 315.8L770.1 309.5L769.5 308.8L768.7 309.0zM288.3 330.0L290.6 329.5L295.9 315.6L282.9 311.5L271.7 312.8L284.4 327.5zM615.2 317.3L615.4 323.9L621.9 323.2L619.8 317.2zM732.6 320.8L737.7 319.7L738.8 315.2L738.6 314.4L732.2 313.9L730.4 316.5L730.4 317.1zM795.7 322.0L799.6 318.5L797.8 316.9L790.7 318.8zM585.1 320.7L584.4 321.8L583.7 327.3L587.0 332.2L599.2 325.4L598.7 324.0L593.8 320.4L591.9 319.9zM678.9 322.2L680.6 326.5L684.7 326.1L685.4 325.1L683.1 317.8zM698.6 323.2L696.6 326.9L697.4 328.3L703.4 328.9L703.8 328.4L705.1 322.8L704.8 322.6zM823.6 331.2L825.5 327.0L823.1 322.7L818.2 323.2L817.1 324.8L815.9 328.6L817.5 330.4zM652.8 330.2L645.0 328.4L647.2 336.1L648.2 336.6L652.4 334.5zM776.9 334.9L779.7 327.6L779.3 327.2L772.1 326.5L771.5 328.7L775.9 335.1zM779.7 327.6L776.9 334.9L780.6 337.5L785.2 335.3L782.4 327.9zM626.2 340.9L626.4 340.9L630.3 336.2L627.1 331.0L626.4 331.4L624.1 336.5zM691.0 341.4L697.4 342.0L697.8 341.6L699.3 336.1L696.3 334.0L691.1 334.4L690.6 340.8zM743.4 336.8L742.3 339.9L743.8 341.2L750.1 341.1L749.3 333.8L748.1 332.5zM773.4 342.7L773.7 343.0L777.3 343.5L780.6 337.7L780.6 337.5L776.9 334.9L775.9 335.1L774.5 335.9zM856.9 336.0L853.9 333.8L850.1 333.8L849.1 334.2L848.7 335.0L850.4 340.2L856.2 340.8zM320.0 343.1L323.1 349.8L327.5 352.8L341.1 349.9L343.5 348.4L322.3 338.0L321.8 338.4zM627.1 351.0L627.2 351.6L631.3 355.0L633.9 354.2L634.1 346.6L630.7 345.9zM696.2 353.0L697.4 352.2L697.3 349.0L690.4 346.0L688.0 348.5L689.3 351.6zM706.4 348.6L700.5 353.6L701.0 354.3L709.3 355.3L710.1 353.8L707.1 348.7zM801.4 354.3L805.9 353.3L806.1 349.1L803.5 346.6L797.7 349.2L797.5 350.1zM828.9 349.9L829.2 354.1L833.1 353.9L835.4 352.6L837.1 347.5L836.9 347.3zM872.5 355.7L878.8 347.1L869.5 346.8L866.7 350.7L866.1 353.7L867.5 354.8zM578.0 354.5L573.1 351.9L569.5 355.2L568.8 361.3L578.8 359.5zM591.5 355.2L592.0 350.7L584.9 348.3L582.1 352.0L587.1 360.0zM672.1 359.1L664.5 360.4L664.7 365.9L665.3 366.4L673.2 363.3L673.8 361.6L673.7 361.3zM684.9 360.0L682.6 359.5L680.4 361.7L678.8 368.7L678.8 368.8L685.6 366.4zM732.9 356.6L728.9 359.9L729.9 366.2L734.5 367.2L735.9 358.7L733.9 356.5zM394.1 384.3L406.9 379.6L406.9 378.9L389.4 362.7L388.0 362.7L391.5 382.6zM609.1 365.2L601.5 370.2L602.7 371.5L609.1 373.3L611.0 365.5zM653.1 373.3L654.8 371.0L654.5 367.5L652.5 366.1L650.4 366.5L646.5 372.3L647.8 374.2zM811.6 369.6L811.8 372.8L816.2 375.1L819.7 374.0L820.4 371.8L817.0 366.2zM858.9 364.5L853.3 364.1L853.1 364.3L852.9 372.9L853.1 373.1L856.0 372.6L860.2 369.9L860.3 366.4zM688.1 377.1L693.1 382.2L697.4 378.0L694.6 374.1L689.9 374.1zM734.0 374.1L733.6 379.1L734.6 380.3L740.1 377.5L739.8 374.6L735.7 372.2zM742.5 372.9L739.8 374.6L740.1 377.5L743.3 381.2L745.5 380.2L747.8 376.9L747.7 373.9zM785.1 373.4L787.3 378.1L791.2 378.1L792.8 377.1L792.4 373.1L789.9 370.2L787.5 370.9zM848.4 372.0L847.1 372.8L846.7 379.2L849.1 381.9L852.2 378.6L852.8 377.1L853.1 373.1L852.9 372.9zM551.0 380.4L561.6 384.6L564.1 380.0L564.1 379.9L558.9 374.4L555.8 373.7L551.4 376.2zM575.9 377.5L574.6 377.3L570.2 381.8L570.8 383.6L580.3 385.6L581.6 383.5zM685.3 378.4L685.2 386.0L685.5 386.3L691.9 386.3L692.8 384.9L693.1 382.2L688.1 377.1zM759.4 380.1L760.1 384.4L760.2 384.4L766.4 382.6L767.3 381.6L767.8 379.0L765.8 377.3zM813.6 380.4L812.8 385.3L813.9 385.8L819.7 383.1L819.8 381.5L816.0 378.6zM610.9 391.3L609.4 385.2L602.5 386.0L601.9 386.8L602.1 388.2L603.8 391.8L608.4 392.0zM545.4 394.9L544.9 392.4L539.8 391.2L537.1 392.5L534.6 397.7L544.5 398.3zM714.5 396.5L715.0 397.1L722.3 397.1L722.4 391.7L718.2 389.4L714.4 393.7zM773.0 392.0L774.5 395.7L778.6 395.9L780.5 394.1L778.4 389.9zM562.6 402.8L563.6 403.4L568.9 401.8L569.3 399.6L566.4 396.0L563.4 396.5L561.1 399.0zM603.3 397.7L600.4 401.0L608.2 405.3L611.6 402.1L610.3 398.2L609.6 398.0zM708.9 398.0L708.6 404.3L710.9 405.0L714.4 404.1L715.0 397.1L714.5 396.5L710.0 397.1zM731.2 405.8L731.3 399.2L729.6 398.2L723.8 399.3L722.8 403.1L729.0 407.5zM734.0 399.0L736.5 404.0L741.5 405.2L740.5 400.4L735.4 398.1zM827.2 402.8L832.1 397.9L830.7 394.9L825.4 402.3zM848.8 404.6L853.5 405.8L856.0 402.1L856.5 399.3L855.8 398.8L849.9 396.8L849.5 397.1L846.9 402.1zM627.9 409.5L633.0 411.4L635.4 409.4L634.4 405.4L628.3 405.1zM698.8 407.1L701.1 411.8L705.3 410.7L707.2 404.7L702.5 403.1L701.9 403.4zM748.8 405.8L750.6 411.6L752.1 412.0L755.7 407.8L755.4 403.9L753.6 402.7zM865.7 407.5L864.0 402.8L860.0 405.5L861.3 408.7L864.8 409.0zM866.1 412.7L880.0 406.4L880.0 404.5L873.6 404.3L865.7 407.5L864.8 409.0zM673.3 409.7L665.5 409.8L665.7 415.5L666.6 416.3L674.4 411.1zM691.3 411.5L688.8 415.8L691.9 418.9L695.7 417.2L697.3 415.6L694.1 411.4zM727.7 411.3L723.1 411.4L720.2 413.9L723.3 417.8L726.5 417.5zM734.0 415.9L730.6 411.7L728.8 410.5L727.7 411.3L726.5 417.5L728.1 418.5zM813.0 408.4L810.3 411.7L810.1 414.1L813.6 415.4L817.5 410.9L816.8 409.1zM827.3 416.8L827.4 412.0L824.6 411.3L821.0 414.1L820.3 417.2L820.9 418.0zM851.9 411.1L857.9 416.5L859.2 410.0L853.7 407.3zM289.2 435.0L307.8 435.0L310.6 419.4L309.3 416.6L300.8 410.1L295.6 410.3L285.6 422.6zM679.4 423.0L679.1 417.6L676.4 414.9L672.2 418.8L674.2 423.6zM525.4 426.9L524.0 425.2L519.2 424.3L509.6 435.0L526.5 435.0zM841.9 424.8L835.9 424.9L837.2 435.0L840.5 435.0z"/>
<path fill="#e6634c" stroke="#fff" stroke-opacity="0.22" stroke-width="0.5" d="M315.2 140.7L313.4 137.3L304.6 136.7L299.4 144.5L300.9 149.0L316.0 153.2L316.2 151.2zM351.3 147.6L337.8 159.5L340.6 164.7L350.8 170.2L351.6 169.2L357.6 155.5L357.0 149.4zM294.8 160.3L294.1 160.4L283.3 167.4L284.2 177.9L298.5 180.3L309.2 168.4L309.4 167.5zM735.3 179.2L736.8 182.5L741.7 181.1L741.3 176.3L741.1 176.2zM619.9 215.0L619.4 215.4L619.6 221.3L622.8 222.7L625.8 221.5L625.7 216.3zM632.6 215.0L632.2 214.5L627.4 213.4L625.7 216.3L625.8 221.5L629.0 222.1L631.8 221.0zM670.9 224.2L666.7 222.8L666.6 228.7L670.9 228.5zM648.2 229.1L650.9 233.7L654.7 235.1L657.4 233.6L659.0 229.1L658.9 228.7L652.6 227.2zM804.8 234.2L804.9 234.1L802.9 228.3L797.3 227.8L795.5 228.5L795.6 233.9L796.9 235.9zM809.7 232.6L813.2 228.3L812.2 227.1L804.4 225.2L802.9 228.3L804.9 234.1L806.4 234.1zM645.8 240.9L645.5 238.2L642.4 235.1L640.0 234.3L638.2 235.8L637.8 240.9L645.7 240.9zM702.2 249.2L709.4 246.7L708.7 241.6L708.6 241.5L704.2 241.4L701.9 242.6L700.1 246.1zM806.8 246.0L810.6 241.5L804.8 240.8L804.5 245.2zM777.5 257.9L779.6 262.3L784.6 259.7L781.9 254.1zM799.7 261.2L802.5 257.2L800.7 253.3L799.2 253.1L796.3 256.9zM773.5 265.5L771.3 261.0L769.0 260.7L765.8 265.1L767.1 268.7zM809.7 261.7L814.6 266.4L817.9 266.7L818.4 266.1L815.9 259.6L812.3 258.0L810.9 257.9L809.2 260.3zM622.9 267.8L618.7 265.7L618.5 265.7L616.5 269.9L617.3 272.3L623.2 273.1zM796.9 266.2L796.3 267.1L796.5 270.9L799.7 274.1L803.8 272.8L804.3 269.9L800.7 265.8L799.9 265.6zM798.3 276.1L799.7 274.1L796.5 270.9L792.9 275.7L794.5 277.7zM803.8 272.8L806.2 277.5L807.8 277.4L812.0 273.5L810.4 269.9L807.4 268.9L804.3 269.9zM778.6 281.8L778.6 281.9L785.7 286.0L788.0 282.6L785.8 278.2L784.7 277.5zM830.9 278.5L824.9 284.8L824.9 284.8L831.4 284.8L833.6 282.1L832.4 278.3zM773.0 286.9L767.7 284.9L767.7 284.9L767.8 292.2L773.2 292.5zM832.4 289.4L835.0 290.8L835.9 290.5L835.6 282.9L833.6 282.1L831.4 284.8zM753.8 293.4L753.3 291.7L747.3 291.0L744.3 296.7L747.1 300.1zM799.9 296.7L798.6 292.3L796.3 291.2L792.4 293.2L792.1 298.6L796.1 298.5zM844.4 298.6L847.5 297.9L848.4 296.6L847.9 292.1L840.8 290.3L840.7 290.5L841.1 294.5zM683.9 303.0L685.3 296.8L684.8 296.4L679.5 297.4L680.8 303.1L683.8 303.1zM760.0 305.0L761.6 304.2L762.0 303.5L761.9 298.0L759.8 296.0L756.6 296.2L754.9 301.2zM796.1 298.5L792.1 298.6L791.3 299.7L792.0 302.0L798.9 303.6zM821.0 297.4L824.7 303.7L827.8 303.6L829.3 300.1L822.9 295.4zM837.3 302.2L839.7 303.2L842.7 301.8L844.4 298.6L841.1 294.5L835.3 298.8zM373.6 298.0L363.0 318.4L368.7 319.1L384.3 309.6zM608.0 304.9L609.8 308.5L610.9 308.7L616.7 304.4L614.8 299.2L613.8 299.3zM709.0 307.8L713.4 311.1L716.7 308.4L713.9 305.1L711.7 304.6zM566.8 317.2L572.8 317.2L576.0 310.9L568.4 308.2L567.8 308.3zM629.8 316.0L631.7 313.9L631.9 313.2L626.0 308.5L625.3 308.8L627.0 316.3L627.8 316.7zM758.7 314.3L759.6 311.5L758.8 308.1L753.2 308.2L750.9 310.6L753.6 316.2L754.2 316.6L756.1 316.2zM792.1 307.5L786.4 307.3L783.2 310.1L784.2 313.6L789.5 315.7L793.8 309.6zM629.8 316.0L634.1 321.9L637.0 322.3L639.3 319.9L639.2 318.2L631.7 313.9zM653.6 316.2L652.1 319.1L652.7 321.1L653.1 321.4L661.8 315.9L657.2 314.3zM653.4 321.8L660.9 323.0L663.1 321.9L663.6 316.0L661.8 315.9L653.1 321.4zM730.4 317.1L730.4 316.5L726.2 314.2L721.6 315.4L722.1 318.9L722.7 319.5L725.0 319.9zM752.2 322.4L753.4 320.1L754.2 316.6L753.6 316.2L746.1 317.2L745.9 317.4L745.4 320.8L747.5 323.3zM854.4 316.7L854.2 317.1L854.0 322.6L855.5 323.2L859.9 322.0L862.7 317.2L859.6 313.6zM676.8 321.8L672.0 323.4L672.7 328.8L673.2 329.3L677.9 330.8L680.6 326.5L678.9 322.2zM703.8 328.4L708.8 329.7L710.0 326.5L705.2 322.8L705.1 322.8zM728.3 325.9L729.6 328.4L734.6 331.0L737.2 328.9L732.1 322.0L729.0 324.4zM328.2 325.8L348.0 346.9L348.5 346.9L350.6 345.1L357.6 321.1L357.8 319.5L354.5 317.8L328.0 319.1zM357.6 321.1L373.2 340.1L377.4 328.0L373.6 322.9L368.7 319.1L363.0 318.4L358.7 319.1L357.8 319.5zM614.3 334.5L616.5 335.8L618.6 335.3L621.8 329.6L621.1 328.5L615.9 328.8L614.2 331.6zM740.6 329.0L740.9 333.2L743.4 336.8L748.1 332.5L747.6 330.6L746.2 329.3zM824.5 332.8L830.0 334.0L831.6 329.7L829.1 327.2L825.5 327.0L823.6 331.2zM849.1 334.2L845.6 329.7L843.5 328.7L840.8 330.8L842.5 338.3L848.7 335.0zM377.1 350.4L378.4 350.4L378.6 350.3L385.5 338.0L384.6 332.9L377.4 328.0L373.2 340.1L375.1 349.2zM616.5 335.8L617.5 341.1L622.7 343.1L626.2 340.9L624.1 336.5L618.6 335.3zM659.4 342.1L658.8 337.1L654.7 336.7L653.6 342.8L653.8 343.2L658.2 343.8zM724.6 332.8L722.2 334.3L721.0 340.7L722.8 341.2L728.6 338.2L728.8 336.1L726.0 333.2zM728.8 336.1L728.6 338.2L731.5 341.0L735.2 342.0L737.5 339.7L737.2 338.4L734.3 332.4zM305.0 331.1L303.2 332.1L294.7 352.0L309.0 349.9L311.5 346.4zM659.4 342.1L658.2 343.8L659.1 346.0L664.6 347.6L663.9 342.0zM664.6 347.6L665.4 348.5L670.2 347.4L670.3 343.3L665.8 339.3L663.9 342.0zM670.2 347.4L672.6 348.8L675.7 348.4L677.2 346.9L676.8 342.7L674.0 339.8L670.3 343.3zM683.7 341.8L683.1 346.5L684.2 347.8L688.0 348.5L690.4 346.0L691.0 341.4L690.6 340.8L685.4 341.0zM750.1 341.1L743.8 341.2L743.1 346.1L746.2 347.0L751.3 342.0zM759.6 353.3L760.1 352.7L759.8 348.8L756.1 346.5L751.1 352.8L754.8 355.0zM835.4 352.6L838.4 355.0L841.2 351.3L838.4 347.8L837.1 347.5zM582.1 352.0L578.0 354.5L578.8 359.5L581.9 363.5L584.3 363.2L586.1 362.2L587.1 360.0zM709.3 355.3L709.4 359.6L711.4 361.0L714.4 362.0L716.5 359.0L717.3 354.8L715.8 352.0L710.1 353.8zM721.3 359.8L722.3 361.6L727.2 359.1L724.8 355.4L723.8 355.3L722.3 355.8zM754.8 355.0L751.1 352.8L748.9 352.6L746.6 354.2L746.9 357.8L748.7 360.8L752.0 362.0L754.2 359.9zM844.9 352.6L844.0 358.0L847.8 358.8L851.4 358.3L852.1 356.4L847.4 350.8zM748.7 360.8L743.9 365.9L749.2 369.4L752.8 365.0L752.0 362.0zM311.9 368.3L311.6 373.9L311.8 374.3L316.1 379.8L327.6 374.0L329.7 370.3L323.4 364.1L317.8 363.3zM621.1 373.9L624.5 371.6L625.0 370.6L620.4 367.0L616.5 370.0L616.5 370.1zM665.3 366.4L667.3 370.2L669.3 371.3L674.6 365.5L673.2 363.3zM742.4 366.0L741.2 365.4L734.7 367.4L735.7 372.2L739.8 374.6L742.5 372.9zM743.9 365.9L742.4 366.0L742.5 372.9L747.7 373.9L749.5 371.8L749.2 369.4zM628.8 378.8L624.5 371.6L621.1 373.9L620.8 378.6L623.9 380.6zM660.0 373.9L657.8 374.2L657.0 377.9L658.8 380.0L663.7 378.9L663.3 375.4zM667.3 370.2L663.3 375.4L663.7 378.9L666.0 380.7L668.3 379.7L670.6 372.4L669.3 371.3zM768.5 370.6L762.9 373.3L765.8 377.3L767.8 379.0L771.9 376.6L773.5 372.9L773.5 372.5zM840.7 379.7L841.7 376.6L841.4 375.2L837.4 373.3L834.5 375.4L834.2 376.1L837.2 381.9zM880.0 387.7L880.0 379.7L866.7 380.4L866.9 384.2L878.1 388.0zM380.7 378.0L371.8 389.1L373.0 393.0L380.0 396.5L388.5 396.9L394.1 384.3L391.5 382.6zM570.8 383.6L569.8 388.6L570.2 389.5L575.9 391.4L579.3 389.4L580.3 385.6zM700.3 387.4L698.0 385.0L692.8 384.9L691.9 386.3L692.9 388.9L695.8 390.4L699.6 389.4zM740.8 393.3L742.0 386.0L741.7 385.6L735.5 385.3L733.3 389.5L733.2 390.2L737.2 393.9zM753.4 391.2L753.2 385.4L753.1 385.3L745.6 387.5L747.7 392.6L753.0 392.4zM566.4 396.0L566.9 393.4L560.3 388.5L557.4 391.3L563.4 396.5zM574.8 397.2L575.9 391.4L570.2 389.5L566.9 393.4L566.4 396.0L569.3 399.6zM646.5 397.8L646.9 403.8L649.6 403.8L651.8 401.9L652.7 397.1zM672.6 398.9L671.6 395.5L668.8 395.8L664.2 398.8L664.9 403.5L670.7 402.7zM696.9 396.2L692.3 399.1L701.9 403.4L702.5 403.1L701.9 396.2zM841.3 405.6L845.1 402.3L841.6 397.8L837.3 400.0L836.6 401.0L836.5 401.7zM586.2 408.9L587.5 412.5L593.5 413.2L595.7 410.4L594.2 402.3L586.9 405.6zM659.0 403.8L658.7 404.0L657.6 408.5L659.9 410.9L665.0 409.3L664.5 403.8zM688.8 405.5L689.0 407.3L691.3 411.5L694.1 411.4L696.4 407.1L691.3 403.2zM721.8 404.0L717.6 405.3L717.5 409.9L719.9 413.8L720.2 413.9L723.1 411.4zM774.2 408.9L775.3 409.6L781.3 405.7L777.9 402.3L774.5 403.0zM776.1 410.6L783.4 409.8L783.3 405.9L781.3 405.7L775.3 409.6zM811.0 403.5L806.2 405.3L805.8 408.0L810.3 411.7L813.0 408.4L811.9 404.4zM534.6 421.1L534.6 421.1L545.9 419.6L546.9 417.2L541.8 409.5L530.9 412.5L530.8 412.5zM675.6 411.8L676.4 414.9L679.1 417.6L686.0 415.5L685.2 412.9L681.3 409.1L680.1 409.0zM766.3 409.9L765.8 410.3L765.7 416.8L766.2 417.3L772.8 419.5L772.9 419.4L769.3 410.1zM783.4 409.8L776.1 410.6L777.7 415.8L784.8 413.9L784.8 412.0zM607.7 423.2L609.7 425.0L614.7 424.3L616.1 422.1L614.9 418.0L609.9 417.7zM637.8 422.3L644.0 417.3L643.2 416.1L639.6 414.1L634.7 419.1L634.7 422.2zM697.3 415.6L695.7 417.2L698.6 422.7L703.7 422.1L704.0 419.2L699.8 415.1zM707.9 416.7L704.0 419.2L703.7 422.1L704.2 423.1L707.2 424.7L712.4 422.2L712.4 418.0zM726.5 417.5L723.3 417.8L722.0 420.7L724.3 424.8L728.8 423.2L728.9 423.1L728.1 418.5zM793.3 422.6L794.9 422.3L798.9 415.9L796.5 414.5L791.2 416.5zM803.5 420.9L803.6 416.5L802.4 415.7L798.9 415.9L794.9 422.3L799.4 424.2zM853.7 423.6L855.7 418.6L849.9 416.3L847.7 423.2zM647.6 435.0L653.5 435.0L654.5 421.8L653.9 420.9L647.5 424.7zM653.5 435.0L656.7 435.0L659.3 423.4L654.5 421.8zM754.2 423.2L746.0 422.2L745.4 423.2L748.8 435.0L749.7 435.0z"/>
<path fill="#e25c47" stroke="#fff" stroke-opacity="0.22" stroke-width="0.5" d="M709.8 118.8L710.0 114.8L704.9 111.1L702.8 117.2L705.9 120.9zM665.0 123.4L670.7 126.5L674.3 124.4L673.3 121.6L668.6 119.8L665.6 120.6zM347.1 138.1L351.3 147.6L357.0 149.4L357.5 149.0L362.4 142.7L359.1 138.9zM664.4 203.9L666.0 200.5L662.4 197.9L662.3 198.0L657.4 201.2L660.8 204.8zM689.9 208.3L694.9 208.6L696.3 205.3L692.7 202.7zM795.5 228.5L797.3 227.8L798.1 222.6L792.1 221.0L791.4 225.4L792.6 227.0zM620.3 235.7L622.4 228.9L614.2 229.5L613.5 232.9L614.9 235.0zM650.4 241.0L654.3 237.4L654.7 235.1L650.9 233.7L645.5 238.2L645.8 240.9zM771.6 241.0L772.6 247.6L773.2 248.3L775.7 248.2L777.6 241.9L772.5 240.3zM826.0 248.5L829.2 242.5L827.1 240.9L823.6 240.5L822.5 241.5L824.1 247.7L825.2 248.4zM782.0 253.7L776.9 250.1L774.3 256.3L774.7 257.3L777.5 257.9L781.9 254.1zM816.1 274.3L816.3 275.0L819.1 278.3L823.5 278.1L824.4 277.1L824.7 273.0L818.5 270.3zM336.2 275.1L342.1 288.2L356.5 283.7L354.2 276.1L339.8 271.5zM770.9 280.5L766.5 275.0L764.4 279.9L765.5 284.4L767.7 284.9L767.7 284.9zM651.8 290.3L655.3 290.0L656.1 284.6L653.4 284.8L649.9 286.5L649.5 289.1zM747.3 291.0L753.3 291.7L753.5 291.4L751.9 284.2L749.7 284.0L746.7 289.7zM753.5 291.4L759.9 287.6L760.0 287.5L753.9 283.0L751.9 284.2zM767.7 284.9L765.5 284.4L762.4 285.3L760.0 287.5L759.9 287.6L761.6 292.0L767.3 292.9L767.8 292.2zM373.1 295.3L373.7 297.6L390.5 300.4L392.0 297.9L374.2 287.8zM717.2 302.0L720.6 304.8L722.2 303.9L721.5 296.3L718.0 297.0zM810.7 301.4L814.8 306.9L817.3 301.1L816.9 298.9L811.7 299.7zM818.0 297.7L816.9 298.9L817.3 301.1L821.7 306.0L824.7 303.7L821.0 297.4zM694.6 302.2L690.4 302.3L689.3 303.3L689.9 310.5L694.7 310.5L697.0 304.8zM610.9 308.7L609.8 308.5L606.9 312.5L606.0 315.7L608.7 318.1L614.8 317.0L614.4 311.3zM682.1 311.2L681.8 316.0L683.1 317.8L688.4 317.1L688.4 317.1L689.6 310.8L685.2 310.0zM726.2 314.2L727.7 309.3L726.4 307.8L720.2 311.1L720.3 313.8L721.6 315.4zM627.0 316.3L621.7 315.3L619.8 317.2L621.9 323.2L622.2 323.4L626.0 323.0L627.8 316.7zM652.1 319.1L648.2 316.9L642.9 321.3L645.4 324.5L652.7 321.1zM679.5 334.0L677.9 330.8L673.2 329.3L671.3 336.6L674.1 338.6L679.4 334.2zM696.3 334.0L697.4 328.3L696.6 326.9L692.3 326.3L690.3 329.9L690.2 333.5L691.1 334.4zM729.6 328.4L726.0 333.2L728.8 336.1L734.3 332.4L734.6 331.0zM767.6 331.7L764.3 329.4L760.8 331.3L760.2 332.4L763.6 336.9L766.6 337.8L768.2 336.0zM275.0 339.3L286.2 344.9L288.3 330.0L284.4 327.5zM685.6 333.7L685.0 333.5L679.5 334.0L679.4 334.2L681.6 340.2L683.7 341.8L685.4 341.0zM703.9 342.8L706.4 340.2L700.0 336.0L699.3 336.1L697.8 341.6zM737.2 338.4L737.5 339.7L742.3 339.9L743.4 336.8L740.9 333.2zM753.6 342.6L756.6 339.9L756.5 333.9L749.3 333.8L750.1 341.1L751.3 342.0L752.3 342.5zM785.2 335.3L780.6 337.5L780.6 337.7L784.7 344.4L787.8 342.3L788.5 335.6zM802.8 334.7L801.2 334.2L796.5 336.6L797.2 341.7L804.2 341.9L804.3 341.9zM824.4 339.4L830.5 339.9L830.7 335.5L830.0 334.0L824.5 332.8L822.8 337.1zM601.9 343.7L594.4 339.6L592.9 350.2L593.9 350.3L601.7 347.3zM646.8 345.9L647.7 340.8L647.5 340.3L640.9 341.0L642.4 346.5L645.3 346.8zM653.8 343.2L653.6 342.8L647.7 340.8L646.8 345.9L652.1 347.3zM697.4 342.0L698.0 347.4L703.8 346.2L703.9 342.8L697.8 341.6zM762.3 343.1L762.8 346.2L766.0 346.4L767.2 345.7L768.8 342.1L766.7 338.1zM791.0 347.2L796.5 347.3L796.0 343.3L792.8 342.5L790.6 343.2zM311.5 346.4L309.0 349.9L314.6 356.5L323.1 349.8L320.0 343.1zM601.7 347.3L593.9 350.3L599.9 354.6L601.4 354.3L603.2 348.6zM389.4 362.7L410.0 350.5L410.0 348.1L378.6 350.3L378.4 350.4L386.7 362.3L388.0 362.7zM630.4 358.2L631.3 355.0L627.2 351.6L624.3 354.3L627.8 359.2zM760.1 352.7L759.6 353.3L760.1 358.6L763.6 360.8L765.7 354.5zM386.7 362.3L378.4 350.4L377.1 350.4L369.8 363.3L371.3 370.9L378.6 374.0zM599.0 363.9L598.0 367.5L598.2 368.1L601.5 370.2L609.1 365.2L605.3 360.1zM644.0 361.2L643.9 361.3L644.9 364.0L650.4 366.5L652.5 366.1L652.9 361.5L649.4 357.6zM714.4 362.0L717.0 366.5L721.4 365.2L722.3 361.6L721.3 359.8L716.5 359.0zM847.9 364.9L853.1 364.3L853.3 364.1L853.0 361.9L851.4 358.3L847.8 358.8zM555.8 373.7L556.8 364.7L546.7 366.0L545.8 366.9L549.1 374.4L551.4 376.2zM641.7 368.0L642.5 371.9L642.5 372.0L646.5 372.3L650.4 366.5L644.9 364.0L642.0 367.2zM674.8 379.7L674.5 373.2L670.6 372.4L668.3 379.7L673.7 381.3zM779.8 375.5L780.1 380.5L781.4 381.5L786.3 379.4L787.3 378.1L785.1 373.4L783.1 373.0zM804.6 373.4L801.1 378.2L808.2 377.4L808.8 376.5L808.9 375.9zM822.9 377.5L824.6 377.5L826.6 376.4L826.9 374.7L824.0 370.3L820.4 371.8L819.7 374.0zM846.7 379.2L847.1 372.8L843.5 373.6L841.4 375.2L841.7 376.6zM292.9 371.5L287.7 374.4L287.7 380.6L294.6 391.0L301.5 390.4L299.9 382.5L294.3 372.9zM609.9 384.8L611.3 381.7L609.2 378.5L602.2 381.1L602.5 386.0L609.4 385.2zM677.9 386.2L679.7 385.5L680.0 379.1L674.8 379.7L673.7 381.3L673.8 381.9zM725.9 383.9L727.9 383.2L730.3 378.8L727.4 375.6L724.4 382.4L724.7 382.9zM743.3 381.2L740.1 377.5L734.6 380.3L734.6 383.9L735.5 385.3L741.7 385.6zM757.8 377.1L754.5 378.1L753.3 379.3L753.0 385.2L753.1 385.3L753.2 385.4L760.1 384.4L759.4 380.1zM634.0 391.6L640.8 393.7L643.3 390.7L641.4 387.8L637.7 385.5L635.5 388.0zM711.8 386.1L711.2 391.5L714.4 393.7L718.2 389.4L717.4 387.7L715.3 385.5zM798.3 388.2L804.5 393.2L805.3 392.0L805.0 384.2L799.8 382.8L799.1 383.7zM603.8 391.8L603.3 397.7L609.6 398.0L608.4 392.0zM630.4 393.4L628.2 396.7L629.2 398.4L635.1 400.7L636.1 399.4L633.9 391.6L632.5 391.8zM667.3 389.3L662.4 393.0L668.8 395.8L671.6 395.5L672.1 393.8zM747.7 392.6L746.1 394.2L747.7 398.9L752.4 399.1L754.2 395.3L753.0 392.4zM760.4 396.3L760.9 397.0L766.7 397.6L768.2 391.3L767.1 390.7L762.2 390.9zM795.7 390.1L792.0 390.1L791.2 390.5L792.0 396.1L794.3 397.2L797.5 396.4zM617.6 401.0L621.6 403.6L624.7 396.6L621.3 393.8L617.3 397.1zM740.5 400.4L741.5 405.2L741.6 405.4L742.4 405.5L744.9 404.6L747.1 399.5L741.9 398.1zM836.6 401.0L832.1 397.9L827.2 402.8L828.2 403.4L834.5 403.6L836.5 401.7zM845.1 402.3L846.9 402.1L849.5 397.1L842.7 395.9L841.6 397.8zM873.6 404.3L864.0 398.5L864.0 402.8L865.7 407.5zM600.4 401.0L599.7 401.2L602.2 409.6L608.4 410.4L608.8 409.9L608.2 405.3zM620.4 408.2L622.2 410.8L625.3 411.8L627.9 409.5L628.3 405.1L627.8 404.5L621.8 404.1zM634.4 405.4L635.4 409.4L638.5 410.7L641.0 409.0L643.3 404.3L635.4 403.4zM735.6 409.1L733.1 406.1L731.2 405.8L729.0 407.5L728.8 410.5L730.6 411.7zM766.2 408.9L766.3 409.9L769.3 410.1L774.2 408.9L774.5 403.0L772.3 400.3zM559.5 410.5L562.3 417.6L568.7 413.3L569.4 409.3L562.9 408.4zM666.6 416.3L667.3 419.1L667.7 419.3L672.2 418.8L676.4 414.9L675.6 411.8L674.4 411.1zM735.5 416.4L737.9 416.0L738.1 415.8L738.0 410.2L735.6 409.1L730.6 411.7L734.0 415.9zM750.6 411.6L745.9 413.4L744.5 415.4L746.3 418.6L752.0 418.3L753.4 414.0L752.1 412.0zM735.3 425.3L738.6 425.1L739.8 423.3L737.9 416.0L735.5 416.4L732.8 422.8zM546.4 422.4L545.9 419.6L534.6 421.1L538.6 435.0L542.0 435.0zM569.4 423.0L568.3 435.0L575.2 435.0L576.0 426.3L570.7 422.5zM765.1 434.0L756.5 422.6L754.3 423.0L754.2 423.2L749.7 435.0L765.3 435.0z"/>
<path fill="#df5543" stroke="#fff" stroke-opacity="0.22" stroke-width="0.5" d="M694.9 208.6L695.8 210.3L701.2 210.9L703.0 207.8L702.9 205.9L700.3 203.1L696.3 205.3zM649.9 220.5L652.6 219.5L652.7 219.4L652.7 219.3L651.9 217.3L646.2 212.1L643.3 216.7L647.0 219.9zM796.3 238.0L790.7 239.6L788.3 241.2L790.4 245.5L795.9 246.8L798.0 244.2L798.0 242.4zM754.4 258.9L761.5 259.2L761.6 259.1L760.6 253.2L753.3 254.6zM676.9 272.0L681.2 264.5L680.6 263.7L671.9 266.7L671.4 267.3L672.6 270.6zM623.2 273.1L617.3 272.3L615.1 277.7L621.0 280.4L623.0 277.0L623.9 274.1zM681.7 281.9L682.4 280.3L678.5 274.3L675.6 277.8L676.6 284.6L677.2 284.8zM373.1 282.6L373.0 282.8L374.2 287.8L392.0 297.9L395.8 295.1L394.7 289.2L389.1 286.0zM361.4 298.3L373.1 295.3L374.2 287.8L373.0 282.8L358.8 285.0L358.2 292.3zM767.8 292.2L767.3 292.9L767.2 296.4L768.0 297.4L770.9 298.4L775.0 294.9L774.1 293.2L773.2 292.5zM645.7 297.6L645.6 302.9L653.3 302.5L653.1 297.3L651.8 296.4L646.5 296.3zM762.0 303.5L766.4 301.8L768.0 297.4L767.2 296.4L761.9 298.0zM546.5 301.1L535.6 302.2L537.8 308.0L542.0 309.7L544.4 307.7zM640.3 302.5L635.7 303.7L633.8 306.6L634.7 309.1L638.7 310.2L640.0 309.7L643.8 303.9zM657.0 310.0L653.7 308.3L651.9 309.7L653.6 316.2L657.2 314.3zM734.4 307.4L731.4 310.4L732.2 313.9L738.6 314.4L739.7 310.8zM739.7 310.8L738.6 314.4L738.8 315.2L745.9 317.4L746.1 317.2L745.9 310.9L740.8 310.2zM774.4 315.8L774.9 315.5L778.1 310.0L770.1 309.5L774.3 315.8zM579.4 310.2L578.4 310.1L576.0 310.9L572.8 317.2L574.0 319.6L584.4 321.8L585.1 320.7L583.4 312.1zM732.1 322.0L732.6 320.8L730.4 317.1L725.0 319.9L729.0 324.4zM765.1 322.8L764.0 317.3L758.7 314.3L756.1 316.2L760.9 323.2L764.8 323.1zM801.3 320.5L800.6 318.9L799.6 318.5L795.7 322.0L797.7 326.6zM859.9 322.0L862.7 324.4L869.1 324.0L870.3 322.2L866.0 316.6L862.7 317.2zM409.8 339.7L416.4 323.7L407.8 316.3L394.2 316.2L391.6 321.4L391.3 326.8zM637.1 322.8L637.0 322.3L634.1 321.9L628.6 325.4L629.2 329.0L634.1 330.6zM652.7 321.1L645.4 324.5L644.8 328.3L645.0 328.4L652.8 330.2L653.4 329.6L653.4 321.8L653.1 321.4zM685.4 325.1L684.7 326.1L684.9 326.6L690.3 329.9L692.3 326.3L691.0 323.7L690.1 323.1zM842.0 323.8L836.3 324.4L835.0 328.6L837.6 331.1L840.8 330.8L843.5 328.7zM322.3 338.0L328.2 325.8L328.0 319.1L325.5 316.8L310.8 315.0L305.2 330.9L321.8 338.4zM624.1 336.5L626.4 331.4L621.8 329.6L618.6 335.3zM685.0 333.5L684.9 326.6L684.7 326.1L680.6 326.5L677.9 330.8L679.5 334.0zM722.6 326.8L716.5 327.7L715.8 331.2L722.2 334.3L724.6 332.8zM604.7 341.3L603.8 334.8L601.9 333.1L593.9 338.3L594.4 339.6L601.9 343.7zM810.7 341.3L810.5 347.7L811.4 348.5L816.0 348.5L816.9 342.6L815.6 340.9L811.1 341.0zM772.3 353.4L772.7 349.1L772.5 348.4L767.2 345.7L766.0 346.4L768.0 354.0L769.8 354.4zM789.7 348.4L789.4 354.4L789.6 354.6L792.9 354.0L797.5 350.1L797.7 349.2L796.5 347.3L791.0 347.2zM716.5 359.0L721.3 359.8L722.3 355.8L717.3 354.8zM746.9 357.8L746.6 354.2L742.2 352.9L739.6 359.3L741.0 361.0zM644.9 364.0L643.9 361.3L638.7 359.5L636.6 361.7L642.0 367.2zM703.1 362.3L702.6 364.9L704.5 366.6L709.5 365.7L711.4 361.0L709.4 359.6zM717.0 366.5L714.4 362.0L711.4 361.0L709.5 365.7L711.3 369.1L716.6 367.6zM785.3 367.1L786.0 365.4L781.3 362.2L778.6 366.9L780.3 368.1zM598.0 367.5L586.1 362.2L584.3 363.2L589.0 372.6L593.2 373.1L598.2 368.1zM611.0 365.5L609.1 373.3L609.6 373.7L612.8 373.5L616.5 370.1L616.5 370.0L613.3 364.6zM641.7 368.0L634.3 367.3L634.4 371.3L642.5 371.9zM678.8 368.8L678.8 368.7L674.6 365.5L669.3 371.3L670.6 372.4L674.5 373.2L678.5 371.3zM716.3 370.3L716.8 368.4L716.6 367.6L711.3 369.1L707.8 372.0L707.6 372.8L709.9 376.4zM725.7 366.9L722.9 373.8L727.3 375.4L728.0 374.8L729.5 366.4zM734.5 367.2L729.9 366.2L729.5 366.4L728.0 374.8L734.0 374.1L735.7 372.2L734.7 367.4zM674.5 373.2L674.8 379.7L680.0 379.1L682.3 377.1L680.1 372.7L678.5 371.3zM727.9 383.2L734.6 383.9L734.6 380.3L733.6 379.1L730.3 378.8zM767.8 379.0L767.3 381.6L773.2 385.7L773.8 385.4L776.3 380.9L771.9 376.6zM792.1 383.9L791.2 378.1L787.3 378.1L786.3 379.4L788.1 384.4zM617.3 387.3L617.0 388.0L617.0 388.9L621.1 392.6L624.6 389.2L625.3 386.7L623.8 384.1zM648.6 385.2L646.1 390.6L648.2 392.7L652.4 393.9L654.7 390.3L654.5 385.9L652.6 384.8zM705.8 391.7L706.2 386.4L704.8 385.3L700.3 387.4L699.6 389.4L702.9 394.4zM746.1 394.2L747.7 392.6L745.6 387.5L742.0 386.0L740.8 393.3L741.8 394.2zM785.4 388.5L781.8 386.2L779.5 387.4L778.4 389.9L780.5 394.1L784.8 393.3L786.2 390.2zM353.5 384.7L356.1 393.3L365.8 400.4L373.0 393.0L371.8 389.1L357.8 380.5zM556.2 391.7L549.4 388.3L544.9 392.4L545.4 394.9L554.6 399.6L555.1 399.0zM679.0 400.2L681.4 398.0L676.1 391.1L675.8 390.9L675.5 391.0L672.1 393.8L671.6 395.5L672.6 398.9zM692.0 399.2L691.3 403.2L696.4 407.1L698.8 407.1L701.9 403.4L692.3 399.1zM736.5 404.0L734.0 399.0L731.3 399.2L731.2 405.8L733.1 406.1zM772.3 400.1L768.2 399.4L765.0 403.9L766.2 408.9L772.3 400.3zM799.3 397.2L796.5 404.3L798.5 406.0L803.5 403.0L803.4 396.7zM859.2 410.0L861.3 408.7L860.0 405.5L856.0 402.1L853.5 405.8L853.7 407.3zM590.0 420.9L593.8 420.8L595.5 417.9L593.5 413.2L587.5 412.5L587.0 414.2zM614.3 410.1L615.8 416.7L619.7 415.8L622.2 410.8L620.4 408.2L615.5 409.1zM651.7 413.3L646.5 410.8L645.3 411.3L643.2 416.1L644.0 417.3L645.4 418.0L652.0 416.0zM833.8 413.2L833.2 411.6L830.2 411.1L827.4 412.0L827.3 416.8L830.3 421.3zM653.9 420.9L654.5 421.8L659.3 423.4L662.3 422.7L659.3 415.8L653.5 417.4zM714.2 416.8L712.4 418.0L712.4 422.2L716.1 425.8L718.8 421.3L715.4 416.8zM772.8 420.6L773.4 422.1L779.6 424.2L782.7 423.3L777.7 415.9L772.9 419.4L772.8 419.5zM826.5 423.5L830.2 422.9L830.4 422.7L830.3 421.3L827.3 416.8L820.9 418.0L821.9 420.5zM560.8 421.0L560.6 421.0L552.3 425.5L554.6 435.0L560.4 435.0zM569.4 423.0L561.6 420.3L560.8 421.0L560.4 435.0L568.3 435.0zM598.2 435.0L609.1 435.0L609.7 425.0L607.7 423.2L603.2 423.5L598.9 428.2zM616.1 422.1L614.7 424.3L617.8 435.0L623.4 435.0L623.5 434.6L619.1 422.6zM641.0 424.1L637.8 422.3L634.7 422.2L634.4 422.6L636.4 435.0L644.1 435.0zM695.4 425.3L698.9 433.3L704.2 423.1L703.7 422.1L698.6 422.7z"/>
<path fill="#dc4e3e" stroke="#fff" stroke-opacity="0.22" stroke-width="0.5" d="M335.3 138.8L332.7 139.5L316.2 151.2L316.0 153.2L317.7 157.3L335.5 157.5zM717.4 185.4L717.8 188.8L719.2 190.2L721.6 189.4L724.9 184.0L723.4 181.9zM641.6 226.1L647.3 228.1L649.9 220.5L647.0 219.9L641.6 225.7zM339.8 271.5L354.2 276.1L356.0 271.4L346.1 256.7L344.4 256.7zM331.6 297.6L328.1 295.0L306.3 300.5L309.7 313.9L310.8 315.0L325.5 316.8zM717.1 296.7L711.5 297.9L710.7 302.3L711.7 304.6L713.9 305.1L717.2 302.0L718.0 297.0zM733.9 303.3L728.5 302.8L726.4 305.4L726.4 307.8L727.7 309.3L731.4 310.4L734.4 307.4L734.2 303.8zM631.7 313.9L639.2 318.2L639.8 317.0L638.7 310.2L634.7 309.1L631.9 313.2zM672.7 328.8L672.0 323.4L671.7 323.1L665.1 323.3L665.8 330.0L666.8 330.8zM587.0 332.2L583.7 327.3L577.1 328.9L573.7 335.1L575.0 336.5L587.2 333.2zM658.8 337.1L660.4 336.2L660.1 330.1L659.6 329.7L653.4 329.6L652.8 330.2L652.4 334.5L654.7 336.7zM322.3 338.0L343.5 348.4L348.0 346.9L328.2 325.8zM652.4 334.5L648.2 336.6L647.5 340.3L647.7 340.8L653.6 342.8L654.7 336.7zM670.3 343.3L674.0 339.8L674.1 338.6L671.3 336.6L666.5 336.3L665.7 337.2L665.8 339.3zM716.6 339.6L719.1 341.2L721.0 340.7L722.2 334.3L715.8 331.2L714.7 332.7zM558.6 343.2L558.7 345.9L560.9 347.8L570.9 345.9L566.5 335.7L564.0 334.5L563.2 335.4zM570.9 345.9L560.9 347.8L561.8 351.9L569.5 355.2L573.1 351.9L572.4 346.6zM609.1 354.0L611.6 355.2L615.8 354.0L615.7 348.1L615.0 347.7L609.0 350.9zM634.1 346.6L633.9 354.2L638.1 355.5L640.2 353.1L639.9 348.8L634.3 346.6zM606.6 356.7L606.2 358.6L614.1 362.7L615.5 361.2L611.6 355.2L609.1 354.0zM649.5 353.9L647.2 353.1L644.5 353.8L644.0 361.2L649.4 357.6zM678.9 355.7L672.1 355.4L672.1 359.1L673.7 361.3zM673.8 361.6L680.4 361.7L682.6 359.5L679.8 355.4L678.9 355.7L673.7 361.3zM682.6 352.2L679.8 355.0L679.8 355.4L682.6 359.5L684.9 360.0L687.7 358.9L687.9 354.6zM742.2 352.9L741.9 352.6L736.5 352.5L733.9 356.5L735.9 358.7L739.6 359.3zM768.0 354.0L765.7 354.5L763.6 360.8L764.6 363.8L769.6 359.1L769.8 354.4zM578.8 359.5L568.8 361.3L568.3 362.1L573.2 367.8L579.5 367.0L581.9 363.5zM691.6 360.0L687.7 358.9L684.9 360.0L685.6 366.4L685.8 366.5L689.5 366.2zM691.5 368.0L695.8 366.8L692.6 360.0L691.6 360.0L689.5 366.2zM739.6 359.3L735.9 358.7L734.5 367.2L734.7 367.4L741.2 365.4L741.0 361.0zM880.0 367.4L880.0 364.9L875.0 361.1L867.0 362.8L866.6 364.8L867.7 366.9zM371.3 370.9L369.8 363.3L352.2 360.6L351.5 364.8L357.8 380.2zM581.9 363.5L579.5 367.0L580.6 371.7L584.9 374.4L589.0 372.6L584.3 363.2zM625.0 370.6L626.1 369.9L627.9 365.9L626.0 363.8L621.1 364.5L620.4 367.0zM755.4 366.2L756.2 371.6L759.7 373.4L761.7 372.7L762.2 365.8L760.4 365.3zM609.6 373.7L609.1 373.3L602.7 371.5L602.0 380.6L602.2 381.1L609.2 378.5zM620.8 378.6L621.1 373.9L616.5 370.1L612.8 373.5L617.2 379.5zM626.1 369.9L625.0 370.6L624.5 371.6L628.8 378.8L631.1 378.7L631.8 378.3L633.0 376.4L633.0 374.7zM707.6 372.8L702.5 374.2L699.9 378.4L700.8 379.6L703.7 381.4L709.4 377.7L710.0 376.7L709.9 376.4zM716.3 378.4L717.4 379.2L718.8 379.0L722.5 373.9L716.8 368.4L716.3 370.3zM642.7 380.1L637.7 384.8L637.7 385.5L641.4 387.8L646.1 383.0L644.7 380.6zM601.9 386.8L595.6 386.3L592.5 395.7L593.3 396.6L602.1 388.2zM612.8 392.1L617.0 388.9L617.0 388.0L609.9 384.8L609.4 385.2L610.9 391.3zM633.9 391.6L634.0 391.6L635.5 388.0L630.5 384.6L628.5 386.8L632.5 391.8zM691.9 386.3L685.5 386.3L684.9 390.5L690.8 393.7L692.9 388.9zM733.3 389.5L726.1 386.0L724.2 390.5L730.4 392.7L733.2 390.2zM795.7 390.1L798.3 388.2L799.1 383.7L792.1 383.9L792.0 390.1zM617.3 397.1L621.3 393.8L621.1 392.6L617.0 388.9L612.8 392.1L613.1 395.6zM636.1 399.4L640.8 397.8L641.2 396.7L640.8 393.7L634.0 391.6L633.9 391.6zM690.8 393.7L684.9 390.5L684.1 391.7L683.8 396.9L691.2 398.4zM741.9 398.1L747.1 399.5L747.7 398.9L746.1 394.2L741.8 394.2zM611.6 402.1L613.8 402.7L617.6 401.0L617.3 397.1L613.1 395.6L610.3 398.2zM641.2 396.7L640.8 397.8L644.0 403.8L646.8 403.9L646.9 403.8L646.5 397.8L645.8 396.7zM586.1 404.9L578.6 403.3L578.3 403.6L576.7 410.0L577.8 411.5L586.2 408.9L586.9 405.6zM611.6 402.1L608.2 405.3L608.8 409.9L614.3 410.1L615.5 409.1L613.8 402.7zM705.3 410.7L707.8 413.1L711.6 410.7L710.9 405.0L708.6 404.3L707.2 404.7zM717.5 409.9L717.6 405.3L714.4 404.1L710.9 405.0L711.6 410.7L712.9 411.6zM783.4 409.8L784.8 412.0L790.4 407.7L790.3 404.7L786.8 402.5L783.3 405.9zM824.6 411.3L827.4 412.0L830.2 411.1L828.2 403.4L827.2 402.8L825.4 402.3L824.7 402.3L822.1 404.3zM665.0 409.3L659.9 410.9L659.7 415.5L665.7 415.5L665.5 409.8zM577.5 416.7L573.9 417.8L570.7 422.5L576.0 426.3L581.6 422.9L580.0 418.6zM759.4 419.9L765.3 424.6L765.6 424.2L766.2 417.3L765.7 416.8L759.6 419.4zM684.8 425.2L684.8 425.2L679.5 423.1L675.0 435.0L684.8 435.0zM707.2 424.7L711.6 435.0L717.9 435.0L716.1 425.8L712.4 422.2zM718.8 421.3L716.1 425.8L717.9 435.0L719.7 435.0L724.3 424.8L722.0 420.7zM728.8 423.2L731.1 431.9L735.3 425.3L732.8 422.8L728.9 423.1zM745.4 423.2L739.8 423.3L738.6 425.1L742.1 435.0L748.8 435.0zM784.5 423.3L783.9 423.6L782.8 435.0L793.1 435.0L791.1 424.7z"/>
<path fill="#d9473a" stroke="#fff" stroke-opacity="0.22" stroke-width="0.5" d="M607.3 122.7L610.7 118.6L610.1 115.2L603.4 116.9L601.6 119.8L602.2 122.2zM643.0 159.1L638.0 159.6L636.6 166.0L643.7 165.9L644.7 165.1zM613.8 188.9L613.4 183.9L613.4 183.8L611.0 184.2L606.4 191.0L606.7 191.2L613.7 189.0zM618.1 196.0L618.2 196.0L619.2 190.2L613.8 188.9L613.7 189.0L613.9 194.7zM648.0 229.0L648.2 229.1L652.6 227.2L652.6 219.5L649.9 220.5L647.3 228.1zM693.7 251.7L697.6 255.2L701.7 253.4L702.2 249.2L700.1 246.1L696.4 245.8L695.2 247.0zM696.6 298.0L690.9 293.9L689.4 296.8L690.4 302.3L694.6 302.2zM721.5 296.3L722.2 303.9L726.4 305.4L728.5 302.8L726.6 297.7L722.5 295.7zM354.5 317.8L346.9 301.8L339.4 295.1L331.6 297.6L325.5 316.8L328.0 319.1zM564.0 334.5L566.5 335.7L573.7 335.1L577.1 328.9L571.8 325.5L564.4 326.7L563.0 329.5zM722.6 326.8L722.6 326.8L724.6 332.8L726.0 333.2L729.6 328.4L728.3 325.9zM697.9 368.1L697.9 368.1L702.6 364.9L703.1 362.3L702.1 360.9L693.1 359.6L692.6 360.0L695.8 366.8zM722.5 373.9L722.9 373.8L725.7 366.9L721.4 365.2L717.0 366.5L716.6 367.6L716.8 368.4zM570.9 372.8L568.8 373.1L564.1 379.9L564.1 380.0L570.2 381.8L574.6 377.3zM327.6 374.0L331.7 391.6L339.6 390.9L344.3 386.6L337.2 372.1L331.0 370.1L329.7 370.3zM570.8 383.6L570.2 381.8L564.1 380.0L561.6 384.6L561.6 385.3L569.8 388.6zM685.2 386.0L685.3 378.4L682.3 377.1L680.0 379.1L679.7 385.5zM709.4 377.7L710.8 385.7L711.8 386.1L715.3 385.5L717.4 379.2L716.3 378.4L710.0 376.7zM715.3 385.5L717.4 387.7L724.7 382.9L724.4 382.4L718.8 379.0L717.4 379.2zM799.1 383.7L799.8 382.8L799.2 379.0L798.3 377.9L792.8 377.1L791.2 378.1L792.1 383.9L792.1 383.9zM595.6 386.3L590.7 383.3L589.2 383.8L589.0 393.8L592.5 395.7zM773.8 385.4L773.2 385.7L771.8 390.9L773.0 392.0L778.4 389.9L779.5 387.4zM570.0 404.1L578.3 403.6L578.6 403.3L577.9 399.8L574.8 397.2L569.3 399.6L568.9 401.8zM589.0 393.8L584.4 394.4L583.6 396.5L586.1 404.9L586.9 405.6L594.2 402.3L595.2 401.1L593.3 396.6L592.5 395.7zM685.4 404.2L686.8 405.4L688.8 405.5L691.3 403.2L692.0 399.2L691.2 398.4L683.8 396.9L682.6 397.7zM755.7 407.8L761.5 410.7L762.6 410.4L758.8 402.9L755.4 403.9zM685.2 412.9L686.0 415.5L686.1 415.6L688.8 415.8L691.3 411.5L689.0 407.3zM696.4 407.1L694.1 411.4L697.3 415.6L699.8 415.1L701.1 411.8L698.8 407.1zM742.4 405.5L741.6 405.4L738.0 410.2L738.1 415.8L744.5 415.4L745.9 413.4zM769.3 410.1L772.9 419.4L777.7 415.9L777.7 415.8L776.1 410.6L775.3 409.6L774.2 408.9zM580.0 418.6L581.6 422.9L585.3 425.3L590.0 420.9L587.0 414.2zM672.2 418.8L667.7 419.3L670.9 425.9L674.2 423.6zM728.9 423.1L732.8 422.8L735.5 416.4L734.0 415.9L728.1 418.5zM752.0 418.3L746.3 418.6L746.0 422.2L754.2 423.2L754.3 423.0zM670.9 425.9L667.6 434.8L667.6 435.0L675.0 435.0L679.5 423.1L679.4 423.0L674.2 423.6zM783.9 423.6L782.7 423.3L779.6 424.2L772.7 435.0L782.8 435.0z"/>
<path fill="#d14136" stroke="#fff" stroke-opacity="0.22" stroke-width="0.5" d="M374.8 155.6L378.9 145.7L373.0 134.8L364.2 142.5L374.4 155.2zM632.2 214.5L632.8 209.7L627.3 207.4L625.7 210.8L627.4 213.4zM679.2 252.1L682.0 252.3L684.6 249.9L685.1 248.5L682.4 243.8L677.2 249.5L677.6 250.9zM806.7 260.5L809.2 260.3L810.9 257.9L810.5 255.7L807.8 252.2L801.4 253.0L800.7 253.3L802.5 257.2zM626.1 260.0L625.7 259.8L618.7 265.7L622.9 267.8L628.7 265.6zM697.6 285.3L693.0 287.0L692.3 291.7L697.4 291.7L699.3 289.0L698.1 285.8zM390.5 300.4L373.7 297.6L373.6 298.0L384.3 309.6L387.7 308.9zM717.2 302.0L713.9 305.1L716.7 308.4L718.5 309.0L720.6 304.8zM730.4 316.5L732.2 313.9L731.4 310.4L727.7 309.3L726.2 314.2zM810.0 327.7L812.5 329.5L815.9 328.6L817.1 324.8L811.3 322.6zM305.2 330.9L305.0 331.1L311.5 346.4L320.0 343.1L321.8 338.4zM323.4 364.1L329.7 370.3L331.0 370.1L341.1 349.9L327.5 352.8zM350.6 345.1L348.5 346.9L352.2 360.6L369.8 363.3L377.1 350.4L375.1 349.2zM841.2 351.3L838.4 355.0L839.1 358.5L842.5 359.1L844.0 358.0L844.9 352.6zM820.4 371.8L824.0 370.3L826.7 365.5L821.0 364.3L817.1 366.1L817.0 366.2zM652.3 378.6L652.9 378.1L653.1 373.3L647.8 374.2L648.0 377.4zM702.5 374.2L697.9 368.1L697.9 368.1L694.6 374.1L697.4 378.0L699.9 378.4zM589.2 383.8L583.8 382.7L581.6 383.5L580.3 385.6L579.3 389.4L584.4 394.4L589.0 393.8zM699.6 389.4L695.8 390.4L696.9 396.2L701.9 396.2L702.7 395.3L702.9 394.4zM799.3 397.2L803.4 396.7L804.3 395.9L804.5 393.2L798.3 388.2L795.7 390.1L797.5 396.4zM679.3 402.7L679.0 400.2L672.6 398.9L670.7 402.7L672.7 406.7zM554.4 405.6L555.4 408.4L559.5 410.5L562.9 408.4L563.6 403.4L562.6 402.8zM680.1 409.0L681.3 409.1L686.8 405.4L685.4 404.2L679.6 403.2zM741.5 405.2L736.5 404.0L733.1 406.1L735.6 409.1L738.0 410.2L741.6 405.4zM699.8 415.1L704.0 419.2L707.9 416.7L707.8 413.1L705.3 410.7L701.1 411.8zM679.5 423.1L684.8 425.2L686.1 415.6L686.0 415.5L679.1 417.6L679.4 423.0zM691.9 418.9L688.8 415.8L686.1 415.6L684.8 425.2L684.8 425.2L690.6 423.8L691.3 423.4zM765.6 424.2L772.8 420.6L772.8 419.5L766.2 417.3zM684.8 425.2L684.8 435.0L691.5 435.0L690.6 423.8zM707.2 424.7L704.2 423.1L698.9 433.3L699.0 435.0L711.6 435.0zM738.6 425.1L735.3 425.3L731.1 431.9L730.5 435.0L742.1 435.0z"/>
<path fill="#c93b31" stroke="#fff" stroke-opacity="0.22" stroke-width="0.5" d="M658.3 213.4L656.0 209.2L653.7 208.2L653.4 208.5L651.9 217.3L652.7 219.3zM621.7 304.2L627.5 300.7L627.7 298.7L627.3 297.9L621.6 295.8L619.1 297.5zM610.3 324.1L608.7 322.3L600.0 326.2L601.8 329.9L609.2 328.2L609.5 328.1zM373.2 340.1L357.6 321.1L350.6 345.1L375.1 349.2zM780.0 352.3L776.3 355.1L777.0 357.1L781.1 360.4L786.0 353.7L783.5 352.0zM869.3 390.6L878.1 388.0L866.9 384.2L866.1 387.2L866.7 388.9zM719.9 413.8L717.5 409.9L712.9 411.6L714.2 416.8L715.4 416.8zM752.0 418.3L754.3 423.0L756.5 422.6L759.4 419.9L759.6 419.4L758.0 415.2L753.4 414.0z"/>
<path fill="#c1352d" stroke="#fff" stroke-opacity="0.22" stroke-width="0.5" d="M627.4 213.4L625.7 210.8L622.3 211.0L619.9 215.0L625.7 216.3zM658.3 213.4L660.4 214.2L664.2 213.3L664.4 210.0L659.1 207.8L656.0 209.2zM631.6 248.8L632.8 251.3L633.4 251.4L639.0 246.4L636.7 242.5L632.0 242.4zM621.2 291.0L622.1 290.3L623.5 282.9L623.5 282.9L621.2 281.1L616.2 287.0L616.9 289.0zM346.9 301.8L358.2 292.3L358.8 285.0L356.5 283.7L342.1 288.2L339.4 295.1zM743.9 365.9L748.7 360.8L746.9 357.8L741.0 361.0L741.2 365.4L742.4 366.0zM710.0 376.7L716.3 378.4L716.3 370.3L709.9 376.4zM714.5 396.5L714.4 393.7L711.2 391.5L709.0 392.5L710.0 397.1zM722.4 391.7L722.3 397.1L723.8 399.3L729.6 398.2L730.4 392.7L724.2 390.5zM740.8 393.3L737.2 393.9L735.4 398.1L740.5 400.4L741.9 398.1L741.8 394.2zM728.8 410.5L729.0 407.5L722.8 403.1L721.8 404.0L723.1 411.4L727.7 411.3zM719.7 435.0L730.5 435.0L731.1 431.9L728.8 423.2L724.3 424.8z"/>
<path fill="#b92f28" stroke="#fff" stroke-opacity="0.22" stroke-width="0.5" d="M803.2 282.7L803.6 281.3L798.3 276.1L794.5 277.7L794.6 279.5L799.0 283.7L802.2 283.5zM659.6 329.7L660.1 330.1L665.8 330.0L665.1 323.3L663.1 321.9L660.9 323.0zM757.7 326.1L759.5 324.1L753.4 320.1L752.2 322.4L754.6 326.7zM410.0 348.1L410.6 346.4L409.7 340.7L385.5 338.0L378.6 350.3zM722.8 403.1L723.8 399.3L722.3 397.1L715.0 397.1L714.4 404.1L717.6 405.3L721.8 404.0zM804.3 395.9L803.4 396.7L803.5 403.0L806.2 405.3L811.0 403.5L810.8 398.3zM645.3 411.3L641.0 409.0L638.5 410.7L639.6 414.1L643.2 416.1zM720.2 413.9L719.9 413.8L715.4 416.8L718.8 421.3L722.0 420.7L723.3 417.8zM810.5 422.9L806.0 423.2L804.9 435.0L810.8 435.0z"/>
<path fill="#b02924" stroke="#fff" stroke-opacity="0.22" stroke-width="0.5" d="M586.1 362.2L598.0 367.5L599.0 363.9L598.1 361.7L591.5 355.2L587.1 360.0zM613.3 364.6L616.5 370.0L620.4 367.0L621.1 364.5L617.7 360.6L615.5 361.2L614.1 362.7zM676.1 391.1L684.1 391.7L684.9 390.5L685.5 386.3L685.2 386.0L679.7 385.5L677.9 386.2L675.8 390.9zM766.7 397.6L768.2 399.4L772.3 400.1L774.5 395.7L773.0 392.0L771.8 390.9L768.2 391.3z"/>
<path fill="#9e221f" stroke="#fff" stroke-opacity="0.22" stroke-width="0.5" d="M768.2 336.0L766.6 337.8L766.7 338.1L768.8 342.1L773.4 342.7L774.5 335.9zM699.9 378.4L697.4 378.0L693.1 382.2L692.8 384.9L698.0 385.0L700.8 379.6zM695.7 417.2L691.9 418.9L691.3 423.4L695.4 425.3L698.6 422.7z"/>
<path fill="#8d1c1a" stroke="#fff" stroke-opacity="0.22" stroke-width="0.5" d="M358.7 319.1L361.4 298.3L358.2 292.3L346.9 301.8L354.5 317.8L357.8 319.5z"/>
<path fill="#7c1515" stroke="#fff" stroke-opacity="0.22" stroke-width="0.5" d="M409.7 340.7L409.8 339.7L391.3 326.8L384.6 332.9L385.5 338.0zM754.2 395.3L752.4 399.1L753.6 402.7L755.4 403.9L758.8 402.9L760.3 401.7L760.9 397.0L760.4 396.3z"/><polygon fill="#e36a50" points="446,160 456,155 467,165 467,173 446,173"/>
<polygon fill="#fbf1ee" points="332.7,215.9 366,215.9 366,240 394.7,240 394.7,278.7 377.9,280.4 337.7,253.6"/>
<polygon fill="#efa58d" points="366,215.9 394.7,215.9 394.7,240 366,240"/>
<polygon fill="#ec9c84" points="354,252 386,252 386,265 378,265 378,283 366,275 366,265 354,265"/>
<polygon fill="#e05a45" points="337.7,215.9 343.6,215.9 343.6,250.2 337.7,246"/>
<polygon fill="#8c2020" points="376.2,280.4 393.8,280.4 393.8,288.8 389.6,300.5 380.4,293.8"/>
<polygon fill="#cc4434" points="305,262 318,258 338,273 365,292 335,294 340,307 325,295 310,275"/>
<polygon fill="#f2b09a" points="318,258 330,250 345,262 372,286 376,292 365,292 338,273"/>
<polygon fill="#d24b3a" points="345,308 357,317 364,321 389,321 389,330 366,331 355,322"/>
<polygon fill="#a3281f" points="335,293.8 377.9,292.1 393,308.8 388.8,320.6 363.7,320.6 357,317.2 345.3,308.8"/>
<polygon fill="#e6644c" points="393.8,278.7 443.2,278.7 443.2,344 429,344 388.8,329.8 388.8,308.8 393,308.8 393.8,288.8"/>
<polygon fill="#c83c2e" points="390,320 429,322 429,344 388.8,329.8"/>
<polygon fill="#7b1d1d" points="403,314.7 424,314.7 424,332.3 411,332.3 411,324 403,324"/>
<polygon fill="#fbf1ee" points="394.7,228 410.5,228 410.5,242 424,242 424,260 443,260 443,278.7 394.7,278.7"/>
<polygon fill="#f3b49c" points="395.5,215 424,215 424,228 395.5,228"/>
<polygon fill="#c63a2e" points="410.5,225 418,225 424,242 413,242"/>
<polygon fill="#efa890" points="424,242 443,242 443,260 424,260"/>
<g fill="none" stroke="#8c96a0" stroke-width="0.8" stroke-opacity="0.75">
<polyline points="296.5,156.6 304.3,157.3 313.2,165.7 325.9,164.3 340.6,161.5 346.5,160.1 366.1,160.1"/>
<polyline points="294.5,214.7 423.4,214.7"/>
<polyline points="335.7,214.7 335.7,253.3 388.6,302.4"/>
<polyline points="394.0,214.7 394.0,289.2 388.6,302.4 392.5,310.8 387.6,321.4 387.4,329.3"/>
<polyline points="394.0,278.2 502.3,278.2"/>
<polyline points="394.0,227.7 511.6,227.7"/>
<polyline points="443.0,227.7 443.0,345.4"/>
<polyline points="423.4,174.1 423.4,227.7"/>
<polyline points="423.4,174.1 492.0,174.1"/>
<polyline points="492.0,116.6 492.0,227.7"/>
<polyline points="492.0,161.0 565.4,161.0"/>
<polyline points="492.0,201.4 546.4,201.4 566.0,208.0"/>
<polyline points="511.6,240.6 577.8,240.6"/>
<polyline points="511.6,227.7 511.6,278.2"/>
<polyline points="511.6,278.2 584.6,278.2"/>
<polyline points="502.3,284.3 531.7,284.3 531.7,308.4 539.5,312.0 551.3,315.5 565.0,317.9 577.8,315.5 590.1,319.6"/>
<polyline points="501.8,284.3 501.8,337.7 467.0,337.7"/>
<polyline points="559.1,116.6 563.1,138.7 565.4,161.0 566.5,169.9 566.5,194.6"/>
<polyline points="566.5,194.6 617.9,194.6"/>
<polyline points="572.9,232.9 616.0,232.9"/>
<polyline points="584.6,284.3 628.7,284.3"/>
<polyline points="590.1,326.1 617.9,326.1"/>
<polyline points="635.6,283.1 711.0,283.1"/>
<polyline points="626.8,302.4 697.3,302.4"/>
<polyline points="648.3,302.4 645.4,357.2"/>
<polyline points="672.8,302.4 678.7,337.7 678.7,349.2"/>
<polyline points="653.2,349.2 678.7,349.2 679.7,352.6 708.1,352.6 713.5,352.6"/>
<polyline points="623.8,208.0 651.3,208.0"/>
<polyline points="680.7,218.6 680.7,252.1"/>
<polyline points="654.2,218.6 654.2,265.8"/>
<polyline points="654.2,218.6 693.9,218.6"/>
<polyline points="722.8,214.7 773.8,214.7"/>
<polyline points="722.8,244.2 768.9,244.2"/>
<polyline points="722.6,210.7 722.6,232.9"/>
<polyline points="691.4,283.7 767.9,283.7"/>
<polyline points="578.7,143.0 597.4,174.1 612.1,187.8 617.9,194.6 627.7,214.7 616.0,232.9 628.7,255.8 638.0,278.2 632.6,290.4 628.7,302.4 619.9,314.3 617.9,326.1 620.9,334.2 614.0,349.2"/>
<polyline points="638.0,278.2 649.3,268.3 656.2,267.1 668.9,265.8 670.9,262.1 683.6,252.1 695.4,258.4 702.2,260.9 712.0,249.5 722.8,232.9"/>
<polyline points="572.9,232.9 570.9,223.8 566.0,208.0"/>
<polyline points="590.1,319.6 590.1,338.9 592.0,364.0"/>
<polyline points="584.6,284.3 585.6,319.0"/>
<polyline points="584.6,232.9 584.6,278.2"/>
<polyline points="697.3,302.4 718.9,337.7"/>
<polyline points="697.3,300.0 717.9,300.0 719.9,304.8 741.9,316.1"/>
<polyline points="711.0,283.1 685.6,302.4"/>
<polyline points="702.2,260.9 708.1,272.0 691.4,283.1"/>
<polyline points="709.1,274.5 725.7,265.8 749.3,249.5"/>
<polyline points="732.6,244.5 752.2,250.8 764.0,265.8"/>
<polyline points="768.9,244.5 776.2,260.2"/>
<polyline points="779.6,223.2 778.7,238.1 771.8,245.7"/>
<polyline points="779.6,223.2 787.5,227.7"/>
<polyline points="814.9,169.9 818.8,200.0"/>
<polyline points="811.0,174.1 801.2,205.4"/>
<polyline points="793.8,205.0 814.9,205.0"/>
<polyline points="791.4,214.7 812.0,214.7 808.1,223.8"/>
<polyline points="793.4,174.1 790.4,227.7"/>
<polyline points="607.2,150.2 601.3,164.3 602.3,176.9 617.9,194.6"/>
<polyline points="625.8,151.6 648.3,161.5 653.2,172.7"/>
<polyline points="374.4,116.6 377.8,140.1 389.6,160.1 406.3,181.0 423.4,181.0"/>
<polyline points="366.1,160.1 365.1,187.8 364.8,214.7"/>
<polyline points="364.7,116.6 364.7,154.5"/>
<polyline points="559.1,116.6 560.1,122.5"/>
</g>
<path d="M717,295 L721.5,296 L723,301 L719,302.5 L715,300.5 Z" fill="#000"/>
</g></svg></div>

<div style="position:absolute;left:8px;top:52px;width:23px;height:45px;background:#fff;border-radius:4px;box-shadow:0 0 0 1px rgba(0,0,0,0.3)">
<div style="position:absolute;left:0;top:22px;width:23px;height:1px;background:#ddd"></div>
<svg width="23" height="45" style="position:absolute;left:0;top:0"><path d="M7.5,12.8 h9 M12,8.3 v9" stroke="#111" stroke-width="2"/><path d="M8,34.7 h8" stroke="#111" stroke-width="2.2"/></svg>
</div>
<div style="position:absolute;left:854px;top:395px;width:282px;height:76px;background:#bcbcbc;border-radius:5px">
<svg width="282" height="76" style="position:absolute;left:0;top:0">
<defs><linearGradient id="lg" x1="0" x2="1" y1="0" y2="0"><stop offset="0" stop-color="#f7efec"/><stop offset="0.33" stop-color="#d0a79c"/><stop offset="0.66" stop-color="#a4625b"/><stop offset="1" stop-color="#6e1c1e"/></linearGradient></defs>
<text x="12.8" y="13.5" font-size="9" fill="#808080" font-family="Liberation Sans, sans-serif" textLength="102" lengthAdjust="spacingAndGlyphs">7-day Average New Cases</text>
<rect x="12.8" y="26" width="255.7" height="13" fill="url(#lg)"/>
<rect x="12.8" y="43" width="255.7" height="2" fill="#f4f4f4"/>
<rect x="12.3" y="42" width="1.5" height="6" fill="#eee"/><rect x="268" y="42" width="1.5" height="6" fill="#eee"/>
<g font-size="9" fill="#8a8a8a" font-family="Liberation Sans, sans-serif" text-anchor="middle"><text x="13" y="64.5">0</text><text x="98" y="64.5">800</text><text x="183" y="64.5">2k</text><text x="268" y="64.5">2k</text></g>
</svg></div>
<div style="position:absolute;left:1106px;top:479px;width:38px;height:14px;background:#bcbcbc"><span style="position:absolute;left:4px;top:1px;font-size:9.5px;color:#4a80c4">Leaflet</span></div>
<div id="rp"></div>
<div id="bl"></div>
<div id="br"></div>
<div class="ws" style="left:1518px;top:44px;width:13px;height:852px;"></div>
<div class="ws" style="left:1531px;top:0;width:5px;height:896px;"></div>
<div style="position:absolute;left:1534px;top:2px;width:1px;height:894px;background:#bbb;"></div>
<div class="ws" style="left:1131px;top:501px;width:13px;height:395px;"></div>
<div class="ws" style="left:1118px;top:514px;width:13px;height:38px;"></div>
<div class="ws" style="left:1505px;top:514px;width:13px;height:38px;"></div>
<div id="vbar"></div>
<div id="hbar"></div>

<div class="lbl" style="left:1189px;top:63px">Level</div>
<div class="sel" style="top:83px"><span style="font-size:12px">County</span><svg class="chev" width="9" height="6"><path d="M1,1 L4.5,4.5 L8,1" stroke="#333" stroke-width="1.6" fill="none"/></svg></div>
<div class="lbl" style="left:1189px;top:127px">Measures</div>
<div class="sel" style="top:146px;border:1px solid #5b8fd0;box-shadow:0 0 3px 1px rgba(120,160,220,0.55)"><span style="left:13px;top:8px;font-size:11.8px">7-day Average New Cases</span><svg class="chev" width="9" height="6" style="top:10px"><path d="M1,1 L4.5,4.5 L8,1" stroke="#333" stroke-width="1.6" fill="none"/></svg></div>

<div style="position:absolute;left:1189px;top:207px;width:11px;height:11px;background:#3478f6;border-radius:2px"><svg width="11" height="11" style="position:absolute;left:0;top:0"><path d="M2.5,5.8 L4.6,8 L8.6,3" stroke="#fff" stroke-width="1.6" fill="none"/></svg></div>
<div class="ctl" style="left:1240.5px;top:207px">Comparison Mode On</div>
<div style="position:absolute;left:1188.5px;top:230px;width:11px;height:11px;background:#fff;border-radius:50%;box-sizing:border-box;border:2.5px solid #3478f6"></div>
<div class="ctl" style="left:1240px;top:230.5px">Neighbor Selection</div>
<div style="position:absolute;left:1188.5px;top:253.5px;width:11px;height:11px;background:#fff;border-radius:50%"></div>
<div class="ctl" style="left:1240px;top:254px">Manual Selection</div>
<div style="position:absolute;left:1189px;top:285.5px;width:290px;height:6px;background:#3478f6;border-radius:3px"></div>
<div style="position:absolute;left:1468px;top:282px;width:13px;height:13px;background:#3478f6;border-radius:50%"></div>
<div class="lbl" style="left:1189px;top:304px;font-size:16px">Date: 08/01/20</div>


<svg width="1536" height="896" style="position:absolute;left:0;top:0;pointer-events:none">
<g font-family="Liberation Sans, sans-serif" fill="#f5f5f5" font-size="10.6"><text x="17.2" y="525" textLength="118.8" lengthAdjust="spacingAndGlyphs">7-day Average New Cases</text><text x="1178.5" y="525" textLength="118.5" lengthAdjust="spacingAndGlyphs">7-day Average New Cases</text></g>
<text x="58.5" y="748.9" text-anchor="end" class="tk">0</text>
<line x1="62" y1="723.2" x2="1105" y2="723.2" stroke="#505050" stroke-width="1"/>
<text x="58.5" y="727.0" text-anchor="end" class="tk">50</text>
<line x1="62" y1="701.3" x2="1105" y2="701.3" stroke="#505050" stroke-width="1"/>
<text x="58.5" y="705.1" text-anchor="end" class="tk">100</text>
<line x1="62" y1="679.4" x2="1105" y2="679.4" stroke="#505050" stroke-width="1"/>
<text x="58.5" y="683.2" text-anchor="end" class="tk">150</text>
<line x1="62" y1="657.5" x2="1105" y2="657.5" stroke="#505050" stroke-width="1"/>
<text x="58.5" y="661.3" text-anchor="end" class="tk">200</text>
<line x1="62" y1="635.6" x2="1105" y2="635.6" stroke="#505050" stroke-width="1"/>
<text x="58.5" y="639.4" text-anchor="end" class="tk">250</text>
<line x1="62" y1="613.7" x2="1105" y2="613.7" stroke="#505050" stroke-width="1"/>
<text x="58.5" y="617.5" text-anchor="end" class="tk">300</text>
<line x1="62" y1="591.8" x2="1105" y2="591.8" stroke="#505050" stroke-width="1"/>
<text x="58.5" y="595.6" text-anchor="end" class="tk">350</text>
<line x1="62" y1="569.9" x2="1105" y2="569.9" stroke="#505050" stroke-width="1"/>
<text x="58.5" y="573.7" text-anchor="end" class="tk">400</text>
<line x1="62" y1="745.5" x2="1105" y2="745.5" stroke="#666" stroke-width="1"/>
<line x1="61.9" y1="745" x2="61.9" y2="751" stroke="#888" stroke-width="1"/>
<text x="61.9" y="760.5" text-anchor="middle" class="tk">Mar,15</text>
<line x1="61.9" y1="823" x2="61.9" y2="829" stroke="#888" stroke-width="1"/>
<text x="61.9" y="839" text-anchor="middle" class="tk">Mar,15</text>
<line x1="114.5" y1="745" x2="114.5" y2="751" stroke="#888" stroke-width="1"/>
<text x="114.5" y="760.5" text-anchor="middle" class="tk">Mar,22</text>
<line x1="114.5" y1="823" x2="114.5" y2="829" stroke="#888" stroke-width="1"/>
<text x="114.5" y="839" text-anchor="middle" class="tk">Mar,22</text>
<line x1="167.0" y1="745" x2="167.0" y2="751" stroke="#888" stroke-width="1"/>
<text x="167.0" y="760.5" text-anchor="middle" class="tk">Mar,29</text>
<line x1="167.0" y1="823" x2="167.0" y2="829" stroke="#888" stroke-width="1"/>
<text x="167.0" y="839" text-anchor="middle" class="tk">Mar,29</text>
<line x1="219.6" y1="745" x2="219.6" y2="751" stroke="#888" stroke-width="1"/>
<text x="219.6" y="760.5" text-anchor="middle" class="tk">Apr,05</text>
<line x1="219.6" y1="823" x2="219.6" y2="829" stroke="#888" stroke-width="1"/>
<text x="219.6" y="839" text-anchor="middle" class="tk">Apr,05</text>
<line x1="272.2" y1="745" x2="272.2" y2="751" stroke="#888" stroke-width="1"/>
<text x="272.2" y="760.5" text-anchor="middle" class="tk">Apr,12</text>
<line x1="272.2" y1="823" x2="272.2" y2="829" stroke="#888" stroke-width="1"/>
<text x="272.2" y="839" text-anchor="middle" class="tk">Apr,12</text>
<line x1="324.7" y1="745" x2="324.7" y2="751" stroke="#888" stroke-width="1"/>
<text x="324.7" y="760.5" text-anchor="middle" class="tk">Apr,19</text>
<line x1="324.7" y1="823" x2="324.7" y2="829" stroke="#888" stroke-width="1"/>
<text x="324.7" y="839" text-anchor="middle" class="tk">Apr,19</text>
<line x1="377.3" y1="745" x2="377.3" y2="751" stroke="#888" stroke-width="1"/>
<text x="377.3" y="760.5" text-anchor="middle" class="tk">Apr,26</text>
<line x1="377.3" y1="823" x2="377.3" y2="829" stroke="#888" stroke-width="1"/>
<text x="377.3" y="839" text-anchor="middle" class="tk">Apr,26</text>
<line x1="429.9" y1="745" x2="429.9" y2="751" stroke="#888" stroke-width="1"/>
<text x="429.9" y="760.5" text-anchor="middle" class="tk">May,03</text>
<line x1="429.9" y1="823" x2="429.9" y2="829" stroke="#888" stroke-width="1"/>
<text x="429.9" y="839" text-anchor="middle" class="tk">May,03</text>
<line x1="482.5" y1="745" x2="482.5" y2="751" stroke="#888" stroke-width="1"/>
<text x="482.5" y="760.5" text-anchor="middle" class="tk">May,10</text>
<line x1="482.5" y1="823" x2="482.5" y2="829" stroke="#888" stroke-width="1"/>
<text x="482.5" y="839" text-anchor="middle" class="tk">May,10</text>
<line x1="535.0" y1="745" x2="535.0" y2="751" stroke="#888" stroke-width="1"/>
<text x="535.0" y="760.5" text-anchor="middle" class="tk">May,17</text>
<line x1="535.0" y1="823" x2="535.0" y2="829" stroke="#888" stroke-width="1"/>
<text x="535.0" y="839" text-anchor="middle" class="tk">May,17</text>
<line x1="587.6" y1="745" x2="587.6" y2="751" stroke="#888" stroke-width="1"/>
<text x="587.6" y="760.5" text-anchor="middle" class="tk">May,24</text>
<line x1="587.6" y1="823" x2="587.6" y2="829" stroke="#888" stroke-width="1"/>
<text x="587.6" y="839" text-anchor="middle" class="tk">May,24</text>
<line x1="640.2" y1="745" x2="640.2" y2="751" stroke="#888" stroke-width="1"/>
<text x="640.2" y="760.5" text-anchor="middle" class="tk">May,31</text>
<line x1="640.2" y1="823" x2="640.2" y2="829" stroke="#888" stroke-width="1"/>
<text x="640.2" y="839" text-anchor="middle" class="tk">May,31</text>
<line x1="692.7" y1="745" x2="692.7" y2="751" stroke="#888" stroke-width="1"/>
<text x="692.7" y="760.5" text-anchor="middle" class="tk">Jun,07</text>
<line x1="692.7" y1="823" x2="692.7" y2="829" stroke="#888" stroke-width="1"/>
<text x="692.7" y="839" text-anchor="middle" class="tk">Jun,07</text>
<line x1="745.3" y1="745" x2="745.3" y2="751" stroke="#888" stroke-width="1"/>
<text x="745.3" y="760.5" text-anchor="middle" class="tk">Jun,14</text>
<line x1="745.3" y1="823" x2="745.3" y2="829" stroke="#888" stroke-width="1"/>
<text x="745.3" y="839" text-anchor="middle" class="tk">Jun,14</text>
<line x1="797.9" y1="745" x2="797.9" y2="751" stroke="#888" stroke-width="1"/>
<text x="797.9" y="760.5" text-anchor="middle" class="tk">Jun,21</text>
<line x1="797.9" y1="823" x2="797.9" y2="829" stroke="#888" stroke-width="1"/>
<text x="797.9" y="839" text-anchor="middle" class="tk">Jun,21</text>
<line x1="850.4" y1="745" x2="850.4" y2="751" stroke="#888" stroke-width="1"/>
<text x="850.4" y="760.5" text-anchor="middle" class="tk">Jun,28</text>
<line x1="850.4" y1="823" x2="850.4" y2="829" stroke="#888" stroke-width="1"/>
<text x="850.4" y="839" text-anchor="middle" class="tk">Jun,28</text>
<line x1="903.0" y1="745" x2="903.0" y2="751" stroke="#888" stroke-width="1"/>
<text x="903.0" y="760.5" text-anchor="middle" class="tk">Jul,05</text>
<line x1="903.0" y1="823" x2="903.0" y2="829" stroke="#888" stroke-width="1"/>
<text x="903.0" y="839" text-anchor="middle" class="tk">Jul,05</text>
<line x1="955.6" y1="745" x2="955.6" y2="751" stroke="#888" stroke-width="1"/>
<text x="955.6" y="760.5" text-anchor="middle" class="tk">Jul,12</text>
<line x1="955.6" y1="823" x2="955.6" y2="829" stroke="#888" stroke-width="1"/>
<text x="955.6" y="839" text-anchor="middle" class="tk">Jul,12</text>
<line x1="1008.2" y1="745" x2="1008.2" y2="751" stroke="#888" stroke-width="1"/>
<text x="1008.2" y="760.5" text-anchor="middle" class="tk">Jul,19</text>
<line x1="1008.2" y1="823" x2="1008.2" y2="829" stroke="#888" stroke-width="1"/>
<text x="1008.2" y="839" text-anchor="middle" class="tk">Jul,19</text>
<line x1="1060.7" y1="745" x2="1060.7" y2="751" stroke="#888" stroke-width="1"/>
<text x="1060.7" y="760.5" text-anchor="middle" class="tk">Jul,26</text>
<line x1="1060.7" y1="823" x2="1060.7" y2="829" stroke="#888" stroke-width="1"/>
<text x="1060.7" y="839" text-anchor="middle" class="tk">Jul,26</text>
<line x1="1104.5" y1="745" x2="1104.5" y2="751" stroke="#111" stroke-width="1.2"/>
<path d="M61.7,745.1 C64.1,745.1 72.6,746.0 76.0,745.1 C79.5,744.2 79.7,740.7 82.6,739.8 C85.4,739.0 90.1,740.1 93.0,739.8 C95.8,739.6 97.3,739.2 99.5,738.5 C101.6,737.9 103.6,736.6 106.0,735.9 C108.4,735.2 111.2,734.7 113.8,734.1 C116.4,733.6 119.2,733.4 121.6,732.8 C124.0,732.3 125.7,731.0 128.1,730.6 C130.5,730.3 133.6,731.0 135.9,730.6 C138.3,730.3 140.1,729.1 142.4,728.5 C144.8,727.8 147.7,726.9 150.3,726.7 C152.9,726.6 155.5,727.4 158.1,727.6 C160.7,727.8 163.3,728.6 165.9,728.0 C168.5,727.4 171.1,725.0 173.7,724.1 C176.3,723.2 179.1,723.1 181.5,722.8 C183.9,722.4 185.6,721.7 188.0,721.9 C190.4,722.1 193.2,724.1 195.8,724.1 C198.4,724.0 201.0,722.2 203.6,721.4 C206.2,720.7 208.9,720.1 211.5,719.7 C214.0,719.3 216.1,718.5 218.8,719.3 C221.4,720.0 224.0,723.0 227.1,724.1 C230.2,725.2 233.6,725.4 237.5,725.8 C241.4,726.3 247.0,725.9 250.5,726.7 C254.0,727.5 255.9,729.6 258.3,730.6 C260.7,731.7 262.7,732.7 264.8,733.3 C267.0,733.9 269.2,734.8 271.4,734.1 C273.5,733.5 275.5,730.1 277.9,729.3 C280.3,728.5 283.1,729.1 285.7,729.3 C288.3,729.6 291.1,730.5 293.5,730.6 C295.9,730.8 297.6,730.6 300.0,730.2 C302.4,729.8 305.0,728.4 307.8,728.0 C310.6,727.7 314.3,728.6 316.9,728.0 C319.5,727.4 321.1,724.6 323.4,724.5 C325.8,724.4 328.6,727.0 331.2,727.6 C333.9,728.2 336.5,728.3 339.1,728.0 C341.7,727.7 344.3,726.2 346.9,725.8 C349.5,725.5 352.3,725.5 354.7,725.8 C357.1,726.2 358.8,727.7 361.2,728.0 C363.6,728.4 366.4,727.7 369.0,728.0 C371.6,728.3 374.2,729.6 376.8,729.8 C379.4,729.9 382.0,729.0 384.6,728.9 C387.2,728.8 389.9,729.4 392.4,729.3 C395.0,729.3 396.1,728.5 400.0,728.5 C403.9,728.4 410.9,729.5 415.6,728.9 C420.4,728.3 425.0,725.5 428.6,725.0 C432.3,724.4 434.9,726.1 437.8,725.8 C440.6,725.5 442.1,723.8 445.6,723.2 C449.0,722.6 455.1,723.0 458.6,722.3 C462.1,721.7 463.8,719.4 466.4,719.3 C469.0,719.1 471.6,721.6 474.2,721.4 C476.8,721.3 479.4,719.0 482.0,718.4 C484.6,717.8 487.2,717.7 489.8,717.9 C492.4,718.2 494.2,720.6 497.7,719.7 C501.1,718.7 507.2,713.6 510.7,712.2 C514.1,710.9 515.7,711.6 518.5,711.8 C521.3,712.0 525.0,713.3 527.6,713.6 C530.2,713.9 531.7,713.0 534.1,713.6 C536.5,714.1 539.5,718.3 541.9,717.1 C544.3,715.8 546.1,708.2 548.4,706.1 C550.8,704.0 553.6,704.7 556.2,704.4 C558.9,704.1 561.5,705.2 564.1,704.4 C566.7,703.5 569.3,700.3 571.9,699.1 C574.5,697.9 577.2,697.1 579.7,697.4 C582.2,697.7 584.6,701.5 587.0,700.9 C589.4,700.2 591.5,694.8 594.0,693.4 C596.5,692.0 599.4,693.1 601.8,692.5 C604.2,692.0 605.9,691.8 608.3,689.9 C610.7,688.0 613.3,682.9 616.1,681.2 C619.0,679.4 622.0,680.9 625.3,679.4 C628.5,677.9 632.2,674.4 635.7,672.4 C639.1,670.3 643.1,667.9 646.1,667.1 C649.1,666.4 651.3,669.0 653.9,668.0 C656.5,667.1 659.1,661.7 661.7,661.4 C664.3,661.1 666.9,665.6 669.5,666.3 C672.1,666.9 674.7,664.4 677.3,665.4 C679.9,666.3 682.6,671.2 685.2,672.0 C687.8,672.7 690.6,671.4 693.0,669.8 C695.4,668.2 697.1,665.2 699.5,662.3 C701.9,659.4 704.7,654.2 707.3,652.2 C709.9,650.3 712.5,652.0 715.1,650.5 C717.7,649.0 720.3,645.0 722.9,643.5 C725.5,642.0 728.3,642.9 730.7,641.3 C733.1,639.7 734.8,634.4 737.3,633.8 C739.8,633.3 742.5,636.8 745.9,638.2 C749.2,639.7 754.0,642.0 757.3,642.6 C760.7,643.2 763.1,641.6 765.9,641.7 C768.8,641.9 771.9,643.3 774.5,643.5 C777.2,643.6 779.1,642.6 781.7,642.6 C784.3,642.6 787.7,644.9 790.3,643.5 C792.9,642.0 795.1,635.8 797.4,633.8 C799.8,631.9 802.2,631.7 804.6,631.7 C807.0,631.6 809.1,633.1 811.8,633.4 C814.4,633.7 817.7,634.2 820.4,633.4 C823.0,632.6 825.1,630.1 827.5,628.6 C829.9,627.1 832.3,626.5 834.7,624.2 C837.1,621.9 839.5,617.6 841.8,614.6 C844.2,611.6 846.4,607.3 849.0,606.3 C851.6,605.2 855.0,608.7 857.6,608.0 C860.2,607.3 862.1,602.9 864.8,601.9 C867.4,600.9 870.7,601.1 873.4,601.9 C876.0,602.6 878.1,605.8 880.5,606.3 C882.9,606.7 885.3,603.6 887.7,604.5 C890.1,605.4 892.5,608.7 894.8,611.5 C897.2,614.4 899.4,619.8 902.0,621.6 C904.6,623.3 908.0,621.6 910.6,622.0 C913.2,622.5 915.4,625.2 917.8,624.2 C920.1,623.3 922.5,619.4 924.9,616.3 C927.3,613.3 929.5,607.5 932.1,605.8 C934.7,604.1 938.0,607.7 940.7,606.3 C943.3,604.8 945.4,599.5 947.8,597.1 C950.2,594.6 952.6,594.0 955.0,591.4 C957.4,588.7 959.5,581.7 962.2,581.3 C964.8,580.9 967.9,586.7 970.7,588.7 C973.6,590.8 976.0,591.2 979.3,593.6 C982.7,595.9 987.5,599.6 990.8,602.8 C994.1,605.9 996.8,610.9 999.4,612.4 C1002.0,613.8 1003.9,610.7 1006.6,611.5 C1009.2,612.3 1012.5,616.3 1015.1,617.2 C1017.8,618.1 1019.9,616.3 1022.3,616.8 C1024.7,617.3 1027.1,618.7 1029.5,620.3 C1031.9,621.9 1034.0,625.6 1036.6,626.4 C1039.3,627.2 1042.6,625.2 1045.2,625.1 C1047.9,625.0 1050.0,625.2 1052.4,626.0 C1054.8,626.7 1056.7,629.0 1059.5,629.5 C1062.4,629.9 1066.9,627.9 1069.6,628.6 C1072.2,629.2 1073.2,631.1 1075.3,633.4 C1077.5,635.7 1080.1,640.8 1082.5,642.6 C1084.9,644.4 1087.2,643.8 1089.6,644.4 C1092.0,644.9 1094.3,646.2 1096.8,646.1 C1099.3,646.0 1103.5,644.3 1104.8,643.9" fill="none" stroke="#3d6f9e" stroke-width="1.7"/>
<rect x="62" y="823" width="1043" height="1.5" fill="#222"/>
<rect x="583.5" y="779.5" width="521.5" height="44" fill="#4a4a4a" stroke="#eee" stroke-width="1"/>
<path d="M61.7,823.2 C64.1,823.2 72.6,823.4 76.0,823.2 C79.5,823.0 79.7,822.3 82.6,822.1 C85.4,821.9 90.1,822.1 93.0,822.1 C95.8,822.0 97.3,821.9 99.5,821.8 C101.6,821.6 103.6,821.4 106.0,821.2 C108.4,821.1 111.2,821.0 113.8,820.9 C116.4,820.7 119.2,820.7 121.6,820.6 C124.0,820.4 125.7,820.2 128.1,820.1 C130.5,820.0 133.6,820.2 135.9,820.1 C138.3,820.0 140.1,819.8 142.4,819.6 C144.8,819.5 147.7,819.3 150.3,819.3 C152.9,819.2 155.5,819.4 158.1,819.4 C160.7,819.5 163.3,819.7 165.9,819.5 C168.5,819.4 171.1,818.9 173.7,818.7 C176.3,818.5 179.1,818.5 181.5,818.4 C183.9,818.3 185.6,818.2 188.0,818.2 C190.4,818.3 193.2,818.7 195.8,818.7 C198.4,818.7 201.0,818.3 203.6,818.1 C206.2,818.0 208.9,817.8 211.5,817.7 C214.0,817.7 216.1,817.5 218.8,817.7 C221.4,817.8 224.0,818.5 227.1,818.7 C230.2,818.9 233.6,819.0 237.5,819.1 C241.4,819.2 247.0,819.1 250.5,819.3 C254.0,819.4 255.9,819.9 258.3,820.1 C260.7,820.3 262.7,820.5 264.8,820.7 C267.0,820.8 269.2,821.0 271.4,820.9 C273.5,820.7 275.5,820.0 277.9,819.8 C280.3,819.6 283.1,819.8 285.7,819.8 C288.3,819.9 291.1,820.1 293.5,820.1 C295.9,820.1 297.6,820.1 300.0,820.0 C302.4,819.9 305.0,819.6 307.8,819.5 C310.6,819.5 314.3,819.7 316.9,819.5 C319.5,819.4 321.1,818.8 323.4,818.8 C325.8,818.8 328.6,819.3 331.2,819.4 C333.9,819.6 336.5,819.6 339.1,819.5 C341.7,819.5 344.3,819.1 346.9,819.1 C349.5,819.0 352.3,819.0 354.7,819.1 C357.1,819.1 358.8,819.5 361.2,819.5 C363.6,819.6 366.4,819.5 369.0,819.5 C371.6,819.6 374.2,819.9 376.8,819.9 C379.4,819.9 382.0,819.7 384.6,819.7 C387.2,819.7 389.9,819.8 392.4,819.8 C395.0,819.8 396.1,819.6 400.0,819.6 C403.9,819.6 410.9,819.8 415.6,819.7 C420.4,819.6 425.0,819.0 428.6,818.9 C432.3,818.8 434.9,819.1 437.8,819.1 C440.6,819.0 442.1,818.6 445.6,818.5 C449.0,818.4 455.1,818.5 458.6,818.3 C462.1,818.2 463.8,817.7 466.4,817.7 C469.0,817.6 471.6,818.2 474.2,818.1 C476.8,818.1 479.4,817.6 482.0,817.5 C484.6,817.3 487.2,817.3 489.8,817.4 C492.4,817.4 494.2,818.0 497.7,817.7 C501.1,817.5 507.2,816.4 510.7,816.2 C514.1,815.9 515.7,816.0 518.5,816.1 C521.3,816.1 525.0,816.4 527.6,816.4 C530.2,816.5 531.7,816.3 534.1,816.4 C536.5,816.6 539.5,817.5 541.9,817.2 C544.3,816.9 546.1,815.3 548.4,814.8 C550.8,814.4 553.6,814.5 556.2,814.5 C558.9,814.4 561.5,814.6 564.1,814.5 C566.7,814.3 569.3,813.6 571.9,813.3 C574.5,813.1 577.2,812.9 579.7,813.0 C582.2,813.0 584.6,813.8 587.0,813.7 C589.4,813.6 591.5,812.4 594.0,812.1 C596.5,811.8 599.4,812.0 601.8,811.9 C604.2,811.8 605.9,811.8 608.3,811.4 C610.7,810.9 613.3,809.9 616.1,809.5 C619.0,809.1 622.0,809.4 625.3,809.1 C628.5,808.8 632.2,808.0 635.7,807.6 C639.1,807.2 643.1,806.6 646.1,806.5 C649.1,806.3 651.3,806.9 653.9,806.7 C656.5,806.5 659.1,805.3 661.7,805.2 C664.3,805.2 666.9,806.1 669.5,806.3 C672.1,806.4 674.7,805.9 677.3,806.1 C679.9,806.3 682.6,807.3 685.2,807.5 C687.8,807.7 690.6,807.4 693.0,807.0 C695.4,806.7 697.1,806.1 699.5,805.4 C701.9,804.8 704.7,803.7 707.3,803.3 C709.9,802.8 712.5,803.2 715.1,802.9 C717.7,802.6 720.3,801.7 722.9,801.4 C725.5,801.1 728.3,801.3 730.7,800.9 C733.1,800.6 734.8,799.4 737.3,799.3 C739.8,799.2 742.5,800.0 745.9,800.3 C749.2,800.6 754.0,801.1 757.3,801.2 C760.7,801.3 763.1,801.0 765.9,801.0 C768.8,801.0 771.9,801.4 774.5,801.4 C777.2,801.4 779.1,801.2 781.7,801.2 C784.3,801.2 787.7,801.7 790.3,801.4 C792.9,801.1 795.1,799.7 797.4,799.3 C799.8,798.9 802.2,798.9 804.6,798.9 C807.0,798.8 809.1,799.2 811.8,799.2 C814.4,799.3 817.7,799.4 820.4,799.2 C823.0,799.1 825.1,798.5 827.5,798.2 C829.9,797.9 832.3,797.8 834.7,797.3 C837.1,796.8 839.5,795.8 841.8,795.2 C844.2,794.5 846.4,793.6 849.0,793.4 C851.6,793.2 855.0,793.9 857.6,793.8 C860.2,793.6 862.1,792.7 864.8,792.5 C867.4,792.2 870.7,792.3 873.4,792.5 C876.0,792.6 878.1,793.3 880.5,793.4 C882.9,793.5 885.3,792.8 887.7,793.0 C890.1,793.2 892.5,793.9 894.8,794.5 C897.2,795.1 899.4,796.3 902.0,796.7 C904.6,797.1 908.0,796.7 910.6,796.8 C913.2,796.9 915.4,797.5 917.8,797.3 C920.1,797.1 922.5,796.2 924.9,795.6 C927.3,794.9 929.5,793.7 932.1,793.3 C934.7,792.9 938.0,793.7 940.7,793.4 C943.3,793.1 945.4,792.0 947.8,791.4 C950.2,790.9 952.6,790.8 955.0,790.2 C957.4,789.6 959.5,788.1 962.2,788.0 C964.8,788.0 967.9,789.2 970.7,789.6 C973.6,790.1 976.0,790.2 979.3,790.7 C982.7,791.2 987.5,792.0 990.8,792.7 C994.1,793.3 996.8,794.4 999.4,794.7 C1002.0,795.0 1003.9,794.4 1006.6,794.5 C1009.2,794.7 1012.5,795.6 1015.1,795.8 C1017.8,795.9 1019.9,795.5 1022.3,795.7 C1024.7,795.8 1027.1,796.1 1029.5,796.4 C1031.9,796.8 1034.0,797.6 1036.6,797.7 C1039.3,797.9 1042.6,797.5 1045.2,797.4 C1047.9,797.4 1050.0,797.5 1052.4,797.6 C1054.8,797.8 1056.7,798.3 1059.5,798.4 C1062.4,798.5 1066.9,798.1 1069.6,798.2 C1072.2,798.3 1073.2,798.7 1075.3,799.2 C1077.5,799.7 1080.1,800.8 1082.5,801.2 C1084.9,801.6 1087.2,801.5 1089.6,801.6 C1092.0,801.7 1094.3,802.0 1096.8,802.0 C1099.3,801.9 1103.5,801.6 1104.8,801.5" fill="none" stroke="#3d6f9e" stroke-width="1.3"/>
<path d="M583,779 h-2 a4,4 0 0 0 -4,4 v36 a4,4 0 0 0 4,4 h2 z" fill="#1a1a1a" stroke="#111" stroke-width="1"/>
<path d="M1105,779 h2 a4,4 0 0 1 4,4 v36 a4,4 0 0 1 -4,4 h-2 z" fill="#1a1a1a" stroke="#111" stroke-width="1"/>
<rect x="1245.5" y="568" width="206" height="175.5" fill="#3a75ad" stroke="#ddd" stroke-width="1"/>
<line x1="1223" y1="568" x2="1245.5" y2="568" stroke="#ccc" stroke-width="1.2"/>
<line x1="1451.5" y1="568" x2="1474" y2="568" stroke="#ccc" stroke-width="1.2"/>
<line x1="1223" y1="603.4" x2="1245.5" y2="603.4" stroke="#ccc" stroke-width="1.2"/>
<line x1="1451.5" y1="603.4" x2="1474" y2="603.4" stroke="#ccc" stroke-width="1.2"/>
<line x1="1223" y1="638.4" x2="1245.5" y2="638.4" stroke="#ccc" stroke-width="1.2"/>
<line x1="1451.5" y1="638.4" x2="1474" y2="638.4" stroke="#ccc" stroke-width="1.2"/>
<line x1="1223" y1="673" x2="1245.5" y2="673" stroke="#ccc" stroke-width="1.2"/>
<line x1="1451.5" y1="673" x2="1474" y2="673" stroke="#ccc" stroke-width="1.2"/>
<line x1="1223" y1="708.2" x2="1245.5" y2="708.2" stroke="#ccc" stroke-width="1.2"/>
<line x1="1451.5" y1="708.2" x2="1474" y2="708.2" stroke="#ccc" stroke-width="1.2"/>
<line x1="1474.5" y1="567.5" x2="1474.5" y2="746" stroke="#111" stroke-width="1.3"/>
<line x1="1223" y1="567.5" x2="1223" y2="748" stroke="#eee" stroke-width="1.5"/>
<line x1="1218" y1="567.7" x2="1223" y2="567.7" stroke="#eee" stroke-width="1.5"/>
<line x1="1223" y1="743.5" x2="1475" y2="743.5" stroke="#ddd" stroke-width="1.5"/>
<line x1="1474.5" y1="743" x2="1474.5" y2="748" stroke="#eee" stroke-width="1.3"/>
<line x1="1348.5" y1="743" x2="1348.5" y2="748" stroke="#ccc" stroke-width="1"/>
<line x1="1217" y1="743.3" x2="1223" y2="743.3" stroke="#bbb" stroke-width="1"/>
<text x="1215" y="747.5" text-anchor="end" class="tkb">0</text>
<line x1="1217" y1="728.1" x2="1223" y2="728.1" stroke="#bbb" stroke-width="1"/>
<text x="1215" y="732.3" text-anchor="end" class="tkb">20</text>
<line x1="1217" y1="712.9" x2="1223" y2="712.9" stroke="#bbb" stroke-width="1"/>
<text x="1215" y="717.1" text-anchor="end" class="tkb">40</text>
<line x1="1217" y1="697.6" x2="1223" y2="697.6" stroke="#bbb" stroke-width="1"/>
<text x="1215" y="701.8" text-anchor="end" class="tkb">60</text>
<line x1="1217" y1="682.4" x2="1223" y2="682.4" stroke="#bbb" stroke-width="1"/>
<text x="1215" y="686.6" text-anchor="end" class="tkb">80</text>
<line x1="1217" y1="667.2" x2="1223" y2="667.2" stroke="#bbb" stroke-width="1"/>
<text x="1215" y="671.4" text-anchor="end" class="tkb">100</text>
<line x1="1217" y1="652.0" x2="1223" y2="652.0" stroke="#bbb" stroke-width="1"/>
<text x="1215" y="656.2" text-anchor="end" class="tkb">120</text>
<line x1="1217" y1="636.8" x2="1223" y2="636.8" stroke="#bbb" stroke-width="1"/>
<text x="1215" y="641.0" text-anchor="end" class="tkb">140</text>
<line x1="1217" y1="621.5" x2="1223" y2="621.5" stroke="#bbb" stroke-width="1"/>
<text x="1215" y="625.7" text-anchor="end" class="tkb">160</text>
<line x1="1217" y1="606.3" x2="1223" y2="606.3" stroke="#bbb" stroke-width="1"/>
<text x="1215" y="610.5" text-anchor="end" class="tkb">180</text>
<line x1="1217" y1="591.1" x2="1223" y2="591.1" stroke="#bbb" stroke-width="1"/>
<text x="1215" y="595.3" text-anchor="end" class="tkb">200</text>
<line x1="1217" y1="575.9" x2="1223" y2="575.9" stroke="#bbb" stroke-width="1"/>
<text x="1215" y="580.1" text-anchor="end" class="tkb">220</text>
<text x="1351" y="763" text-anchor="end" class="tkb" transform="rotate(-45 1351 763)">Mecklenburg, NC</text>
</svg>
</body></html>
